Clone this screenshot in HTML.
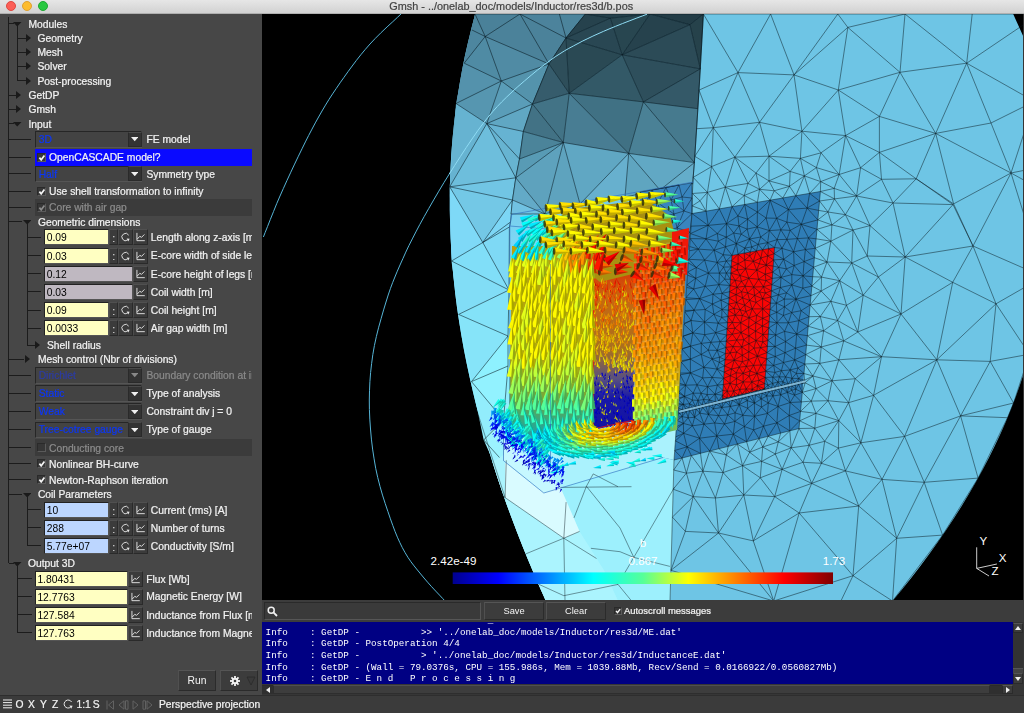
<!DOCTYPE html>
<html lang="en"><head><meta charset="utf-8"><title>Gmsh</title>
<style>
html,body{margin:0;padding:0;}
body{width:1024px;height:713px;overflow:hidden;background:#363636;position:relative;font-family:"Liberation Sans",sans-serif;font-size:10.3px;color:#f0f0f0;}
*{box-sizing:border-box;}
.abs{position:absolute;}
#title{will-change:transform;left:0;top:0;width:1024px;height:14px;background:linear-gradient(#e6e6e6,#d2d2d2);border-bottom:1px solid #b0b0b0;}
#title .t{left:-0.8px;width:1024px;top:0;height:13px;line-height:12.5px;text-align:center;color:#424242;font-size:10.87px;-webkit-text-stroke:0.2px #424242;}
.tl{width:10.2px;height:10.2px;border-radius:50%;top:0.5px;}
#panel{will-change:transform;left:0;top:14px;width:262.4px;height:683px;background:#474747;overflow:hidden;}
#sash{display:none;}
.lbl{white-space:nowrap;height:14px;line-height:14px;color:#f2f2f2;-webkit-text-stroke:0.22px currentColor;}
.ln{background:#1c1c1c;}
.inp{height:16px;border:1px solid #222;border-right-color:#555;border-bottom-color:#555;line-height:15.6px;padding-left:1.4px;color:#000;white-space:nowrap;overflow:hidden;}
.btn{height:16px;background:#3b3b3b;border:1px solid #2a2a2a;border-top-color:#505050;border-left-color:#4c4c4c;}
.clip{overflow:hidden;white-space:nowrap;}
#status{will-change:transform;left:0;top:695px;width:1024px;height:18px;background:#3b3b3b;border-top:1px solid #2e2e2e;}
#msgbar{will-change:transform;left:262.4px;top:600.4px;width:761.6px;height:21.6px;background:#3c3c3c;}
#msg{will-change:transform;left:262.4px;top:622px;width:750.6px;height:62px;background:#000083;overflow:hidden;font-family:"Liberation Mono",monospace;font-size:9.25px;color:#fff;}
#msg div{position:absolute;left:3.6px;white-space:pre;height:11.6px;line-height:11.6px;}
</style></head><body>
<div id="title" class="abs">
<div class="abs tl" style="left:6px;background:#fc5f57;border:0.5px solid #df4840"></div>
<div class="abs tl" style="left:22px;background:#fdbc2e;border:0.5px solid #dea032"></div>
<div class="abs tl" style="left:38px;background:#28c840;border:0.5px solid #1ea932"></div>
<div class="abs t">Gmsh - ../onelab_doc/models/Inductor/res3d/b.pos</div>
</div>
<div id="panel" class="abs">
<div class="abs ln" style="left:8.10px;top:3.00px;width:1px;height:546.00px"></div><div class="abs ln" style="left:9px;top:9.10px;width:5px;height:1px"></div><svg class="abs" style="left:13.45px;top:8.15px" width="8.5" height="4.5" viewBox="0 0 8.5 4.5"><polygon points="0,0 8.5,0 4.25,4.5" fill="#1a1a1a"/></svg><div class="abs lbl" style="left:28.4px;top:3.50px;">Modules</div><div class="abs ln" style="left:17.20px;top:12.00px;width:1px;height:55.00px"></div><div class="abs ln" style="left:17.7px;top:23.50px;width:8.3px;height:1px"></div><svg class="abs" style="left:25.50px;top:20.00px" width="5" height="8" viewBox="0 0 5 8"><polygon points="0,0 5,4.0 0,8" fill="#1a1a1a"/></svg><div class="abs lbl" style="left:37.5px;top:17.90px;">Geometry</div><div class="abs ln" style="left:17.7px;top:37.70px;width:8.3px;height:1px"></div><svg class="abs" style="left:25.50px;top:34.20px" width="5" height="8" viewBox="0 0 5 8"><polygon points="0,0 5,4.0 0,8" fill="#1a1a1a"/></svg><div class="abs lbl" style="left:37.5px;top:32.10px;">Mesh</div><div class="abs ln" style="left:17.7px;top:51.90px;width:8.3px;height:1px"></div><svg class="abs" style="left:25.50px;top:48.40px" width="5" height="8" viewBox="0 0 5 8"><polygon points="0,0 5,4.0 0,8" fill="#1a1a1a"/></svg><div class="abs lbl" style="left:37.5px;top:46.30px;">Solver</div><div class="abs ln" style="left:17.7px;top:66.30px;width:8.3px;height:1px"></div><svg class="abs" style="left:25.50px;top:62.80px" width="5" height="8" viewBox="0 0 5 8"><polygon points="0,0 5,4.0 0,8" fill="#1a1a1a"/></svg><div class="abs lbl" style="left:37.5px;top:60.70px;">Post-processing</div><div class="abs ln" style="left:9px;top:80.50px;width:5px;height:1px"></div><div class="abs ln" style="left:9px;top:80.50px;width:7px;height:1px"></div><svg class="abs" style="left:15.50px;top:77.00px" width="5" height="8" viewBox="0 0 5 8"><polygon points="0,0 5,4.0 0,8" fill="#1a1a1a"/></svg><div class="abs lbl" style="left:28.4px;top:74.90px;">GetDP</div><div class="abs ln" style="left:9px;top:94.70px;width:5px;height:1px"></div><div class="abs ln" style="left:9px;top:94.70px;width:7px;height:1px"></div><svg class="abs" style="left:15.50px;top:91.20px" width="5" height="8" viewBox="0 0 5 8"><polygon points="0,0 5,4.0 0,8" fill="#1a1a1a"/></svg><div class="abs lbl" style="left:28.4px;top:89.10px;">Gmsh</div><div class="abs ln" style="left:9px;top:109.10px;width:5px;height:1px"></div><svg class="abs" style="left:13.45px;top:108.15px" width="8.5" height="4.5" viewBox="0 0 8.5 4.5"><polygon points="0,0 8.5,0 4.25,4.5" fill="#1a1a1a"/></svg><div class="abs lbl" style="left:28.4px;top:103.50px;">Input</div><div class="abs ln" style="left:9px;top:124.70px;width:22px;height:1px"></div><div class="abs" style="left:34.8px;top:117.20px;width:107.5px;height:16.4px;background:#434343;border:1px solid #262626;border-bottom-color:#555;border-right-color:#555"></div><div class="abs lbl" style="left:38.7px;top:119.10px;color:#0c36f6;">3D</div><div class="abs" style="left:127.6px;top:118.00px;width:14px;height:14.8px;background:#333;border:1px solid #2a2a2a;border-top-color:#4a4a4a"></div><svg class="abs" style="left:130.85px;top:123.40px" width="7.5" height="4.2" viewBox="0 0 7.5 4.2"><polygon points="0,0 7.5,0 3.75,4.2" fill="#f0f0f0"/></svg><div class="abs lbl clip" style="left:146.4px;top:119.10px;width:105.6px;">FE model</div><div class="abs ln" style="left:9px;top:142.90px;width:22px;height:1px"></div><div class="abs" style="left:34.8px;top:135.20px;width:217.2px;height:16.4px;background:#0a0aff"></div><div class="abs" style="left:36.8px;top:138.60px;width:9.6px;height:9.6px;background:#363636;border:1px solid #2a2a2a;border-bottom-color:#5a5a5a;border-right-color:#5a5a5a"></div><svg class="abs" style="left:36.8px;top:138.60px" width="9.6" height="9.6" viewBox="0 0 9.6 9.6"><path d="M2.4 4.6L4.2 6.8L7.4 2.6" fill="none" stroke="#f4f4f4" stroke-width="1.7"/></svg><div class="abs lbl" style="left:49px;top:137.30px;">OpenCASCADE model?</div><div class="abs ln" style="left:9px;top:159.10px;width:22px;height:1px"></div><div class="abs" style="left:34.8px;top:151.60px;width:107.5px;height:16.4px;background:#434343;border:1px solid #262626;border-bottom-color:#555;border-right-color:#555"></div><div class="abs lbl" style="left:38.7px;top:153.50px;color:#0c36f6;">Half</div><div class="abs" style="left:127.6px;top:152.40px;width:14px;height:14.8px;background:#333;border:1px solid #2a2a2a;border-top-color:#4a4a4a"></div><svg class="abs" style="left:130.85px;top:157.80px" width="7.5" height="4.2" viewBox="0 0 7.5 4.2"><polygon points="0,0 7.5,0 3.75,4.2" fill="#f0f0f0"/></svg><div class="abs lbl clip" style="left:146.4px;top:153.50px;width:105.6px;">Symmetry type</div><div class="abs ln" style="left:9px;top:176.90px;width:22px;height:1px"></div><div class="abs" style="left:36.8px;top:172.60px;width:9.6px;height:9.6px;background:#363636;border:1px solid #2a2a2a;border-bottom-color:#5a5a5a;border-right-color:#5a5a5a"></div><svg class="abs" style="left:36.8px;top:172.60px" width="9.6" height="9.6" viewBox="0 0 9.6 9.6"><path d="M2.4 4.6L4.2 6.8L7.4 2.6" fill="none" stroke="#f4f4f4" stroke-width="1.7"/></svg><div class="abs lbl" style="left:49px;top:171.30px;">Use shell transformation to infinity</div><div class="abs ln" style="left:9px;top:192.90px;width:22px;height:1px"></div><div class="abs" style="left:34.8px;top:185.20px;width:217.2px;height:16.4px;background:#3b3b3b"></div><div class="abs" style="left:36.8px;top:188.60px;width:9.6px;height:9.6px;background:#363636;border:1px solid #2a2a2a;border-bottom-color:#5a5a5a;border-right-color:#5a5a5a"></div><svg class="abs" style="left:36.8px;top:188.60px" width="9.6" height="9.6" viewBox="0 0 9.6 9.6"><path d="M2.4 4.6L4.2 6.8L7.4 2.6" fill="none" stroke="#8c8c8c" stroke-width="1.7"/></svg><div class="abs lbl" style="left:49px;top:187.30px;color:#8c8c8c;">Core with air gap</div><div class="abs ln" style="left:9px;top:207.30px;width:13px;height:1px"></div><svg class="abs" style="left:22.75px;top:206.35px" width="8.5" height="4.5" viewBox="0 0 8.5 4.5"><polygon points="0,0 8.5,0 4.25,4.5" fill="#1a1a1a"/></svg><div class="abs lbl" style="left:37.9px;top:201.70px;">Geometric dimensions</div><div class="abs ln" style="left:26.50px;top:210.00px;width:1px;height:121.00px"></div><div class="abs ln" style="left:27px;top:222.90px;width:14px;height:1px"></div><div class="abs inp" style="left:44.3px;top:215.40px;width:64.9px;background:#ffffc2;color:#000">0.09</div><div class="abs btn" style="left:109.4px;top:215.40px;width:8.2px"><div class="abs" style="left:0;top:0.8px;width:6.6px;text-align:center;line-height:14px;color:#e4e4e4;font-size:11px">:</div></div><div class="abs btn" style="left:117.8px;top:215.40px;width:14.8px"><svg width="100%" height="100%" viewBox="0 0 14 14"><path d="M9.6 10.2A4 4 0 1 1 10.6 5" fill="none" stroke="#e8e8e8" stroke-width="1"/><polygon points="8.4,8.6 11.6,8.8 10.2,11.8" fill="#e8e8e8"/></svg></div><div class="abs btn" style="left:132.8px;top:215.40px;width:14.8px"><svg width="100%" height="100%" viewBox="0 0 14 14"><path d="M3.2 2.5V11H11.8" fill="none" stroke="#e8e8e8" stroke-width="1"/><path d="M3.6 9.2L6.4 6.2L8.2 7.4L11.4 4.2" fill="none" stroke="#e8e8e8" stroke-width="1"/></svg></div><div class="abs lbl clip" style="left:150.8px;top:217.30px;width:100.79999999999998px;">Length along z-axis [m]</div><div class="abs ln" style="left:27px;top:241.00px;width:14px;height:1px"></div><div class="abs inp" style="left:44.3px;top:233.50px;width:64.9px;background:#ffffc2;color:#000">0.03</div><div class="abs btn" style="left:109.4px;top:233.50px;width:8.2px"><div class="abs" style="left:0;top:0.8px;width:6.6px;text-align:center;line-height:14px;color:#e4e4e4;font-size:11px">:</div></div><div class="abs btn" style="left:117.8px;top:233.50px;width:14.8px"><svg width="100%" height="100%" viewBox="0 0 14 14"><path d="M9.6 10.2A4 4 0 1 1 10.6 5" fill="none" stroke="#e8e8e8" stroke-width="1"/><polygon points="8.4,8.6 11.6,8.8 10.2,11.8" fill="#e8e8e8"/></svg></div><div class="abs btn" style="left:132.8px;top:233.50px;width:14.8px"><svg width="100%" height="100%" viewBox="0 0 14 14"><path d="M3.2 2.5V11H11.8" fill="none" stroke="#e8e8e8" stroke-width="1"/><path d="M3.6 9.2L6.4 6.2L8.2 7.4L11.4 4.2" fill="none" stroke="#e8e8e8" stroke-width="1"/></svg></div><div class="abs lbl clip" style="left:150.8px;top:235.40px;width:100.79999999999998px;">E-core width of side legs [m]</div><div class="abs ln" style="left:27px;top:259.20px;width:14px;height:1px"></div><div class="abs inp" style="left:44.3px;top:251.70px;width:88.6px;background:#bfb8c1;color:#000">0.12</div><div class="abs btn" style="left:132.8px;top:251.70px;width:14.8px"><svg width="100%" height="100%" viewBox="0 0 14 14"><path d="M3.2 2.5V11H11.8" fill="none" stroke="#e8e8e8" stroke-width="1"/><path d="M3.6 9.2L6.4 6.2L8.2 7.4L11.4 4.2" fill="none" stroke="#e8e8e8" stroke-width="1"/></svg></div><div class="abs lbl clip" style="left:150.8px;top:253.60px;width:100.79999999999998px;">E-core height of legs [m]</div><div class="abs ln" style="left:27px;top:277.30px;width:14px;height:1px"></div><div class="abs inp" style="left:44.3px;top:269.80px;width:88.6px;background:#bfb8c1;color:#000">0.03</div><div class="abs btn" style="left:132.8px;top:269.80px;width:14.8px"><svg width="100%" height="100%" viewBox="0 0 14 14"><path d="M3.2 2.5V11H11.8" fill="none" stroke="#e8e8e8" stroke-width="1"/><path d="M3.6 9.2L6.4 6.2L8.2 7.4L11.4 4.2" fill="none" stroke="#e8e8e8" stroke-width="1"/></svg></div><div class="abs lbl clip" style="left:150.8px;top:271.70px;width:100.79999999999998px;">Coil width [m]</div><div class="abs ln" style="left:27px;top:295.50px;width:14px;height:1px"></div><div class="abs inp" style="left:44.3px;top:288.00px;width:64.9px;background:#ffffc2;color:#000">0.09</div><div class="abs btn" style="left:109.4px;top:288.00px;width:8.2px"><div class="abs" style="left:0;top:0.8px;width:6.6px;text-align:center;line-height:14px;color:#e4e4e4;font-size:11px">:</div></div><div class="abs btn" style="left:117.8px;top:288.00px;width:14.8px"><svg width="100%" height="100%" viewBox="0 0 14 14"><path d="M9.6 10.2A4 4 0 1 1 10.6 5" fill="none" stroke="#e8e8e8" stroke-width="1"/><polygon points="8.4,8.6 11.6,8.8 10.2,11.8" fill="#e8e8e8"/></svg></div><div class="abs btn" style="left:132.8px;top:288.00px;width:14.8px"><svg width="100%" height="100%" viewBox="0 0 14 14"><path d="M3.2 2.5V11H11.8" fill="none" stroke="#e8e8e8" stroke-width="1"/><path d="M3.6 9.2L6.4 6.2L8.2 7.4L11.4 4.2" fill="none" stroke="#e8e8e8" stroke-width="1"/></svg></div><div class="abs lbl clip" style="left:150.8px;top:289.90px;width:100.79999999999998px;">Coil height [m]</div><div class="abs ln" style="left:27px;top:313.70px;width:14px;height:1px"></div><div class="abs inp" style="left:44.3px;top:306.20px;width:64.9px;background:#ffffc2;color:#000">0.0033</div><div class="abs btn" style="left:109.4px;top:306.20px;width:8.2px"><div class="abs" style="left:0;top:0.8px;width:6.6px;text-align:center;line-height:14px;color:#e4e4e4;font-size:11px">:</div></div><div class="abs btn" style="left:117.8px;top:306.20px;width:14.8px"><svg width="100%" height="100%" viewBox="0 0 14 14"><path d="M9.6 10.2A4 4 0 1 1 10.6 5" fill="none" stroke="#e8e8e8" stroke-width="1"/><polygon points="8.4,8.6 11.6,8.8 10.2,11.8" fill="#e8e8e8"/></svg></div><div class="abs btn" style="left:132.8px;top:306.20px;width:14.8px"><svg width="100%" height="100%" viewBox="0 0 14 14"><path d="M3.2 2.5V11H11.8" fill="none" stroke="#e8e8e8" stroke-width="1"/><path d="M3.6 9.2L6.4 6.2L8.2 7.4L11.4 4.2" fill="none" stroke="#e8e8e8" stroke-width="1"/></svg></div><div class="abs lbl clip" style="left:150.8px;top:308.10px;width:100.79999999999998px;">Air gap width [m]</div><div class="abs ln" style="left:27px;top:330.50px;width:8px;height:1px"></div><svg class="abs" style="left:35.00px;top:327.00px" width="5" height="8" viewBox="0 0 5 8"><polygon points="0,0 5,4.0 0,8" fill="#1a1a1a"/></svg><div class="abs lbl" style="left:47px;top:324.90px;">Shell radius</div><div class="abs ln" style="left:9px;top:344.70px;width:15px;height:1px"></div><svg class="abs" style="left:24.50px;top:341.20px" width="5" height="8" viewBox="0 0 5 8"><polygon points="0,0 5,4.0 0,8" fill="#1a1a1a"/></svg><div class="abs lbl" style="left:37.9px;top:339.10px;">Mesh control (Nbr of divisions)</div><div class="abs ln" style="left:9px;top:360.70px;width:22px;height:1px"></div><div class="abs" style="left:34.8px;top:353.20px;width:107.5px;height:16.4px;background:#434343;border:1px solid #262626;border-bottom-color:#555;border-right-color:#555"></div><div class="abs lbl" style="left:38.7px;top:355.10px;color:#2c3ca4;">Dirichlet</div><div class="abs" style="left:127.6px;top:354.00px;width:14px;height:14.8px;background:#333;border:1px solid #2a2a2a;border-top-color:#4a4a4a"></div><svg class="abs" style="left:130.85px;top:359.40px" width="7.5" height="4.2" viewBox="0 0 7.5 4.2"><polygon points="0,0 7.5,0 3.75,4.2" fill="#888"/></svg><div class="abs lbl clip" style="left:146.4px;top:355.10px;color:#8a8a8a;width:105.6px;">Boundary condition at infinity</div><div class="abs ln" style="left:9px;top:378.80px;width:22px;height:1px"></div><div class="abs" style="left:34.8px;top:371.30px;width:107.5px;height:16.4px;background:#434343;border:1px solid #262626;border-bottom-color:#555;border-right-color:#555"></div><div class="abs lbl" style="left:38.7px;top:373.20px;color:#0c36f6;">Static</div><div class="abs" style="left:127.6px;top:372.10px;width:14px;height:14.8px;background:#333;border:1px solid #2a2a2a;border-top-color:#4a4a4a"></div><svg class="abs" style="left:130.85px;top:377.50px" width="7.5" height="4.2" viewBox="0 0 7.5 4.2"><polygon points="0,0 7.5,0 3.75,4.2" fill="#f0f0f0"/></svg><div class="abs lbl clip" style="left:146.4px;top:373.20px;width:105.6px;">Type of analysis</div><div class="abs ln" style="left:9px;top:396.90px;width:22px;height:1px"></div><div class="abs" style="left:34.8px;top:389.40px;width:107.5px;height:16.4px;background:#434343;border:1px solid #262626;border-bottom-color:#555;border-right-color:#555"></div><div class="abs lbl" style="left:38.7px;top:391.30px;color:#0c36f6;">Weak</div><div class="abs" style="left:127.6px;top:390.20px;width:14px;height:14.8px;background:#333;border:1px solid #2a2a2a;border-top-color:#4a4a4a"></div><svg class="abs" style="left:130.85px;top:395.60px" width="7.5" height="4.2" viewBox="0 0 7.5 4.2"><polygon points="0,0 7.5,0 3.75,4.2" fill="#f0f0f0"/></svg><div class="abs lbl clip" style="left:146.4px;top:391.30px;width:105.6px;">Constraint div j = 0</div><div class="abs ln" style="left:9px;top:415.00px;width:22px;height:1px"></div><div class="abs" style="left:34.8px;top:407.50px;width:107.5px;height:16.4px;background:#434343;border:1px solid #262626;border-bottom-color:#555;border-right-color:#555"></div><div class="abs lbl" style="left:38.7px;top:409.40px;color:#0c36f6;">Tree-cotree gauge</div><div class="abs" style="left:127.6px;top:408.30px;width:14px;height:14.8px;background:#333;border:1px solid #2a2a2a;border-top-color:#4a4a4a"></div><svg class="abs" style="left:130.85px;top:413.70px" width="7.5" height="4.2" viewBox="0 0 7.5 4.2"><polygon points="0,0 7.5,0 3.75,4.2" fill="#f0f0f0"/></svg><div class="abs lbl clip" style="left:146.4px;top:409.40px;width:105.6px;">Type of gauge</div><div class="abs ln" style="left:9px;top:433.10px;width:22px;height:1px"></div><div class="abs" style="left:34.8px;top:425.40px;width:217.2px;height:16.4px;background:#3b3b3b"></div><div class="abs" style="left:36.8px;top:428.80px;width:9.6px;height:9.6px;background:#363636;border:1px solid #2a2a2a;border-bottom-color:#5a5a5a;border-right-color:#5a5a5a"></div><div class="abs lbl" style="left:49px;top:427.50px;color:#8c8c8c;">Conducting core</div><div class="abs ln" style="left:9px;top:449.20px;width:22px;height:1px"></div><div class="abs" style="left:36.8px;top:444.90px;width:9.6px;height:9.6px;background:#363636;border:1px solid #2a2a2a;border-bottom-color:#5a5a5a;border-right-color:#5a5a5a"></div><svg class="abs" style="left:36.8px;top:444.90px" width="9.6" height="9.6" viewBox="0 0 9.6 9.6"><path d="M2.4 4.6L4.2 6.8L7.4 2.6" fill="none" stroke="#f4f4f4" stroke-width="1.7"/></svg><div class="abs lbl" style="left:49px;top:443.60px;">Nonlinear BH-curve</div><div class="abs ln" style="left:9px;top:465.10px;width:22px;height:1px"></div><div class="abs" style="left:36.8px;top:460.80px;width:9.6px;height:9.6px;background:#363636;border:1px solid #2a2a2a;border-bottom-color:#5a5a5a;border-right-color:#5a5a5a"></div><svg class="abs" style="left:36.8px;top:460.80px" width="9.6" height="9.6" viewBox="0 0 9.6 9.6"><path d="M2.4 4.6L4.2 6.8L7.4 2.6" fill="none" stroke="#f4f4f4" stroke-width="1.7"/></svg><div class="abs lbl" style="left:49px;top:459.50px;">Newton-Raphson iteration</div><div class="abs ln" style="left:9px;top:479.50px;width:13px;height:1px"></div><svg class="abs" style="left:22.75px;top:478.55px" width="8.5" height="4.5" viewBox="0 0 8.5 4.5"><polygon points="0,0 8.5,0 4.25,4.5" fill="#1a1a1a"/></svg><div class="abs lbl" style="left:37.9px;top:473.90px;">Coil Parameters</div><div class="abs ln" style="left:26.50px;top:482.00px;width:1px;height:50.00px"></div><div class="abs ln" style="left:27px;top:495.30px;width:14px;height:1px"></div><div class="abs inp" style="left:44.3px;top:487.80px;width:64.9px;background:#bcd6ff;color:#000">10</div><div class="abs btn" style="left:109.4px;top:487.80px;width:8.2px"><div class="abs" style="left:0;top:0.8px;width:6.6px;text-align:center;line-height:14px;color:#e4e4e4;font-size:11px">:</div></div><div class="abs btn" style="left:117.8px;top:487.80px;width:14.8px"><svg width="100%" height="100%" viewBox="0 0 14 14"><path d="M9.6 10.2A4 4 0 1 1 10.6 5" fill="none" stroke="#e8e8e8" stroke-width="1"/><polygon points="8.4,8.6 11.6,8.8 10.2,11.8" fill="#e8e8e8"/></svg></div><div class="abs btn" style="left:132.8px;top:487.80px;width:14.8px"><svg width="100%" height="100%" viewBox="0 0 14 14"><path d="M3.2 2.5V11H11.8" fill="none" stroke="#e8e8e8" stroke-width="1"/><path d="M3.6 9.2L6.4 6.2L8.2 7.4L11.4 4.2" fill="none" stroke="#e8e8e8" stroke-width="1"/></svg></div><div class="abs lbl clip" style="left:150.8px;top:489.70px;width:100.79999999999998px;">Current (rms) [A]</div><div class="abs ln" style="left:27px;top:513.30px;width:14px;height:1px"></div><div class="abs inp" style="left:44.3px;top:505.80px;width:64.9px;background:#bcd6ff;color:#000">288</div><div class="abs btn" style="left:109.4px;top:505.80px;width:8.2px"><div class="abs" style="left:0;top:0.8px;width:6.6px;text-align:center;line-height:14px;color:#e4e4e4;font-size:11px">:</div></div><div class="abs btn" style="left:117.8px;top:505.80px;width:14.8px"><svg width="100%" height="100%" viewBox="0 0 14 14"><path d="M9.6 10.2A4 4 0 1 1 10.6 5" fill="none" stroke="#e8e8e8" stroke-width="1"/><polygon points="8.4,8.6 11.6,8.8 10.2,11.8" fill="#e8e8e8"/></svg></div><div class="abs btn" style="left:132.8px;top:505.80px;width:14.8px"><svg width="100%" height="100%" viewBox="0 0 14 14"><path d="M3.2 2.5V11H11.8" fill="none" stroke="#e8e8e8" stroke-width="1"/><path d="M3.6 9.2L6.4 6.2L8.2 7.4L11.4 4.2" fill="none" stroke="#e8e8e8" stroke-width="1"/></svg></div><div class="abs lbl clip" style="left:150.8px;top:507.70px;width:100.79999999999998px;">Number of turns</div><div class="abs ln" style="left:27px;top:531.40px;width:14px;height:1px"></div><div class="abs inp" style="left:44.3px;top:523.90px;width:64.9px;background:#bcd6ff;color:#000">5.77e+07</div><div class="abs btn" style="left:109.4px;top:523.90px;width:8.2px"><div class="abs" style="left:0;top:0.8px;width:6.6px;text-align:center;line-height:14px;color:#e4e4e4;font-size:11px">:</div></div><div class="abs btn" style="left:117.8px;top:523.90px;width:14.8px"><svg width="100%" height="100%" viewBox="0 0 14 14"><path d="M9.6 10.2A4 4 0 1 1 10.6 5" fill="none" stroke="#e8e8e8" stroke-width="1"/><polygon points="8.4,8.6 11.6,8.8 10.2,11.8" fill="#e8e8e8"/></svg></div><div class="abs btn" style="left:132.8px;top:523.90px;width:14.8px"><svg width="100%" height="100%" viewBox="0 0 14 14"><path d="M3.2 2.5V11H11.8" fill="none" stroke="#e8e8e8" stroke-width="1"/><path d="M3.6 9.2L6.4 6.2L8.2 7.4L11.4 4.2" fill="none" stroke="#e8e8e8" stroke-width="1"/></svg></div><div class="abs lbl clip" style="left:150.8px;top:525.80px;width:100.79999999999998px;">Conductivity [S/m]</div><div class="abs ln" style="left:9px;top:548.50px;width:5px;height:1px"></div><svg class="abs" style="left:13.45px;top:547.55px" width="8.5" height="4.5" viewBox="0 0 8.5 4.5"><polygon points="0,0 8.5,0 4.25,4.5" fill="#1a1a1a"/></svg><div class="abs lbl" style="left:28px;top:542.90px;">Output 3D</div><div class="abs ln" style="left:17.20px;top:551.00px;width:1px;height:68.00px"></div><div class="abs ln" style="left:17.7px;top:564.10px;width:14.3px;height:1px"></div><div class="abs inp" style="left:35px;top:556.60px;width:93px;background:#ffffc2;color:#000">1.80431</div><div class="abs btn" style="left:128.3px;top:556.60px;width:14.8px"><svg width="100%" height="100%" viewBox="0 0 14 14"><path d="M3.2 2.5V11H11.8" fill="none" stroke="#e8e8e8" stroke-width="1"/><path d="M3.6 9.2L6.4 6.2L8.2 7.4L11.4 4.2" fill="none" stroke="#e8e8e8" stroke-width="1"/></svg></div><div class="abs lbl clip" style="left:146.2px;top:558.50px;width:105.4px;">Flux [Wb]</div><div class="abs ln" style="left:17.7px;top:582.00px;width:14.3px;height:1px"></div><div class="abs inp" style="left:35px;top:574.50px;width:93px;background:#ffffc2;color:#000">12.7763</div><div class="abs btn" style="left:128.3px;top:574.50px;width:14.8px"><svg width="100%" height="100%" viewBox="0 0 14 14"><path d="M3.2 2.5V11H11.8" fill="none" stroke="#e8e8e8" stroke-width="1"/><path d="M3.6 9.2L6.4 6.2L8.2 7.4L11.4 4.2" fill="none" stroke="#e8e8e8" stroke-width="1"/></svg></div><div class="abs lbl clip" style="left:146.2px;top:576.40px;width:105.4px;">Magnetic Energy [W]</div><div class="abs ln" style="left:17.7px;top:600.20px;width:14.3px;height:1px"></div><div class="abs inp" style="left:35px;top:592.70px;width:93px;background:#ffffc2;color:#000">127.584</div><div class="abs btn" style="left:128.3px;top:592.70px;width:14.8px"><svg width="100%" height="100%" viewBox="0 0 14 14"><path d="M3.2 2.5V11H11.8" fill="none" stroke="#e8e8e8" stroke-width="1"/><path d="M3.6 9.2L6.4 6.2L8.2 7.4L11.4 4.2" fill="none" stroke="#e8e8e8" stroke-width="1"/></svg></div><div class="abs lbl clip" style="left:146.2px;top:594.60px;width:105.4px;">Inductance from Flux [mH]</div><div class="abs ln" style="left:17.7px;top:618.40px;width:14.3px;height:1px"></div><div class="abs inp" style="left:35px;top:610.90px;width:93px;background:#ffffc2;color:#000">127.763</div><div class="abs btn" style="left:128.3px;top:610.90px;width:14.8px"><svg width="100%" height="100%" viewBox="0 0 14 14"><path d="M3.2 2.5V11H11.8" fill="none" stroke="#e8e8e8" stroke-width="1"/><path d="M3.6 9.2L6.4 6.2L8.2 7.4L11.4 4.2" fill="none" stroke="#e8e8e8" stroke-width="1"/></svg></div><div class="abs lbl clip" style="left:146.2px;top:612.80px;width:105.4px;">Inductance from Magnetic Energy [mH]</div><div class="abs" style="left:177.7px;top:655.7px;width:38.5px;height:21px;background:#3c3c3c;border:1px solid #2b2b2b;border-top-color:#555;border-left-color:#505050;text-align:center;line-height:19px;color:#f4f4f4">Run</div><div class="abs" style="left:220px;top:655.7px;width:38.4px;height:21px;background:#3c3c3c;border:1px solid #2b2b2b;border-top-color:#555;border-left-color:#505050"></div><svg class="abs" style="left:229px;top:660.5px" width="12" height="12" viewBox="-6 -6 12 12"><g fill="#f4f4f4"><rect x="-0.9" y="-5" width="1.8" height="10" transform="rotate(0)"/><rect x="-0.9" y="-5" width="1.8" height="10" transform="rotate(45)"/><rect x="-0.9" y="-5" width="1.8" height="10" transform="rotate(90)"/><rect x="-0.9" y="-5" width="1.8" height="10" transform="rotate(135)"/><circle r="3.2"/></g><circle r="1.3" fill="#3c3c3c"/></svg><svg class="abs" style="left:246px;top:661.5px" width="10" height="10" viewBox="0 0 10 10"><polygon points="1,1 9,1 5,9" fill="#3a3a3a" stroke="#2a2a2a" stroke-width="0.8"/></svg>
</div>
<div id="sash" class="abs"></div>
<div id="gl" class="abs" style="left:262.4px;top:14px;width:760.6px;height:585.6px;background:#000;overflow:hidden">
<div style="position:absolute;left:0.6px;top:0"><svg width="761" height="587" viewBox="263 14 761 587" style="display:block"><defs><linearGradient id="gsh" gradientUnits="userSpaceOnUse" x1="0" y1="14" x2="0" y2="601"><stop offset="0.0000" stop-color="#4a8098"/><stop offset="0.0784" stop-color="#4f8aa3"/><stop offset="0.1465" stop-color="#5899b3"/><stop offset="0.1976" stop-color="#62abc8"/><stop offset="0.2487" stop-color="#6bbbd9"/><stop offset="0.2998" stop-color="#72c8e8"/><stop offset="0.3680" stop-color="#7bd4f2"/><stop offset="0.4872" stop-color="#84e4fb"/><stop offset="0.6235" stop-color="#8cecfe"/><stop offset="0.7598" stop-color="#9df0fe"/><stop offset="0.9983" stop-color="#a6f3ff"/></linearGradient><linearGradient id="gin" gradientUnits="userSpaceOnUse" x1="0" y1="14" x2="0" y2="601"><stop offset="0.0017" stop-color="#233e48"/><stop offset="0.0528" stop-color="#294651"/><stop offset="0.1039" stop-color="#30525f"/><stop offset="0.1465" stop-color="#3a6475"/><stop offset="0.1891" stop-color="#44768a"/><stop offset="0.2317" stop-color="#5290a8"/><stop offset="0.2743" stop-color="#60a6c2"/><stop offset="0.3169" stop-color="#69b4d2"/><stop offset="0.3424" stop-color="#6cb9d8"/></linearGradient><linearGradient id="gbar" gradientUnits="userSpaceOnUse" x1="452.7" y1="0" x2="833" y2="0"><stop offset="0" stop-color="#00008f"/><stop offset="0.12" stop-color="#0000ff"/><stop offset="0.37" stop-color="#00ffff"/><stop offset="0.5" stop-color="#55ff99"/><stop offset="0.62" stop-color="#ffff00"/><stop offset="0.87" stop-color="#ff0000"/><stop offset="1" stop-color="#800000"/></linearGradient><clipPath id="cv"><rect x="263" y="14" width="761" height="587"/></clipPath></defs><rect x="263" y="14" width="761" height="587" fill="#000"/><g clip-path="url(#cv)"><polyline points="263.4,237.0 265.1,232.6 267.5,226.6 270.3,219.5 273.5,211.6 276.7,203.7 280.0,196.0 283.4,188.4 287.0,180.4 290.8,172.2 294.6,164.1 298.4,156.2 302.0,148.8 305.4,141.9 308.7,135.4 312.0,129.1 315.3,122.9 318.6,117.0 322.0,111.0 325.5,105.1 329.0,99.4 332.6,93.9 336.3,88.4 340.1,82.8 344.0,77.3 348.0,71.7 352.2,66.0 356.4,60.4 360.8,54.8 365.3,49.4 370.0,44.0 375.2,38.5 381.1,32.6 387.1,26.9 392.8,21.7 397.6,17.2 401.0,14.0" fill="none" stroke="#56b4d6" stroke-width="1"/><polygon points="475.2,14.0 471.5,28.0 468.1,42.0 464.9,56.0 462.1,70.0 459.6,84.0 457.4,98.0 455.4,112.0 453.8,126.0 452.4,140.0 451.3,154.0 450.5,168.0 450.0,182.0 449.8,196.0 449.8,210.0 450.1,224.0 450.6,238.0 451.4,252.0 452.5,266.0 453.8,280.0 455.3,294.0 457.1,308.0 459.2,322.0 461.5,336.0 464.0,350.0 466.8,364.0 469.8,378.0 473.0,392.0 476.4,406.0 480.1,420.0 484.0,434.0 488.1,448.0 492.4,462.0 496.9,476.0 501.6,490.0 506.5,504.0 511.7,518.0 517.0,532.0 522.5,546.0 528.2,560.0 534.1,574.0 540.1,588.0 545.9,601.0 892.5,601.0 901.6,590.0 911.2,578.0 920.4,566.0 929.3,554.0 937.9,542.0 946.2,530.0 954.1,518.0 961.7,506.0 968.9,494.0 975.9,482.0 982.5,470.0 988.8,458.0 994.7,446.0 1000.4,434.0 1005.7,422.0 1010.6,410.0 1015.3,398.0 1019.6,386.0 1023.6,374.0 1027.2,362.0 1030.6,350.0 1040.0,350.0 1040.0,60.0 1023.3,36.4 1013.2,14.0" fill="#6ec5e5"/><polygon points="475.2,14.0 471.5,28.0 468.1,42.0 464.9,56.0 462.1,70.0 459.6,84.0 457.4,98.0 455.4,112.0 453.8,126.0 452.4,140.0 451.3,154.0 450.5,168.0 450.0,182.0 449.8,196.0 449.8,210.0 450.1,224.0 450.6,238.0 451.4,252.0 452.5,266.0 453.8,280.0 455.3,294.0 457.1,308.0 459.2,322.0 461.5,336.0 464.0,350.0 466.8,364.0 469.8,378.0 473.0,392.0 476.4,406.0 480.1,420.0 484.0,434.0 488.1,448.0 492.4,462.0 496.9,476.0 501.6,490.0 506.5,504.0 511.7,518.0 517.0,532.0 522.5,546.0 528.2,560.0 534.1,574.0 540.1,588.0 545.9,601.0 670.0,601.0 674.0,460.0 692.0,213.6 692.6,184.0 703.4,14.0" fill="url(#gsh)"/><polyline points="647.0,14.2 642.8,15.8 636.9,18.0 629.9,20.7 622.6,23.5 615.4,26.4 609.0,29.0 603.4,31.4 598.0,33.8 592.9,36.1 587.9,38.5 582.9,40.9 578.0,43.5 573.3,46.0 568.8,48.4 564.4,50.9 560.0,53.7 555.2,56.8 550.0,60.5 544.1,64.9 537.7,69.9 531.1,75.3 524.4,81.0 517.9,86.6 512.0,92.0 506.7,97.0 501.8,101.8 497.2,106.6 492.7,111.7 488.0,117.2 483.0,123.6 477.6,130.9 472.0,139.0 466.2,147.6 460.4,156.5 454.7,165.4 449.3,174.0 444.0,182.5 438.8,191.2 433.7,199.9 428.8,208.4 424.1,216.7 419.8,224.5 415.9,231.9 412.3,238.9 408.9,245.6 405.8,252.1 402.9,258.6 400.0,265.0 397.3,271.2 394.9,277.0 392.6,282.7 390.4,288.6 388.2,295.0 386.0,302.0 383.6,309.9 381.2,318.3 378.7,327.2 376.4,336.4 374.4,345.6 372.8,354.7 371.6,363.7 370.6,372.6 369.9,381.7 369.5,390.8 369.3,400.0 369.4,409.4 369.8,419.1 370.5,429.0 371.4,439.1 372.6,449.1 374.1,458.9 375.7,468.3 377.7,477.4 380.0,486.4 382.5,495.1 385.2,503.5 387.9,511.5 390.4,518.8 392.8,525.5 395.1,531.6 397.4,537.2 399.8,542.5 402.3,547.6 405.0,552.5 407.9,557.3 410.9,561.7 414.1,565.9 417.4,570.0 420.7,574.0 424.0,578.0 427.6,582.2 431.6,586.7 435.7,591.1 439.5,595.1 442.7,598.5 445.0,601.0" fill="none" stroke="#56b4d6" stroke-width="1"/><polygon points="458.6,314.4 451.5,261.0 509.0,290.0" fill="#81ddf6"/><polygon points="456.0,103.5 464.2,63.2 501.3,81.0" fill="#5492ac"/><polygon points="520.0,14.0 485.2,36.5 475.0,14.0" fill="#4a8199"/><polygon points="464.2,63.2 485.2,36.5 501.3,81.0" fill="#4f8ba4"/><polygon points="485.2,36.5 549.0,64.0 501.3,81.0" fill="#508ba4"/><polygon points="549.0,64.0 485.2,36.5 520.0,14.0" fill="#4b829a"/><polygon points="486.8,123.6 456.0,103.5 501.3,81.0" fill="#5696b0"/><polygon points="456.0,103.5 486.8,123.6 449.7,186.8" fill="#66b3d1"/><polygon points="508.0,336.0 458.6,314.4 509.0,290.0" fill="#83e2f8"/><polygon points="508.0,336.0 471.5,381.6 458.6,314.4" fill="#86e4f9"/><polygon points="471.5,381.6 508.0,336.0 508.0,366.0" fill="#8ef1ff"/><polygon points="472.0,30.0 464.2,63.2 475.0,14.0" fill="#4c859d"/><polygon points="485.2,36.5 472.0,30.0 475.0,14.0" fill="#4d869e"/><polygon points="472.0,30.0 485.2,36.5 464.2,63.2" fill="#4d869f"/><polygon points="486.8,123.6 515.8,177.8 449.7,186.8" fill="#6dbedc"/><polygon points="515.8,177.8 486.8,123.6 519.5,159.0" fill="#67b4d1"/><polygon points="451.5,261.0 482.8,242.5 509.0,290.0" fill="#80def8"/><polygon points="482.8,242.5 451.5,261.0 449.7,186.8" fill="#7ed9f7"/><polygon points="549.0,64.0 532.5,104.0 501.3,81.0" fill="#5493ac"/><polygon points="532.5,104.0 486.8,123.6 501.3,81.0" fill="#5a9db8"/><polygon points="559.4,14.0 566.0,38.0 520.0,14.0" fill="#4c839c"/><polygon points="566.0,38.0 549.0,64.0 520.0,14.0" fill="#4b829a"/><polygon points="566.0,38.0 559.4,14.0 585.4,14.0" fill="#4c849c"/><polygon points="483.7,440.0 503.5,462.0 493.9,462.6" fill="#9df1ff"/><polygon points="515.8,177.8 512.5,200.0 449.7,186.8" fill="#71c5e4"/><polygon points="512.5,200.0 482.8,242.5 449.7,186.8" fill="#73c8e6"/><polygon points="482.8,242.5 512.5,200.0 510.5,222.0" fill="#7cd6f5"/><polygon points="482.8,242.5 509.4,227.0 509.0,290.0" fill="#7ed9f5"/><polygon points="509.4,227.0 482.8,242.5 510.5,222.0" fill="#7dd7f5"/><polygon points="486.8,123.6 523.4,131.5 519.5,159.0" fill="#66b3d2"/><polygon points="532.5,104.0 523.4,131.5 486.8,123.6" fill="#60a7c3"/><polygon points="503.5,420.0 471.5,381.6 508.0,366.0" fill="#92f2ff"/><polygon points="503.5,420.0 483.7,440.0 471.5,381.6" fill="#92edfc"/><polygon points="483.7,440.0 503.5,420.0 503.5,462.0" fill="#9cf3ff"/><path d="M585.4 14.0L566.0 38.0M585.4 14.0L559.4 14.0M566.0 38.0L549.0 64.0M566.0 38.0L559.4 14.0M566.0 38.0L520.0 14.0M549.0 64.0L532.5 104.0M549.0 64.0L485.2 36.5M549.0 64.0L501.3 81.0M549.0 64.0L520.0 14.0M532.5 104.0L523.4 131.5M532.5 104.0L501.3 81.0M532.5 104.0L486.8 123.6M523.4 131.5L519.5 159.0M523.4 131.5L486.8 123.6M519.5 159.0L515.8 177.8M519.5 159.0L486.8 123.6M515.8 177.8L512.5 200.0M515.8 177.8L486.8 123.6M515.8 177.8L449.7 186.8M512.5 200.0L510.5 222.0M512.5 200.0L449.7 186.8M512.5 200.0L482.8 242.5M510.5 222.0L482.8 242.5M510.5 222.0L509.4 227.0M485.2 36.5L501.3 81.0M485.2 36.5L464.2 63.2M485.2 36.5L472.0 30.0M485.2 36.5L475.0 14.0M485.2 36.5L520.0 14.0M501.3 81.0L486.8 123.6M501.3 81.0L456.0 103.5M501.3 81.0L464.2 63.2M486.8 123.6L449.7 186.8M486.8 123.6L456.0 103.5M449.7 186.8L482.8 242.5M475.0 14.0L520.0 14.0M559.4 14.0L520.0 14.0M482.8 242.5L451.5 261.0M482.8 242.5L509.4 227.0M482.8 242.5L509.0 290.0M451.5 261.0L509.0 290.0M458.6 314.4L508.0 336.0M458.6 314.4L509.0 290.0M471.5 381.6L508.0 336.0M471.5 381.6L508.0 366.0M471.5 381.6L503.5 420.0M509.4 227.0L509.0 290.0M508.0 336.0L508.0 366.0M508.0 336.0L509.0 290.0M508.0 366.0L503.5 420.0M483.7 440.0L503.5 420.0M483.7 440.0L503.5 462.0M503.5 420.0L503.5 462.0M503.5 462.0L493.9 462.6" stroke="#06141c" stroke-width="0.6" fill="none" opacity="0.9"/><polygon points="549.0,64.0 569.2,93.3 532.5,104.0" fill="#365c6c"/><polygon points="625.0,197.0 580.0,204.0 628.7,153.4" fill="#67b0ce"/><polygon points="650.0,14.0 610.4,18.2 585.4,14.0" fill="#24404b"/><polygon points="610.4,18.2 650.0,14.0 622.2,54.8" fill="#284650"/><polygon points="610.4,18.2 566.0,38.0 585.4,14.0" fill="#26424d"/><polygon points="566.0,38.0 610.4,18.2 622.2,54.8" fill="#294753"/><polygon points="569.2,93.3 566.0,38.0 622.2,54.8" fill="#2a4954"/><polygon points="566.0,38.0 569.2,93.3 549.0,64.0" fill="#2e4e5a"/><polygon points="580.0,204.0 563.3,142.5 628.7,153.4" fill="#60a7c3"/><polygon points="563.3,142.5 569.2,93.3 628.7,153.4" fill="#487d93"/><polygon points="569.2,93.3 563.3,142.5 532.5,104.0" fill="#427386"/><polygon points="690.0,24.7 650.0,14.0 703.4,14.0" fill="#223c46"/><polygon points="650.0,14.0 690.0,24.7 622.2,54.8" fill="#26424d"/><polygon points="643.4,101.9 694.4,162.6 628.7,153.4" fill="#4a8196"/><polygon points="569.2,93.3 643.4,101.9 628.7,153.4" fill="#407184"/><polygon points="643.4,101.9 569.2,93.3 622.2,54.8" fill="#335967"/><polygon points="545.0,214.0 563.3,142.5 580.0,204.0" fill="#5ea3be"/><polygon points="563.3,142.5 545.0,214.0 515.8,177.8" fill="#5ea2bd"/><polygon points="660.0,190.0 625.0,197.0 628.7,153.4" fill="#5fa5c0"/><polygon points="694.4,162.6 660.0,190.0 628.7,153.4" fill="#61a8c4"/><polygon points="660.0,190.0 694.4,162.6 692.6,184.0" fill="#64adca"/><polygon points="563.3,142.5 523.4,131.5 532.5,104.0" fill="#427285"/><polygon points="643.4,101.9 697.9,108.7 694.4,162.6" fill="#467a8e"/><polygon points="545.0,214.0 512.5,200.0 515.8,177.8" fill="#63aac7"/><polygon points="519.5,159.0 563.3,142.5 515.8,177.8" fill="#589bb5"/><polygon points="519.5,159.0 523.4,131.5 563.3,142.5" fill="#4b849a"/><polygon points="700.3,68.9 697.9,108.7 643.4,101.9" fill="#345968"/><polygon points="690.0,24.7 700.3,68.9 622.2,54.8" fill="#2c4b57"/><polygon points="700.3,68.9 643.4,101.9 622.2,54.8" fill="#2e4f5c"/><polygon points="700.3,68.9 690.0,24.7 703.4,14.0" fill="#26424b"/><polygon points="511.0,214.0 512.5,200.0 545.0,214.0" fill="#71c2e2"/><path d="M585.4 14.0L566.0 38.0M585.4 14.0L610.4 18.2M585.4 14.0L650.0 14.0M566.0 38.0L549.0 64.0M566.0 38.0L610.4 18.2M566.0 38.0L622.2 54.8M566.0 38.0L569.2 93.3M549.0 64.0L532.5 104.0M549.0 64.0L569.2 93.3M532.5 104.0L523.4 131.5M532.5 104.0L569.2 93.3M532.5 104.0L563.3 142.5M523.4 131.5L519.5 159.0M523.4 131.5L563.3 142.5M519.5 159.0L515.8 177.8M519.5 159.0L563.3 142.5M515.8 177.8L512.5 200.0M515.8 177.8L563.3 142.5M515.8 177.8L545.0 214.0M512.5 200.0L545.0 214.0M512.5 200.0L511.0 214.0M610.4 18.2L622.2 54.8M610.4 18.2L650.0 14.0M690.0 24.7L622.2 54.8M690.0 24.7L700.3 68.9M690.0 24.7L703.4 14.0M690.0 24.7L650.0 14.0M622.2 54.8L700.3 68.9M622.2 54.8L569.2 93.3M622.2 54.8L643.4 101.9M622.2 54.8L650.0 14.0M700.3 68.9L643.4 101.9M700.3 68.9L697.9 108.7M700.3 68.9L703.4 14.0M569.2 93.3L643.4 101.9M569.2 93.3L563.3 142.5M569.2 93.3L628.7 153.4M643.4 101.9L697.9 108.7M643.4 101.9L628.7 153.4M643.4 101.9L694.4 162.6M697.9 108.7L694.4 162.6M563.3 142.5L628.7 153.4M563.3 142.5L545.0 214.0M563.3 142.5L580.0 204.0M628.7 153.4L694.4 162.6M628.7 153.4L580.0 204.0M628.7 153.4L625.0 197.0M628.7 153.4L660.0 190.0M694.4 162.6L660.0 190.0M694.4 162.6L692.6 184.0M703.4 14.0L650.0 14.0M545.0 214.0L580.0 204.0M545.0 214.0L511.0 214.0M580.0 204.0L625.0 197.0M625.0 197.0L660.0 190.0M660.0 190.0L692.6 184.0" stroke="#06141c" stroke-width="0.6" fill="none" opacity="0.9"/><polyline points="647.0,14.2 642.8,15.8 636.9,18.0 629.9,20.7 622.6,23.5 615.4,26.4 609.0,29.0 603.4,31.4 598.0,33.8 592.9,36.1 587.9,38.5 582.9,40.9 578.0,43.5 573.3,46.0 568.8,48.4 564.4,50.9 560.0,53.7 555.2,56.8 550.0,60.5 544.1,64.9 537.7,69.9 531.1,75.3 524.4,81.0 517.9,86.6 512.0,92.0 506.7,97.0 501.8,101.8 497.2,106.6 492.7,111.7 488.0,117.2 483.0,123.6 477.6,130.9 472.0,139.0 466.2,147.6 460.4,156.5 454.7,165.4 449.3,174.0" fill="none" stroke="#8fdcf4" stroke-width="1"/><polygon points="640.0,192.0 692.0,182.8 692.0,213.6 674.0,460.0 655.0,464.0 640.0,250.0" fill="#3885bf"/><path d="M640.0 192.0L652.0 190.0M640.0 192.0L679.0 185.0M640.0 192.0L645.0 205.0M640.0 192.0L648.0 220.0M652.0 190.0L666.0 187.5M652.0 190.0L679.0 185.0M652.0 190.0L645.0 205.0M652.0 190.0L658.0 203.0M666.0 187.5L679.0 185.0M666.0 187.5L658.0 203.0M666.0 187.5L671.0 200.0M679.0 185.0L692.0 182.8M679.0 185.0L671.0 200.0M679.0 185.0L682.0 197.0M692.0 182.8L692.0 198.0M692.0 182.8L682.0 197.0M692.0 198.0L692.0 213.6M692.0 198.0L682.0 197.0M692.0 198.0L684.0 211.0M692.0 213.6L690.0 232.0M692.0 213.6L684.0 211.0M692.0 213.6L677.0 228.0M690.0 232.0L688.0 250.0M690.0 232.0L677.0 228.0M690.0 232.0L680.0 242.0M688.0 250.0L657.0 248.0M688.0 250.0L669.0 245.0M688.0 250.0L680.0 242.0M645.0 205.0L658.0 203.0M645.0 205.0L648.0 220.0M658.0 203.0L671.0 200.0M658.0 203.0L648.0 220.0M658.0 203.0L661.0 217.0M658.0 203.0L674.0 214.0M671.0 200.0L682.0 197.0M671.0 200.0L674.0 214.0M671.0 200.0L684.0 211.0M682.0 197.0L684.0 211.0M648.0 220.0L661.0 217.0M648.0 220.0L652.0 234.0M661.0 217.0L674.0 214.0M661.0 217.0L652.0 234.0M661.0 217.0L665.0 231.0M674.0 214.0L684.0 211.0M674.0 214.0L665.0 231.0M674.0 214.0L677.0 228.0M684.0 211.0L677.0 228.0M652.0 234.0L665.0 231.0M652.0 234.0L657.0 248.0M665.0 231.0L677.0 228.0M665.0 231.0L657.0 248.0M665.0 231.0L669.0 245.0M665.0 231.0L680.0 242.0M677.0 228.0L680.0 242.0M657.0 248.0L669.0 245.0M669.0 245.0L680.0 242.0" stroke="#06141c" stroke-width="0.55" fill="none" opacity="0.85"/><polygon points="692.0,213.6 820.4,191.5 799.0,428.5 674.0,460.0" fill="#2f7db6"/><polygon points="732.0,255.4 774.5,247.5 764.4,389.0 722.3,399.0" fill="#fb0505"/><polygon points="503.5,420.0 503.5,460.6 543.8,493.0 663.0,457.5 674.0,460.0 676.0,430.0 520.0,430.0" fill="#aaf2fd"/><polygon points="543.8,493.0 663.0,457.5 674.0,460.0 670.0,601.0 618.0,601.0 604.4,571.0 579.6,531.4 560.4,487.4" fill="#9df0fd"/><polygon points="492.4,462.0 496.9,476.0 501.6,490.0 506.5,504.0 511.7,518.0 517.0,532.0 522.5,546.0 528.2,560.0 534.1,574.0 540.1,588.0 545.9,601.0 618.0,601.0 604.4,571.0 579.6,531.4 560.4,487.4 543.8,493.0 503.5,460.6 503.5,455.0" fill="#abf4fe"/><polygon points="503.5,440.0 503.5,460.6 543.8,493.0 562.0,487.6 540.0,466.0" fill="#c6f8ff"/><polygon points="505.1,497.6 505.0,462.0 543.8,493.0 560.4,487.4 579.6,531.4 563.8,538.2" fill="#d9fbff"/><path d="M505.1 497.6L563.8 538.2M505.1 497.6L506.3 460.3M505.1 497.6L499.5 493.0M563.8 538.2L525.5 554.0M563.8 538.2L579.6 531.4M563.8 538.2L566.1 502.1M563.8 538.2L596.5 558.5M563.8 538.2L565.0 600.9M586.4 486.3L574.0 517.9M586.4 486.3L620.0 528.0M560.4 487.4L631.5 486.7M590.9 548.3L620.0 551.7M539.0 584.4L563.8 595.7M563.8 595.7L618.0 584.4M620.0 528.0L633.8 557.4M633.8 557.4L620.0 551.7M633.8 557.4L674.4 487.4M633.8 557.4L618.0 584.4M633.8 557.4L669.9 566.4M618.0 584.4L631.5 600.9M593.2 473.9L586.4 486.3M593.2 473.9L618.0 486.7M471 392.4L505.1 497.6" stroke="#06141c" stroke-width="0.55" fill="none" opacity="0.8"/><path d="M706.1 211.2L719.3 208.9M706.1 211.2L692.0 213.6M706.1 211.2L692.2 205.9M706.1 211.2L708.2 225.4M706.1 211.2L707.4 192.4M706.1 211.2L700.0 200.8M719.3 208.9L732.0 206.7M719.3 208.9L725.3 187.2M719.3 208.9L708.2 225.4M719.3 208.9L726.5 223.6M719.3 208.9L707.4 192.4M732.0 206.7L744.7 204.5M732.0 206.7L725.3 187.2M732.0 206.7L726.5 223.6M732.0 206.7L737.9 216.0M732.0 206.7L744.2 195.5M744.7 204.5L757.4 202.3M744.7 204.5L757.4 212.1M744.7 204.5L737.9 216.0M744.7 204.5L744.2 195.5M744.7 204.5L747.6 219.2M757.4 202.3L770.1 200.2M757.4 202.3L759.6 189.3M757.4 202.3L757.4 212.1M757.4 202.3L744.2 195.5M770.1 200.2L782.8 198.0M770.1 200.2L776.6 218.3M770.1 200.2L759.6 189.3M770.1 200.2L788.4 209.5M770.1 200.2L774.2 190.8M770.1 200.2L757.4 212.1M770.1 200.2L766.1 218.0M782.8 198.0L795.8 195.7M782.8 198.0L788.4 209.5M782.8 198.0L774.2 190.8M782.8 198.0L789.5 186.3M795.8 195.7L809.6 193.4M795.8 195.7L804.4 175.9M795.8 195.7L788.4 209.5M795.8 195.7L789.5 186.3M795.8 195.7L807.1 208.1M809.6 193.4L820.4 191.5M809.6 193.4L819.5 201.0M809.6 193.4L804.4 175.9M809.6 193.4L820.7 181.6M809.6 193.4L807.1 208.1M820.4 191.5L819.5 201.0M820.4 191.5L834.5 198.9M820.4 191.5L820.7 181.6M820.4 191.5L834.2 188.4M819.5 201.0L818.7 210.4M819.5 201.0L834.5 198.9M819.5 201.0L807.1 208.1M819.5 201.0L828.0 212.0M818.7 210.4L817.8 219.9M818.7 210.4L807.1 208.1M818.7 210.4L828.0 212.0M817.8 219.9L817.0 229.3M817.8 219.9L801.3 224.3M817.8 219.9L831.9 224.9M817.8 219.9L807.1 208.1M817.8 219.9L828.0 212.0M817.0 229.3L816.1 238.8M817.0 229.3L830.9 241.2M817.0 229.3L801.3 224.3M817.0 229.3L831.9 224.9M817.0 229.3L808.5 237.9M816.1 238.8L815.3 248.3M816.1 238.8L830.9 241.2M816.1 238.8L808.5 237.9M815.3 248.3L814.4 257.7M815.3 248.3L830.9 241.2M815.3 248.3L827.0 262.0M815.3 248.3L805.4 249.5M815.3 248.3L808.5 237.9M814.4 257.7L813.6 267.2M814.4 257.7L804.1 261.6M814.4 257.7L827.0 262.0M814.4 257.7L805.4 249.5M813.6 267.2L812.7 276.7M813.6 267.2L804.1 261.6M813.6 267.2L827.0 262.0M813.6 267.2L821.5 277.1M813.6 267.2L803.0 275.8M812.7 276.7L811.9 286.1M812.7 276.7L821.5 277.1M812.7 276.7L803.0 275.8M811.9 286.1L811.0 295.6M811.9 286.1L821.5 277.1M811.9 286.1L821.2 291.0M811.9 286.1L802.8 288.2M811.9 286.1L803.0 275.8M811.0 295.6L810.1 305.0M811.0 295.6L796.0 299.1M811.0 295.6L821.2 291.0M811.0 295.6L802.8 288.2M810.1 305.0L809.1 316.7M810.1 305.0L830.9 301.3M810.1 305.0L796.0 299.1M810.1 305.0L801.1 310.7M810.1 305.0L821.2 291.0M810.1 305.0L820.3 316.5M809.1 316.7L808.2 326.2M809.1 316.7L801.1 310.7M809.1 316.7L798.9 320.6M809.1 316.7L820.3 316.5M808.2 326.2L807.4 335.7M808.2 326.2L823.6 330.8M808.2 326.2L798.9 320.6M808.2 326.2L796.7 334.1M808.2 326.2L820.3 316.5M807.4 335.7L806.5 345.1M807.4 335.7L821.2 347.0M807.4 335.7L823.6 330.8M807.4 335.7L796.7 334.1M806.5 345.1L805.7 354.6M806.5 345.1L821.2 347.0M806.5 345.1L795.5 348.2M806.5 345.1L796.7 334.1M805.7 354.6L804.8 364.0M805.7 354.6L821.2 347.0M805.7 354.6L794.6 359.9M805.7 354.6L819.8 363.4M805.7 354.6L795.5 348.2M804.8 364.0L804.0 373.5M804.8 364.0L794.6 359.9M804.8 364.0L819.8 363.4M804.8 364.0L797.9 368.0M804.8 364.0L812.9 376.0M804.0 373.5L804.6 380.2M804.0 373.5L798.6 378.5M804.0 373.5L797.9 368.0M804.0 373.5L796.3 373.4M804.0 373.5L812.9 376.0M803.1 383.0L801.3 381.0M803.1 383.0L804.6 380.2M803.1 383.0L801.9 383.6M803.1 383.0L805.2 382.8M802.3 392.4L801.4 401.9M802.3 392.4L798.6 384.4M802.3 392.4L801.9 383.6M802.3 392.4L805.2 382.8M802.3 392.4L816.1 388.6M802.3 392.4L794.6 395.2M802.3 392.4L811.3 401.1M802.3 392.4L795.8 389.2M801.4 401.9L800.5 411.4M801.4 401.9L790.1 402.5M801.4 401.9L794.6 395.2M801.4 401.9L811.3 401.1M800.5 411.4L799.7 420.8M800.5 411.4L816.0 413.4M800.5 411.4L790.1 402.5M800.5 411.4L789.2 415.5M800.5 411.4L811.3 401.1M799.7 420.8L799.0 428.5M799.7 420.8L789.8 430.8M799.7 420.8L814.8 428.2M799.7 420.8L816.0 413.4M799.7 420.8L789.2 415.5M799.0 428.5L789.8 430.8M799.0 428.5L791.2 447.8M799.0 428.5L814.8 428.2M799.0 428.5L809.1 445.3M789.8 430.8L780.6 433.1M789.8 430.8L776.9 422.8M789.8 430.8L791.2 447.8M789.8 430.8L789.2 415.5M789.8 430.8L778.3 441.9M780.6 433.1L768.2 436.3M780.6 433.1L776.9 422.8M780.6 433.1L778.3 441.9M768.2 436.3L759.0 438.6M768.2 436.3L776.9 422.8M768.2 436.3L762.7 447.0M768.2 436.3L763.5 426.2M768.2 436.3L778.3 441.9M759.0 438.6L746.6 441.7M759.0 438.6L762.7 447.0M759.0 438.6L753.6 429.9M759.0 438.6L749.7 452.3M759.0 438.6L763.5 426.2M746.6 441.7L737.4 444.0M746.6 441.7L733.3 434.2M746.6 441.7L753.6 429.9M746.6 441.7L749.7 452.3M746.6 441.7L744.4 426.5M737.4 444.0L728.2 446.4M737.4 444.0L742.5 465.7M737.4 444.0L733.3 434.2M737.4 444.0L749.7 452.3M737.4 444.0L726.3 455.0M728.2 446.4L718.9 448.7M728.2 446.4L733.3 434.2M728.2 446.4L716.8 436.0M728.2 446.4L726.3 455.0M718.9 448.7L709.7 451.0M718.9 448.7L716.8 436.0M718.9 448.7L726.3 455.0M709.7 451.0L700.5 453.3M709.7 451.0L723.1 472.6M709.7 451.0L716.8 436.0M709.7 451.0L699.6 438.2M709.7 451.0L702.9 471.2M709.7 451.0L726.3 455.0M700.5 453.3L691.3 455.6M700.5 453.3L699.6 438.2M700.5 453.3L687.1 446.8M700.5 453.3L702.9 471.2M691.3 455.6L682.1 458.0M691.3 455.6L686.4 473.2M691.3 455.6L687.1 446.8M691.3 455.6L702.9 471.2M682.1 458.0L674.0 460.0M682.1 458.0L674.7 450.5M682.1 458.0L673.7 470.0M682.1 458.0L686.4 473.2M682.1 458.0L687.1 446.8M674.0 460.0L674.7 450.5M674.0 460.0L673.7 470.0M674.7 450.5L675.4 440.9M674.7 450.5L687.1 446.8M675.7 436.9L675.4 440.9M675.7 436.9L676.3 429.1M675.7 436.9L683.6 433.3M676.4 426.7L676.3 429.1M676.4 426.7L676.9 420.4M676.4 426.7L683.4 423.4M677.1 417.2L679.6 413.1M677.1 417.2L676.9 420.4M677.1 417.2L677.4 414.0M677.1 417.2L682.2 416.6M677.5 411.9L679.0 410.5M677.5 411.9L679.6 413.1M677.5 411.9L677.4 414.0M677.5 411.9L677.7 409.2M677.8 407.8L679.0 410.5M677.8 407.8L682.3 409.7M677.8 407.8L677.7 409.2M677.8 407.8L678.0 405.0M677.8 407.8L683.4 404.4M678.1 403.4L678.0 405.0M678.1 403.4L678.4 399.7M678.1 403.4L683.4 404.4M678.5 398.1L678.4 399.7M678.5 398.1L678.9 393.2M678.5 398.1L684.5 396.4M679.0 391.5L678.9 393.2M679.0 391.5L679.5 385.0M679.0 391.5L684.5 396.4M679.0 391.5L685.6 385.2M679.6 383.3L679.5 385.0M679.6 383.3L680.2 374.8M679.6 383.3L685.6 385.2M680.3 373.1L680.2 374.8M680.3 373.1L681.2 362.0M680.3 373.1L690.4 372.9M681.2 360.8L681.2 362.0M681.2 360.8L682.1 349.1M681.2 360.8L690.4 359.1M682.1 348.6L683.0 336.3M682.1 348.6L690.5 346.2M683.0 336.3L690.5 346.2M683.0 336.3L692.8 332.8M683.9 324.1L683.0 336.2M683.9 324.1L691.1 320.5M683.9 324.1L692.8 332.8M684.8 311.9L684.0 323.4M684.8 311.9L684.9 310.5M684.8 311.9L691.1 320.5M684.8 311.9L694.1 310.2M685.7 299.6L684.9 310.5M685.7 299.6L685.9 297.7M685.7 299.6L699.6 298.7M685.7 299.6L694.1 310.2M686.6 287.4L685.9 297.7M686.6 287.4L686.8 284.9M686.6 287.4L693.7 289.0M687.5 275.2L686.8 284.9M687.5 275.2L687.7 272.1M687.5 275.2L695.7 278.3M688.4 263.0L687.7 272.1M688.4 263.0L688.7 259.3M688.4 263.0L696.3 267.5M689.3 250.8L688.7 259.3M689.3 250.8L689.6 246.5M689.3 250.8L698.3 249.1M690.2 238.6L689.6 246.5M690.2 238.6L690.5 233.6M690.2 238.6L698.3 249.1M690.2 238.6L706.0 238.9M691.1 226.2L692.0 213.6M691.1 226.2L690.5 233.6M691.1 226.2L708.2 225.4M732.0 255.4L738.1 254.3M732.0 255.4L731.6 260.8M732.0 255.4L725.5 246.8M732.0 255.4L736.3 243.6M732.0 255.4L723.2 254.7M732.0 255.4L726.2 261.0M738.1 254.3L744.2 253.1M738.1 254.3L731.6 260.8M738.1 254.3L744.8 248.1M738.1 254.3L736.3 243.6M738.1 254.3L744.8 260.1M738.1 254.3L738.1 263.9M744.2 253.1L750.3 252.0M744.2 253.1L749.7 255.9M744.2 253.1L744.8 248.1M744.2 253.1L744.8 260.1M750.3 252.0L756.4 250.9M750.3 252.0L749.7 255.9M750.3 252.0L744.8 248.1M750.3 252.0L751.7 246.9M756.4 250.9L762.5 249.7M756.4 250.9L760.9 258.0M756.4 250.9L753.3 261.4M756.4 250.9L758.2 244.4M756.4 250.9L749.7 255.9M756.4 250.9L751.7 246.9M762.5 249.7L768.6 248.6M762.5 249.7L760.9 258.0M762.5 249.7L767.6 242.6M762.5 249.7L758.2 244.4M762.5 249.7L767.7 255.9M768.6 248.6L774.5 247.5M768.6 248.6L774.1 253.7M768.6 248.6L767.6 242.6M768.6 248.6L767.7 255.9M774.5 247.5L774.1 253.7M774.5 247.5L782.0 248.4M774.5 247.5L767.6 242.6M774.5 247.5L777.1 239.6M774.1 253.7L773.6 259.9M774.1 253.7L783.7 259.3M774.1 253.7L782.0 248.4M774.1 253.7L767.7 255.9M773.6 259.9L773.2 266.1M773.6 259.9L783.7 259.3M773.6 259.9L778.7 267.4M773.6 259.9L766.2 265.1M773.6 259.9L767.7 255.9M773.2 266.1L772.7 272.2M773.2 266.1L778.7 267.4M773.2 266.1L766.2 265.1M772.7 272.2L772.3 278.4M772.7 272.2L778.7 267.4M772.7 272.2L765.2 274.2M772.7 272.2L766.2 265.1M772.7 272.2L781.0 277.4M772.3 278.4L771.9 284.6M772.3 278.4L765.2 274.2M772.3 278.4L781.0 277.4M772.3 278.4L765.9 280.6M771.9 284.6L771.4 290.8M771.9 284.6L780.4 287.5M771.9 284.6L763.4 286.7M771.9 284.6L781.0 277.4M771.9 284.6L765.9 280.6M771.4 290.8L771.0 297.0M771.4 290.8L780.4 287.5M771.4 290.8L765.4 293.0M771.4 290.8L778.4 294.9M771.4 290.8L763.4 286.7M771.0 297.0L770.5 303.2M771.0 297.0L765.4 293.0M771.0 297.0L762.6 298.7M771.0 297.0L778.4 294.9M771.0 297.0L776.4 303.2M770.5 303.2L770.1 309.3M770.5 303.2L762.6 298.7M770.5 303.2L762.6 308.9M770.5 303.2L776.4 303.2M770.1 309.3L769.6 315.5M770.1 309.3L776.7 312.3M770.1 309.3L762.6 308.9M770.1 309.3L776.4 303.2M769.6 315.5L769.2 321.7M769.6 315.5L762.7 318.3M769.6 315.5L777.0 322.8M769.6 315.5L776.7 312.3M769.6 315.5L762.6 308.9M769.2 321.7L768.8 327.9M769.2 321.7L762.7 318.3M769.2 321.7L777.0 322.8M769.2 321.7L762.3 326.0M768.8 327.9L768.3 334.1M768.8 327.9L775.6 335.0M768.8 327.9L762.9 334.6M768.8 327.9L777.0 322.8M768.8 327.9L762.3 326.0M768.3 334.1L767.9 340.3M768.3 334.1L775.6 335.0M768.3 334.1L762.9 334.6M767.9 340.3L767.4 346.4M767.9 340.3L775.1 346.5M767.9 340.3L775.6 335.0M767.9 340.3L762.9 334.6M767.9 340.3L762.7 341.9M767.4 346.4L767.0 352.6M767.4 346.4L775.1 346.5M767.4 346.4L760.5 347.7M767.4 346.4L762.7 341.9M767.0 352.6L766.6 358.8M767.0 352.6L757.3 356.2M767.0 352.6L775.1 346.5M767.0 352.6L760.5 347.7M767.0 352.6L775.3 356.5M766.6 358.8L766.1 365.0M766.6 358.8L757.3 356.2M766.6 358.8L773.7 365.4M766.6 358.8L775.3 356.5M766.6 358.8L761.0 365.0M766.1 365.0L765.7 371.2M766.1 365.0L773.7 365.4M766.1 365.0L761.0 365.0M765.7 371.2L765.2 377.4M765.7 371.2L773.7 365.4M765.7 371.2L774.9 372.4M765.7 371.2L761.0 365.0M765.7 371.2L756.9 373.5M765.7 371.2L772.8 377.2M765.2 377.4L764.8 383.6M765.2 377.4L759.0 380.3M765.2 377.4L767.9 385.0M765.2 377.4L756.9 373.5M765.2 377.4L772.8 377.2M765.2 377.4L772.7 383.4M764.8 383.6L764.4 388.7M764.8 383.6L759.0 380.3M764.8 383.6L767.9 385.0M764.8 383.6L757.4 385.7M764.4 388.7L764.4 389.0M764.4 388.7L760.7 389.9M764.4 388.7L761.6 390.6M764.4 388.7L764.9 389.8M764.4 388.7L768.2 389.0M764.4 388.7L767.9 385.0M764.4 388.7L757.4 385.7M764.4 389.0L761.6 390.6M764.4 389.0L764.9 389.8M760.7 389.9L757.0 390.8M760.7 389.9L758.3 391.4M760.7 389.9L761.6 390.6M760.7 389.9L757.4 385.7M757.0 390.8L753.2 391.7M757.0 390.8L755.0 392.2M757.0 390.8L758.3 391.4M757.0 390.8L752.2 389.1M757.0 390.8L757.4 385.7M753.2 391.7L751.7 393.0M753.2 391.7L755.0 392.2M753.2 391.7L752.2 389.1M749.5 392.5L745.8 393.4M749.5 392.5L748.4 393.8M749.5 392.5L751.7 393.0M749.5 392.5L752.2 389.1M749.5 392.5L746.2 388.9M745.8 393.4L742.0 394.3M745.8 393.4L745.1 394.6M745.8 393.4L748.4 393.8M745.8 393.4L746.2 388.9M742.0 394.3L738.3 395.2M742.0 394.3L741.8 395.4M742.0 394.3L745.1 394.6M742.0 394.3L746.2 388.9M742.0 394.3L739.8 389.4M738.3 395.2L734.6 396.1M738.3 395.2L735.2 397.0M738.3 395.2L738.5 396.2M738.3 395.2L741.8 395.4M738.3 395.2L739.8 389.4M738.3 395.2L733.7 391.0M734.6 396.1L730.8 397.0M734.6 396.1L731.9 397.7M734.6 396.1L735.2 397.0M734.6 396.1L733.7 391.0M730.8 397.0L727.1 397.9M730.8 397.0L728.6 398.5M730.8 397.0L731.9 397.7M730.8 397.0L733.7 391.0M730.8 397.0L727.2 391.2M727.1 397.9L723.3 398.8M727.1 397.9L722.6 395.2M727.1 397.9L725.3 399.3M727.1 397.9L728.6 398.5M727.1 397.9L727.2 391.2M723.3 398.8L722.3 399.0M723.3 398.8L722.6 395.2M723.3 398.8L722.0 400.1M723.3 398.8L725.3 399.3M722.3 399.0L722.6 395.2M722.3 399.0L718.7 400.9M722.3 399.0L722.0 400.1M722.6 395.2L722.9 390.4M722.6 395.2L718.7 400.9M722.6 395.2L715.0 394.2M722.6 395.2L727.2 391.2M722.9 390.4L723.3 384.5M722.9 390.4L715.0 394.2M722.9 390.4L727.2 391.2M722.9 390.4L717.4 385.1M723.3 384.5L723.7 378.3M723.3 384.5L727.2 391.2M723.3 384.5L730.0 383.4M723.3 384.5L717.4 385.1M723.7 378.3L724.1 372.1M723.7 378.3L712.2 377.4M723.7 378.3L717.0 369.1M723.7 378.3L730.3 375.7M723.7 378.3L730.0 383.4M723.7 378.3L717.4 385.1M724.1 372.1L724.5 365.9M724.1 372.1L717.0 369.1M724.1 372.1L730.3 375.7M724.1 372.1L731.6 369.0M724.5 365.9L725.0 359.7M724.5 365.9L719.3 362.4M724.5 365.9L717.0 369.1M724.5 365.9L731.6 369.0M724.5 365.9L734.2 360.2M725.0 359.7L725.4 353.6M725.0 359.7L719.3 362.4M725.0 359.7L719.5 357.2M725.0 359.7L730.2 352.9M725.0 359.7L734.2 360.2M725.4 353.6L725.8 347.4M725.4 353.6L717.2 350.4M725.4 353.6L719.5 357.2M725.4 353.6L730.2 352.9M725.8 347.4L726.2 341.2M725.8 347.4L720.1 341.6M725.8 347.4L717.2 350.4M725.8 347.4L730.2 352.9M725.8 347.4L733.1 346.5M726.2 341.2L726.6 335.0M726.2 341.2L720.1 341.6M726.2 341.2L736.7 340.0M726.2 341.2L733.1 346.5M726.2 341.2L732.3 334.2M726.6 335.0L727.0 328.8M726.6 335.0L720.1 341.6M726.6 335.0L715.6 332.7M726.6 335.0L732.3 334.2M727.0 328.8L727.5 322.6M727.0 328.8L718.1 323.2M727.0 328.8L734.9 328.2M727.0 328.8L732.4 322.4M727.0 328.8L715.6 332.7M727.0 328.8L732.3 334.2M727.5 322.6L727.9 316.4M727.5 322.6L718.1 323.2M727.5 322.6L732.4 322.4M727.5 322.6L721.7 317.4M727.9 316.4L728.3 310.2M727.9 316.4L735.3 315.1M727.9 316.4L732.4 322.4M727.9 316.4L722.0 309.5M727.9 316.4L721.7 317.4M728.3 310.2L728.7 304.1M728.3 310.2L735.3 315.1M728.3 310.2L734.0 308.4M728.3 310.2L722.0 309.5M728.7 304.1L729.1 297.9M728.7 304.1L736.6 302.5M728.7 304.1L734.0 308.4M728.7 304.1L722.0 309.5M728.7 304.1L721.0 300.2M729.1 297.9L729.5 291.7M729.1 297.9L736.6 302.5M729.1 297.9L722.0 293.4M729.1 297.9L721.0 300.2M729.1 297.9L736.0 294.7M729.5 291.7L730.0 285.5M729.5 291.7L722.0 293.4M729.5 291.7L737.0 287.3M729.5 291.7L736.0 294.7M730.0 285.5L730.4 279.3M730.0 285.5L718.9 284.6M730.0 285.5L722.0 293.4M730.0 285.5L737.0 287.3M730.0 285.5L724.7 279.2M730.0 285.5L735.2 280.4M730.4 279.3L730.8 273.1M730.4 279.3L724.7 279.2M730.4 279.3L735.2 280.4M730.4 279.3L726.3 273.0M730.8 273.1L731.2 266.9M730.8 273.1L737.3 270.0M730.8 273.1L740.1 275.5M730.8 273.1L735.2 280.4M730.8 273.1L726.3 273.0M731.2 266.9L731.6 260.8M731.2 266.9L723.5 267.1M731.2 266.9L737.3 270.0M731.2 266.9L738.1 263.9M731.2 266.9L726.2 261.0M731.2 266.9L726.3 273.0M731.6 260.8L738.1 263.9M731.6 260.8L726.2 261.0M679.0 410.5L682.3 409.7M679.0 410.5L679.6 413.1M679.0 410.5L682.9 412.3M679.0 410.5L677.7 409.2M682.3 409.7L685.6 408.9M682.3 409.7L682.9 412.3M682.3 409.7L686.2 411.5M682.3 409.7L683.4 404.4M685.6 408.9L688.9 408.1M685.6 408.9L686.2 411.5M685.6 408.9L689.5 410.7M685.6 408.9L683.4 404.4M688.9 408.1L692.2 407.3M688.9 408.1L689.5 410.7M688.9 408.1L692.8 409.9M688.9 408.1L683.4 404.4M688.9 408.1L689.6 403.7M692.2 407.3L695.5 406.5M692.2 407.3L692.8 409.9M692.2 407.3L696.1 409.1M692.2 407.3L689.6 403.7M695.5 406.5L698.8 405.7M695.5 406.5L696.1 409.1M695.5 406.5L699.4 408.3M695.5 406.5L692.3 400.0M695.5 406.5L698.0 400.4M695.5 406.5L689.6 403.7M698.8 405.7L702.1 404.9M698.8 405.7L699.4 408.3M698.8 405.7L702.7 407.5M698.8 405.7L698.0 400.4M702.1 404.9L705.4 404.1M702.1 404.9L702.7 407.5M702.1 404.9L706.0 406.7M702.1 404.9L703.6 399.5M702.1 404.9L698.0 400.4M705.4 404.1L708.7 403.3M705.4 404.1L706.0 406.7M705.4 404.1L709.3 405.9M705.4 404.1L703.6 399.5M705.4 404.1L709.4 399.9M708.7 403.3L712.1 402.5M708.7 403.3L709.3 405.9M708.7 403.3L712.7 405.1M708.7 403.3L709.4 399.9M712.1 402.5L715.4 401.7M712.1 402.5L712.7 405.1M712.1 402.5L716.0 404.3M712.1 402.5L709.4 399.9M715.4 401.7L718.7 400.9M715.4 401.7L716.0 404.3M715.4 401.7L719.3 403.5M715.4 401.7L715.0 394.2M715.4 401.7L709.4 399.9M718.7 400.9L722.0 400.1M718.7 400.9L719.3 403.5M718.7 400.9L722.6 402.7M718.7 400.9L715.0 394.2M722.0 400.1L725.3 399.3M722.0 400.1L722.6 402.7M722.0 400.1L725.9 401.9M725.3 399.3L728.6 398.5M725.3 399.3L725.9 401.9M725.3 399.3L729.2 401.1M728.6 398.5L731.9 397.7M728.6 398.5L729.2 401.1M728.6 398.5L732.5 400.3M731.9 397.7L735.2 397.0M731.9 397.7L732.5 400.3M731.9 397.7L735.8 399.6M735.2 397.0L738.5 396.2M735.2 397.0L735.8 399.6M735.2 397.0L739.1 398.8M738.5 396.2L741.8 395.4M738.5 396.2L739.1 398.8M738.5 396.2L742.4 398.0M741.8 395.4L745.1 394.6M741.8 395.4L742.4 398.0M741.8 395.4L745.7 397.2M745.1 394.6L748.4 393.8M745.1 394.6L745.7 397.2M745.1 394.6L749.0 396.4M748.4 393.8L751.7 393.0M748.4 393.8L749.0 396.4M748.4 393.8L752.3 395.6M751.7 393.0L755.0 392.2M751.7 393.0L752.3 395.6M751.7 393.0L755.6 394.8M751.7 393.0L752.2 389.1M755.0 392.2L758.3 391.4M755.0 392.2L755.6 394.8M755.0 392.2L758.9 394.0M758.3 391.4L761.6 390.6M758.3 391.4L758.9 394.0M758.3 391.4L762.2 393.2M761.6 390.6L764.9 389.8M761.6 390.6L762.2 393.2M761.6 390.6L765.5 392.4M764.9 389.8L768.2 389.0M764.9 389.8L765.5 392.4M764.9 389.8L768.8 391.6M768.2 389.0L771.5 388.2M768.2 389.0L768.8 391.6M768.2 389.0L772.1 390.8M768.2 389.0L767.9 385.0M771.5 388.2L774.9 387.4M771.5 388.2L772.1 390.8M771.5 388.2L775.5 390.0M771.5 388.2L767.9 385.0M771.5 388.2L772.7 383.4M774.9 387.4L778.2 386.6M774.9 387.4L775.5 390.0M774.9 387.4L778.8 389.2M774.9 387.4L778.0 381.9M774.9 387.4L772.7 383.4M778.2 386.6L781.5 385.8M778.2 386.6L778.8 389.2M778.2 386.6L782.1 388.4M778.2 386.6L778.0 381.9M781.5 385.8L784.8 385.0M781.5 385.8L782.1 388.4M781.5 385.8L785.4 387.6M781.5 385.8L778.0 381.9M781.5 385.8L782.9 381.7M784.8 385.0L788.1 384.2M784.8 385.0L785.4 387.6M784.8 385.0L788.7 386.8M784.8 385.0L782.9 381.7M788.1 384.2L791.4 383.4M788.1 384.2L788.7 386.8M788.1 384.2L792.0 386.0M788.1 384.2L785.6 376.9M788.1 384.2L782.9 381.7M788.1 384.2L792.0 378.3M791.4 383.4L794.7 382.6M791.4 383.4L792.0 386.0M791.4 383.4L795.3 385.2M791.4 383.4L792.0 378.3M794.7 382.6L798.0 381.8M794.7 382.6L795.3 385.2M794.7 382.6L798.6 384.4M794.7 382.6L798.6 378.5M794.7 382.6L792.0 378.3M798.0 381.8L801.3 381.0M798.0 381.8L798.6 384.4M798.0 381.8L801.9 383.6M798.0 381.8L798.6 378.5M801.3 381.0L804.6 380.2M801.3 381.0L801.9 383.6M801.3 381.0L798.6 378.5M804.6 380.2L805.2 382.8M804.6 380.2L798.6 378.5M804.6 380.2L812.9 376.0M679.6 413.1L682.9 412.3M679.6 413.1L677.4 414.0M679.6 413.1L682.2 416.6M682.9 412.3L686.2 411.5M682.9 412.3L682.2 416.6M686.2 411.5L689.5 410.7M686.2 411.5L688.2 417.8M686.2 411.5L682.2 416.6M689.5 410.7L692.8 409.9M689.5 410.7L688.2 417.8M689.5 410.7L694.6 417.3M692.8 409.9L696.1 409.1M692.8 409.9L694.6 417.3M696.1 409.1L699.4 408.3M696.1 409.1L699.8 413.2M696.1 409.1L694.6 417.3M699.4 408.3L702.7 407.5M699.4 408.3L699.8 413.2M702.7 407.5L706.0 406.7M702.7 407.5L708.5 414.5M702.7 407.5L699.8 413.2M706.0 406.7L709.3 405.9M706.0 406.7L708.5 414.5M709.3 405.9L712.7 405.1M709.3 405.9L713.3 408.8M709.3 405.9L708.5 414.5M712.7 405.1L716.0 404.3M712.7 405.1L713.3 408.8M716.0 404.3L719.3 403.5M716.0 404.3L713.3 408.8M716.0 404.3L721.8 407.5M719.3 403.5L722.6 402.7M719.3 403.5L721.8 407.5M722.6 402.7L725.9 401.9M722.6 402.7L721.8 407.5M725.9 401.9L729.2 401.1M725.9 401.9L730.3 406.5M725.9 401.9L721.8 407.5M729.2 401.1L732.5 400.3M729.2 401.1L730.3 406.5M732.5 400.3L735.8 399.6M732.5 400.3L739.2 404.7M732.5 400.3L730.3 406.5M735.8 399.6L739.1 398.8M735.8 399.6L739.2 404.7M739.1 398.8L742.4 398.0M739.1 398.8L739.2 404.7M742.4 398.0L745.7 397.2M742.4 398.0L739.2 404.7M742.4 398.0L747.3 400.6M745.7 397.2L749.0 396.4M745.7 397.2L747.3 400.6M749.0 396.4L752.3 395.6M749.0 396.4L754.4 403.2M749.0 396.4L747.3 400.6M752.3 395.6L755.6 394.8M752.3 395.6L754.4 403.2M755.6 394.8L758.9 394.0M755.6 394.8L754.4 403.2M755.6 394.8L761.2 399.0M758.9 394.0L762.2 393.2M758.9 394.0L761.2 399.0M762.2 393.2L765.5 392.4M762.2 393.2L761.2 399.0M762.2 393.2L766.7 396.0M765.5 392.4L768.8 391.6M765.5 392.4L766.7 396.0M768.8 391.6L772.1 390.8M768.8 391.6L773.0 396.0M768.8 391.6L766.7 396.0M772.1 390.8L775.5 390.0M772.1 390.8L773.0 396.0M775.5 390.0L778.8 389.2M775.5 390.0L780.6 394.8M775.5 390.0L773.0 396.0M778.8 389.2L782.1 388.4M778.8 389.2L780.6 394.8M782.1 388.4L785.4 387.6M782.1 388.4L780.6 394.8M782.1 388.4L787.4 392.4M785.4 387.6L788.7 386.8M785.4 387.6L787.4 392.4M788.7 386.8L792.0 386.0M788.7 386.8L791.7 390.3M788.7 386.8L787.4 392.4M792.0 386.0L795.3 385.2M792.0 386.0L791.7 390.3M792.0 386.0L795.8 389.2M795.3 385.2L798.6 384.4M795.3 385.2L795.8 389.2M798.6 384.4L801.9 383.6M798.6 384.4L795.8 389.2M801.9 383.6L805.2 382.8M805.2 382.8L816.1 388.6M805.2 382.8L812.9 376.0M703.4 14.0L770.6 14.0M703.4 14.0L699.0 90.1M703.4 14.0L738.0 72.6M1100.0 14.0L1039.4 14.0M1100.0 14.0L1100.0 87.8M670.0 601.0L773.7 601.0M670.0 601.0L670.9 570.3M692.0 213.6L692.2 205.9M692.0 213.6L708.2 225.4M892.5 601.0L942.6 535.1M892.5 601.0L840.9 601.0M892.5 601.0L896.7 538.3M892.5 601.0L853.0 575.7M770.6 14.0L837.8 14.0M770.6 14.0L738.0 72.6M770.6 14.0L794.0 74.9M837.8 14.0L905.0 14.0M837.8 14.0L794.0 74.9M837.8 14.0L847.8 27.4M905.0 14.0L972.2 14.0M905.0 14.0L847.8 27.4M905.0 14.0L900.0 72.3M905.0 14.0L966.7 63.2M972.2 14.0L1039.4 14.0M972.2 14.0L966.7 63.2M1039.4 14.0L1100.0 87.8M1039.4 14.0L966.7 63.2M1039.4 14.0L1034.4 101.4M1100.0 87.8L1100.0 155.0M1100.0 87.8L1034.4 101.4M1100.0 155.0L1100.0 222.2M1100.0 155.0L1011.0 173.0M1100.0 155.0L1034.4 101.4M1100.0 222.2L1100.0 289.4M1100.0 222.2L1011.0 173.0M1100.0 222.2L1043.3 276.7M1100.0 289.4L1093.4 350.0M1100.0 289.4L1043.3 276.7M1093.4 350.0L1029.4 354.2M1093.4 350.0L1043.3 276.7M1029.4 354.2L990.2 361.4M1029.4 354.2L996.0 303.8M1029.4 354.2L1013.6 403.0M1029.4 354.2L1043.3 276.7M1007.5 417.7L978.1 478.1M1007.5 417.7L960.6 415.9M1007.5 417.7L1013.6 403.0M978.1 478.1L942.6 535.1M978.1 478.1L960.6 415.9M978.1 478.1L924.2 482.3M942.6 535.1L924.2 482.3M942.6 535.1L896.7 538.3M840.9 601.0L773.7 601.0M840.9 601.0L853.0 575.7M773.7 601.0L670.9 570.3M773.7 601.0L799.2 513.0M773.7 601.0L753.3 540.9M773.7 601.0L853.0 575.7M773.7 601.0L718.5 533.0M670.9 570.3L672.4 517.1M670.9 570.3L685.3 531.4M670.9 570.3L718.5 533.0M672.4 517.1L673.2 489.2M672.4 517.1L693.2 496.6M672.4 517.1L685.3 531.4M673.2 489.2L673.7 470.0M673.2 489.2L693.2 496.6M673.2 489.2L686.4 473.2M673.7 470.0L686.4 473.2M675.4 440.9L683.6 433.3M675.4 440.9L687.1 446.8M676.3 429.1L683.6 433.3M676.3 429.1L683.4 423.4M676.9 420.4L683.4 423.4M676.9 420.4L682.2 416.6M678.0 405.0L683.4 404.4M678.4 399.7L684.5 396.4M678.4 399.7L683.4 404.4M678.9 393.2L684.5 396.4M679.5 385.0L685.6 385.2M680.2 374.8L690.4 372.9M680.2 374.8L685.6 385.2M681.2 362.0L690.4 359.1M681.2 362.0L690.4 372.9M682.1 349.1L690.4 359.1M682.1 349.1L690.5 346.2M683.0 336.2L692.8 332.8M684.0 323.4L691.1 320.5M684.9 310.5L694.1 310.2M685.9 297.7L699.6 298.7M685.9 297.7L693.7 289.0M686.8 284.9L695.7 278.3M686.8 284.9L693.7 289.0M687.7 272.1L695.7 278.3M687.7 272.1L696.3 267.5M688.7 259.3L698.3 249.1M688.7 259.3L704.6 260.1M688.7 259.3L696.3 267.5M689.6 246.5L698.3 249.1M690.5 233.6L708.2 225.4M690.5 233.6L706.0 238.9M692.2 205.9L692.4 193.5M692.2 205.9L700.0 200.8M692.4 193.5L693.2 177.4M692.4 193.5L707.4 192.4M692.4 193.5L700.0 200.8M693.2 177.4L694.8 156.3M693.2 177.4L711.6 166.6M693.2 177.4L707.4 192.4M694.8 156.3L696.6 128.7M694.8 156.3L713.3 127.7M694.8 156.3L711.6 166.6M696.6 128.7L699.0 90.1M696.6 128.7L713.3 127.7M699.0 90.1L738.0 72.6M699.0 90.1L713.3 127.7M738.0 72.6L794.0 74.9M738.0 72.6L713.3 127.7M738.0 72.6L759.5 122.3M794.0 74.9L847.8 27.4M794.0 74.9L838.3 90.0M794.0 74.9L759.5 122.3M794.0 74.9L801.9 131.2M847.8 27.4L900.0 72.3M847.8 27.4L838.3 90.0M900.0 72.3L966.7 63.2M900.0 72.3L838.3 90.0M900.0 72.3L935.7 133.4M900.0 72.3L879.4 116.4M966.7 63.2L935.7 133.4M966.7 63.2L991.0 123.0M966.7 63.2L1034.4 101.4M838.3 90.0L801.9 131.2M838.3 90.0L845.5 135.6M838.3 90.0L879.4 116.4M713.3 127.7L759.5 122.3M713.3 127.7L734.8 157.1M713.3 127.7L711.6 166.6M759.5 122.3L801.9 131.2M759.5 122.3L734.8 157.1M759.5 122.3L769.0 156.2M801.9 131.2L845.5 135.6M801.9 131.2L769.0 156.2M801.9 131.2L800.4 158.4M801.9 131.2L821.0 152.8M845.5 135.6L879.4 152.4M845.5 135.6L839.2 174.5M845.5 135.6L860.6 167.7M845.5 135.6L821.0 152.8M845.5 135.6L879.4 116.4M935.7 133.4L991.0 123.0M935.7 133.4L879.4 152.4M935.7 133.4L1011.0 173.0M935.7 133.4L953.6 203.9M935.7 133.4L916.2 178.8M935.7 133.4L879.4 116.4M991.0 123.0L1011.0 173.0M991.0 123.0L1034.4 101.4M879.4 152.4L860.6 167.7M879.4 152.4L916.2 178.8M879.4 152.4L879.4 116.4M879.4 152.4L881.5 179.3M734.8 157.1L769.0 156.2M734.8 157.1L725.3 187.2M734.8 157.1L748.0 183.4M734.8 157.1L711.6 166.6M734.8 157.1L756.0 173.1M769.0 156.2L790.2 171.4M769.0 156.2L769.0 180.9M769.0 156.2L800.4 158.4M769.0 156.2L756.0 173.1M790.2 171.4L769.0 180.9M790.2 171.4L800.4 158.4M790.2 171.4L804.4 175.9M790.2 171.4L789.5 186.3M816.4 167.6L839.2 174.5M816.4 167.6L800.4 158.4M816.4 167.6L804.4 175.9M816.4 167.6L820.7 181.6M816.4 167.6L821.0 152.8M839.2 174.5L856.6 196.0M839.2 174.5L860.6 167.7M839.2 174.5L820.7 181.6M839.2 174.5L821.0 152.8M839.2 174.5L834.2 188.4M856.6 196.0L834.5 198.9M856.6 196.0L893.0 203.0M856.6 196.0L845.4 214.7M856.6 196.0L860.6 167.7M856.6 196.0L870.0 225.6M856.6 196.0L881.5 179.3M856.6 196.0L834.2 188.4M834.5 198.9L845.4 214.7M834.5 198.9L828.0 212.0M834.5 198.9L834.2 188.4M893.0 203.0L953.0 204.6M893.0 203.0L905.2 257.0M893.0 203.0L870.0 225.6M893.0 203.0L916.2 178.8M893.0 203.0L881.5 179.3M953.0 204.6L905.2 257.0M953.0 204.6L973.0 246.0M953.0 204.6L916.2 178.8M1011.0 173.0L953.6 203.9M1011.0 173.0L973.0 246.0M1011.0 173.0L1034.4 101.4M1011.0 173.0L1043.3 276.7M725.3 187.2L748.0 183.4M725.3 187.2L711.6 166.6M725.3 187.2L707.4 192.4M725.3 187.2L744.2 195.5M748.0 183.4L756.0 173.1M748.0 183.4L759.6 189.3M748.0 183.4L744.2 195.5M769.0 180.9L756.0 173.1M769.0 180.9L759.6 189.3M769.0 180.9L774.2 190.8M769.0 180.9L789.5 186.3M953.6 203.9L973.0 246.0M953.6 203.9L916.2 178.8M867.2 256.0L905.2 257.0M867.2 256.0L853.0 230.0M867.2 256.0L870.0 225.6M867.2 256.0L851.7 263.0M867.2 256.0L878.4 277.0M905.2 257.0L952.7 282.3M905.2 257.0L901.0 314.0M905.2 257.0L973.0 246.0M905.2 257.0L870.0 225.6M905.2 257.0L878.4 277.0M952.7 282.3L901.0 314.0M952.7 282.3L936.8 359.8M952.7 282.3L973.0 246.0M952.7 282.3L996.0 303.8M901.0 314.0L857.8 332.0M901.0 314.0L936.8 359.8M901.0 314.0L881.5 356.7M901.0 314.0L863.2 295.2M901.0 314.0L878.4 277.0M857.8 332.0L881.5 356.7M857.8 332.0L863.2 295.2M857.8 332.0L837.6 320.5M857.8 332.0L843.7 340.9M857.8 332.0L846.5 305.3M936.8 359.8L881.5 356.7M936.8 359.8L873.6 395.3M936.8 359.8L960.6 415.9M936.8 359.8L904.6 436.4M936.8 359.8L990.2 361.4M936.8 359.8L996.0 303.8M839.7 280.7L830.9 301.3M839.7 280.7L863.2 295.2M839.7 280.7L827.0 262.0M839.7 280.7L821.5 277.1M839.7 280.7L851.7 263.0M839.7 280.7L821.2 291.0M839.7 280.7L846.5 305.3M853.0 230.0L830.9 241.2M853.0 230.0L845.4 214.7M853.0 230.0L870.0 225.6M853.0 230.0L831.9 224.9M853.0 230.0L851.7 263.0M830.9 241.2L827.0 262.0M830.9 241.2L831.9 224.9M830.9 241.2L851.7 263.0M830.9 301.3L837.6 320.5M830.9 301.3L821.2 291.0M830.9 301.3L820.3 316.5M830.9 301.3L846.5 305.3M838.8 359.8L881.5 356.7M838.8 359.8L821.2 347.0M838.8 359.8L819.8 363.4M838.8 359.8L855.2 378.7M838.8 359.8L843.7 340.9M838.8 359.8L832.1 380.8M881.5 356.7L873.6 395.3M881.5 356.7L855.2 378.7M881.5 356.7L843.7 340.9M973.0 246.0L996.0 303.8M973.0 246.0L1043.3 276.7M873.6 395.3L904.6 436.4M873.6 395.3L860.9 442.8M873.6 395.3L848.6 402.7M873.6 395.3L855.2 378.7M960.6 415.9L904.6 436.4M960.6 415.9L924.2 482.3M960.6 415.9L990.2 361.4M960.6 415.9L1013.6 403.0M904.6 436.4L860.9 442.8M904.6 436.4L924.2 482.3M904.6 436.4L882.0 479.4M860.9 442.8L838.8 420.6M860.9 442.8L848.6 402.7M860.9 442.8L838.4 448.1M860.9 442.8L845.5 470.9M860.9 442.8L882.0 479.4M924.2 482.3L896.7 538.3M924.2 482.3L882.0 479.4M858.7 506.0L799.2 513.0M858.7 506.0L896.7 538.3M858.7 506.0L853.0 575.7M858.7 506.0L811.7 483.4M858.7 506.0L845.5 470.9M858.7 506.0L882.0 479.4M799.2 513.0L753.3 540.9M799.2 513.0L853.0 575.7M799.2 513.0L811.7 483.4M799.2 513.0L774.7 496.6M896.7 538.3L853.0 575.7M896.7 538.3L882.0 479.4M753.3 540.9L743.8 495.0M753.3 540.9L718.5 533.0M753.3 540.9L774.7 496.6M821.4 463.3L811.7 483.4M821.4 463.3L838.4 448.1M821.4 463.3L845.5 470.9M821.4 463.3L809.1 445.3M821.4 463.3L803.0 462.3M821.4 463.3L824.7 441.3M838.8 420.6L848.6 402.7M838.8 420.6L814.8 428.2M838.8 420.6L838.4 448.1M838.8 420.6L816.0 413.4M838.8 420.6L828.0 400.7M838.8 420.6L824.7 441.3M743.8 495.0L715.4 498.0M743.8 495.0L718.5 533.0M743.8 495.0L742.5 465.7M743.8 495.0L723.1 472.6M743.8 495.0L774.7 496.6M743.8 495.0L760.3 477.8M715.4 498.0L693.2 496.6M715.4 498.0L718.5 533.0M715.4 498.0L723.1 472.6M715.4 498.0L702.9 471.2M693.2 496.6L685.3 531.4M693.2 496.6L718.5 533.0M693.2 496.6L686.4 473.2M693.2 496.6L702.9 471.2M685.3 531.4L718.5 533.0M990.2 361.4L996.0 303.8M990.2 361.4L1013.6 403.0M996.0 303.8L1043.3 276.7M742.3 355.3L741.8 346.9M742.3 355.3L748.6 359.6M742.3 355.3L748.8 351.8M742.3 355.3L736.6 352.0M742.3 355.3L734.2 360.2M742.3 355.3L742.3 361.7M692.4 425.8L699.6 438.2M692.4 425.8L688.2 417.8M692.4 425.8L683.6 433.3M692.4 425.8L683.4 423.4M692.4 425.8L704.0 424.2M692.4 425.8L694.6 417.3M695.7 278.3L705.2 286.3M695.7 278.3L708.5 273.1M695.7 278.3L696.3 267.5M695.7 278.3L693.7 289.0M783.7 259.3L782.0 248.4M783.7 259.3L793.6 251.8M783.7 259.3L778.7 267.4M783.7 259.3L786.4 268.9M783.7 259.3L794.2 265.5M821.2 347.0L819.8 363.4M821.2 347.0L843.7 340.9M821.2 347.0L823.6 330.8M707.6 386.7L702.6 377.9M707.6 386.7L707.2 394.6M707.6 386.7L712.2 377.4M707.6 386.7L697.0 384.8M707.6 386.7L715.0 394.2M707.6 386.7L701.0 393.2M707.6 386.7L717.4 385.1M708.2 225.4L726.5 223.6M708.2 225.4L706.0 238.9M708.2 225.4L717.3 233.5M776.6 218.3L780.8 229.8M776.6 218.3L786.9 222.1M776.6 218.3L769.4 230.6M776.6 218.3L788.4 209.5M776.6 218.3L766.1 218.0M863.2 295.2L851.7 263.0M863.2 295.2L878.4 277.0M863.2 295.2L846.5 305.3M780.8 229.8L786.9 222.1M780.8 229.8L769.4 230.6M780.8 229.8L786.9 239.4M780.8 229.8L777.1 239.6M780.8 229.8L790.2 230.4M742.5 465.7L761.6 461.4M742.5 465.7L723.1 472.6M742.5 465.7L760.3 477.8M742.5 465.7L749.7 452.3M742.5 465.7L726.3 455.0M762.7 318.3L762.3 326.0M762.7 318.3L762.6 308.9M762.7 318.3L755.8 322.7M762.7 318.3L756.7 315.3M776.9 422.8L778.1 406.5M776.9 422.8L789.2 415.5M776.9 422.8L767.5 413.4M776.9 422.8L763.5 426.2M811.7 483.4L782.1 469.4M811.7 483.4L774.7 496.6M811.7 483.4L845.5 470.9M811.7 483.4L803.0 462.3M741.5 291.7L747.7 293.0M741.5 291.7L745.1 286.2M741.5 291.7L737.0 287.3M741.5 291.7L742.6 297.9M741.5 291.7L736.0 294.7M710.9 342.3L708.3 350.2M710.9 342.3L704.7 334.7M710.9 342.3L720.1 341.6M710.9 342.3L717.2 350.4M710.9 342.3L715.6 332.7M710.9 342.3L701.3 343.4M719.4 273.1L723.5 267.1M719.4 273.1L718.9 284.6M719.4 273.1L717.1 262.4M719.4 273.1L708.5 273.1M719.4 273.1L724.7 279.2M719.4 273.1L726.3 273.0M733.3 434.2L734.9 421.4M733.3 434.2L716.8 436.0M733.3 434.2L724.5 424.0M733.3 434.2L744.4 426.5M711.6 166.6L707.4 192.4M747.7 293.0L745.1 286.2M747.7 293.0L749.6 300.4M747.7 293.0L754.6 295.4M747.7 293.0L753.7 287.0M747.7 293.0L742.6 297.9M845.4 214.7L870.0 225.6M845.4 214.7L831.9 224.9M845.4 214.7L828.0 212.0M791.9 284.9L796.0 299.1M791.9 284.9L780.4 287.5M791.9 284.9L791.8 274.6M791.9 284.9L781.0 277.4M791.9 284.9L802.8 288.2M791.9 284.9L803.0 275.8M791.9 284.9L786.5 292.8M801.3 224.3L786.9 222.1M801.3 224.3L797.4 238.6M801.3 224.3L788.4 209.5M801.3 224.3L807.1 208.1M801.3 224.3L808.5 237.9M801.3 224.3L790.2 230.4M752.2 308.9L744.7 305.2M752.2 308.9L749.1 317.9M752.2 308.9L749.6 300.4M752.2 308.9L762.6 308.9M752.2 308.9L756.1 302.4M752.2 308.9L745.9 311.5M752.2 308.9L756.7 315.3M698.3 249.1L706.0 238.9M698.3 249.1L704.6 260.1M698.3 249.1L714.1 250.2M800.4 158.4L804.4 175.9M800.4 158.4L821.0 152.8M726.5 223.6L717.3 233.5M726.5 223.6L739.0 225.9M726.5 223.6L737.9 216.0M726.5 223.6L726.3 237.1M726.5 223.6L733.7 233.1M860.6 167.7L881.5 179.3M757.3 356.2L760.5 347.7M757.3 356.2L754.0 348.1M757.3 356.2L761.0 365.0M757.3 356.2L748.6 359.6M757.3 356.2L748.8 351.8M757.3 356.2L753.6 365.4M791.2 447.8L782.1 469.4M791.2 447.8L775.3 454.0M791.2 447.8L809.1 445.3M791.2 447.8L803.0 462.3M791.2 447.8L778.3 441.9M761.6 461.4L782.1 469.4M761.6 461.4L762.7 447.0M761.6 461.4L775.3 454.0M761.6 461.4L760.3 477.8M761.6 461.4L749.7 452.3M760.9 258.0L753.3 261.4M760.9 258.0L766.2 265.1M760.9 258.0L767.7 255.9M760.9 258.0L759.3 263.8M725.5 246.8L726.3 237.1M725.5 246.8L718.3 241.2M725.5 246.8L736.3 243.6M725.5 246.8L714.1 250.2M725.5 246.8L723.2 254.7M786.9 222.1L788.4 209.5M786.9 222.1L790.2 230.4M747.2 229.1L757.2 226.9M747.2 229.1L739.0 225.9M747.2 229.1L749.6 239.0M747.2 229.1L741.2 234.2M747.2 229.1L747.6 219.2M804.4 175.9L820.7 181.6M804.4 175.9L789.5 186.3M705.2 309.5L712.4 304.0M705.2 309.5L713.9 314.3M705.2 309.5L699.6 298.7M705.2 309.5L704.5 322.1M705.2 309.5L694.1 310.2M782.1 469.4L775.3 454.0M782.1 469.4L774.7 496.6M782.1 469.4L760.3 477.8M782.1 469.4L803.0 462.3M757.2 226.9L769.4 230.6M757.2 226.9L757.4 212.1M757.2 226.9L749.6 239.0M757.2 226.9L766.1 218.0M757.2 226.9L760.7 237.0M757.2 226.9L747.6 219.2M773.7 365.4L774.9 372.4M773.7 365.4L775.3 356.5M773.7 365.4L781.4 370.7M773.7 365.4L783.5 362.5M734.9 421.4L735.1 412.9M734.9 421.4L742.8 415.3M734.9 421.4L727.7 414.9M734.9 421.4L724.5 424.0M734.9 421.4L744.4 426.5M702.6 377.9L712.2 377.4M702.6 377.9L697.0 384.8M702.6 377.9L690.4 372.9M702.6 377.9L703.9 367.3M848.6 402.7L855.2 378.7M848.6 402.7L828.0 400.7M848.6 402.7L832.1 380.8M723.5 267.1L717.1 262.4M723.5 267.1L726.2 261.0M723.5 267.1L726.3 273.0M756.0 173.1L759.6 189.3M718.1 323.2L713.9 314.3M718.1 323.2L704.5 322.1M718.1 323.2L715.6 332.7M718.1 323.2L721.7 317.4M686.4 473.2L702.9 471.2M750.1 371.0L743.1 373.4M750.1 371.0L753.6 365.4M750.1 371.0L746.4 366.4M750.1 371.0L756.9 373.5M750.1 371.0L749.1 376.2M759.0 380.3L751.8 382.0M759.0 380.3L757.4 385.7M759.0 380.3L756.9 373.5M690.4 359.1L690.5 346.2M690.4 359.1L690.4 372.9M690.4 359.1L701.2 354.4M690.4 359.1L703.9 367.3M804.1 261.6L793.6 251.8M804.1 261.6L805.4 249.5M804.1 261.6L794.2 265.5M804.1 261.6L803.0 275.8M814.8 428.2L816.0 413.4M814.8 428.2L809.1 445.3M814.8 428.2L824.7 441.3M744.7 305.2L736.6 302.5M744.7 305.2L749.6 300.4M744.7 305.2L742.6 297.9M744.7 305.2L745.9 311.5M744.7 305.2L740.1 309.7M737.3 270.0L745.6 268.8M737.3 270.0L740.1 275.5M737.3 270.0L738.1 263.9M718.9 284.6L705.2 286.3M718.9 284.6L722.0 293.4M718.9 284.6L713.0 294.2M718.9 284.6L708.5 273.1M718.9 284.6L724.7 279.2M706.0 238.9L717.3 233.5M706.0 238.9L718.3 241.2M706.0 238.9L714.1 250.2M752.2 389.1L746.2 388.9M752.2 389.1L751.8 382.0M752.2 389.1L757.4 385.7M838.4 448.1L845.5 470.9M838.4 448.1L824.7 441.3M704.6 260.1L717.1 262.4M704.6 260.1L708.5 273.1M704.6 260.1L696.3 267.5M704.6 260.1L714.1 250.2M708.3 350.2L712.1 359.0M708.3 350.2L717.2 350.4M708.3 350.2L701.2 354.4M708.3 350.2L701.3 343.4M754.6 416.3L753.6 429.9M754.6 416.3L742.8 415.3M754.6 416.3L761.5 407.1M754.6 416.3L754.4 403.2M754.6 416.3L767.5 413.4M754.6 416.3L763.5 426.2M754.6 416.3L744.4 426.5M754.6 416.3L747.7 408.3M782.0 248.4L793.6 251.8M782.0 248.4L786.9 239.4M782.0 248.4L777.1 239.6M762.7 447.0L775.3 454.0M762.7 447.0L749.7 452.3M762.7 447.0L778.3 441.9M723.1 472.6L702.9 471.2M723.1 472.6L726.3 455.0M816.1 388.6L828.0 400.7M816.1 388.6L812.9 376.0M816.1 388.6L832.1 380.8M816.1 388.6L811.3 401.1M796.0 299.1L784.5 306.8M796.0 299.1L801.1 310.7M796.0 299.1L784.3 299.1M796.0 299.1L791.7 312.5M796.0 299.1L802.8 288.2M796.0 299.1L786.5 292.8M827.0 262.0L821.5 277.1M827.0 262.0L851.7 263.0M756.7 270.1L745.6 268.8M756.7 270.1L748.8 278.2M756.7 270.1L753.3 261.4M756.7 270.1L765.2 274.2M756.7 270.1L766.2 265.1M756.7 270.1L758.6 279.3M756.7 270.1L759.3 263.8M794.6 359.9L795.5 348.2M794.6 359.9L797.9 368.0M794.6 359.9L783.5 362.5M794.6 359.9L790.1 369.9M794.6 359.9L785.0 352.7M775.3 454.0L778.3 441.9M837.6 320.5L843.7 340.9M837.6 320.5L823.6 330.8M837.6 320.5L820.3 316.5M837.6 320.5L846.5 305.3M775.1 346.5L775.6 335.0M775.1 346.5L775.3 356.5M775.1 346.5L785.5 341.6M775.1 346.5L785.0 352.7M736.6 302.5L734.0 308.4M736.6 302.5L742.6 297.9M736.6 302.5L736.0 294.7M736.6 302.5L740.1 309.7M745.6 268.8L748.8 278.2M745.6 268.8L753.3 261.4M745.6 268.8L740.1 275.5M745.6 268.8L744.8 260.1M745.6 268.8L738.1 263.9M716.8 436.0L699.6 438.2M716.8 436.0L724.5 424.0M716.8 436.0L714.7 423.0M716.8 436.0L704.0 424.2M774.7 496.6L760.3 477.8M719.3 362.4L712.1 359.0M719.3 362.4L717.0 369.1M719.3 362.4L719.5 357.2M780.4 287.5L778.4 294.9M780.4 287.5L781.0 277.4M780.4 287.5L786.5 292.8M793.6 251.8L797.4 238.6M793.6 251.8L786.9 239.4M793.6 251.8L805.4 249.5M793.6 251.8L794.2 265.5M704.7 334.7L692.8 332.8M704.7 334.7L704.5 322.1M704.7 334.7L715.6 332.7M704.7 334.7L701.3 343.4M753.6 429.9L763.5 426.2M753.6 429.9L744.4 426.5M816.0 413.4L828.0 400.7M816.0 413.4L811.3 401.1M819.8 363.4L812.9 376.0M819.8 363.4L832.1 380.8M845.5 470.9L882.0 479.4M780.6 394.8L790.1 402.5M780.6 394.8L778.1 406.5M780.6 394.8L773.0 396.0M780.6 394.8L787.4 392.4M855.2 378.7L832.1 380.8M767.6 242.6L769.4 230.6M767.6 242.6L777.1 239.6M767.6 242.6L758.2 244.4M767.6 242.6L760.7 237.0M828.0 400.7L832.1 380.8M828.0 400.7L811.3 401.1M797.4 238.6L786.9 239.4M797.4 238.6L805.4 249.5M797.4 238.6L808.5 237.9M797.4 238.6L790.2 230.4M775.6 335.0L777.0 322.8M775.6 335.0L785.5 341.6M775.6 335.0L784.6 331.4M739.2 404.7L735.1 412.9M739.2 404.7L742.8 415.3M739.2 404.7L730.3 406.5M739.2 404.7L747.7 408.3M739.2 404.7L747.3 400.6M699.6 438.2L683.6 433.3M699.6 438.2L687.1 446.8M699.6 438.2L704.0 424.2M712.4 304.0L713.9 314.3M712.4 304.0L713.0 294.2M712.4 304.0L699.6 298.7M712.4 304.0L722.0 309.5M712.4 304.0L721.0 300.2M746.2 388.9L751.8 382.0M746.2 388.9L739.8 389.4M746.2 388.9L743.2 381.9M790.1 402.5L778.1 406.5M790.1 402.5L789.2 415.5M790.1 402.5L794.6 395.2M790.1 402.5L787.4 392.4M791.8 274.6L781.0 277.4M791.8 274.6L786.4 268.9M791.8 274.6L794.2 265.5M791.8 274.6L803.0 275.8M795.5 348.2L796.7 334.1M795.5 348.2L785.5 341.6M795.5 348.2L785.0 352.7M713.9 314.3L722.0 309.5M713.9 314.3L704.5 322.1M713.9 314.3L721.7 317.4M769.4 230.6L777.1 239.6M769.4 230.6L766.1 218.0M769.4 230.6L760.7 237.0M759.6 189.3L774.2 190.8M759.6 189.3L744.2 195.5M717.3 233.5L726.3 237.1M717.3 233.5L718.3 241.2M748.8 278.2L758.6 279.3M748.8 278.2L745.1 286.2M748.8 278.2L753.7 287.0M748.8 278.2L740.1 275.5M748.8 278.2L741.5 281.4M743.8 339.7L741.8 346.9M743.8 339.7L736.7 340.0M743.8 339.7L748.9 343.8M743.8 339.7L749.0 335.9M743.8 339.7L741.1 332.5M739.0 225.9L737.9 216.0M739.0 225.9L741.2 234.2M739.0 225.9L733.7 233.1M739.0 225.9L747.6 219.2M784.5 306.8L784.3 299.1M784.5 306.8L776.7 312.3M784.5 306.8L791.7 312.5M784.5 306.8L783.4 315.5M784.5 306.8L776.4 303.2M820.7 181.6L834.2 188.4M748.5 327.3L749.1 317.9M748.5 327.3L755.5 331.2M748.5 327.3L755.8 322.7M748.5 327.3L740.7 322.8M748.5 327.3L749.0 335.9M748.5 327.3L741.1 332.5M693.2 393.2L697.0 384.8M693.2 393.2L684.5 396.4M693.2 393.2L692.3 400.0M693.2 393.2L701.0 393.2M693.2 393.2L698.0 400.4M693.2 393.2L685.6 385.2M690.5 346.2L692.8 332.8M690.5 346.2L701.2 354.4M690.5 346.2L701.3 343.4M778.7 267.4L781.0 277.4M778.7 267.4L786.4 268.9M760.5 347.7L754.0 348.1M760.5 347.7L755.9 340.5M760.5 347.7L762.7 341.9M788.4 209.5L807.1 208.1M735.1 412.9L742.8 415.3M735.1 412.9L730.3 406.5M735.1 412.9L727.7 414.9M742.8 415.3L744.4 426.5M742.8 415.3L747.7 408.3M843.7 340.9L823.6 330.8M774.9 372.4L781.4 370.7M774.9 372.4L779.4 376.8M774.9 372.4L772.8 377.2M754.0 348.1L755.9 340.5M754.0 348.1L748.8 351.8M754.0 348.1L748.9 343.8M753.3 261.4L749.7 255.9M753.3 261.4L744.8 260.1M753.3 261.4L759.3 263.8M688.2 417.8L683.4 423.4M688.2 417.8L682.2 416.6M688.2 417.8L694.6 417.3M762.9 334.6L755.9 340.5M762.9 334.6L762.3 326.0M762.9 334.6L755.5 331.2M762.9 334.6L762.7 341.9M705.2 286.3L713.0 294.2M705.2 286.3L699.6 298.7M705.2 286.3L708.5 273.1M705.2 286.3L693.7 289.0M707.2 394.6L703.6 399.5M707.2 394.6L715.0 394.2M707.2 394.6L701.0 393.2M707.2 394.6L709.4 399.9M734.9 328.2L732.4 322.4M734.9 328.2L740.7 322.8M734.9 328.2L732.3 334.2M734.9 328.2L741.1 332.5M751.8 382.0L743.2 381.9M751.8 382.0L757.4 385.7M751.8 382.0L756.9 373.5M751.8 382.0L749.1 376.2M718.5 415.7L727.7 414.9M718.5 415.7L713.3 408.8M718.5 415.7L708.5 414.5M718.5 415.7L721.8 407.5M718.5 415.7L724.5 424.0M718.5 415.7L714.7 423.0M707.4 192.4L700.0 200.8M730.3 406.5L727.7 414.9M730.3 406.5L721.8 407.5M736.4 384.9L739.8 389.4M736.4 384.9L743.2 381.9M736.4 384.9L733.7 391.0M736.4 384.9L730.0 383.4M736.4 384.9L736.5 378.6M712.1 359.0L717.0 369.1M712.1 359.0L717.2 350.4M712.1 359.0L701.2 354.4M712.1 359.0L719.5 357.2M712.1 359.0L703.9 367.3M761.5 407.1L754.4 403.2M761.5 407.1L761.2 399.0M761.5 407.1L768.3 403.0M761.5 407.1L767.5 413.4M735.3 315.1L734.0 308.4M735.3 315.1L732.4 322.4M735.3 315.1L740.7 322.8M735.3 315.1L742.4 315.5M735.3 315.1L740.1 309.7M774.2 190.8L789.5 186.3M823.6 330.8L820.3 316.5M786.9 239.4L777.1 239.6M786.9 239.4L790.2 230.4M831.9 224.9L828.0 212.0M765.2 274.2L766.2 265.1M765.2 274.2L758.6 279.3M765.2 274.2L765.9 280.6M754.4 403.2L761.2 399.0M754.4 403.2L747.7 408.3M754.4 403.2L747.3 400.6M765.4 293.0L762.6 298.7M765.4 293.0L763.4 286.7M765.4 293.0L759.5 292.0M805.4 249.5L808.5 237.9M766.2 265.1L767.7 255.9M766.2 265.1L759.3 263.8M821.5 277.1L821.2 291.0M757.4 212.1L766.1 218.0M757.4 212.1L747.6 219.2M809.1 445.3L803.0 462.3M809.1 445.3L824.7 441.3M801.1 310.7L798.9 320.6M801.1 310.7L791.7 312.5M743.1 373.4L739.2 367.2M743.1 373.4L743.2 381.9M743.1 373.4L736.5 378.6M743.1 373.4L746.4 366.4M743.1 373.4L749.1 376.2M743.1 373.4L736.2 372.8M734.0 308.4L740.1 309.7M683.6 433.3L683.4 423.4M683.6 433.3L687.1 446.8M749.1 317.9L755.8 322.7M749.1 317.9L745.9 311.5M749.1 317.9L740.7 322.8M749.1 317.9L756.7 315.3M749.1 317.9L742.4 315.5M758.6 279.3L763.4 286.7M758.6 279.3L753.7 287.0M758.6 279.3L765.9 280.6M784.3 299.1L778.4 294.9M784.3 299.1L786.5 292.8M784.3 299.1L776.4 303.2M722.0 293.4L713.0 294.2M722.0 293.4L721.0 300.2M713.0 294.2L699.6 298.7M713.0 294.2L721.0 300.2M712.2 377.4L717.0 369.1M712.2 377.4L703.9 367.3M712.2 377.4L717.4 385.1M691.1 320.5L692.8 332.8M691.1 320.5L704.5 322.1M691.1 320.5L694.1 310.2M778.1 406.5L768.3 403.0M778.1 406.5L789.2 415.5M778.1 406.5L773.0 396.0M778.1 406.5L767.5 413.4M798.9 320.6L796.7 334.1M798.9 320.6L788.3 322.8M798.9 320.6L791.7 312.5M796.7 334.1L788.3 322.8M796.7 334.1L785.5 341.6M796.7 334.1L784.6 331.4M683.4 423.4L682.2 416.6M755.9 340.5L755.5 331.2M755.9 340.5L748.9 343.8M755.9 340.5L749.0 335.9M755.9 340.5L762.7 341.9M737.9 216.0L747.6 219.2M851.7 263.0L878.4 277.0M798.6 378.5L796.3 373.4M798.6 378.5L792.0 378.3M775.3 356.5L783.5 362.5M775.3 356.5L785.0 352.7M777.0 322.8L776.7 312.3M777.0 322.8L788.3 322.8M777.0 322.8L784.6 331.4M777.0 322.8L783.4 315.5M732.4 322.4L740.7 322.8M797.9 368.0L796.3 373.4M797.9 368.0L790.1 369.9M692.8 332.8L704.5 322.1M692.8 332.8L701.3 343.4M745.1 286.2L737.0 287.3M745.1 286.2L753.7 287.0M745.1 286.2L741.5 281.4M796.3 373.4L790.1 369.9M796.3 373.4L792.0 378.3M761.2 399.0L768.3 403.0M761.2 399.0L766.7 396.0M776.7 312.3L783.4 315.5M776.7 312.3L776.4 303.2M697.0 384.8L690.4 372.9M697.0 384.8L701.0 393.2M697.0 384.8L685.6 385.2M788.3 322.8L791.7 312.5M788.3 322.8L784.6 331.4M788.3 322.8L783.4 315.5M684.5 396.4L692.3 400.0M684.5 396.4L683.4 404.4M684.5 396.4L685.6 385.2M684.5 396.4L689.6 403.7M727.7 414.9L721.8 407.5M727.7 414.9L724.5 424.0M699.6 298.7L693.7 289.0M699.6 298.7L694.1 310.2M762.6 298.7L754.6 295.4M762.6 298.7L762.6 308.9M762.6 298.7L756.1 302.4M762.6 298.7L759.5 292.0M785.6 376.9L781.4 370.7M785.6 376.9L790.1 369.9M785.6 376.9L779.4 376.8M785.6 376.9L782.9 381.7M785.6 376.9L792.0 378.3M781.4 370.7L783.5 362.5M781.4 370.7L790.1 369.9M781.4 370.7L779.4 376.8M726.3 237.1L718.3 241.2M726.3 237.1L736.3 243.6M726.3 237.1L733.7 233.1M713.3 408.8L708.5 414.5M713.3 408.8L721.8 407.5M741.8 346.9L748.8 351.8M741.8 346.9L736.7 340.0M741.8 346.9L736.6 352.0M741.8 346.9L733.1 346.5M741.8 346.9L748.9 343.8M690.4 372.9L703.9 367.3M690.4 372.9L685.6 385.2M720.1 341.6L717.2 350.4M720.1 341.6L715.6 332.7M703.6 399.5L701.0 393.2M703.6 399.5L698.0 400.4M703.6 399.5L709.4 399.9M708.5 414.5L714.7 423.0M708.5 414.5L704.0 424.2M708.5 414.5L699.8 413.2M737.0 287.3L736.0 294.7M737.0 287.3L735.2 280.4M737.0 287.3L741.5 281.4M739.8 389.4L743.2 381.9M739.8 389.4L733.7 391.0M812.9 376.0L832.1 380.8M722.0 309.5L721.0 300.2M722.0 309.5L721.7 317.4M778.4 294.9L786.5 292.8M778.4 294.9L776.4 303.2M724.5 424.0L714.7 423.0M763.4 286.7L753.7 287.0M763.4 286.7L765.9 280.6M763.4 286.7L759.5 292.0M758.2 244.4L749.6 239.0M758.2 244.4L760.7 237.0M758.2 244.4L751.7 246.9M749.6 300.4L754.6 295.4M749.6 300.4L756.1 302.4M749.6 300.4L742.6 297.9M739.2 367.2L731.6 369.0M739.2 367.2L734.2 360.2M739.2 367.2L746.4 366.4M739.2 367.2L742.3 361.7M739.2 367.2L736.2 372.8M785.5 341.6L784.6 331.4M785.5 341.6L785.0 352.7M791.7 312.5L783.4 315.5M761.0 365.0L753.6 365.4M761.0 365.0L756.9 373.5M749.7 255.9L744.8 260.1M748.6 359.6L748.8 351.8M748.6 359.6L753.6 365.4M748.6 359.6L746.4 366.4M748.6 359.6L742.3 361.7M717.1 262.4L708.5 273.1M717.1 262.4L714.1 250.2M717.1 262.4L723.2 254.7M717.1 262.4L726.2 261.0M754.6 295.4L756.1 302.4M754.6 295.4L753.7 287.0M754.6 295.4L759.5 292.0M768.3 403.0L773.0 396.0M768.3 403.0L767.5 413.4M768.3 403.0L766.7 396.0M749.6 239.0L744.8 248.1M749.6 239.0L741.2 234.2M749.6 239.0L736.3 243.6M749.6 239.0L760.7 237.0M749.6 239.0L751.7 246.9M708.5 273.1L696.3 267.5M762.3 326.0L755.5 331.2M762.3 326.0L755.8 322.7M916.2 178.8L881.5 179.3M717.0 369.1L703.9 367.3M748.8 351.8L748.9 343.8M762.6 308.9L756.1 302.4M762.6 308.9L756.7 315.3M692.3 400.0L698.0 400.4M692.3 400.0L689.6 403.7M744.8 248.1L736.3 243.6M744.8 248.1L751.7 246.9M781.0 277.4L786.4 268.9M743.2 381.9L736.5 378.6M743.2 381.9L749.1 376.2M715.0 394.2L709.4 399.9M715.0 394.2L717.4 385.1M704.5 322.1L715.6 332.7M704.5 322.1L694.1 310.2M714.7 423.0L704.0 424.2M753.7 287.0L759.5 292.0M773.0 396.0L766.7 396.0M704.0 424.2L699.8 413.2M704.0 424.2L694.6 417.3M736.7 340.0L733.1 346.5M736.7 340.0L732.3 334.2M736.7 340.0L741.1 332.5M717.2 350.4L719.5 357.2M701.0 393.2L698.0 400.4M683.4 404.4L689.6 403.7M767.5 413.4L763.5 426.2M755.5 331.2L755.8 322.7M755.5 331.2L749.0 335.9M755.8 322.7L756.7 315.3M736.6 352.0L730.2 352.9M736.6 352.0L734.2 360.2M736.6 352.0L733.1 346.5M740.1 275.5L735.2 280.4M740.1 275.5L741.5 281.4M794.6 395.2L791.7 390.3M794.6 395.2L795.8 389.2M794.6 395.2L787.4 392.4M786.4 268.9L794.2 265.5M741.2 234.2L736.3 243.6M741.2 234.2L733.7 233.1M742.6 297.9L736.0 294.7M733.7 391.0L727.2 391.2M733.7 391.0L730.0 383.4M802.8 288.2L803.0 275.8M727.2 391.2L730.0 383.4M730.3 375.7L730.0 383.4M730.3 375.7L731.6 369.0M730.3 375.7L736.5 378.6M730.3 375.7L736.2 372.8M701.2 354.4L703.9 367.3M701.2 354.4L701.3 343.4M767.9 385.0L772.7 383.4M718.3 241.2L714.1 250.2M736.3 243.6L733.7 233.1M699.8 413.2L694.6 417.3M747.7 408.3L747.3 400.6M783.5 362.5L790.1 369.9M783.5 362.5L785.0 352.7M791.7 390.3L795.8 389.2M791.7 390.3L787.4 392.4M730.2 352.9L734.2 360.2M730.2 352.9L733.1 346.5M745.9 311.5L742.4 315.5M745.9 311.5L740.1 309.7M740.7 322.8L742.4 315.5M740.7 322.8L741.1 332.5M730.0 383.4L736.5 378.6M790.1 369.9L792.0 378.3M731.6 369.0L734.2 360.2M731.6 369.0L736.2 372.8M753.6 365.4L746.4 366.4M753.6 365.4L756.9 373.5M734.2 360.2L742.3 361.7M779.4 376.8L778.0 381.9M779.4 376.8L782.9 381.7M779.4 376.8L772.8 377.2M714.1 250.2L723.2 254.7M736.5 378.6L736.2 372.8M794.2 265.5L803.0 275.8M748.9 343.8L749.0 335.9M778.0 381.9L782.9 381.7M778.0 381.9L772.8 377.2M778.0 381.9L772.7 383.4M744.8 260.1L738.1 263.9M723.2 254.7L726.2 261.0M746.4 366.4L742.3 361.7M749.0 335.9L741.1 332.5M732.3 334.2L741.1 332.5M756.9 373.5L749.1 376.2M724.7 279.2L726.3 273.0M735.2 280.4L741.5 281.4M742.4 315.5L740.1 309.7M772.8 377.2L772.7 383.4" stroke="#06141c" stroke-width="0.55" fill="none" opacity="0.88"/><path d="M679 411.7L805.5 381.2" stroke="#9fd4ee" stroke-width="2.2" opacity="0.75"/><defs><linearGradient id="gF1" gradientUnits="userSpaceOnUse" x1="0" y1="227" x2="0" y2="450"><stop offset="0" stop-color="#b8a010"/><stop offset="0.6" stop-color="#b0a810"/><stop offset="0.76" stop-color="#78a838"/><stop offset="0.88" stop-color="#30a888"/><stop offset="1" stop-color="#2090c0"/></linearGradient><linearGradient id="gF3" gradientUnits="userSpaceOnUse" x1="0" y1="270" x2="0" y2="430"><stop offset="0" stop-color="#d83808"/><stop offset="0.18" stop-color="#c86810"/><stop offset="0.50" stop-color="#a87020"/><stop offset="0.68" stop-color="#585080"/><stop offset="0.80" stop-color="#1818a8"/><stop offset="1" stop-color="#1414a0"/></linearGradient><linearGradient id="gF4" gradientUnits="userSpaceOnUse" x1="0" y1="255" x2="0" y2="445"><stop offset="0" stop-color="#d04808"/><stop offset="0.25" stop-color="#d07810"/><stop offset="0.55" stop-color="#d09810"/><stop offset="0.74" stop-color="#c8c018"/><stop offset="0.88" stop-color="#88c040"/><stop offset="1" stop-color="#40b890"/></linearGradient></defs><polygon points="512.0,246.0 593.0,246.0 593.0,440.0 540.0,452.0 509.0,420.0" fill="url(#gF1)"/><polygon points="593.0,270.0 636.0,262.0 634.0,421.0 593.0,430.0" fill="url(#gF3)"/><polygon points="636.0,255.0 687.0,245.0 677.0,430.0 634.0,440.0" fill="url(#gF4)"/><polygon points="545.0,232.0 568.0,209.0 646.0,200.0 670.0,216.0 682.0,262.0 600.0,282.0 565.0,255.0" fill="#a89010"/><polygon points="672.0,232.0 689.0,228.0 687.0,275.0 672.0,272.0" fill="#f01808"/><path d="M511.8 214.4L693.4 182M511.8 214.4L509.8 226V420M503.5 420V460.6L543.8 493L663 457.5M550.5 264V470M509.8 226L560 230" stroke="#2f6fc0" stroke-width="0.7" fill="none" opacity="0.9"/><path d="M632.9 281.7L630.1 277.3L631.2 282.4zM601.4 287.2L600.8 282.4L599.6 287.1zM597.7 289.7L597.5 283.6L595.9 289.5zM622.5 291.9L623.7 286.3L620.8 291.3zM615.7 293.2L614.2 288.6L614.0 293.4zM600.1 294.7L598.1 289.9L598.3 295.1zM623.6 296.3L623.1 290.3L621.8 296.1zM620.5 298.4L621.3 290.6L618.7 297.9z" fill="#ff4700"/><path d="M605.1 283.4L602.3 277.2L603.4 283.9zM603.4 283.4L600.7 278.0L601.7 283.9zM606.7 284.2L606.8 280.0L605.0 283.8zM627.0 284.3L625.6 278.5L625.3 284.5zM613.0 285.3L610.3 281.0L611.4 286.0zM620.5 285.4L618.1 281.9L618.8 286.1zM596.3 285.8L593.4 281.0L594.7 286.5zM619.1 289.7L619.5 284.3L617.3 289.2zM623.8 292.2L622.2 286.5L622.0 292.4zM634.5 292.9L633.2 289.0L632.7 293.1zM610.9 293.5L609.7 289.0L609.1 293.7zM598.3 294.0L598.2 286.4L596.5 293.8zM604.5 295.6L604.0 289.9L602.7 295.5zM600.5 295.7L599.1 289.0L598.7 295.9zM627.1 296.3L626.4 291.4L625.3 296.2zM625.0 297.1L625.4 289.7L623.2 296.8zM596.1 298.0L592.2 291.1L594.4 298.7zM602.5 298.1L599.8 292.1L600.8 298.6zM619.0 298.5L615.9 293.4L617.3 299.1z" fill="#ffe000"/><path d="M615.4 284.5L616.7 277.4L613.6 284.0zM620.4 284.9L616.6 278.9L618.7 285.6zM596.8 285.8L594.3 280.8L595.1 286.3zM619.3 290.6L618.9 284.9L617.6 290.5zM623.9 290.8L625.3 283.8L622.2 290.3zM621.1 292.2L618.8 288.3L619.4 292.8zM611.2 292.7L611.0 287.0L609.4 292.5z" fill="#ff1400"/><path d="M605.8 285.0L606.8 280.0L604.1 284.4zM603.4 285.0L603.4 277.7L601.6 284.7zM626.1 285.2L624.4 280.5L624.3 285.5zM631.3 287.5L629.7 281.6L629.5 287.7zM611.5 289.9L610.4 284.1L609.7 290.0zM625.5 290.5L625.8 284.2L623.8 290.1zM620.9 290.6L620.5 283.8L619.1 290.5zM596.4 290.6L593.6 285.5L594.7 291.2zM599.7 292.9L598.8 285.9L597.9 292.9zM632.8 294.7L633.2 288.6L631.1 294.4zM598.8 295.6L598.2 290.9L597.0 295.5zM597.0 295.5L595.8 290.5L595.2 295.6zM603.8 296.3L601.7 291.4L602.0 296.7zM612.1 297.2L608.3 290.3L610.5 297.9zM596.0 298.4L597.5 290.6L594.3 297.8z" fill="#ff6100"/><path d="M631.3 285.3L629.8 280.6L629.5 285.5zM615.5 286.8L615.1 280.9L613.7 286.6zM614.8 287.4L616.2 280.7L613.1 286.9zM599.2 287.7L599.8 281.7L597.5 287.2zM599.1 287.2L596.4 281.7L597.4 287.7zM620.6 287.6L620.1 283.0L618.8 287.4zM613.8 287.4L611.0 283.5L612.2 288.2zM632.3 288.2L630.2 283.0L630.5 288.6zM603.1 288.9L604.4 283.1L601.4 288.3zM607.7 290.1L607.5 282.4L605.9 289.9zM598.9 290.7L597.8 286.0L597.1 290.8zM594.9 291.8L593.4 284.0L593.1 292.0zM606.5 292.2L605.0 286.7L604.7 292.3zM612.6 294.6L613.0 289.6L610.8 294.1zM634.3 296.5L632.2 291.2L632.6 296.9zM628.9 297.3L628.1 292.6L627.1 297.2zM605.6 298.3L603.8 292.7L603.9 298.6z" fill="#ff2e00"/><path d="M603.5 288.2L604.4 281.7L601.8 287.7zM616.6 292.7L616.4 285.9L614.8 292.5zM616.7 293.5L617.7 288.8L615.1 292.8zM611.9 293.3L612.6 285.3L610.1 293.0z" fill="#ff7a00"/><path d="M632.9 281.7L630.1 277.3L632.2 282.0zM605.1 283.4L602.3 277.2L604.4 283.6zM603.4 283.4L600.7 278.0L602.7 283.6zM606.7 284.2L606.8 280.0L606.0 284.1zM615.4 284.5L616.7 277.4L614.6 284.3zM627.0 284.3L625.6 278.5L626.3 284.4zM605.8 285.0L606.8 280.0L605.1 284.8zM603.4 285.0L603.4 277.7L602.6 284.9zM620.4 284.9L616.6 278.9L619.7 285.2zM626.1 285.2L624.4 280.5L625.3 285.3zM631.3 285.3L629.8 280.6L630.5 285.4zM613.0 285.3L610.3 281.0L612.3 285.6zM620.5 285.4L618.1 281.9L619.8 285.7zM596.8 285.8L594.3 280.8L596.1 286.0zM596.3 285.8L593.4 281.0L595.6 286.1zM615.5 286.8L615.1 280.9L614.7 286.7zM601.4 287.2L600.8 282.4L600.6 287.2zM614.8 287.4L616.2 280.7L614.1 287.2zM599.2 287.7L599.8 281.7L598.5 287.5zM599.1 287.2L596.4 281.7L598.4 287.4zM620.6 287.6L620.1 283.0L619.8 287.5zM631.3 287.5L629.7 281.6L630.5 287.6zM613.8 287.4L611.0 283.5L613.1 287.7zM603.5 288.2L604.4 281.7L602.8 288.0zM632.3 288.2L630.2 283.0L631.5 288.4zM603.1 288.9L604.4 283.1L602.4 288.6zM619.1 289.7L619.5 284.3L618.3 289.5zM597.7 289.7L597.5 283.6L596.9 289.6zM611.5 289.9L610.4 284.1L610.7 289.9zM607.7 290.1L607.5 282.4L607.0 290.0zM625.5 290.5L625.8 284.2L624.8 290.3zM620.9 290.6L620.5 283.8L620.1 290.6zM619.3 290.6L618.9 284.9L618.6 290.6zM623.9 290.8L625.3 283.8L623.2 290.6zM598.9 290.7L597.8 286.0L598.2 290.7zM596.4 290.6L593.6 285.5L595.7 290.8zM622.5 291.9L623.7 286.3L621.8 291.7zM594.9 291.8L593.4 284.0L594.2 291.9zM606.5 292.2L605.0 286.7L605.7 292.2zM623.8 292.2L622.2 286.5L623.0 292.3zM621.1 292.2L618.8 288.3L620.4 292.4zM616.6 292.7L616.4 285.9L615.8 292.6zM611.2 292.7L611.0 287.0L610.4 292.6zM599.7 292.9L598.8 285.9L598.9 292.9zM634.5 292.9L633.2 289.0L633.7 293.0zM616.7 293.5L617.7 288.8L616.0 293.2zM611.9 293.3L612.6 285.3L611.1 293.2zM615.7 293.2L614.2 288.6L615.0 293.3zM610.9 293.5L609.7 289.0L610.1 293.6zM598.3 294.0L598.2 286.4L597.5 293.9zM612.6 294.6L613.0 289.6L611.8 294.4zM632.8 294.7L633.2 288.6L632.1 294.6zM600.1 294.7L598.1 289.9L599.3 294.9zM598.8 295.6L598.2 290.9L598.0 295.5zM597.0 295.5L595.8 290.5L596.3 295.5zM604.5 295.6L604.0 289.9L603.7 295.6zM600.5 295.7L599.1 289.0L599.8 295.8zM623.6 296.3L623.1 290.3L622.8 296.2zM627.1 296.3L626.4 291.4L626.4 296.3zM603.8 296.3L601.7 291.4L603.0 296.5zM634.3 296.5L632.2 291.2L633.6 296.7zM625.0 297.1L625.4 289.7L624.3 297.0zM628.9 297.3L628.1 292.6L628.2 297.2zM612.1 297.2L608.3 290.3L611.4 297.5zM596.0 298.4L597.5 290.6L595.3 298.1zM620.5 298.4L621.3 290.6L619.7 298.2zM596.1 298.0L592.2 291.1L595.4 298.3zM602.5 298.1L599.8 292.1L601.8 298.3zM605.6 298.3L603.8 292.7L604.9 298.5zM619.0 298.5L615.9 293.4L618.3 298.8z" fill="#000" opacity="0.25"/><path d="M610.0 298.8L606.8 293.0L608.3 299.4zM630.3 301.2L627.1 295.1L628.7 301.9zM634.0 303.7L632.0 299.1L632.2 304.1zM601.9 303.8L600.2 298.0L600.1 304.0zM601.2 304.9L600.4 299.9L599.4 304.9zM616.1 305.3L615.3 298.8L614.3 305.3zM623.1 307.8L621.2 301.3L621.4 308.1zM623.5 308.2L622.7 302.8L621.7 308.1zM596.2 309.9L596.9 302.5L594.5 309.5zM625.0 310.0L626.7 302.2L623.3 309.4zM629.4 311.8L628.0 307.6L627.6 312.0zM613.8 311.9L610.9 304.7L612.0 312.4zM623.5 316.3L625.2 309.5L621.8 315.6z" fill="#ff7a00"/><path d="M597.8 299.3L595.4 293.2L596.1 299.7zM611.4 301.2L609.8 296.3L609.6 301.4zM596.8 305.4L595.7 300.2L595.0 305.5z" fill="#ff2e00"/><path d="M619.2 300.0L620.7 293.7L617.6 299.3zM616.1 300.4L612.9 293.8L614.4 301.0zM597.2 301.4L598.1 294.7L595.5 301.0zM633.7 301.4L632.3 295.9L631.9 301.6zM610.4 302.0L611.3 294.9L608.6 301.6zM634.3 302.3L635.5 297.0L632.7 301.6zM611.7 303.1L608.5 295.7L610.0 303.6zM595.8 305.7L596.1 300.7L594.0 305.3zM607.6 306.5L606.2 299.6L605.8 306.7zM602.2 311.5L598.6 304.3L600.5 312.1zM595.3 312.9L595.5 308.8L593.6 312.4zM602.7 313.7L604.4 306.7L601.0 313.1zM631.4 315.8L628.4 309.0L629.7 316.3z" fill="#ff4700"/><path d="M627.1 299.8L627.1 294.0L625.3 299.6zM616.0 300.0L613.7 293.6L614.2 300.3zM617.8 301.3L617.9 293.7L616.0 301.1zM632.2 304.0L630.0 296.3L630.4 304.3zM621.7 305.2L621.8 299.5L619.9 304.9zM626.1 306.3L626.4 301.3L624.3 305.9zM617.7 307.2L616.0 302.4L615.9 307.5zM614.8 310.5L611.9 305.5L613.1 311.2zM604.9 310.8L603.6 305.1L603.1 310.9zM595.6 311.0L592.2 304.1L593.9 311.6zM617.7 311.0L614.5 305.8L616.1 311.7zM620.9 312.1L621.4 304.8L619.2 311.7zM620.6 313.1L620.6 305.5L618.9 312.9zM614.1 315.9L615.4 310.0L612.4 315.3z" fill="#ff6100"/><path d="M602.1 300.4L599.3 295.2L600.4 301.0zM617.5 303.0L616.6 297.9L615.7 303.0zM626.8 304.0L625.3 299.8L625.0 304.3zM622.3 304.3L622.2 296.4L620.5 304.1zM618.2 305.2L618.2 299.9L616.5 304.9zM606.1 305.3L606.0 299.3L604.3 305.0zM626.9 307.0L623.8 300.4L625.1 307.5zM607.8 307.6L605.3 303.8L606.2 308.3zM598.0 308.9L599.7 301.1L596.3 308.4zM613.5 308.5L611.5 303.6L611.7 308.8zM623.5 308.9L621.1 301.3L621.7 309.2zM628.8 310.6L625.7 306.2L627.1 311.4zM622.3 311.1L621.3 306.4L620.5 311.1zM627.9 312.7L628.8 306.6L626.2 312.2zM632.3 312.8L633.1 308.1L630.6 312.2zM595.6 314.3L595.8 309.4L593.8 313.9zM634.3 315.0L636.0 308.7L632.7 314.3z" fill="#ffe000"/><path d="M602.1 304.1L600.9 298.2L600.3 304.2zM604.9 308.2L604.9 303.7L603.1 307.8zM607.2 308.7L606.6 302.6L605.4 308.6zM623.3 310.9L623.7 305.9L621.6 310.5zM620.0 311.0L619.9 306.0L618.2 310.7zM621.6 316.1L622.3 312.0L619.9 315.4zM602.3 316.0L602.2 310.6L600.5 315.8zM622.8 315.9L620.4 309.3L621.0 316.3z" fill="#ff9400"/><path d="M600.4 311.8L601.4 307.2L598.8 311.1zM614.2 314.2L612.5 306.5L612.4 314.4z" fill="#ffad00"/><path d="M610.0 298.8L606.8 293.0L609.3 299.0zM597.8 299.3L595.4 293.2L597.1 299.5zM619.2 300.0L620.7 293.7L618.5 299.7zM627.1 299.8L627.1 294.0L626.3 299.7zM616.0 300.0L613.7 293.6L615.3 300.1zM602.1 300.4L599.3 295.2L601.4 300.6zM616.1 300.4L612.9 293.8L615.4 300.7zM597.2 301.4L598.1 294.7L596.5 301.2zM617.8 301.3L617.9 293.7L617.0 301.2zM611.4 301.2L609.8 296.3L610.6 301.3zM633.7 301.4L632.3 295.9L633.0 301.5zM630.3 301.2L627.1 295.1L629.6 301.5zM610.4 302.0L611.3 294.9L609.6 301.8zM634.3 302.3L635.5 297.0L633.6 302.0zM617.5 303.0L616.6 297.9L616.8 303.0zM611.7 303.1L608.5 295.7L610.9 303.3zM634.0 303.7L632.0 299.1L633.2 303.8zM601.9 303.8L600.2 298.0L601.2 303.9zM626.8 304.0L625.3 299.8L626.0 304.1zM602.1 304.1L600.9 298.2L601.3 304.2zM632.2 304.0L630.0 296.3L631.4 304.2zM622.3 304.3L622.2 296.4L621.6 304.2zM601.2 304.9L600.4 299.9L600.4 304.9zM618.2 305.2L618.2 299.9L617.5 305.0zM621.7 305.2L621.8 299.5L620.9 305.1zM606.1 305.3L606.0 299.3L605.3 305.2zM616.1 305.3L615.3 298.8L615.3 305.3zM596.8 305.4L595.7 300.2L596.0 305.4zM595.8 305.7L596.1 300.7L595.0 305.5zM626.1 306.3L626.4 301.3L625.3 306.1zM607.6 306.5L606.2 299.6L606.8 306.6zM626.9 307.0L623.8 300.4L626.1 307.2zM617.7 307.2L616.0 302.4L616.9 307.3zM607.8 307.6L605.3 303.8L607.1 307.9zM623.1 307.8L621.2 301.3L622.4 307.9zM604.9 308.2L604.9 303.7L604.1 308.0zM623.5 308.2L622.7 302.8L622.7 308.2zM598.0 308.9L599.7 301.1L597.3 308.7zM613.5 308.5L611.5 303.6L612.7 308.6zM607.2 308.7L606.6 302.6L606.4 308.7zM623.5 308.9L621.1 301.3L622.7 309.0zM596.2 309.9L596.9 302.5L595.5 309.7zM625.0 310.0L626.7 302.2L624.3 309.8zM623.3 310.9L623.7 305.9L622.6 310.7zM614.8 310.5L611.9 305.5L614.1 310.8zM604.9 310.8L603.6 305.1L604.2 310.9zM620.0 311.0L619.9 306.0L619.2 310.9zM628.8 310.6L625.7 306.2L628.1 311.0zM622.3 311.1L621.3 306.4L621.5 311.1zM595.6 311.0L592.2 304.1L594.8 311.3zM617.7 311.0L614.5 305.8L617.0 311.3zM600.4 311.8L601.4 307.2L599.7 311.5zM602.2 311.5L598.6 304.3L601.5 311.7zM629.4 311.8L628.0 307.6L628.6 311.9zM620.9 312.1L621.4 304.8L620.2 311.9zM613.8 311.9L610.9 304.7L613.0 312.1zM627.9 312.7L628.8 306.6L627.2 312.5zM632.3 312.8L633.1 308.1L631.6 312.5zM595.3 312.9L595.5 308.8L594.5 312.7zM620.6 313.1L620.6 305.5L619.9 313.0zM602.7 313.7L604.4 306.7L602.0 313.5zM595.6 314.3L595.8 309.4L594.8 314.2zM614.2 314.2L612.5 306.5L613.4 314.3zM634.3 315.0L636.0 308.7L633.6 314.7zM614.1 315.9L615.4 310.0L613.4 315.7zM621.6 316.1L622.3 312.0L620.9 315.8zM602.3 316.0L602.2 310.6L601.5 315.9zM623.5 316.3L625.2 309.5L622.8 316.0zM631.4 315.8L628.4 309.0L630.7 316.0zM622.8 315.9L620.4 309.3L622.0 316.1z" fill="#000" opacity="0.25"/><path d="M614.5 316.4L615.5 309.9L612.8 315.9zM596.5 317.0L594.8 312.6L594.7 317.3zM611.8 320.1L613.2 314.7L610.2 319.3zM603.4 319.4L600.6 314.8L601.7 320.0zM607.7 320.0L607.3 315.1L606.0 319.8zM603.4 321.7L604.9 314.6L601.7 321.1zM617.4 323.0L618.0 317.7L615.7 322.6zM634.4 326.8L632.0 323.2L632.7 327.5zM623.9 327.4L620.7 320.6L622.2 328.0z" fill="#ff6100"/><path d="M626.6 316.6L624.8 311.6L624.8 316.9zM617.5 317.2L618.8 310.3L615.7 316.6zM624.7 318.3L622.8 312.2L622.9 318.6zM613.4 319.3L611.3 315.3L611.6 319.8zM595.6 321.2L594.2 317.1L593.8 321.4zM597.7 321.3L596.5 315.6L595.9 321.4zM620.0 322.8L618.9 316.4L618.3 322.9zM609.7 323.5L607.4 317.7L607.9 323.9zM618.7 324.6L616.2 318.2L617.0 325.1zM633.9 325.7L634.3 317.9L632.1 325.4zM622.3 325.8L622.0 321.4L620.5 325.5zM627.5 326.3L626.7 318.6L625.7 326.3zM625.0 326.5L623.9 322.2L623.2 326.5zM630.9 328.5L633.3 321.1L629.3 327.7zM599.6 329.0L600.0 324.6L597.9 328.4zM595.6 330.2L594.0 323.8L593.8 330.4zM598.4 330.4L595.9 323.7L596.6 330.8zM615.9 331.3L616.9 325.5L614.2 330.7zM609.5 331.1L608.0 324.8L607.7 331.3zM603.5 332.5L601.0 326.7L601.7 333.0zM617.5 333.3L619.6 325.7L615.8 332.6z" fill="#ffe000"/><path d="M610.6 316.4L607.9 312.6L608.9 317.1zM624.3 316.9L624.2 309.3L622.5 316.7zM602.5 317.6L603.3 311.7L600.7 317.1zM606.6 318.8L604.6 313.1L604.8 319.1zM607.9 319.0L607.3 313.6L606.1 318.9zM601.7 319.4L602.5 312.7L600.0 319.0zM609.5 319.8L607.9 315.7L607.7 320.0zM625.9 320.2L626.9 312.4L624.1 319.7zM630.1 323.1L629.6 317.0L628.3 323.0zM604.9 324.7L604.3 320.6L603.1 324.6zM618.2 328.5L619.1 322.5L616.5 327.9zM613.9 328.0L611.0 322.2L612.2 328.6zM628.2 330.0L628.2 322.7L626.4 329.8zM594.9 329.6L591.1 322.5L593.2 330.3z" fill="#ffad00"/><path d="M631.0 318.4L628.0 311.0L629.2 318.9zM632.2 318.3L629.5 314.6L630.5 319.1zM604.0 319.3L605.0 314.4L602.4 318.6zM609.3 321.7L609.1 315.4L607.5 321.5zM609.5 323.9L609.8 317.6L607.7 323.6zM610.0 324.2L611.1 317.2L608.3 323.7zM606.2 325.1L608.0 318.1L604.5 324.4zM617.6 325.1L617.4 317.1L615.8 324.9zM629.1 326.0L626.3 321.0L627.5 326.6zM598.1 326.1L595.2 319.9L596.4 326.6zM621.2 327.0L620.9 320.0L619.4 326.8zM608.5 328.2L608.4 323.0L606.7 327.9zM602.5 328.0L601.3 321.1L600.7 328.1zM613.0 328.3L613.5 322.6L611.2 327.9zM613.4 328.5L615.2 322.3L611.8 327.8zM624.0 328.6L622.8 322.0L622.2 328.7z" fill="#ff7a00"/><path d="M624.0 320.5L622.2 316.7L622.2 320.8zM623.5 321.1L622.0 316.6L621.7 321.3zM619.5 324.3L617.8 318.3L617.8 324.5zM602.9 324.1L600.0 319.8L601.2 324.8zM613.9 327.9L613.6 320.6L612.1 327.7zM611.7 328.4L610.7 323.1L609.9 328.4z" fill="#ff9400"/><path d="M607.3 327.5L607.4 322.2L605.6 327.2zM604.9 327.9L602.8 321.0L603.2 328.2zM631.1 328.7L628.9 323.8L629.3 329.2zM608.3 332.7L608.0 325.6L606.5 332.6z" fill="#ffc700"/><path d="M614.5 316.4L615.5 309.9L613.8 316.2zM626.6 316.6L624.8 311.6L625.8 316.7zM610.6 316.4L607.9 312.6L609.9 316.7zM624.3 316.9L624.2 309.3L623.5 316.8zM617.5 317.2L618.8 310.3L616.7 316.9zM596.5 317.0L594.8 312.6L595.7 317.1zM602.5 317.6L603.3 311.7L601.7 317.4zM624.7 318.3L622.8 312.2L623.9 318.4zM631.0 318.4L628.0 311.0L630.2 318.6zM632.2 318.3L629.5 314.6L631.5 318.6zM606.6 318.8L604.6 313.1L605.9 318.9zM604.0 319.3L605.0 314.4L603.3 319.0zM607.9 319.0L607.3 313.6L607.2 319.0zM601.7 319.4L602.5 312.7L601.0 319.2zM613.4 319.3L611.3 315.3L612.6 319.5zM611.8 320.1L613.2 314.7L611.1 319.7zM603.4 319.4L600.6 314.8L602.7 319.7zM607.7 320.0L607.3 315.1L607.0 319.9zM609.5 319.8L607.9 315.7L608.8 319.9zM625.9 320.2L626.9 312.4L625.1 320.0zM624.0 320.5L622.2 316.7L623.2 320.6zM623.5 321.1L622.0 316.6L622.7 321.2zM595.6 321.2L594.2 317.1L594.8 321.3zM597.7 321.3L596.5 315.6L597.0 321.3zM603.4 321.7L604.9 314.6L602.6 321.4zM609.3 321.7L609.1 315.4L608.5 321.7zM617.4 323.0L618.0 317.7L616.7 322.8zM620.0 322.8L618.9 316.4L619.3 322.8zM630.1 323.1L629.6 317.0L629.4 323.1zM609.7 323.5L607.4 317.7L608.9 323.7zM609.5 323.9L609.8 317.6L608.8 323.7zM610.0 324.2L611.1 317.2L609.3 323.9zM619.5 324.3L617.8 318.3L618.8 324.4zM602.9 324.1L600.0 319.8L602.2 324.4zM604.9 324.7L604.3 320.6L604.1 324.7zM606.2 325.1L608.0 318.1L605.5 324.8zM618.7 324.6L616.2 318.2L618.0 324.8zM617.6 325.1L617.4 317.1L616.9 325.0zM633.9 325.7L634.3 317.9L633.2 325.5zM622.3 325.8L622.0 321.4L621.5 325.7zM627.5 326.3L626.7 318.6L626.7 326.3zM629.1 326.0L626.3 321.0L628.4 326.3zM598.1 326.1L595.2 319.9L597.4 326.3zM625.0 326.5L623.9 322.2L624.2 326.5zM621.2 327.0L620.9 320.0L620.5 326.9zM634.4 326.8L632.0 323.2L633.7 327.1zM607.3 327.5L607.4 322.2L606.6 327.4zM623.9 327.4L620.7 320.6L623.2 327.7zM613.9 327.9L613.6 320.6L613.1 327.8zM608.5 328.2L608.4 323.0L607.7 328.1zM604.9 327.9L602.8 321.0L604.2 328.0zM602.5 328.0L601.3 321.1L601.7 328.0zM613.0 328.3L613.5 322.6L612.3 328.1zM630.9 328.5L633.3 321.1L630.2 328.2zM613.4 328.5L615.2 322.3L612.7 328.2zM618.2 328.5L619.1 322.5L617.5 328.2zM613.9 328.0L611.0 322.2L613.2 328.3zM611.7 328.4L610.7 323.1L611.0 328.4zM624.0 328.6L622.8 322.0L623.2 328.6zM599.6 329.0L600.0 324.6L598.8 328.7zM631.1 328.7L628.9 323.8L630.3 328.9zM628.2 330.0L628.2 322.7L627.4 329.9zM594.9 329.6L591.1 322.5L594.2 329.9zM595.6 330.2L594.0 323.8L594.9 330.3zM598.4 330.4L595.9 323.7L597.6 330.5zM615.9 331.3L616.9 325.5L615.2 331.0zM609.5 331.1L608.0 324.8L608.7 331.2zM608.3 332.7L608.0 325.6L607.6 332.6zM603.5 332.5L601.0 326.7L602.7 332.7zM617.5 333.3L619.6 325.7L616.8 333.0z" fill="#000" opacity="0.25"/><path d="M601.5 333.1L600.9 327.0L599.7 333.0zM601.7 334.1L602.4 329.2L600.0 333.6zM628.6 334.2L626.8 328.5L626.8 334.4zM606.2 339.1L604.7 332.2L604.5 339.3zM626.7 339.1L625.1 334.3L625.0 339.4zM634.5 340.1L636.5 333.7L632.9 339.3zM595.5 342.5L593.5 337.9L593.8 343.0zM618.1 343.6L619.6 337.6L616.5 342.9zM628.2 343.7L628.0 339.1L626.4 343.4zM602.8 344.8L601.2 337.3L601.0 345.0zM626.2 346.3L625.0 340.8L624.4 346.4z" fill="#ff9400"/><path d="M628.3 334.1L629.5 329.5L626.7 333.3zM598.4 335.0L596.6 328.3L596.6 335.2zM619.6 335.8L617.9 329.5L617.9 336.0zM611.4 339.0L610.7 333.1L609.6 338.9zM597.8 339.4L598.3 334.9L596.1 338.8zM614.2 339.8L611.3 335.1L612.5 340.5zM600.6 340.6L598.1 336.7L598.9 341.3zM620.0 341.3L620.8 335.3L618.3 340.8zM613.7 342.3L614.3 335.5L611.9 341.9zM603.4 342.7L604.3 336.7L601.7 342.2zM624.3 342.8L620.6 335.7L622.6 343.4zM607.4 343.7L605.5 339.5L605.6 344.1zM609.6 344.6L608.5 339.2L607.8 344.7zM615.5 345.1L615.8 340.9L613.8 344.5zM620.0 347.5L621.7 341.1L618.3 346.8zM603.6 347.4L603.3 341.9L601.8 347.2z" fill="#ffad00"/><path d="M602.2 334.1L600.9 329.6L600.4 334.2zM622.4 335.4L623.7 328.6L620.7 334.9zM611.1 338.3L609.6 333.6L609.3 338.6z" fill="#ff7a00"/><path d="M624.3 334.7L624.1 329.0L622.6 334.5zM609.5 335.1L608.9 329.5L607.7 335.0zM603.9 335.3L604.2 328.4L602.2 335.0zM619.9 337.9L619.8 331.4L618.1 337.7zM596.7 338.4L595.5 334.4L594.9 338.6zM612.0 339.3L611.1 333.8L610.2 339.3zM602.3 339.8L604.3 333.0L600.6 339.1zM603.2 339.9L605.1 333.6L601.6 339.2zM615.0 339.7L612.6 333.3L613.2 340.1zM634.1 339.8L631.9 333.6L632.3 340.2zM607.6 340.2L605.8 332.8L605.8 340.4zM625.4 340.7L625.5 335.9L623.6 340.3zM605.1 340.3L602.6 336.1L603.4 340.9zM629.2 341.1L631.2 334.6L627.6 340.4zM597.4 341.0L596.4 335.1L595.6 341.1zM614.3 342.6L613.6 336.9L612.5 342.5zM596.7 343.1L597.6 338.0L595.0 342.4zM603.1 343.9L600.9 336.3L601.3 344.2zM608.9 344.7L607.1 339.0L607.1 345.0zM634.1 347.7L631.7 344.3L632.5 348.4zM602.1 348.0L599.6 342.9L600.4 348.5zM597.5 349.9L599.4 343.5L595.8 349.1zM628.7 349.5L624.7 342.8L627.0 350.3zM607.8 350.1L606.1 344.0L606.0 350.4z" fill="#ffe000"/><path d="M603.2 335.7L600.4 330.8L601.5 336.3zM616.3 336.7L614.8 330.6L614.5 336.9zM628.0 337.1L624.9 332.5L626.3 337.9zM607.1 340.1L607.9 335.8L605.4 339.4zM611.4 341.1L608.7 335.8L609.7 341.7zM609.9 341.8L608.1 335.4L608.1 342.1zM597.3 341.6L594.6 337.5L595.6 342.3zM611.3 342.6L609.7 335.4L609.5 342.8zM621.5 343.3L620.9 338.3L619.7 343.2zM596.2 343.8L598.2 336.1L594.6 343.1zM608.5 346.4L608.8 339.0L606.8 346.1zM604.2 348.1L603.4 341.2L602.4 348.1zM606.4 348.9L608.2 341.8L604.8 348.2zM619.1 349.6L621.3 341.9L617.4 348.9zM630.3 349.8L631.2 342.4L628.6 349.3z" fill="#ffc700"/><path d="M617.4 348.7L614.5 341.2L615.7 349.1z" fill="#fffa00"/><path d="M601.5 333.1L600.9 327.0L600.7 333.1zM628.3 334.1L629.5 329.5L627.6 333.8zM601.7 334.1L602.4 329.2L601.0 333.9zM602.2 334.1L600.9 329.6L601.5 334.1zM628.6 334.2L626.8 328.5L627.8 334.3zM624.3 334.7L624.1 329.0L623.6 334.6zM609.5 335.1L608.9 329.5L608.8 335.1zM598.4 335.0L596.6 328.3L597.7 335.1zM622.4 335.4L623.7 328.6L621.7 335.2zM603.9 335.3L604.2 328.4L603.2 335.2zM619.6 335.8L617.9 329.5L618.9 335.9zM603.2 335.7L600.4 330.8L602.5 336.0zM616.3 336.7L614.8 330.6L615.6 336.8zM628.0 337.1L624.9 332.5L627.3 337.5zM619.9 337.9L619.8 331.4L619.1 337.8zM611.1 338.3L609.6 333.6L610.3 338.4zM596.7 338.4L595.5 334.4L595.9 338.5zM611.4 339.0L610.7 333.1L610.7 338.9zM597.8 339.4L598.3 334.9L597.0 339.1zM606.2 339.1L604.7 332.2L605.5 339.2zM626.7 339.1L625.1 334.3L626.0 339.3zM612.0 339.3L611.1 333.8L611.2 339.3zM602.3 339.8L604.3 333.0L601.6 339.5zM603.2 339.9L605.1 333.6L602.6 339.6zM634.5 340.1L636.5 333.7L633.8 339.7zM607.1 340.1L607.9 335.8L606.4 339.8zM615.0 339.7L612.6 333.3L614.2 339.9zM634.1 339.8L631.9 333.6L633.3 340.0zM614.2 339.8L611.3 335.1L613.5 340.1zM607.6 340.2L605.8 332.8L606.8 340.3zM625.4 340.7L625.5 335.9L624.6 340.5zM605.1 340.3L602.6 336.1L604.4 340.6zM629.2 341.1L631.2 334.6L628.5 340.8zM600.6 340.6L598.1 336.7L599.9 340.9zM597.4 341.0L596.4 335.1L596.7 341.0zM620.0 341.3L620.8 335.3L619.3 341.1zM611.4 341.1L608.7 335.8L610.7 341.3zM609.9 341.8L608.1 335.4L609.1 341.9zM597.3 341.6L594.6 337.5L596.6 341.9zM613.7 342.3L614.3 335.5L612.9 342.1zM603.4 342.7L604.3 336.7L602.7 342.5zM614.3 342.6L613.6 336.9L613.5 342.5zM611.3 342.6L609.7 335.4L610.6 342.7zM595.5 342.5L593.5 337.9L594.8 342.7zM596.7 343.1L597.6 338.0L596.0 342.8zM624.3 342.8L620.6 335.7L623.6 343.0zM621.5 343.3L620.9 338.3L620.8 343.2zM618.1 343.6L619.6 337.6L617.4 343.3zM596.2 343.8L598.2 336.1L595.5 343.5zM628.2 343.7L628.0 339.1L627.4 343.6zM607.4 343.7L605.5 339.5L606.6 343.9zM603.1 343.9L600.9 336.3L602.3 344.0zM609.6 344.6L608.5 339.2L608.8 344.7zM615.5 345.1L615.8 340.9L614.7 344.8zM608.9 344.7L607.1 339.0L608.1 344.9zM602.8 344.8L601.2 337.3L602.1 344.9zM608.5 346.4L608.8 339.0L607.8 346.3zM626.2 346.3L625.0 340.8L625.4 346.3zM620.0 347.5L621.7 341.1L619.3 347.2zM603.6 347.4L603.3 341.9L602.8 347.3zM634.1 347.7L631.7 344.3L633.4 348.0zM604.2 348.1L603.4 341.2L603.5 348.1zM602.1 348.0L599.6 342.9L601.4 348.2zM606.4 348.9L608.2 341.8L605.7 348.6zM617.4 348.7L614.5 341.2L616.7 348.8zM619.1 349.6L621.3 341.9L618.4 349.3zM597.5 349.9L599.4 343.5L596.8 349.5zM630.3 349.8L631.2 342.4L629.6 349.6zM628.7 349.5L624.7 342.8L628.0 349.8zM607.8 350.1L606.1 344.0L607.0 350.2z" fill="#000" opacity="0.25"/><path d="M603.5 350.4L603.5 344.6L601.7 350.1zM605.6 351.4L606.7 345.7L603.9 350.8zM631.3 351.3L631.1 345.8L629.5 351.1zM595.3 351.6L594.5 345.2L593.5 351.6zM609.8 352.1L610.5 346.7L608.1 351.6zM614.5 352.3L612.6 345.1L612.7 352.5zM616.6 352.8L617.2 347.5L614.8 352.3zM633.2 352.4L630.1 345.5L631.5 352.9zM595.0 354.5L593.9 348.2L593.2 354.5zM595.4 354.6L593.2 350.8L593.7 355.1zM602.3 356.6L600.2 349.7L600.5 356.9zM616.0 357.1L613.3 349.6L614.2 357.5zM622.7 357.4L622.4 352.3L620.9 357.2zM633.7 357.3L632.7 350.1L631.9 357.3zM634.3 357.7L636.3 350.5L632.6 357.0zM619.7 359.0L620.6 352.6L618.0 358.5zM625.3 358.6L622.9 354.9L623.7 359.2zM626.5 360.6L623.9 354.0L624.7 361.1zM626.8 361.1L627.3 354.8L625.0 360.7zM633.7 361.4L632.9 356.1L631.9 361.3zM594.9 361.5L594.7 356.5L593.1 361.3zM622.6 361.4L620.2 357.4L620.9 362.0zM624.6 361.5L622.3 357.3L622.9 362.0zM600.5 361.8L599.9 354.3L598.7 361.7zM594.9 361.8L592.5 354.6L593.2 362.1zM631.0 362.2L631.2 356.1L629.2 361.9zM617.6 362.7L617.8 358.0L615.8 362.3zM614.4 363.2L612.4 357.3L612.6 363.6zM608.8 363.6L607.1 356.0L607.0 363.8zM605.9 364.9L605.6 358.9L604.1 364.7zM621.3 365.3L621.1 359.6L619.5 365.0zM622.4 364.9L619.3 358.2L620.7 365.5zM623.2 365.0L620.1 358.5L621.5 365.6zM629.6 365.9L629.1 358.6L627.8 365.8zM622.5 367.6L623.1 363.5L620.8 367.0zM614.4 367.7L612.1 360.0L612.6 368.0zM600.3 367.9L597.6 363.0L598.6 368.5z" fill="#ffe000"/><path d="M609.0 351.2L610.0 346.2L607.4 350.5zM608.0 353.4L607.6 345.9L606.3 353.3zM605.4 353.7L605.8 349.5L603.7 353.1zM606.0 356.6L606.5 351.9L604.2 356.1zM620.5 358.2L618.9 352.1L618.7 358.4zM613.0 363.8L612.5 357.9L611.2 363.7zM596.1 365.6L596.8 358.8L594.3 365.1zM609.4 366.2L609.3 359.1L607.6 366.0z" fill="#ffad00"/><path d="M595.3 351.1L595.1 343.8L593.5 350.9zM627.9 354.2L625.5 349.2L626.2 354.7zM598.5 354.5L596.3 348.2L596.7 354.8zM612.5 359.0L610.8 355.0L610.7 359.3zM614.6 360.4L613.2 353.6L612.8 360.5zM619.2 361.7L620.6 355.7L617.5 361.1zM607.9 362.0L606.1 354.5L606.1 362.2zM622.9 362.7L621.6 358.7L621.2 362.9zM632.6 363.9L629.9 359.2L631.0 364.5zM610.0 365.0L608.8 357.9L608.2 365.1z" fill="#ffc700"/><path d="M613.1 351.4L614.2 345.7L611.4 350.8zM626.8 356.9L626.7 352.5L625.0 356.5z" fill="#ff9400"/><path d="M624.8 352.8L621.6 348.0L623.2 353.5zM615.8 353.2L614.7 345.8L614.0 353.2zM623.6 354.1L622.9 348.1L621.8 354.0zM606.0 361.7L602.2 355.1L604.3 362.4zM621.5 362.4L622.4 357.9L619.8 361.7zM624.8 366.6L624.1 359.7L623.0 366.5zM630.2 366.7L628.5 360.7L628.5 367.0zM618.6 367.2L618.6 361.2L616.8 366.9zM598.5 367.0L597.3 360.7L596.7 367.1zM630.4 367.5L627.6 361.9L628.7 368.1zM619.2 368.3L619.7 362.2L617.5 367.9z" fill="#fffa00"/><path d="M615.1 364.9L613.9 357.5L613.3 364.9zM616.2 366.8L614.5 359.0L614.4 367.0z" fill="#e3ff1a"/><path d="M603.5 350.4L603.5 344.6L602.7 350.3zM609.0 351.2L610.0 346.2L608.3 350.9zM595.3 351.1L595.1 343.8L594.6 351.0zM605.6 351.4L606.7 345.7L604.9 351.1zM613.1 351.4L614.2 345.7L612.3 351.2zM631.3 351.3L631.1 345.8L630.5 351.2zM595.3 351.6L594.5 345.2L594.6 351.6zM609.8 352.1L610.5 346.7L609.1 351.9zM614.5 352.3L612.6 345.1L613.7 352.4zM616.6 352.8L617.2 347.5L615.8 352.6zM633.2 352.4L630.1 345.5L632.5 352.6zM624.8 352.8L621.6 348.0L624.1 353.1zM615.8 353.2L614.7 345.8L615.0 353.2zM608.0 353.4L607.6 345.9L607.3 353.4zM605.4 353.7L605.8 349.5L604.7 353.5zM623.6 354.1L622.9 348.1L622.8 354.1zM627.9 354.2L625.5 349.2L627.2 354.4zM595.0 354.5L593.9 348.2L594.2 354.5zM598.5 354.5L596.3 348.2L597.7 354.6zM595.4 354.6L593.2 350.8L594.7 354.8zM606.0 356.6L606.5 351.9L605.2 356.4zM626.8 356.9L626.7 352.5L626.0 356.7zM602.3 356.6L600.2 349.7L601.5 356.7zM616.0 357.1L613.3 349.6L615.2 357.3zM622.7 357.4L622.4 352.3L621.9 357.3zM633.7 357.3L632.7 350.1L632.9 357.3zM634.3 357.7L636.3 350.5L633.6 357.4zM620.5 358.2L618.9 352.1L619.7 358.3zM619.7 359.0L620.6 352.6L619.0 358.8zM625.3 358.6L622.9 354.9L624.6 358.9zM612.5 359.0L610.8 355.0L611.7 359.1zM614.6 360.4L613.2 353.6L613.9 360.4zM626.5 360.6L623.9 354.0L625.7 360.8zM626.8 361.1L627.3 354.8L626.0 361.0zM633.7 361.4L632.9 356.1L633.0 361.4zM619.2 361.7L620.6 355.7L618.5 361.4zM594.9 361.5L594.7 356.5L594.2 361.4zM622.6 361.4L620.2 357.4L621.9 361.7zM624.6 361.5L622.3 357.3L623.9 361.7zM600.5 361.8L599.9 354.3L599.7 361.8zM594.9 361.8L592.5 354.6L594.2 361.9zM606.0 361.7L602.2 355.1L605.3 362.0zM621.5 362.4L622.4 357.9L620.8 362.1zM631.0 362.2L631.2 356.1L630.3 362.1zM607.9 362.0L606.1 354.5L607.1 362.1zM617.6 362.7L617.8 358.0L616.9 362.6zM622.9 362.7L621.6 358.7L622.2 362.7zM614.4 363.2L612.4 357.3L613.6 363.4zM608.8 363.6L607.1 356.0L608.0 363.6zM613.0 363.8L612.5 357.9L612.2 363.7zM632.6 363.9L629.9 359.2L631.9 364.1zM605.9 364.9L605.6 358.9L605.1 364.8zM615.1 364.9L613.9 357.5L614.3 364.9zM610.0 365.0L608.8 357.9L609.2 365.0zM621.3 365.3L621.1 359.6L620.5 365.2zM622.4 364.9L619.3 358.2L621.7 365.1zM623.2 365.0L620.1 358.5L622.5 365.3zM596.1 365.6L596.8 358.8L595.3 365.4zM629.6 365.9L629.1 358.6L628.9 365.9zM609.4 366.2L609.3 359.1L608.6 366.1zM624.8 366.6L624.1 359.7L624.0 366.5zM630.2 366.7L628.5 360.7L629.5 366.8zM616.2 366.8L614.5 359.0L615.5 366.9zM618.6 367.2L618.6 361.2L617.8 367.0zM598.5 367.0L597.3 360.7L597.7 367.1zM622.5 367.6L623.1 363.5L621.8 367.4zM630.4 367.5L627.6 361.9L629.6 367.8zM614.4 367.7L612.1 360.0L613.6 367.8zM619.2 368.3L619.7 362.2L618.5 368.1zM600.3 367.9L597.6 363.0L599.6 368.1z" fill="#000" opacity="0.25"/><path d="M625.6 368.0L623.3 362.8L623.9 368.5zM628.3 368.3L625.9 363.9L626.6 368.8zM628.7 369.7L627.1 365.8L627.0 370.0zM609.1 372.5L608.3 365.6L607.3 372.5zM616.6 373.1L615.4 369.3L615.2 373.3zM601.3 376.9L601.3 374.3L600.0 376.6zM602.1 383.1L600.4 380.3L600.8 383.6zM610.7 384.2L610.3 380.9L609.3 384.1zM608.1 384.8L608.8 380.9L606.8 384.3zM607.5 387.7L606.8 385.6L606.1 387.7z" fill="#ffe000"/><path d="M624.6 369.6L622.9 365.6L622.8 370.0zM632.5 371.2L632.4 366.3L630.8 370.9zM609.6 378.5L608.5 376.2L608.2 378.8zM612.0 382.4L612.5 379.1L610.7 381.8zM622.0 383.0L621.5 380.2L620.6 383.0zM615.4 387.6L614.6 383.7L614.0 387.6z" fill="#fffa00"/><path d="M626.6 369.9L624.8 364.3L624.8 370.2zM633.9 370.5L633.7 363.6L632.1 370.3zM621.0 371.5L618.6 368.1L619.3 372.2zM599.3 376.6L598.5 374.5L597.9 376.6zM612.9 381.8L611.2 379.1L611.5 382.3zM603.1 384.5L601.5 381.1L601.8 384.9zM600.4 386.4L600.0 384.1L599.0 386.2zM604.1 386.6L603.0 384.4L602.7 386.9z" fill="#e3ff1a"/><path d="M625.7 370.9L625.8 363.0L623.9 370.7zM628.9 371.6L629.4 366.6L627.2 371.1zM611.1 371.0L607.0 364.2L609.4 371.8zM619.3 371.9L620.2 367.5L617.7 371.2zM633.0 372.3L630.7 365.5L631.2 372.6z" fill="#ffc700"/><path d="M626.5 372.8L626.9 369.0L625.2 372.4zM627.9 377.3L626.4 374.1L626.5 377.6zM609.6 378.2L610.4 374.5L608.3 377.7zM623.7 379.4L623.5 376.7L622.3 379.1zM610.4 379.2L609.2 375.9L609.0 379.4zM631.4 380.3L630.2 378.0L630.0 380.6zM609.0 382.6L609.5 379.6L607.7 382.0zM595.5 383.9L595.4 380.5L594.1 383.6z" fill="#0000be"/><path d="M623.0 372.9L622.0 370.7L621.6 373.0zM602.7 374.1L601.4 372.4L601.4 374.6zM633.0 375.4L632.1 371.9L631.6 375.5zM603.0 376.0L602.7 372.0L601.6 375.8zM630.9 378.5L630.6 375.7L629.5 378.3zM630.4 378.6L628.9 376.1L629.1 379.1zM627.7 379.6L628.3 375.9L626.4 379.1zM627.6 381.6L626.1 379.2L626.3 382.1zM624.2 384.9L623.9 382.1L622.8 384.6zM610.0 385.1L607.8 381.9L608.7 385.6zM625.1 387.3L623.8 385.3L623.8 387.7z" fill="#0000ec"/><path d="M620.9 373.3L621.8 369.6L619.6 372.7zM620.2 373.0L619.1 369.8L618.9 373.2zM597.3 379.3L596.0 375.7L595.9 379.5z" fill="#0005ff"/><path d="M634.5 375.3L634.5 372.0L633.1 375.0zM633.3 377.2L633.4 374.1L632.0 376.9zM596.5 385.4L594.7 383.0L595.2 386.0zM625.3 387.6L624.4 385.0L623.9 387.7zM627.3 387.9L627.1 385.7L625.9 387.5zM609.0 388.0L608.5 384.6L607.6 388.0zM622.5 388.0L621.2 386.1L621.2 388.4z" fill="#0000a6"/><path d="M615.5 375.3L614.2 372.6L614.1 375.6zM605.9 376.0L605.2 372.4L604.5 376.0zM616.9 376.2L616.3 372.6L615.5 376.2zM604.2 377.8L604.3 375.2L602.9 377.3zM631.7 379.7L632.0 377.4L630.4 379.1zM605.1 379.8L605.7 376.6L603.8 379.3zM627.9 382.7L628.1 379.1L626.5 382.3zM628.5 384.2L627.5 381.0L627.1 384.3zM608.5 385.0L608.7 382.3L607.2 384.5zM598.8 384.9L598.0 381.4L597.4 384.9zM632.0 387.7L632.4 384.4L630.6 387.2zM630.0 387.8L628.4 385.5L628.6 388.3z" fill="#0000d5"/><path d="M625.6 368.0L623.3 362.8L624.9 368.2zM628.3 368.3L625.9 363.9L627.6 368.5zM624.6 369.6L622.9 365.6L623.9 369.8zM628.7 369.7L627.1 365.8L628.0 369.8zM626.6 369.9L624.8 364.3L625.8 370.0zM633.9 370.5L633.7 363.6L633.1 370.4zM625.7 370.9L625.8 363.0L624.9 370.8zM632.5 371.2L632.4 366.3L631.8 371.1zM628.9 371.6L629.4 366.6L628.2 371.3zM611.1 371.0L607.0 364.2L610.4 371.3zM619.3 371.9L620.2 367.5L618.6 371.6zM621.0 371.5L618.6 368.1L620.3 371.8zM633.0 372.3L630.7 365.5L632.2 372.4zM609.1 372.5L608.3 365.6L608.3 372.5zM626.5 372.8L626.9 369.0L626.0 372.6zM623.0 372.9L622.0 370.7L622.4 372.9zM620.9 373.3L621.8 369.6L620.4 373.0zM620.2 373.0L619.1 369.8L619.7 373.1zM616.6 373.1L615.4 369.3L616.0 373.1zM602.7 374.1L601.4 372.4L602.2 374.3zM634.5 375.3L634.5 372.0L633.9 375.2zM633.0 375.4L632.1 371.9L632.4 375.5zM615.5 375.3L614.2 372.6L614.9 375.5zM603.0 376.0L602.7 372.0L602.4 375.9zM605.9 376.0L605.2 372.4L605.3 376.0zM616.9 376.2L616.3 372.6L616.3 376.2zM599.3 376.6L598.5 374.5L598.7 376.6zM601.3 376.9L601.3 374.3L600.8 376.8zM633.3 377.2L633.4 374.1L632.8 377.1zM627.9 377.3L626.4 374.1L627.3 377.5zM604.2 377.8L604.3 375.2L603.6 377.6zM609.6 378.2L610.4 374.5L609.1 378.0zM630.9 378.5L630.6 375.7L630.3 378.4zM609.6 378.5L608.5 376.2L609.0 378.6zM630.4 378.6L628.9 376.1L629.8 378.8zM623.7 379.4L623.5 376.7L623.1 379.3zM610.4 379.2L609.2 375.9L609.8 379.3zM627.7 379.6L628.3 375.9L627.1 379.4zM631.7 379.7L632.0 377.4L631.2 379.4zM597.3 379.3L596.0 375.7L596.7 379.4zM605.1 379.8L605.7 376.6L604.6 379.6zM631.4 380.3L630.2 378.0L630.8 380.5zM627.6 381.6L626.1 379.2L627.1 381.8zM612.9 381.8L611.2 379.1L612.3 382.0zM612.0 382.4L612.5 379.1L611.4 382.1zM609.0 382.6L609.5 379.6L608.5 382.4zM627.9 382.7L628.1 379.1L627.3 382.5zM622.0 383.0L621.5 380.2L621.5 383.0zM602.1 383.1L600.4 380.3L601.5 383.3zM595.5 383.9L595.4 380.5L594.9 383.8zM610.7 384.2L610.3 380.9L610.1 384.2zM628.5 384.2L627.5 381.0L627.9 384.3zM608.1 384.8L608.8 380.9L607.5 384.5zM603.1 384.5L601.5 381.1L602.6 384.7zM608.5 385.0L608.7 382.3L608.0 384.8zM624.2 384.9L623.9 382.1L623.6 384.8zM598.8 384.9L598.0 381.4L598.2 384.9zM610.0 385.1L607.8 381.9L609.4 385.3zM596.5 385.4L594.7 383.0L596.0 385.7zM600.4 386.4L600.0 384.1L599.8 386.3zM604.1 386.6L603.0 384.4L603.5 386.7zM632.0 387.7L632.4 384.4L631.4 387.5zM625.1 387.3L623.8 385.3L624.5 387.4zM625.3 387.6L624.4 385.0L624.7 387.6zM615.4 387.6L614.6 383.7L614.8 387.6zM607.5 387.7L606.8 385.6L606.9 387.7zM627.3 387.9L627.1 385.7L626.7 387.8zM609.0 388.0L608.5 384.6L608.4 388.0zM630.0 387.8L628.4 385.5L629.4 388.0zM622.5 388.0L621.2 386.1L622.0 388.2z" fill="#000" opacity="0.25"/><path d="M629.7 388.0L627.9 385.6L628.4 388.5zM602.3 388.8L601.5 386.6L600.9 388.9zM598.9 390.3L597.9 388.0L597.5 390.5zM617.6 390.7L617.3 387.3L616.2 390.6zM630.2 392.1L629.5 388.7L628.8 392.1zM601.6 392.6L600.8 389.0L600.2 392.6zM596.9 393.7L597.4 390.6L595.6 393.2zM623.9 395.5L623.9 393.4L622.6 395.1zM623.5 395.2L622.5 392.4L622.1 395.4zM633.7 396.6L632.4 393.3L632.4 396.8zM599.1 397.3L598.6 395.0L597.8 397.2zM626.2 397.6L625.6 395.1L624.8 397.5zM604.7 399.7L603.1 396.2L603.4 400.0zM621.0 400.2L619.8 397.7L619.6 400.5zM611.6 402.0L612.1 398.9L610.3 401.5zM633.3 402.4L632.7 399.4L631.9 402.3zM596.7 403.9L595.7 400.9L595.3 404.1zM627.5 404.4L627.6 400.9L626.2 404.1zM597.2 404.5L595.7 402.8L595.9 405.1zM627.5 406.4L627.6 404.1L626.2 405.9zM624.3 408.7L625.0 404.7L623.0 408.2z" fill="#0000d5"/><path d="M621.5 388.6L621.8 385.4L620.2 388.1zM607.1 393.0L606.0 390.8L605.7 393.2zM615.1 397.3L614.9 394.9L613.7 397.0zM605.0 397.5L604.1 394.8L603.6 397.6zM600.8 401.5L600.2 399.2L599.5 401.5zM614.9 405.2L613.1 401.7L613.6 405.6zM606.2 406.7L605.1 402.9L604.8 406.8z" fill="#fffa00"/><path d="M606.1 388.5L604.4 386.3L604.8 389.0zM600.4 391.0L600.3 388.5L599.1 390.7zM614.3 393.3L614.2 390.3L612.9 393.0zM601.0 402.8L601.3 399.2L599.7 402.4zM612.4 403.5L611.1 401.8L611.1 403.9zM617.1 406.3L615.4 402.7L615.7 406.6z" fill="#e3ff1a"/><path d="M626.4 389.5L626.5 385.8L625.0 389.2zM630.3 391.3L629.5 388.9L628.9 391.4zM619.2 392.2L617.2 388.8L617.9 392.7zM614.9 392.4L613.4 390.5L613.6 392.9zM604.9 392.8L604.1 390.1L603.5 392.8zM595.3 393.5L593.3 390.4L594.0 394.0zM605.2 398.6L604.6 395.4L603.8 398.6zM628.6 398.8L628.2 396.0L627.2 398.7zM597.3 402.5L596.9 399.6L595.9 402.4zM612.3 404.5L611.8 402.4L610.9 404.3zM621.3 408.7L621.1 406.1L619.9 408.4zM630.7 409.2L630.3 405.5L629.3 409.1z" fill="#0000ec"/><path d="M613.1 391.4L611.6 388.7L611.8 391.8zM603.7 394.6L603.5 391.8L602.4 394.3z" fill="#0005ff"/><path d="M608.8 392.9L608.7 389.5L607.4 392.7zM618.7 393.7L619.0 390.9L617.4 393.3zM615.6 393.8L615.5 389.8L614.2 393.5zM620.2 398.9L618.7 397.1L618.9 399.4zM604.7 399.1L603.3 395.8L603.4 399.4zM630.5 400.8L628.6 398.1L629.2 401.3zM631.0 401.7L631.6 398.2L629.7 401.1zM625.3 401.6L623.5 399.3L624.0 402.2zM629.3 404.0L629.4 401.1L627.9 403.5zM632.4 404.2L631.2 401.6L631.0 404.4zM633.0 405.7L632.2 401.9L631.6 405.7zM603.5 408.6L603.8 405.7L602.2 408.2z" fill="#0000be"/><path d="M608.1 392.8L607.1 389.7L606.7 392.9zM608.4 397.7L608.2 393.8L607.0 397.5zM622.1 398.2L620.4 395.0L620.7 398.6zM604.3 399.0L604.7 395.9L603.0 398.6zM594.7 401.8L593.6 399.8L593.4 402.1z" fill="#ffe000"/><path d="M622.7 393.4L622.7 390.1L621.4 393.1zM616.7 393.9L614.7 390.8L615.4 394.4zM599.6 409.5L598.6 406.7L598.2 409.6z" fill="#0000a6"/><path d="M598.3 400.5L599.2 396.6L597.0 399.9zM601.2 408.5L600.5 406.0L599.8 408.5z" fill="#bfff39"/><path d="M629.7 388.0L627.9 385.6L629.2 388.2zM621.5 388.6L621.8 385.4L620.9 388.4zM606.1 388.5L604.4 386.3L605.5 388.7zM602.3 388.8L601.5 386.6L601.7 388.8zM626.4 389.5L626.5 385.8L625.8 389.4zM598.9 390.3L597.9 388.0L598.3 390.4zM617.6 390.7L617.3 387.3L617.0 390.7zM600.4 391.0L600.3 388.5L599.9 390.9zM630.3 391.3L629.5 388.9L629.7 391.4zM613.1 391.4L611.6 388.7L612.6 391.6zM630.2 392.1L629.5 388.7L629.6 392.1zM619.2 392.2L617.2 388.8L618.7 392.4zM601.6 392.6L600.8 389.0L601.0 392.6zM614.9 392.4L613.4 390.5L614.3 392.7zM608.8 392.9L608.7 389.5L608.2 392.8zM604.9 392.8L604.1 390.1L604.3 392.8zM608.1 392.8L607.1 389.7L607.5 392.8zM607.1 393.0L606.0 390.8L606.5 393.0zM614.3 393.3L614.2 390.3L613.7 393.2zM622.7 393.4L622.7 390.1L622.2 393.2zM596.9 393.7L597.4 390.6L596.4 393.5zM618.7 393.7L619.0 390.9L618.2 393.5zM615.6 393.8L615.5 389.8L615.0 393.7zM595.3 393.5L593.3 390.4L594.7 393.7zM616.7 393.9L614.7 390.8L616.1 394.1zM603.7 394.6L603.5 391.8L603.1 394.5zM623.9 395.5L623.9 393.4L623.3 395.3zM623.5 395.2L622.5 392.4L622.9 395.3zM633.7 396.6L632.4 393.3L633.2 396.7zM615.1 397.3L614.9 394.9L614.5 397.2zM599.1 397.3L598.6 395.0L598.6 397.2zM626.2 397.6L625.6 395.1L625.6 397.5zM605.0 397.5L604.1 394.8L604.4 397.5zM608.4 397.7L608.2 393.8L607.8 397.6zM622.1 398.2L620.4 395.0L621.5 398.4zM605.2 398.6L604.6 395.4L604.6 398.6zM628.6 398.8L628.2 396.0L628.0 398.8zM604.3 399.0L604.7 395.9L603.8 398.8zM620.2 398.9L618.7 397.1L619.6 399.1zM604.7 399.1L603.3 395.8L604.1 399.2zM604.7 399.7L603.1 396.2L604.1 399.8zM598.3 400.5L599.2 396.6L597.7 400.2zM621.0 400.2L619.8 397.7L620.4 400.4zM630.5 400.8L628.6 398.1L629.9 401.0zM631.0 401.7L631.6 398.2L630.4 401.4zM600.8 401.5L600.2 399.2L600.3 401.5zM611.6 402.0L612.1 398.9L611.1 401.8zM625.3 401.6L623.5 399.3L624.8 401.8zM594.7 401.8L593.6 399.8L594.2 401.9zM633.3 402.4L632.7 399.4L632.7 402.4zM597.3 402.5L596.9 399.6L596.7 402.4zM601.0 402.8L601.3 399.2L600.5 402.6zM612.4 403.5L611.1 401.8L611.8 403.7zM629.3 404.0L629.4 401.1L628.7 403.8zM596.7 403.9L595.7 400.9L596.1 404.0zM627.5 404.4L627.6 400.9L627.0 404.3zM632.4 404.2L631.2 401.6L631.8 404.3zM612.3 404.5L611.8 402.4L611.7 404.4zM597.2 404.5L595.7 402.8L596.6 404.8zM614.9 405.2L613.1 401.7L614.3 405.4zM633.0 405.7L632.2 401.9L632.4 405.7zM627.5 406.4L627.6 404.1L626.9 406.2zM617.1 406.3L615.4 402.7L616.5 406.4zM606.2 406.7L605.1 402.9L605.6 406.7zM603.5 408.6L603.8 405.7L602.9 408.4zM624.3 408.7L625.0 404.7L623.7 408.5zM601.2 408.5L600.5 406.0L600.6 408.5zM621.3 408.7L621.1 406.1L620.7 408.5zM630.7 409.2L630.3 405.5L630.1 409.2zM599.6 409.5L598.6 406.7L599.0 409.6z" fill="#000" opacity="0.25"/><path d="M598.6 409.8L597.8 406.6L597.2 409.8zM626.2 412.0L624.5 409.9L624.9 412.6zM618.0 414.6L616.8 412.5L616.7 414.9zM622.5 418.8L621.4 416.5L621.1 419.0zM623.1 420.6L621.9 417.9L621.8 420.8zM621.7 423.3L620.9 421.3L620.3 423.3zM615.0 425.6L613.6 422.4L613.7 425.9z" fill="#0000a6"/><path d="M602.9 410.5L603.2 407.7L601.6 410.0zM617.7 412.2L618.4 408.9L616.4 411.7zM603.2 413.6L603.3 410.4L601.9 413.2zM605.0 415.0L604.0 411.4L603.6 415.1zM608.8 425.5L607.4 423.8L607.5 426.0zM614.1 427.2L613.3 424.4L612.7 427.3z" fill="#ffe000"/><path d="M634.4 410.5L634.0 407.0L633.0 410.4zM632.5 412.8L631.9 409.7L631.1 412.8zM614.7 413.8L613.3 410.6L613.4 414.1zM617.1 416.9L617.3 413.7L615.7 416.4zM605.6 418.8L603.9 416.6L604.3 419.3zM629.0 425.9L627.4 422.8L627.6 426.3zM611.2 426.8L612.2 423.0L609.9 426.2z" fill="#0000be"/><path d="M630.6 410.4L629.6 406.9L629.2 410.5zM598.0 410.6L596.2 408.0L596.7 411.1zM608.6 411.5L608.4 408.1L607.2 411.3zM628.5 413.5L627.9 409.5L627.1 413.5zM617.4 413.9L616.7 411.7L616.0 413.9zM621.7 417.7L621.6 414.8L620.3 417.3zM597.2 420.9L596.4 418.3L595.8 420.9zM616.2 421.2L616.1 418.5L614.8 420.9zM612.3 421.2L610.9 418.1L611.0 421.5zM596.2 422.7L596.2 420.1L594.9 422.4zM621.8 424.3L621.0 421.1L620.4 424.4zM632.0 426.1L630.5 424.3L630.7 426.6zM624.1 426.7L624.4 424.4L622.8 426.2zM629.9 426.6L628.7 424.6L628.5 426.9zM610.6 427.1L610.1 425.0L609.2 427.0zM634.6 427.2L633.3 424.8L633.2 427.5z" fill="#0000ec"/><path d="M605.1 411.8L605.6 408.7L603.8 411.3zM607.5 414.8L606.7 412.7L606.1 414.9zM621.3 421.2L619.5 418.4L620.0 421.7zM608.0 421.7L606.7 418.6L606.7 422.0zM618.7 421.9L617.0 418.2L617.4 422.2z" fill="#e3ff1a"/><path d="M606.2 412.8L604.6 409.4L604.9 413.2zM595.9 413.5L596.8 409.6L594.6 412.9zM604.8 414.1L605.4 410.9L603.5 413.5zM600.1 413.8L598.8 410.9L598.7 414.1zM617.3 414.4L617.6 411.5L616.0 413.9zM597.6 414.1L596.1 410.4L596.3 414.4zM618.4 415.7L618.4 412.6L617.0 415.4zM607.8 417.9L608.1 415.6L606.5 417.4zM596.5 417.8L595.8 415.5L595.1 417.8zM629.0 418.6L628.9 415.4L627.7 418.4zM631.4 419.1L630.1 415.7L630.1 419.3zM630.6 420.6L629.6 417.7L629.2 420.7zM623.7 420.8L623.3 417.8L622.3 420.6zM630.6 421.8L630.6 418.8L629.2 421.5zM618.4 422.2L617.3 419.6L617.0 422.4zM622.7 422.7L622.6 419.7L621.4 422.4zM631.0 427.0L631.0 424.7L629.7 426.7zM620.2 427.2L620.0 424.8L618.8 426.8zM607.4 428.1L607.9 424.6L606.1 427.7z" fill="#0000d5"/><path d="M610.2 413.3L611.1 409.4L609.0 412.8z" fill="#bfff39"/><path d="M602.8 413.0L601.8 411.0L601.5 413.2zM604.7 414.3L604.3 410.3L603.3 414.2zM615.6 419.0L616.0 415.0L614.3 418.7zM617.5 419.7L616.4 417.0L616.1 419.8zM602.5 420.5L600.9 418.0L601.2 421.0zM617.1 424.3L615.7 421.6L615.7 424.6z" fill="#fffa00"/><path d="M619.4 413.7L619.0 411.3L618.0 413.6zM622.1 419.4L620.8 415.8L620.8 419.7zM599.0 426.1L598.1 423.7L597.6 426.2z" fill="#0005ff"/><path d="M598.6 409.8L597.8 406.6L598.0 409.8zM602.9 410.5L603.2 407.7L602.3 410.2zM634.4 410.5L634.0 407.0L633.8 410.5zM630.6 410.4L629.6 406.9L630.0 410.4zM598.0 410.6L596.2 408.0L597.4 410.8zM608.6 411.5L608.4 408.1L608.0 411.4zM605.1 411.8L605.6 408.7L604.5 411.6zM617.7 412.2L618.4 408.9L617.2 412.0zM626.2 412.0L624.5 409.9L625.6 412.3zM632.5 412.8L631.9 409.7L631.9 412.8zM606.2 412.8L604.6 409.4L605.6 412.9zM610.2 413.3L611.1 409.4L609.7 413.1zM602.8 413.0L601.8 411.0L602.3 413.1zM595.9 413.5L596.8 409.6L595.3 413.2zM603.2 413.6L603.3 410.4L602.6 413.4zM628.5 413.5L627.9 409.5L627.9 413.5zM619.4 413.7L619.0 411.3L618.8 413.7zM604.8 414.1L605.4 410.9L604.3 413.9zM617.4 413.9L616.7 411.7L616.8 413.9zM614.7 413.8L613.3 410.6L614.1 413.9zM600.1 413.8L598.8 410.9L599.5 414.0zM617.3 414.4L617.6 411.5L616.7 414.2zM597.6 414.1L596.1 410.4L597.0 414.2zM604.7 414.3L604.3 410.3L604.1 414.2zM618.0 414.6L616.8 412.5L617.5 414.7zM607.5 414.8L606.7 412.7L606.9 414.9zM605.0 415.0L604.0 411.4L604.4 415.0zM618.4 415.7L618.4 412.6L617.8 415.6zM617.1 416.9L617.3 413.7L616.5 416.7zM621.7 417.7L621.6 414.8L621.1 417.5zM607.8 417.9L608.1 415.6L607.3 417.7zM596.5 417.8L595.8 415.5L595.9 417.8zM629.0 418.6L628.9 415.4L628.4 418.5zM615.6 419.0L616.0 415.0L615.0 418.9zM622.5 418.8L621.4 416.5L621.9 418.9zM605.6 418.8L603.9 416.6L605.0 419.0zM631.4 419.1L630.1 415.7L630.8 419.2zM622.1 419.4L620.8 415.8L621.6 419.5zM617.5 419.7L616.4 417.0L616.9 419.7zM630.6 420.6L629.6 417.7L630.0 420.6zM623.7 420.8L623.3 417.8L623.1 420.7zM623.1 420.6L621.9 417.9L622.6 420.7zM602.5 420.5L600.9 418.0L602.0 420.7zM597.2 420.9L596.4 418.3L596.6 420.9zM616.2 421.2L616.1 418.5L615.6 421.1zM612.3 421.2L610.9 418.1L611.7 421.3zM621.3 421.2L619.5 418.4L620.8 421.4zM630.6 421.8L630.6 418.8L630.0 421.7zM608.0 421.7L606.7 418.6L607.5 421.8zM618.7 421.9L617.0 418.2L618.1 422.0zM618.4 422.2L617.3 419.6L617.8 422.3zM596.2 422.7L596.2 420.1L595.6 422.6zM622.7 422.7L622.6 419.7L622.1 422.6zM621.7 423.3L620.9 421.3L621.1 423.3zM621.8 424.3L621.0 421.1L621.2 424.3zM617.1 424.3L615.7 421.6L616.5 424.4zM615.0 425.6L613.6 422.4L614.5 425.7zM608.8 425.5L607.4 423.8L608.2 425.7zM629.0 425.9L627.4 422.8L628.4 426.1zM599.0 426.1L598.1 423.7L598.4 426.2zM632.0 426.1L630.5 424.3L631.4 426.3zM624.1 426.7L624.4 424.4L623.6 426.5zM611.2 426.8L612.2 423.0L610.7 426.6zM629.9 426.6L628.7 424.6L629.3 426.7zM631.0 427.0L631.0 424.7L630.5 426.9zM620.2 427.2L620.0 424.8L619.6 427.0zM610.6 427.1L610.1 425.0L610.0 427.1zM614.1 427.2L613.3 424.4L613.5 427.2zM634.6 427.2L633.3 424.8L634.0 427.3zM607.4 428.1L607.9 424.6L606.9 427.9z" fill="#000" opacity="0.25"/><path d="M593.3 300V429L633.8 420" stroke="#e81010" stroke-width="0.8" fill="none"/><path d="M637.9 258.6L638.0 251.1L634.0 251.0L633.9 258.5zM648.8 255.3L648.1 247.8L644.1 248.2L644.9 255.7zM659.8 254.1L659.5 246.6L655.5 246.8L655.8 254.3zM671.3 251.3L670.6 243.8L666.6 244.2L667.3 251.7z" fill="#ff4700"/><path d="M643.1 256.8L643.4 249.3L639.4 249.1L639.1 256.6zM654.8 254.9L654.9 247.4L650.9 247.3L650.8 254.8zM665.8 252.5L665.1 245.0L661.1 245.4L661.8 252.9z" fill="#ff2e00"/><path d="M676.6 251.3L676.4 243.8L672.4 244.0L672.6 251.5zM682.8 249.2L682.2 241.7L678.2 242.1L678.8 249.5z" fill="#ff1400"/><path d="M637.9 258.6L638.0 251.1L636.4 251.0L636.3 258.5zM643.1 256.8L643.4 249.3L641.8 249.2L641.5 256.7zM648.8 255.3L648.1 247.8L646.5 248.0L647.2 255.4zM654.8 254.9L654.9 247.4L653.3 247.4L653.2 254.9zM659.8 254.1L659.5 246.6L657.9 246.7L658.2 254.2zM665.8 252.5L665.1 245.0L663.5 245.2L664.2 252.7zM671.3 251.3L670.6 243.8L669.0 244.0L669.7 251.5zM676.6 251.3L676.4 243.8L674.8 243.9L675.0 251.4zM682.8 249.2L682.2 241.7L680.6 241.9L681.2 249.3z" fill="#000" opacity="0.3"/><path d="M638.5 251.1L638.5 249.5L633.5 249.4L633.5 251.0zM643.9 249.3L643.9 247.7L638.9 247.5L638.9 249.1zM648.6 247.8L648.6 246.2L643.6 246.6L643.6 248.2zM655.4 247.4L655.4 245.8L650.4 245.7L650.4 247.3zM660.0 246.6L660.0 245.0L655.0 245.2L655.0 246.8zM665.6 245.0L665.6 243.4L660.6 243.9L660.6 245.5zM671.1 243.8L671.1 242.2L666.1 242.7L666.1 244.3zM676.9 243.8L676.9 242.2L671.9 242.4L671.9 244.0zM682.7 241.7L682.7 240.1L677.7 240.5L677.7 242.1z" fill="#fff" opacity="0.14"/><path d="M640.8 263.6L640.5 256.1L636.5 256.3L636.8 263.8zM646.3 263.2L646.8 255.7L642.8 255.4L642.3 262.9zM652.2 261.9L652.1 254.4L648.1 254.4L648.2 261.9zM662.6 260.0L662.8 252.5L658.8 252.4L658.6 259.9zM669.2 258.1L669.2 250.6L665.2 250.6L665.2 258.1z" fill="#ff2e00"/><path d="M657.6 260.9L658.1 253.4L654.1 253.1L653.6 260.6z" fill="#ff4700"/><path d="M674.8 257.3L674.9 249.8L670.9 249.7L670.8 257.2zM680.2 256.7L680.6 249.3L676.6 249.1L676.2 256.5zM686.0 254.9L685.5 247.5L681.5 247.7L682.0 255.2z" fill="#ff1400"/><path d="M640.8 263.6L640.5 256.1L638.9 256.2L639.2 263.7zM646.3 263.2L646.8 255.7L645.2 255.6L644.7 263.1zM652.2 261.9L652.1 254.4L650.5 254.4L650.6 261.9zM657.6 260.9L658.1 253.4L656.5 253.3L656.0 260.7zM662.6 260.0L662.8 252.5L661.2 252.5L661.0 260.0zM669.2 258.1L669.2 250.6L667.6 250.6L667.6 258.1zM674.8 257.3L674.9 249.8L673.3 249.8L673.2 257.3zM680.2 256.7L680.6 249.3L679.0 249.2L678.6 256.7zM686.0 254.9L685.5 247.5L683.9 247.5L684.4 255.0z" fill="#000" opacity="0.3"/><path d="M641.0 256.1L641.0 254.5L636.0 254.7L636.0 256.3zM647.3 255.7L647.3 254.1L642.3 253.8L642.3 255.4zM652.6 254.4L652.6 252.8L647.6 252.8L647.6 254.4zM658.6 253.4L658.6 251.8L653.6 251.5L653.6 253.1zM663.3 252.5L663.3 250.9L658.3 250.8L658.3 252.4zM669.7 250.6L669.7 249.0L664.7 249.0L664.7 250.6zM675.4 249.8L675.4 248.2L670.4 248.1L670.4 249.7zM681.1 249.3L681.1 247.7L676.1 247.4L676.1 249.0zM686.0 247.4L686.0 245.8L681.0 246.1L681.0 247.7z" fill="#fff" opacity="0.14"/><path d="M638.3 270.7L637.9 263.2L633.9 263.4L634.3 270.9zM649.1 267.8L649.0 260.3L645.0 260.4L645.1 267.9z" fill="#ff2e00"/><path d="M643.7 269.5L643.0 262.0L639.0 262.4L639.7 269.9z" fill="#ff6100"/><path d="M654.2 268.0L654.8 260.6L650.9 260.2L650.2 267.7zM660.2 266.2L660.5 258.7L656.5 258.6L656.2 266.1zM665.6 265.3L665.6 257.8L661.6 257.8L661.6 265.3zM671.6 265.1L672.2 257.6L668.2 257.3L667.6 264.7z" fill="#ff4700"/><path d="M677.4 262.9L677.0 255.4L673.0 255.7L673.4 263.2zM682.8 262.4L682.6 254.9L678.6 255.1L678.8 262.6z" fill="#ff1400"/><path d="M638.3 270.7L637.9 263.2L636.3 263.2L636.7 270.7zM643.7 269.5L643.0 262.0L641.4 262.2L642.1 269.7zM649.1 267.8L649.0 260.3L647.4 260.4L647.5 267.9zM654.2 268.0L654.8 260.6L653.3 260.4L652.6 267.9zM660.2 266.2L660.5 258.7L658.9 258.6L658.6 266.1zM665.6 265.3L665.6 257.8L664.0 257.8L664.0 265.3zM671.6 265.1L672.2 257.6L670.6 257.5L670.0 264.9zM677.4 262.9L677.0 255.4L675.4 255.5L675.8 263.0zM682.8 262.4L682.6 254.9L681.0 255.0L681.2 262.5z" fill="#000" opacity="0.3"/><path d="M638.4 263.2L638.4 261.6L633.5 261.8L633.5 263.4zM643.5 262.0L643.5 260.4L638.5 260.9L638.5 262.5zM649.5 260.3L649.5 258.7L644.5 258.8L644.5 260.4zM655.3 260.6L655.3 259.0L650.4 258.6L650.4 260.2zM660.9 258.7L660.9 257.1L656.0 256.9L656.0 258.5zM666.1 257.8L666.1 256.2L661.1 256.2L661.1 257.8zM672.7 257.7L672.7 256.1L667.7 255.6L667.7 257.2zM677.5 255.4L677.5 253.8L672.5 254.1L672.5 255.7zM683.1 254.9L683.1 253.3L678.1 253.5L678.1 255.1z" fill="#fff" opacity="0.14"/><path d="M640.4 275.4L639.7 267.9L635.7 268.3L636.4 275.7z" fill="#ff2e00"/><path d="M646.5 275.3L645.7 267.9L641.8 268.3L642.5 275.7zM651.5 274.6L652.1 267.2L648.1 266.8L647.5 274.3z" fill="#ff6100"/><path d="M656.9 273.9L657.6 266.4L653.7 266.0L652.9 273.5zM662.9 272.5L663.4 265.0L659.4 264.8L659.0 272.3zM668.3 271.2L668.6 263.7L664.6 263.6L664.3 271.1z" fill="#ff4700"/><path d="M674.3 269.9L675.1 262.4L671.1 262.0L670.4 269.5zM679.4 269.8L680.2 262.4L676.2 262.0L675.5 269.4zM685.8 268.6L686.3 261.1L682.3 260.9L681.8 268.4z" fill="#ff1400"/><path d="M640.4 275.4L639.7 267.9L638.1 268.1L638.8 275.5zM646.5 275.3L645.7 267.9L644.1 268.0L644.9 275.5zM651.5 274.6L652.1 267.2L650.5 267.0L649.9 274.5zM656.9 273.9L657.6 266.4L656.0 266.2L655.3 273.7zM662.9 272.5L663.4 265.0L661.8 264.9L661.4 272.4zM668.3 271.2L668.6 263.7L667.0 263.6L666.7 271.1zM674.3 269.9L675.1 262.4L673.5 262.2L672.7 269.7zM679.4 269.8L680.2 262.4L678.6 262.2L677.9 269.7zM685.8 268.6L686.3 261.1L684.7 261.0L684.2 268.5z" fill="#000" opacity="0.3"/><path d="M640.2 267.9L640.2 266.3L635.2 266.7L635.2 268.3zM646.2 267.8L646.2 266.2L641.3 266.7L641.3 268.3zM652.6 267.2L652.6 265.6L647.6 265.2L647.6 266.8zM658.1 266.5L658.1 264.9L653.2 264.4L653.2 266.0zM663.9 265.1L663.9 263.5L658.9 263.2L658.9 264.8zM669.1 263.7L669.1 262.1L664.1 261.9L664.1 263.5zM675.6 262.4L675.6 260.8L670.6 260.4L670.6 262.0zM680.7 262.4L680.7 260.8L675.7 260.3L675.7 261.9zM686.8 261.2L686.8 259.6L681.8 259.2L681.8 260.8z" fill="#fff" opacity="0.14"/><path d="M637.2 283.3L637.7 275.8L633.7 275.5L633.2 283.0zM642.8 281.4L643.1 273.9L639.1 273.7L638.8 281.2zM649.4 281.4L649.3 273.9L645.3 273.9L645.4 281.4zM654.7 280.0L654.5 272.5L650.5 272.6L650.7 280.1zM659.6 279.4L660.0 271.9L656.0 271.7L655.6 279.2zM665.7 277.4L665.6 269.9L661.6 270.0L661.7 277.5zM671.4 276.1L670.6 268.7L666.6 269.1L667.4 276.5z" fill="#ff4700"/><path d="M676.6 275.3L676.2 267.9L672.2 268.1L672.6 275.6zM682.8 275.4L683.0 267.9L679.0 267.7L678.8 275.2z" fill="#ff1400"/><path d="M637.2 283.3L637.7 275.8L636.1 275.7L635.6 283.2zM642.8 281.4L643.1 273.9L641.5 273.8L641.2 281.3zM649.4 281.4L649.3 273.9L647.7 273.9L647.8 281.4zM654.7 280.0L654.5 272.5L652.9 272.6L653.1 280.0zM659.6 279.4L660.0 271.9L658.4 271.8L658.0 279.3zM665.7 277.4L665.6 269.9L664.0 270.0L664.1 277.5zM671.4 276.1L670.6 268.7L669.0 268.8L669.8 276.3zM676.6 275.3L676.2 267.9L674.6 268.0L675.0 275.4zM682.8 275.4L683.0 267.9L681.4 267.8L681.2 275.3z" fill="#000" opacity="0.3"/><path d="M638.2 275.8L638.2 274.2L633.2 273.9L633.2 275.5zM643.6 273.9L643.6 272.3L638.6 272.1L638.6 273.7zM649.8 273.9L649.8 272.3L644.8 272.4L644.8 274.0zM655.0 272.5L655.0 270.9L650.0 271.0L650.0 272.6zM660.5 271.9L660.5 270.3L655.5 270.1L655.5 271.7zM666.1 269.9L666.1 268.3L661.1 268.4L661.1 270.0zM671.1 268.6L671.1 267.0L666.1 267.5L666.1 269.1zM676.7 267.8L676.7 266.2L671.7 266.5L671.7 268.1zM683.5 267.9L683.5 266.3L678.5 266.1L678.5 267.7z" fill="#fff" opacity="0.14"/><path d="M640.9 288.8L641.3 281.3L637.3 281.1L636.9 288.6zM673.5 283.0L673.7 275.5L669.7 275.4L669.5 282.9z" fill="#ff6100"/><path d="M645.9 287.2L645.2 279.7L641.2 280.1L641.9 287.5zM651.1 286.9L651.8 279.5L647.8 279.1L647.1 286.6zM657.4 286.1L658.1 278.6L654.1 278.2L653.4 285.7zM663.4 284.3L662.7 276.8L658.7 277.2L659.5 284.7zM668.6 284.0L668.8 276.5L664.8 276.4L664.6 283.9zM679.8 282.0L680.2 274.6L676.2 274.3L675.8 281.8zM685.2 280.9L685.1 273.4L681.1 273.5L681.2 281.0z" fill="#ff4700"/><path d="M640.9 288.8L641.3 281.3L639.7 281.2L639.3 288.7zM645.9 287.2L645.2 279.7L643.6 279.9L644.3 287.3zM651.1 286.9L651.8 279.5L650.2 279.3L649.5 286.8zM657.4 286.1L658.1 278.6L656.5 278.5L655.8 285.9zM663.4 284.3L662.7 276.8L661.1 277.0L661.8 284.4zM668.6 284.0L668.8 276.5L667.2 276.5L667.0 284.0zM673.5 283.0L673.7 275.5L672.1 275.4L671.9 282.9zM679.8 282.0L680.2 274.6L678.6 274.5L678.2 281.9zM685.2 280.9L685.1 273.4L683.5 273.5L683.6 281.0z" fill="#000" opacity="0.3"/><path d="M641.8 281.3L641.8 279.7L636.8 279.5L636.8 281.1zM645.7 279.7L645.7 278.1L640.7 278.5L640.7 280.1zM652.3 279.5L652.3 277.9L647.3 277.5L647.3 279.1zM658.6 278.7L658.6 277.1L653.6 276.6L653.6 278.2zM663.2 276.8L663.2 275.2L658.2 275.7L658.2 277.3zM669.3 276.5L669.3 274.9L664.3 274.8L664.3 276.4zM674.2 275.5L674.2 273.9L669.2 273.7L669.2 275.3zM680.7 274.6L680.7 273.0L675.7 272.7L675.7 274.3zM685.6 273.4L685.6 271.8L680.6 271.9L680.6 273.5z" fill="#fff" opacity="0.14"/><path d="M637.4 295.3L638.2 287.8L634.2 287.4L633.4 294.9z" fill="#ff7a00"/><path d="M642.9 294.3L642.3 286.9L638.3 287.2L638.9 294.7zM648.7 292.8L648.8 285.3L644.8 285.3L644.7 292.8zM654.8 292.3L655.5 284.8L651.5 284.4L650.8 291.9zM660.0 290.7L659.3 283.2L655.3 283.7L656.0 291.1zM666.1 290.0L666.1 282.5L662.1 282.5L662.1 290.0zM670.9 289.1L670.2 281.6L666.2 282.0L666.9 289.4zM676.5 288.7L677.0 281.2L673.0 281.0L672.5 288.5zM682.5 287.7L682.9 280.3L678.9 280.1L678.5 287.5z" fill="#ff6100"/><path d="M637.4 295.3L638.2 287.8L636.6 287.7L635.8 295.1zM642.9 294.3L642.3 286.9L640.7 287.0L641.3 294.5zM648.7 292.8L648.8 285.3L647.2 285.3L647.1 292.8zM654.8 292.3L655.5 284.8L653.9 284.6L653.2 292.1zM660.0 290.7L659.3 283.2L657.7 283.4L658.4 290.9zM666.1 290.0L666.1 282.5L664.5 282.5L664.5 290.0zM670.9 289.1L670.2 281.6L668.6 281.8L669.3 289.2zM676.5 288.7L677.0 281.2L675.4 281.1L674.9 288.6zM682.5 287.7L682.9 280.3L681.3 280.2L680.9 287.7z" fill="#000" opacity="0.3"/><path d="M638.6 287.9L638.6 286.3L633.7 285.8L633.7 287.4zM642.8 286.8L642.8 285.2L637.8 285.6L637.8 287.2zM649.3 285.4L649.3 283.8L644.3 283.7L644.3 285.3zM656.0 284.8L656.0 283.2L651.0 282.7L651.0 284.3zM659.8 283.2L659.8 281.6L654.8 282.1L654.8 283.7zM666.6 282.5L666.6 280.9L661.6 280.9L661.6 282.5zM670.7 281.6L670.7 280.0L665.7 280.4L665.7 282.0zM677.5 281.2L677.5 279.6L672.5 279.4L672.5 281.0zM683.4 280.3L683.4 278.7L678.4 278.4L678.4 280.0z" fill="#fff" opacity="0.14"/><path d="M639.9 301.4L640.4 293.9L636.4 293.7L635.9 301.1zM662.9 296.5L662.5 289.1L658.5 289.3L658.9 296.8zM679.9 293.5L680.1 286.0L676.1 285.9L675.9 293.4zM684.6 293.3L684.1 285.8L680.1 286.1L680.7 293.6z" fill="#ff7a00"/><path d="M646.3 299.6L646.4 292.1L642.4 292.0L642.3 299.5z" fill="#ff4700"/><path d="M651.7 298.7L652.4 291.3L648.4 290.9L647.7 298.3zM656.9 298.5L656.7 291.0L652.7 291.1L652.9 298.6zM668.5 295.8L668.7 288.3L664.7 288.2L664.5 295.7zM674.5 295.6L675.2 288.1L671.2 287.8L670.5 295.2z" fill="#ff6100"/><path d="M639.9 301.4L640.4 293.9L638.8 293.8L638.3 301.3zM646.3 299.6L646.4 292.1L644.8 292.1L644.7 299.6zM651.7 298.7L652.4 291.3L650.8 291.1L650.1 298.6zM656.9 298.5L656.7 291.0L655.1 291.0L655.3 298.5zM662.9 296.5L662.5 289.1L660.9 289.1L661.3 296.6zM668.5 295.8L668.7 288.3L667.1 288.2L666.9 295.7zM674.5 295.6L675.2 288.1L673.6 288.0L672.9 295.4zM679.9 293.5L680.1 286.0L678.5 285.9L678.3 293.4zM684.6 293.3L684.1 285.8L682.5 285.9L683.1 293.4z" fill="#000" opacity="0.3"/><path d="M640.9 294.0L640.9 292.4L635.9 292.0L635.9 293.6zM646.9 292.1L646.9 290.5L641.9 290.4L641.9 292.0zM652.9 291.3L652.9 289.7L647.9 289.2L647.9 290.8zM657.2 291.0L657.2 289.4L652.2 289.5L652.2 291.1zM663.0 289.0L663.0 287.4L658.0 287.7L658.0 289.3zM669.2 288.3L669.2 286.7L664.2 286.5L664.2 288.1zM675.7 288.1L675.7 286.5L670.7 286.1L670.7 287.7zM680.6 286.0L680.6 284.4L675.6 284.3L675.6 285.9zM684.6 285.8L684.6 284.2L679.6 284.6L679.6 286.2z" fill="#fff" opacity="0.14"/><path d="M637.5 307.2L638.0 299.7L634.0 299.5L633.5 307.0zM648.1 305.7L647.4 298.3L643.4 298.6L644.1 306.1zM654.8 304.7L654.2 297.2L650.2 297.6L650.8 305.0zM660.1 303.6L660.5 296.1L656.5 295.9L656.1 303.3zM665.4 302.6L665.0 295.1L661.0 295.3L661.4 302.8zM682.8 299.6L682.2 292.1L678.2 292.5L678.9 299.9z" fill="#ff6100"/><path d="M643.5 307.1L643.5 299.6L639.5 299.6L639.5 307.1zM671.5 301.6L672.0 294.1L668.0 293.9L667.5 301.4zM676.3 300.2L677.0 292.8L673.0 292.4L672.3 299.8z" fill="#ff7a00"/><path d="M637.5 307.2L638.0 299.7L636.4 299.6L635.9 307.1zM643.5 307.1L643.5 299.6L641.9 299.6L641.9 307.1zM648.1 305.7L647.4 298.3L645.8 298.4L646.5 305.9zM654.8 304.7L654.2 297.2L652.6 297.4L653.2 304.9zM660.1 303.6L660.5 296.1L658.9 296.0L658.5 303.5zM665.4 302.6L665.0 295.1L663.4 295.2L663.8 302.7zM671.5 301.6L672.0 294.1L670.4 294.0L669.9 301.5zM676.3 300.2L677.0 292.8L675.4 292.6L674.7 300.1zM682.8 299.6L682.2 292.1L680.6 292.2L681.3 299.7z" fill="#000" opacity="0.3"/><path d="M638.5 299.8L638.5 298.2L633.5 297.9L633.5 299.5zM644.0 299.6L644.0 298.0L639.0 298.0L639.0 299.6zM647.9 298.2L647.9 296.6L642.9 297.1L642.9 298.7zM654.7 297.2L654.7 295.6L649.7 296.0L649.7 297.6zM661.0 296.1L661.0 294.5L656.0 294.2L656.0 295.8zM665.5 295.1L665.5 293.5L660.5 293.7L660.5 295.3zM672.5 294.1L672.5 292.5L667.5 292.2L667.5 293.8zM677.5 292.8L677.5 291.2L672.5 290.7L672.5 292.3zM682.7 292.0L682.7 290.4L677.7 290.9L677.7 292.5z" fill="#fff" opacity="0.14"/><path d="M639.7 313.6L639.9 306.1L635.9 306.0L635.7 313.5zM650.8 311.3L650.7 303.8L646.7 303.9L646.8 311.4zM657.5 310.3L658.1 302.8L654.1 302.5L653.6 310.0zM662.1 308.9L662.3 301.4L658.3 301.3L658.1 308.8zM680.0 307.0L680.6 299.6L676.6 299.2L676.0 306.7zM684.5 305.4L685.1 297.9L681.1 297.5L680.5 305.0z" fill="#ff7a00"/><path d="M645.6 312.0L645.1 304.5L641.1 304.7L641.6 312.2zM667.7 308.5L667.2 301.0L663.3 301.2L663.7 308.7zM674.2 307.5L673.8 300.0L669.8 300.2L670.2 307.7z" fill="#ff6100"/><path d="M639.7 313.6L639.9 306.1L638.3 306.0L638.1 313.5zM645.6 312.0L645.1 304.5L643.5 304.6L644.0 312.1zM650.8 311.3L650.7 303.8L649.1 303.9L649.2 311.4zM657.5 310.3L658.1 302.8L656.5 302.7L656.0 310.2zM662.1 308.9L662.3 301.4L660.7 301.3L660.5 308.8zM667.7 308.5L667.2 301.0L665.7 301.1L666.1 308.6zM674.2 307.5L673.8 300.0L672.2 300.1L672.6 307.6zM680.0 307.0L680.6 299.6L679.0 299.4L678.4 306.9zM684.5 305.4L685.1 297.9L683.5 297.7L682.9 305.2z" fill="#000" opacity="0.3"/><path d="M640.4 306.1L640.4 304.5L635.4 304.4L635.4 306.0zM645.6 304.4L645.6 302.8L640.6 303.1L640.6 304.7zM651.2 303.8L651.2 302.2L646.2 302.3L646.2 303.9zM658.6 302.8L658.6 301.2L653.6 300.9L653.6 302.5zM662.8 301.4L662.8 299.8L657.8 299.7L657.8 301.3zM667.7 301.0L667.7 299.4L662.8 299.7L662.8 301.3zM674.3 300.0L674.3 298.4L669.3 298.7L669.3 300.3zM681.1 299.6L681.1 298.0L676.1 297.6L676.1 299.2zM685.6 297.9L685.6 296.3L680.6 295.9L680.6 297.5z" fill="#fff" opacity="0.14"/><path d="M637.1 319.7L637.7 312.3L633.7 311.9L633.1 319.4z" fill="#ff9400"/><path d="M642.4 318.8L642.0 311.3L638.0 311.6L638.5 319.1zM648.7 318.1L648.0 310.6L644.1 311.0L644.7 318.5zM653.6 317.2L654.1 309.7L650.1 309.4L649.6 316.9zM660.1 315.7L660.0 308.2L656.0 308.3L656.1 315.8zM676.5 312.8L676.6 305.3L672.6 305.3L672.5 312.8zM682.4 311.8L681.7 304.3L677.7 304.7L678.4 312.1z" fill="#ff7a00"/><path d="M664.8 315.2L664.8 307.7L660.8 307.6L660.8 315.1zM671.5 314.2L671.1 306.7L667.1 306.9L667.5 314.4z" fill="#ff6100"/><path d="M637.1 319.7L637.7 312.3L636.1 312.1L635.5 319.6zM642.4 318.8L642.0 311.3L640.4 311.4L640.8 318.9zM648.7 318.1L648.0 310.6L646.5 310.8L647.1 318.3zM653.6 317.2L654.1 309.7L652.5 309.6L652.0 317.0zM660.1 315.7L660.0 308.2L658.4 308.3L658.5 315.8zM664.8 315.2L664.8 307.7L663.2 307.6L663.2 315.1zM671.5 314.2L671.1 306.7L669.5 306.8L669.9 314.3zM676.5 312.8L676.6 305.3L675.0 305.3L674.9 312.8zM682.4 311.8L681.7 304.3L680.1 304.4L680.8 311.9z" fill="#000" opacity="0.3"/><path d="M638.2 312.3L638.2 310.7L633.2 310.3L633.2 311.9zM642.5 311.3L642.5 309.7L637.5 310.0L637.5 311.6zM648.5 310.6L648.5 309.0L643.6 309.4L643.6 311.0zM654.6 309.7L654.6 308.1L649.6 307.8L649.6 309.4zM660.5 308.2L660.5 306.6L655.5 306.7L655.5 308.3zM665.3 307.7L665.3 306.1L660.3 306.0L660.3 307.6zM671.5 306.7L671.5 305.1L666.6 305.4L666.6 307.0zM677.1 305.3L677.1 303.7L672.1 303.7L672.1 305.3zM682.2 304.3L682.2 302.7L677.2 303.1L677.2 304.7z" fill="#fff" opacity="0.14"/><path d="M640.6 326.4L641.2 318.9L637.2 318.6L636.6 326.1zM657.3 322.9L657.2 315.4L653.2 315.4L653.3 322.9zM662.7 321.2L662.1 313.7L658.1 314.0L658.7 321.5zM673.5 319.3L673.4 311.8L669.4 311.9L669.5 319.4zM679.7 319.1L680.2 311.6L676.2 311.4L675.7 318.9z" fill="#ff9400"/><path d="M646.3 324.5L646.6 317.0L642.6 316.8L642.3 324.3zM668.3 321.3L668.8 313.8L664.8 313.5L664.3 321.0z" fill="#ff7a00"/><path d="M650.9 323.1L650.3 315.6L646.4 315.9L646.9 323.4z" fill="#ff6100"/><path d="M640.6 326.4L641.2 318.9L639.6 318.8L639.0 326.3zM646.3 324.5L646.6 317.0L645.0 316.9L644.7 324.4zM650.9 323.1L650.3 315.6L648.8 315.7L649.3 323.2zM657.3 322.9L657.2 315.4L655.6 315.4L655.7 322.9zM662.7 321.2L662.1 313.7L660.5 313.8L661.1 321.3zM668.3 321.3L668.8 313.8L667.2 313.7L666.7 321.2zM673.5 319.3L673.4 311.8L671.8 311.8L671.9 319.3zM679.7 319.1L680.2 311.6L678.6 311.5L678.1 319.0z" fill="#000" opacity="0.3"/><path d="M641.7 319.0L641.7 317.4L636.7 317.0L636.7 318.6zM647.1 317.0L647.1 315.4L642.1 315.2L642.1 316.8zM650.8 315.5L650.8 313.9L645.9 314.3L645.9 315.9zM657.7 315.4L657.7 313.8L652.7 313.8L652.7 315.4zM662.6 313.7L662.6 312.1L657.6 312.5L657.6 314.1zM669.3 313.8L669.3 312.2L664.3 311.9L664.3 313.5zM673.9 311.8L673.9 310.2L668.9 310.3L668.9 311.9zM680.7 311.7L680.7 310.1L675.7 309.7L675.7 311.3z" fill="#fff" opacity="0.14"/><path d="M637.7 333.1L638.2 325.6L634.2 325.3L633.7 332.8zM642.5 331.2L641.8 323.7L637.8 324.1L638.5 331.5zM648.4 331.0L648.1 323.5L644.1 323.7L644.4 331.2zM654.5 330.2L654.9 322.7L650.9 322.5L650.5 330.0zM660.1 328.3L660.3 320.8L656.3 320.7L656.1 328.2zM682.0 324.2L681.3 316.8L677.3 317.1L678.0 324.6z" fill="#ff7a00"/><path d="M665.4 328.0L665.4 320.5L661.4 320.5L661.4 328.0zM670.9 326.0L670.8 318.5L666.8 318.5L666.9 326.0zM676.3 326.0L676.7 318.5L672.7 318.3L672.3 325.8z" fill="#ff9400"/><path d="M637.7 333.1L638.2 325.6L636.6 325.5L636.1 333.0zM642.5 331.2L641.8 323.7L640.2 323.8L640.9 331.3zM648.4 331.0L648.1 323.5L646.5 323.6L646.8 331.1zM654.5 330.2L654.9 322.7L653.3 322.6L652.9 330.1zM660.1 328.3L660.3 320.8L658.7 320.7L658.5 328.2zM665.4 328.0L665.4 320.5L663.8 320.5L663.8 328.0zM670.9 326.0L670.8 318.5L669.2 318.5L669.3 326.0zM676.3 326.0L676.7 318.5L675.1 318.4L674.7 325.9zM682.0 324.2L681.3 316.8L679.7 316.9L680.4 324.4z" fill="#000" opacity="0.3"/><path d="M638.7 325.6L638.7 324.0L633.7 323.7L633.7 325.3zM642.3 323.6L642.3 322.0L637.3 322.5L637.3 324.1zM648.6 323.5L648.6 321.9L643.6 322.1L643.6 323.7zM655.4 322.7L655.4 321.1L650.4 320.9L650.4 322.5zM660.8 320.8L660.8 319.2L655.8 319.1L655.8 320.7zM665.9 320.5L665.9 318.9L660.9 318.9L660.9 320.5zM671.3 318.4L671.3 316.8L666.3 316.9L666.3 318.5zM677.2 318.5L677.2 316.9L672.2 316.6L672.2 318.2zM681.8 316.7L681.8 315.1L676.8 315.6L676.8 317.2z" fill="#fff" opacity="0.14"/><path d="M640.0 338.0L639.5 330.5L635.5 330.8L636.1 338.3zM656.8 334.7L656.5 327.2L652.5 327.4L652.8 334.9zM662.5 334.4L662.7 326.9L658.7 326.8L658.5 334.3zM673.7 331.7L673.0 324.3L669.0 324.6L669.7 332.1zM679.1 331.6L678.6 324.1L674.6 324.3L675.1 331.8z" fill="#ff7a00"/><path d="M645.0 336.6L644.4 329.1L640.4 329.5L641.0 337.0zM650.7 336.7L650.9 329.2L646.9 329.1L646.7 336.6zM667.6 333.3L668.1 325.8L664.1 325.5L663.6 333.0z" fill="#ff9400"/><path d="M640.0 338.0L639.5 330.5L637.9 330.6L638.4 338.1zM645.0 336.6L644.4 329.1L642.8 329.3L643.4 336.7zM650.7 336.7L650.9 329.2L649.3 329.1L649.1 336.6zM656.8 334.7L656.5 327.2L654.9 327.3L655.2 334.8zM662.5 334.4L662.7 326.9L661.1 326.9L660.9 334.4zM667.6 333.3L668.1 325.8L666.5 325.7L666.0 333.2zM673.7 331.7L673.0 324.3L671.4 324.4L672.1 331.9zM679.1 331.6L678.6 324.1L677.0 324.2L677.5 331.7z" fill="#000" opacity="0.3"/><path d="M640.0 330.5L640.0 328.9L635.0 329.2L635.0 330.8zM644.9 329.1L644.9 327.5L639.9 327.9L639.9 329.5zM651.4 329.2L651.4 327.6L646.4 327.5L646.4 329.1zM657.0 327.2L657.0 325.6L652.0 325.8L652.0 327.4zM663.2 327.0L663.2 325.4L658.2 325.2L658.2 326.8zM668.6 325.8L668.6 324.2L663.7 323.9L663.7 325.5zM673.5 324.2L673.5 322.6L668.5 323.1L668.5 324.7zM679.1 324.1L679.1 322.5L674.1 322.8L674.1 324.4z" fill="#fff" opacity="0.14"/><path d="M636.5 344.5L637.0 337.0L633.0 336.8L632.5 344.3zM648.4 343.5L648.8 336.1L644.8 335.8L644.4 343.3zM654.0 341.8L654.4 334.3L650.4 334.1L650.0 341.6zM659.9 341.3L660.6 333.8L656.6 333.5L656.0 341.0zM665.6 339.9L665.3 332.4L661.3 332.6L661.6 340.1zM676.0 337.5L676.4 330.1L672.4 329.8L672.0 337.3zM682.2 336.6L682.0 329.1L678.0 329.2L678.2 336.7z" fill="#ff9400"/><path d="M642.3 343.4L642.4 335.9L638.4 335.8L638.3 343.3zM670.5 338.3L669.7 330.8L665.8 331.2L666.5 338.6z" fill="#ff7a00"/><path d="M636.5 344.5L637.0 337.0L635.4 336.9L634.9 344.4zM642.3 343.4L642.4 335.9L640.8 335.9L640.7 343.4zM648.4 343.5L648.8 336.1L647.2 336.0L646.8 343.5zM654.0 341.8L654.4 334.3L652.8 334.2L652.4 341.7zM659.9 341.3L660.6 333.8L659.0 333.7L658.3 341.2zM665.6 339.9L665.3 332.4L663.7 332.5L664.0 340.0zM670.5 338.3L669.7 330.8L668.2 330.9L668.9 338.4zM676.0 337.5L676.4 330.1L674.8 330.0L674.4 337.4zM682.2 336.6L682.0 329.1L680.4 329.1L680.6 336.6z" fill="#000" opacity="0.3"/><path d="M637.5 337.1L637.5 335.5L632.5 335.2L632.5 336.8zM642.9 335.9L642.9 334.3L637.9 334.2L637.9 335.8zM649.3 336.1L649.3 334.5L644.3 334.2L644.3 335.8zM654.9 334.3L654.9 332.7L649.9 332.5L649.9 334.1zM661.1 333.9L661.1 332.3L656.1 331.9L656.1 333.5zM665.8 332.4L665.8 330.8L660.8 331.1L660.8 332.7zM670.2 330.7L670.2 329.1L665.3 329.6L665.3 331.2zM676.9 330.1L676.9 328.5L671.9 328.2L671.9 329.8zM682.5 329.1L682.5 327.5L677.5 327.6L677.5 329.2z" fill="#fff" opacity="0.14"/><path d="M640.2 351.3L641.0 343.8L637.0 343.4L636.2 350.9z" fill="#ff7a00"/><path d="M646.0 349.8L646.1 342.3L642.1 342.3L642.0 349.8zM650.9 348.6L650.5 341.1L646.5 341.4L646.9 348.8zM657.1 347.8L656.6 340.3L652.6 340.5L653.1 348.0zM667.9 345.8L667.9 338.3L663.9 338.2L663.9 345.7zM673.5 344.6L673.1 337.1L669.1 337.3L669.5 344.8z" fill="#ff9400"/><path d="M662.1 346.7L662.6 339.2L658.6 338.9L658.1 346.4zM679.0 344.3L679.7 336.8L675.7 336.4L675.0 343.9z" fill="#ffad00"/><path d="M640.2 351.3L641.0 343.8L639.4 343.6L638.6 351.1zM646.0 349.8L646.1 342.3L644.5 342.3L644.4 349.8zM650.9 348.6L650.5 341.1L648.9 341.2L649.3 348.7zM657.1 347.8L656.6 340.3L655.0 340.4L655.5 347.9zM662.1 346.7L662.6 339.2L661.0 339.1L660.5 346.6zM667.9 345.8L667.9 338.3L666.3 338.3L666.3 345.8zM673.5 344.6L673.1 337.1L671.5 337.2L671.9 344.7zM679.0 344.3L679.7 336.8L678.1 336.6L677.4 344.1z" fill="#000" opacity="0.3"/><path d="M641.5 343.9L641.5 342.3L636.5 341.8L636.5 343.4zM646.6 342.4L646.6 340.8L641.6 340.7L641.6 342.3zM651.0 341.1L651.0 339.5L646.0 339.8L646.0 341.4zM657.1 340.3L657.1 338.7L652.1 339.0L652.1 340.6zM663.1 339.3L663.1 337.7L658.1 337.3L658.1 338.9zM668.4 338.3L668.4 336.7L663.4 336.6L663.4 338.2zM673.6 337.1L673.6 335.5L668.6 335.7L668.6 337.3zM680.2 336.8L680.2 335.2L675.2 334.8L675.2 336.4z" fill="#fff" opacity="0.14"/><path d="M637.1 357.4L637.0 349.9L633.0 349.9L633.1 357.4zM647.8 354.8L647.2 347.4L643.2 347.7L643.8 355.2zM653.4 354.6L653.5 347.1L649.5 347.0L649.4 354.5zM659.4 353.4L659.0 345.9L655.0 346.1L655.4 353.6zM665.2 352.1L665.6 344.6L661.6 344.4L661.2 351.9zM671.1 351.5L671.2 344.0L667.2 344.0L667.1 351.5zM675.9 350.1L675.8 342.6L671.8 342.7L671.9 350.2zM682.0 349.1L682.7 341.7L678.8 341.3L678.1 348.8z" fill="#ff9400"/><path d="M642.9 355.8L642.5 348.3L638.5 348.5L638.9 356.0z" fill="#ffad00"/><path d="M637.1 357.4L637.0 349.9L635.4 349.9L635.5 357.4zM642.9 355.8L642.5 348.3L640.9 348.4L641.3 355.9zM647.8 354.8L647.2 347.4L645.6 347.5L646.2 355.0zM653.4 354.6L653.5 347.1L651.9 347.0L651.8 354.5zM659.4 353.4L659.0 345.9L657.4 346.0L657.8 353.5zM665.2 352.1L665.6 344.6L664.0 344.5L663.6 352.0zM671.1 351.5L671.2 344.0L669.6 344.0L669.5 351.5zM675.9 350.1L675.8 342.6L674.2 342.7L674.3 350.2zM682.0 349.1L682.7 341.7L681.2 341.5L680.4 349.0z" fill="#000" opacity="0.3"/><path d="M637.5 349.9L637.5 348.3L632.5 348.3L632.5 349.9zM643.0 348.2L643.0 346.6L638.0 346.9L638.0 348.5zM647.7 347.3L647.7 345.7L642.7 346.1L642.7 347.7zM654.0 347.1L654.0 345.5L649.0 345.4L649.0 347.0zM659.5 345.9L659.5 344.3L654.5 344.5L654.5 346.1zM666.1 344.6L666.1 343.0L661.1 342.8L661.1 344.4zM671.7 344.0L671.7 342.4L666.7 342.4L666.7 344.0zM676.3 342.6L676.3 341.0L671.3 341.1L671.3 342.7zM683.2 341.7L683.2 340.1L678.3 339.6L678.3 341.2z" fill="#fff" opacity="0.14"/><path d="M639.7 363.7L639.9 356.2L635.9 356.1L635.7 363.6zM651.1 361.4L651.0 353.9L647.0 353.9L647.1 361.4zM656.6 360.2L656.7 352.7L652.7 352.7L652.6 360.2zM662.2 358.6L662.5 351.1L658.5 351.0L658.2 358.5zM667.6 358.6L667.6 351.1L663.6 351.1L663.6 358.6zM678.5 356.2L678.0 348.7L674.0 348.9L674.5 356.4z" fill="#ff9400"/><path d="M644.8 361.5L645.0 354.0L641.0 354.0L640.8 361.5zM673.3 356.7L672.8 349.3L668.8 349.5L669.3 357.0z" fill="#ffad00"/><path d="M639.7 363.7L639.9 356.2L638.3 356.2L638.1 363.7zM644.8 361.5L645.0 354.0L643.4 354.0L643.2 361.5zM651.1 361.4L651.0 353.9L649.4 353.9L649.5 361.4zM656.6 360.2L656.7 352.7L655.1 352.7L655.0 360.2zM662.2 358.6L662.5 351.1L660.9 351.1L660.6 358.6zM667.6 358.6L667.6 351.1L666.0 351.1L666.0 358.6zM673.3 356.7L672.8 349.3L671.2 349.4L671.7 356.8zM678.5 356.2L678.0 348.7L676.4 348.8L676.9 356.3z" fill="#000" opacity="0.3"/><path d="M640.4 356.3L640.4 354.7L635.4 354.5L635.4 356.1zM645.5 354.1L645.5 352.5L640.5 352.4L640.5 354.0zM651.5 353.9L651.5 352.3L646.5 352.3L646.5 353.9zM657.2 352.8L657.2 351.2L652.2 351.1L652.2 352.7zM663.0 351.2L663.0 349.6L658.0 349.4L658.0 351.0zM668.1 351.1L668.1 349.5L663.1 349.5L663.1 351.1zM673.3 349.2L673.3 347.6L668.3 348.0L668.3 349.6zM678.5 348.6L678.5 347.0L673.5 347.4L673.5 349.0z" fill="#fff" opacity="0.14"/><path d="M637.4 369.5L638.0 362.0L634.0 361.7L633.5 369.2zM648.0 367.3L647.8 359.8L643.8 360.0L644.0 367.4zM654.1 366.3L654.2 358.8L650.2 358.8L650.1 366.3zM659.3 366.2L659.5 358.7L655.5 358.6L655.3 366.1zM665.4 364.8L665.0 357.3L661.0 357.5L661.4 365.0zM670.9 363.3L671.1 355.8L667.1 355.7L666.9 363.2zM675.8 362.2L675.4 354.7L671.4 355.0L671.8 362.5zM681.6 361.8L681.2 354.3L677.2 354.5L677.6 362.0z" fill="#ffad00"/><path d="M643.0 369.3L642.9 361.8L638.9 361.8L639.0 369.3z" fill="#ffc700"/><path d="M637.4 369.5L638.0 362.0L636.4 361.9L635.8 369.3zM643.0 369.3L642.9 361.8L641.3 361.8L641.4 369.3zM648.0 367.3L647.8 359.8L646.2 359.9L646.4 367.4zM654.1 366.3L654.2 358.8L652.6 358.8L652.5 366.3zM659.3 366.2L659.5 358.7L657.9 358.6L657.7 366.1zM665.4 364.8L665.0 357.3L663.4 357.4L663.8 364.9zM670.9 363.3L671.1 355.8L669.5 355.7L669.3 363.2zM675.8 362.2L675.4 354.7L673.8 354.8L674.2 362.3zM681.6 361.8L681.2 354.3L679.6 354.4L680.0 361.8z" fill="#000" opacity="0.3"/><path d="M638.5 362.0L638.5 360.4L633.5 360.0L633.5 361.6zM643.4 361.8L643.4 360.2L638.4 360.2L638.4 361.8zM648.3 359.8L648.3 358.2L643.3 358.4L643.3 360.0zM654.7 358.8L654.7 357.2L649.7 357.2L649.7 358.8zM660.0 358.7L660.0 357.1L655.0 357.0L655.0 358.6zM665.5 357.3L665.5 355.7L660.5 355.9L660.5 357.5zM671.6 355.8L671.6 354.2L666.6 354.0L666.6 355.6zM675.9 354.7L675.9 353.1L670.9 353.4L670.9 355.0zM681.7 354.3L681.7 352.7L676.7 352.9L676.7 354.5z" fill="#fff" opacity="0.14"/><path d="M639.6 376.0L640.0 368.5L636.0 368.3L635.6 375.7zM667.7 371.1L668.0 363.6L664.0 363.4L663.7 370.9zM678.5 367.8L678.0 360.3L674.0 360.5L674.5 368.0z" fill="#ffad00"/><path d="M645.8 374.5L645.5 367.0L641.5 367.1L641.8 374.6zM651.0 373.5L651.3 366.0L647.3 365.9L647.0 373.3zM656.8 372.4L657.4 364.9L653.4 364.6L652.8 372.1zM661.9 371.6L661.9 364.1L657.9 364.1L657.9 371.6zM673.8 368.7L673.1 361.2L669.1 361.6L669.8 369.1z" fill="#ffc700"/><path d="M639.6 376.0L640.0 368.5L638.4 368.4L638.0 375.9zM645.8 374.5L645.5 367.0L643.9 367.1L644.2 374.5zM651.0 373.5L651.3 366.0L649.7 365.9L649.4 373.4zM656.8 372.4L657.4 364.9L655.8 364.8L655.2 372.2zM661.9 371.6L661.9 364.1L660.3 364.1L660.3 371.6zM667.7 371.1L668.0 363.6L666.4 363.5L666.1 371.0zM673.8 368.7L673.1 361.2L671.5 361.4L672.2 368.8zM678.5 367.8L678.0 360.3L676.4 360.4L676.9 367.9z" fill="#000" opacity="0.3"/><path d="M640.5 368.5L640.5 366.9L635.5 366.6L635.5 368.2zM646.0 367.0L646.0 365.4L641.0 365.6L641.0 367.2zM651.8 366.0L651.8 364.4L646.8 364.2L646.8 365.8zM657.9 364.9L657.9 363.3L652.9 362.9L652.9 364.5zM662.4 364.1L662.4 362.5L657.4 362.5L657.4 364.1zM668.5 363.7L668.5 362.1L663.5 361.8L663.5 363.4zM673.6 361.2L673.6 359.6L668.6 360.1L668.6 361.7zM678.5 360.2L678.5 358.6L673.5 359.0L673.5 360.6z" fill="#fff" opacity="0.14"/><path d="M637.1 381.5L636.6 374.0L632.6 374.3L633.1 381.8zM658.7 378.7L658.6 371.2L654.6 371.2L654.7 378.7zM664.7 377.5L664.4 370.0L660.4 370.2L660.7 377.6zM669.8 375.7L669.3 368.3L665.4 368.5L665.8 376.0zM676.2 374.9L676.5 367.4L672.5 367.3L672.2 374.8z" fill="#ffc700"/><path d="M641.8 381.0L641.8 373.5L637.8 373.5L637.8 381.0z" fill="#ffe000"/><path d="M648.1 380.7L648.3 373.2L644.3 373.1L644.1 380.6zM653.7 378.8L653.5 371.3L649.5 371.4L649.7 378.9z" fill="#ffad00"/><path d="M637.1 381.5L636.6 374.0L635.0 374.1L635.5 381.6zM641.8 381.0L641.8 373.5L640.2 373.5L640.2 381.0zM648.1 380.7L648.3 373.2L646.7 373.1L646.5 380.6zM653.7 378.8L653.5 371.3L651.9 371.4L652.1 378.9zM658.7 378.7L658.6 371.2L657.0 371.2L657.1 378.7zM664.7 377.5L664.4 370.0L662.8 370.0L663.1 377.5zM669.8 375.7L669.3 368.3L667.7 368.4L668.2 375.8zM676.2 374.9L676.5 367.4L674.9 367.4L674.6 374.9z" fill="#000" opacity="0.3"/><path d="M637.1 374.0L637.1 372.4L632.1 372.7L632.1 374.3zM642.3 373.5L642.3 371.9L637.3 371.9L637.3 373.5zM648.7 373.2L648.7 371.6L643.8 371.5L643.8 373.1zM654.0 371.3L654.0 369.7L649.0 369.9L649.0 371.5zM659.1 371.2L659.1 369.6L654.1 369.6L654.1 371.2zM664.9 369.9L664.9 368.3L659.9 368.6L659.9 370.2zM669.8 368.2L669.8 366.6L664.9 366.9L664.9 368.5zM676.9 367.5L676.9 365.9L672.0 365.7L672.0 367.3z" fill="#fff" opacity="0.14"/><path d="M639.8 388.5L639.5 381.0L635.5 381.1L635.8 388.6zM645.0 386.8L644.5 379.3L640.5 379.6L641.0 387.1zM661.8 383.6L662.1 376.1L658.1 375.9L657.8 383.4zM667.6 382.8L667.7 375.3L663.7 375.3L663.6 382.8zM673.5 382.1L673.1 374.6L669.1 374.8L669.5 382.3zM678.2 380.4L678.2 372.9L674.2 372.9L674.2 380.4z" fill="#ffc700"/><path d="M650.8 385.2L650.1 377.8L646.1 378.2L646.9 385.6zM656.3 384.4L655.9 377.0L651.9 377.2L652.3 384.6z" fill="#ffe000"/><path d="M639.8 388.5L639.5 381.0L637.9 381.0L638.2 388.5zM645.0 386.8L644.5 379.3L642.9 379.4L643.4 386.9zM650.8 385.2L650.1 377.8L648.5 377.9L649.2 385.4zM656.3 384.4L655.9 377.0L654.3 377.0L654.7 384.5zM661.8 383.6L662.1 376.1L660.5 376.0L660.2 383.5zM667.6 382.8L667.7 375.3L666.1 375.3L666.0 382.8zM673.5 382.1L673.1 374.6L671.5 374.7L671.9 382.2zM678.2 380.4L678.2 372.9L676.6 372.9L676.6 380.4z" fill="#000" opacity="0.3"/><path d="M640.0 380.9L640.0 379.3L635.0 379.5L635.0 381.1zM645.0 379.3L645.0 377.7L640.0 378.0L640.0 379.6zM650.6 377.7L650.6 376.1L645.6 376.6L645.6 378.2zM656.4 376.9L656.4 375.3L651.5 375.6L651.5 377.2zM662.6 376.1L662.6 374.5L657.6 374.3L657.6 375.9zM668.2 375.4L668.2 373.8L663.2 373.7L663.2 375.3zM673.6 374.6L673.6 373.0L668.6 373.3L668.6 374.9zM678.7 372.9L678.7 371.3L673.7 371.3L673.7 372.9z" fill="#fff" opacity="0.14"/><path d="M636.7 394.6L637.4 387.1L633.4 386.7L632.7 394.2zM642.6 394.2L642.5 386.7L638.5 386.7L638.6 394.2zM647.8 392.4L647.2 384.9L643.2 385.2L643.8 392.7zM653.9 391.8L653.6 384.3L649.6 384.4L649.9 391.9zM658.8 390.6L659.3 383.1L655.3 382.9L654.8 390.4zM669.9 388.4L669.5 380.9L665.5 381.1L665.9 388.6zM675.7 387.8L675.6 380.3L671.6 380.3L671.7 387.8z" fill="#ffe000"/><path d="M664.6 389.5L664.0 382.0L660.0 382.3L660.6 389.8z" fill="#fffa00"/><path d="M636.7 394.6L637.4 387.1L635.8 387.0L635.1 394.4zM642.6 394.2L642.5 386.7L640.9 386.7L641.0 394.2zM647.8 392.4L647.2 384.9L645.6 385.0L646.2 392.5zM653.9 391.8L653.6 384.3L652.0 384.3L652.3 391.8zM658.8 390.6L659.3 383.1L657.7 383.0L657.2 390.5zM664.6 389.5L664.0 382.0L662.4 382.1L663.0 389.6zM669.9 388.4L669.5 380.9L667.9 381.0L668.3 388.5zM675.7 387.8L675.6 380.3L674.0 380.3L674.1 387.8z" fill="#000" opacity="0.3"/><path d="M637.9 387.2L637.9 385.6L632.9 385.1L632.9 386.7zM643.0 386.7L643.0 385.1L638.0 385.1L638.0 386.7zM647.7 384.8L647.7 383.2L642.7 383.6L642.7 385.2zM654.1 384.3L654.1 382.7L649.1 382.9L649.1 384.5zM659.8 383.1L659.8 381.5L654.8 381.3L654.8 382.9zM664.5 382.0L664.5 380.4L659.5 380.7L659.5 382.3zM670.0 380.9L670.0 379.3L665.0 379.5L665.0 381.1zM676.1 380.3L676.1 378.7L671.1 378.8L671.1 380.4z" fill="#fff" opacity="0.14"/><path d="M639.4 399.9L639.4 392.4L635.4 392.4L635.4 399.9zM650.1 398.3L649.5 390.9L645.5 391.2L646.1 398.7zM661.6 395.8L662.0 388.3L658.0 388.2L657.6 395.6z" fill="#ffe000"/><path d="M644.7 399.9L644.7 392.4L640.7 392.4L640.7 399.9zM655.7 396.9L656.3 389.5L652.3 389.1L651.7 396.6zM666.8 395.5L666.1 388.0L662.1 388.3L662.8 395.8zM673.3 394.5L672.9 387.0L668.9 387.3L669.3 394.7zM678.9 393.4L678.9 385.9L674.9 385.9L674.9 393.4z" fill="#fffa00"/><path d="M639.4 399.9L639.4 392.4L637.8 392.4L637.8 399.9zM644.7 399.9L644.7 392.4L643.1 392.4L643.1 399.9zM650.1 398.3L649.5 390.9L647.9 391.0L648.5 398.5zM655.7 396.9L656.3 389.5L654.7 389.3L654.1 396.8zM661.6 395.8L662.0 388.3L660.4 388.3L660.0 395.8zM666.8 395.5L666.1 388.0L664.5 388.1L665.2 395.6zM673.3 394.5L672.9 387.0L671.3 387.1L671.7 394.6zM678.9 393.4L678.9 385.9L677.3 385.9L677.3 393.4z" fill="#000" opacity="0.3"/><path d="M639.9 392.4L639.9 390.8L634.9 390.8L634.9 392.4zM645.2 392.4L645.2 390.8L640.2 390.8L640.2 392.4zM650.0 390.8L650.0 389.2L645.0 389.6L645.0 391.2zM656.8 389.5L656.8 387.9L651.8 387.5L651.8 389.1zM662.4 388.4L662.4 386.8L657.5 386.5L657.5 388.1zM666.6 387.9L666.6 386.3L661.6 386.8L661.6 388.4zM673.4 387.0L673.4 385.4L668.4 385.7L668.4 387.3zM679.4 385.9L679.4 384.3L674.4 384.3L674.4 385.9z" fill="#fff" opacity="0.14"/><path d="M636.0 406.7L636.0 399.2L632.0 399.2L632.0 406.7zM642.0 406.3L642.1 398.8L638.1 398.7L638.0 406.2zM670.0 400.6L669.7 393.1L665.7 393.3L666.0 400.8z" fill="#e3ff1a"/><path d="M647.6 405.5L647.6 398.0L643.6 398.0L643.6 405.5zM653.9 404.6L654.3 397.1L650.3 396.8L649.9 404.3zM658.9 402.6L658.3 395.1L654.3 395.4L655.0 402.9zM664.2 402.2L664.3 394.7L660.3 394.6L660.2 402.1zM676.1 399.7L675.9 392.2L671.9 392.4L672.1 399.9z" fill="#fffa00"/><path d="M636.0 406.7L636.0 399.2L634.4 399.2L634.4 406.7zM642.0 406.3L642.1 398.8L640.5 398.7L640.4 406.2zM647.6 405.5L647.6 398.0L646.0 398.0L646.0 405.5zM653.9 404.6L654.3 397.1L652.7 397.0L652.3 404.5zM658.9 402.6L658.3 395.1L656.7 395.2L657.3 402.7zM664.2 402.2L664.3 394.7L662.7 394.7L662.6 402.2zM670.0 400.6L669.7 393.1L668.1 393.2L668.4 400.7zM676.1 399.7L675.9 392.2L674.3 392.3L674.5 399.8z" fill="#000" opacity="0.3"/><path d="M636.5 399.2L636.5 397.6L631.5 397.6L631.5 399.2zM642.6 398.8L642.6 397.2L637.6 397.1L637.6 398.7zM648.1 398.0L648.1 396.4L643.1 396.4L643.1 398.0zM654.8 397.1L654.8 395.5L649.8 395.2L649.8 396.8zM658.8 395.1L658.8 393.5L653.8 393.9L653.8 395.5zM664.8 394.7L664.8 393.1L659.8 393.0L659.8 394.6zM670.2 393.1L670.2 391.5L665.2 391.7L665.2 393.3zM676.4 392.2L676.4 390.6L671.4 390.8L671.4 392.4z" fill="#fff" opacity="0.14"/><path d="M639.1 413.0L639.5 405.6L635.5 405.3L635.1 412.8zM650.4 410.9L650.1 403.4L646.1 403.5L646.4 411.0zM661.0 408.5L661.0 401.0L657.0 401.0L657.0 408.5zM678.2 406.3L678.4 398.8L674.5 398.7L674.2 406.2z" fill="#bfff39"/><path d="M645.2 412.2L645.9 404.8L641.9 404.4L641.2 411.8zM655.9 409.8L656.0 402.3L652.0 402.3L651.9 409.8zM666.8 408.4L667.5 401.0L663.5 400.6L662.8 408.0zM672.5 406.3L673.1 398.8L669.2 398.5L668.6 406.0z" fill="#e3ff1a"/><path d="M639.1 413.0L639.5 405.6L637.9 405.5L637.5 413.0zM645.2 412.2L645.9 404.8L644.3 404.6L643.6 412.1zM650.4 410.9L650.1 403.4L648.5 403.4L648.8 410.9zM655.9 409.8L656.0 402.3L654.4 402.3L654.3 409.8zM661.0 408.5L661.0 401.0L659.4 401.0L659.4 408.5zM666.8 408.4L667.5 401.0L665.9 400.8L665.2 408.3zM672.5 406.3L673.1 398.8L671.6 398.7L671.0 406.2zM678.2 406.3L678.4 398.8L676.9 398.8L676.6 406.3z" fill="#000" opacity="0.3"/><path d="M640.0 405.6L640.0 404.0L635.0 403.7L635.0 405.3zM646.4 404.8L646.4 403.2L641.4 402.7L641.4 404.3zM650.6 403.4L650.6 401.8L645.6 401.9L645.6 403.5zM656.5 402.3L656.5 400.7L651.5 400.7L651.5 402.3zM661.5 401.0L661.5 399.4L656.5 399.4L656.5 401.0zM668.0 401.0L668.0 399.4L663.0 398.9L663.0 400.5zM673.6 398.9L673.6 397.3L668.7 396.9L668.7 398.5zM678.9 398.8L678.9 397.2L674.0 397.1L674.0 398.7z" fill="#fff" opacity="0.14"/><path d="M636.8 419.1L636.8 411.6L632.8 411.6L632.8 419.1zM664.0 414.2L664.1 406.7L660.1 406.7L660.0 414.2zM675.5 412.2L675.9 404.7L671.9 404.5L671.5 412.0z" fill="#bfff39"/><path d="M641.8 418.6L642.3 411.1L638.3 410.9L637.8 418.3zM647.8 416.9L647.4 409.5L643.4 409.7L643.8 417.2zM653.3 416.7L653.6 409.2L649.6 409.0L649.3 416.5zM659.3 415.8L659.4 408.3L655.4 408.2L655.3 415.7zM670.5 413.5L669.8 406.0L665.8 406.4L666.5 413.9z" fill="#9cff59"/><path d="M636.8 419.1L636.8 411.6L635.2 411.6L635.2 419.1zM641.8 418.6L642.3 411.1L640.7 411.0L640.2 418.5zM647.8 416.9L647.4 409.5L645.8 409.5L646.2 417.0zM653.3 416.7L653.6 409.2L652.0 409.1L651.7 416.6zM659.3 415.8L659.4 408.3L657.8 408.2L657.7 415.7zM664.0 414.2L664.1 406.7L662.5 406.7L662.4 414.2zM670.5 413.5L669.8 406.0L668.2 406.2L668.9 413.6zM675.5 412.2L675.9 404.7L674.3 404.6L673.9 412.1z" fill="#000" opacity="0.3"/><path d="M637.3 411.6L637.3 410.0L632.3 410.0L632.3 411.6zM642.8 411.2L642.8 409.6L637.8 409.2L637.8 410.8zM647.9 409.4L647.9 407.8L642.9 408.1L642.9 409.7zM654.1 409.2L654.1 407.6L649.1 407.4L649.1 409.0zM659.9 408.3L659.9 406.7L654.9 406.6L654.9 408.2zM664.6 406.7L664.6 405.1L659.6 405.1L659.6 406.7zM670.3 406.0L670.3 404.4L665.3 404.8L665.3 406.4zM676.4 404.7L676.4 403.1L671.4 402.9L671.4 404.5z" fill="#fff" opacity="0.14"/><path d="M639.5 425.2L639.1 417.7L635.1 417.9L635.5 425.4zM644.7 424.1L644.8 416.6L640.8 416.5L640.7 424.0zM650.0 422.5L649.2 415.1L645.3 415.5L646.0 422.9zM656.2 422.2L656.8 414.8L652.8 414.4L652.2 421.9zM661.7 421.1L662.3 413.6L658.3 413.3L657.7 420.7zM667.5 420.0L668.2 412.6L664.2 412.2L663.5 419.7zM672.3 419.3L671.8 411.8L667.8 412.1L668.3 419.6zM678.1 417.9L677.9 410.4L673.9 410.5L674.2 418.0z" fill="#78ff79"/><path d="M639.5 425.2L639.1 417.7L637.5 417.8L637.9 425.2zM644.7 424.1L644.8 416.6L643.2 416.5L643.1 424.0zM650.0 422.5L649.2 415.1L647.7 415.2L648.4 422.7zM656.2 422.2L656.8 414.8L655.2 414.6L654.6 422.1zM661.7 421.1L662.3 413.6L660.7 413.5L660.1 420.9zM667.5 420.0L668.2 412.6L666.6 412.4L665.9 419.9zM672.3 419.3L671.8 411.8L670.2 411.9L670.7 419.4zM678.1 417.9L677.9 410.4L676.3 410.4L676.6 417.9z" fill="#000" opacity="0.3"/><path d="M639.6 417.6L639.6 416.0L634.6 416.3L634.6 417.9zM645.3 416.6L645.3 415.0L640.3 414.9L640.3 416.5zM649.7 415.0L649.7 413.4L644.8 413.9L644.8 415.5zM657.3 414.8L657.3 413.2L652.3 412.8L652.3 414.4zM662.8 413.6L662.8 412.0L657.8 411.6L657.8 413.2zM668.7 412.6L668.7 411.0L663.7 410.6L663.7 412.2zM672.3 411.8L672.3 410.2L667.3 410.5L667.3 412.1zM678.4 410.4L678.4 408.8L673.4 408.9L673.4 410.5z" fill="#fff" opacity="0.14"/><path d="M636.1 431.6L636.6 424.1L632.6 423.8L632.1 431.3z" fill="#45ffad"/><path d="M642.1 431.0L642.8 423.6L638.8 423.2L638.1 430.6zM658.4 427.8L657.6 420.4L653.7 420.8L654.4 428.2zM663.7 426.8L663.7 419.3L659.7 419.3L659.7 426.8zM675.6 424.9L676.3 417.5L672.3 417.1L671.6 424.6z" fill="#55ff99"/><path d="M647.7 430.5L648.3 423.0L644.3 422.7L643.7 430.1zM652.9 428.8L652.2 421.4L648.3 421.7L648.9 429.2zM670.0 425.5L670.3 418.0L666.3 417.9L666.0 425.4z" fill="#78ff79"/><path d="M636.1 431.6L636.6 424.1L635.0 424.0L634.5 431.5zM642.1 431.0L642.8 423.6L641.2 423.4L640.5 430.9zM647.7 430.5L648.3 423.0L646.7 422.9L646.1 430.3zM652.9 428.8L652.2 421.4L650.7 421.5L651.3 429.0zM658.4 427.8L657.6 420.4L656.1 420.5L656.8 428.0zM663.7 426.8L663.7 419.3L662.1 419.3L662.1 426.8zM670.0 425.5L670.3 418.0L668.7 418.0L668.4 425.5zM675.6 424.9L676.3 417.5L674.7 417.3L674.0 424.8z" fill="#000" opacity="0.3"/><path d="M637.1 424.1L637.1 422.5L632.1 422.2L632.1 423.8zM643.3 423.6L643.3 422.0L638.3 421.5L638.3 423.1zM648.8 423.1L648.8 421.5L643.8 421.0L643.8 422.6zM652.7 421.3L652.7 419.7L647.8 420.2L647.8 421.8zM658.1 420.3L658.1 418.7L653.2 419.2L653.2 420.8zM664.2 419.3L664.2 417.7L659.2 417.7L659.2 419.3zM670.8 418.0L670.8 416.4L665.8 416.3L665.8 417.9zM676.8 417.5L676.8 415.9L671.8 415.5L671.8 417.1z" fill="#fff" opacity="0.14"/><path d="M522.1 222.8L534.8 214.3L519.8 217.2zM535.6 221.6L548.6 213.6L533.5 215.9z" fill="#00ebff"/><path d="M529.0 223.9L542.0 215.8L526.9 218.3zM543.3 224.2L556.1 215.9L541.1 218.6z" fill="#24ffd4"/><path d="M550.0 223.4L563.1 215.5L548.0 217.7z" fill="#34ffc0"/><path d="M558.0 222.6L571.1 214.7L556.0 216.9z" fill="#9cff59"/><path d="M564.4 222.9L577.8 215.6L562.6 217.1z" fill="#ffe000"/><path d="M522.1 222.8L534.8 214.3L521.1 220.4zM529.0 223.9L542.0 215.8L528.1 221.5zM535.6 221.6L548.6 213.6L534.7 219.2zM543.3 224.2L556.1 215.9L542.3 221.9zM550.0 223.4L563.1 215.5L549.1 221.0zM558.0 222.6L571.1 214.7L557.1 220.2zM564.4 222.9L577.8 215.6L563.6 220.4z" fill="#000" opacity="0.28"/><path d="M523.8 228.2L536.2 219.3L521.3 222.7z" fill="#03fffb"/><path d="M530.9 229.6L543.3 220.6L528.4 224.1z" fill="#00ebff"/><path d="M539.0 230.6L550.1 220.1L535.8 225.5z" fill="#14ffe7"/><path d="M546.1 229.3L556.5 218.0L542.6 224.4z" fill="#34ffc0"/><path d="M554.3 229.1L566.5 219.9L551.7 223.7z" fill="#78ff79"/><path d="M561.1 228.5L572.6 218.3L558.1 223.3z" fill="#fffa00"/><path d="M567.2 229.5L580.0 221.2L565.0 223.9z" fill="#ffe000"/><path d="M523.8 228.2L536.2 219.3L522.7 225.8zM530.9 229.6L543.3 220.6L529.8 227.3zM539.0 230.6L550.1 220.1L537.6 228.4zM546.1 229.3L556.5 218.0L544.6 227.2zM554.3 229.1L566.5 219.9L553.2 226.8zM561.1 228.5L572.6 218.3L559.8 226.3zM567.2 229.5L580.0 221.2L566.2 227.1z" fill="#000" opacity="0.28"/><path d="M519.1 235.4L529.4 224.2L515.6 230.6z" fill="#00ebff"/><path d="M527.9 236.7L539.2 226.4L524.8 231.5zM534.4 236.9L544.8 225.7L530.9 232.0zM542.6 236.3L553.9 226.0L539.5 231.2z" fill="#03fffb"/><path d="M549.3 236.1L559.2 224.4L545.6 231.4z" fill="#55ff99"/><path d="M557.6 236.8L567.9 225.5L554.1 232.0z" fill="#9cff59"/><path d="M564.6 236.1L574.9 224.7L561.0 231.3z" fill="#e3ff1a"/><path d="M519.1 235.4L529.4 224.2L517.6 233.4zM527.9 236.7L539.2 226.4L526.6 234.5zM534.4 236.9L544.8 225.7L532.9 234.8zM542.6 236.3L553.9 226.0L541.2 234.1zM549.3 236.1L559.2 224.4L547.7 234.1zM557.6 236.8L567.9 225.5L556.1 234.7zM564.6 236.1L574.9 224.7L563.1 234.1z" fill="#000" opacity="0.28"/><path d="M522.3 242.0L530.1 228.9L517.8 238.0z" fill="#00ebff"/><path d="M530.1 242.9L539.9 231.2L526.3 238.2z" fill="#14ffe7"/><path d="M537.8 241.0L546.0 228.1L533.4 236.9z" fill="#03fffb"/><path d="M545.4 240.8L554.9 228.7L541.5 236.2z" fill="#55ff99"/><path d="M551.2 242.5L561.2 230.9L547.5 237.8z" fill="#34ffc0"/><path d="M559.9 242.0L567.9 228.9L555.5 237.9z" fill="#78ff79"/><path d="M567.2 242.8L575.9 230.2L563.1 238.5z" fill="#ffe000"/><path d="M522.3 242.0L530.1 228.9L520.4 240.3zM530.1 242.9L539.9 231.2L528.5 240.9zM537.8 241.0L546.0 228.1L535.9 239.2zM545.4 240.8L554.9 228.7L543.8 238.8zM551.2 242.5L561.2 230.9L549.6 240.5zM559.9 242.0L567.9 228.9L558.1 240.2zM567.2 242.8L575.9 230.2L565.5 241.0z" fill="#000" opacity="0.28"/><path d="M518.5 248.5L523.6 234.1L513.3 245.4z" fill="#00d1ff"/><path d="M525.5 248.0L531.1 233.8L520.5 244.7zM532.5 247.4L539.1 233.6L527.7 243.9z" fill="#24ffd4"/><path d="M540.2 247.2L547.4 233.7L535.6 243.4z" fill="#03fffb"/><path d="M547.9 247.7L556.2 234.8L543.6 243.6z" fill="#34ffc0"/><path d="M555.6 247.2L563.8 234.3L551.3 243.0z" fill="#45ffad"/><path d="M563.7 248.0L570.5 234.3L558.9 244.4z" fill="#bfff39"/><path d="M569.5 249.9L577.4 236.8L565.1 245.8z" fill="#fffa00"/><path d="M577.2 247.7L583.3 233.7L572.3 244.3z" fill="#ffc700"/><path d="M584.6 248.2L591.4 234.4L579.8 244.5z" fill="#ff7a00"/><path d="M592.5 248.4L599.0 234.6L587.6 244.8z" fill="#ff4700"/><path d="M599.7 247.4L606.6 233.8L595.0 243.7z" fill="#fa0000"/><path d="M518.5 248.5L523.6 234.1L516.3 247.2zM525.5 248.0L531.1 233.8L523.4 246.6zM532.5 247.4L539.1 233.6L530.5 245.9zM540.2 247.2L547.4 233.7L538.2 245.6zM547.9 247.7L556.2 234.8L546.1 245.9zM555.6 247.2L563.8 234.3L553.7 245.4zM563.7 248.0L570.5 234.3L561.7 246.5zM569.5 249.9L577.4 236.8L567.6 248.2zM577.2 247.7L583.3 233.7L575.1 246.2zM584.6 248.2L591.4 234.4L582.6 246.6zM592.5 248.4L599.0 234.6L590.4 246.9zM599.7 247.4L606.6 233.8L597.7 245.8z" fill="#000" opacity="0.28"/><path d="M520.6 254.5L526.9 240.6L515.7 251.0zM529.3 253.8L533.6 239.1L524.0 251.0z" fill="#00ebff"/><path d="M535.2 254.3L540.0 239.8L530.0 251.3z" fill="#03fffb"/><path d="M543.9 255.2L547.0 240.3L538.4 252.9zM550.5 255.3L556.8 241.4L545.6 251.7z" fill="#24ffd4"/><path d="M558.2 255.5L562.3 240.7L552.8 252.8z" fill="#e3ff1a"/><path d="M566.1 255.1L568.9 240.1L560.5 252.9z" fill="#fffa00"/><path d="M573.5 254.2L578.1 239.6L568.2 251.3zM579.5 255.8L584.9 241.5L574.4 252.6z" fill="#ff9400"/><path d="M587.1 255.5L593.1 241.5L582.1 252.1z" fill="#fa0000"/><path d="M594.9 254.1L597.6 239.1L589.3 251.9zM602.5 255.1L606.6 240.4L597.1 252.4z" fill="#ff1400"/><path d="M520.6 254.5L526.9 240.6L518.5 253.0zM529.3 253.8L533.6 239.1L527.0 252.6zM535.2 254.3L540.0 239.8L533.0 253.0zM543.9 255.2L547.0 240.3L541.6 254.2zM550.5 255.3L556.8 241.4L548.4 253.8zM558.2 255.5L562.3 240.7L555.9 254.3zM566.1 255.1L568.9 240.1L563.7 254.2zM573.5 254.2L578.1 239.6L571.2 253.0zM579.5 255.8L584.9 241.5L577.3 254.4zM587.1 255.5L593.1 241.5L585.0 254.1zM594.9 254.1L597.6 239.1L592.5 253.2zM602.5 255.1L606.6 240.4L600.2 254.0z" fill="#000" opacity="0.28"/><path d="M516.2 260.0L519.3 245.0L510.7 257.6zM531.1 261.1L535.5 246.5L525.8 258.2z" fill="#00ebff"/><path d="M524.3 261.3L526.0 246.1L518.6 259.5zM538.2 260.5L538.6 245.3L532.4 259.2z" fill="#03fffb"/><path d="M547.4 260.2L550.2 245.1L541.8 257.9z" fill="#24ffd4"/><path d="M553.4 261.0L553.9 245.7L547.6 259.6z" fill="#34ffc0"/><path d="M561.9 259.8L565.4 244.9L556.5 257.3z" fill="#9cff59"/><path d="M568.8 261.3L570.1 246.1L563.0 259.6z" fill="#ffc700"/><path d="M576.3 261.1L578.0 245.9L570.6 259.3z" fill="#ff7a00"/><path d="M583.5 262.0L586.3 247.0L578.0 259.8z" fill="#ff9400"/><path d="M590.6 259.5L591.0 244.2L584.7 258.2z" fill="#ff2e00"/><path d="M597.4 261.5L601.0 246.6L592.0 258.9z" fill="#ff1400"/><path d="M604.5 261.3L608.6 246.5L599.2 258.6z" fill="#ff4700"/><path d="M516.2 260.0L519.3 245.0L513.8 259.0zM524.3 261.3L526.0 246.1L521.9 260.5zM531.1 261.1L535.5 246.5L528.8 259.9zM538.2 260.5L538.6 245.3L535.7 260.0zM547.4 260.2L550.2 245.1L545.0 259.2zM553.4 261.0L553.9 245.7L550.9 260.4zM561.9 259.8L565.4 244.9L559.6 258.8zM568.8 261.3L570.1 246.1L566.3 260.6zM576.3 261.1L578.0 245.9L573.9 260.3zM583.5 262.0L586.3 247.0L581.2 261.1zM590.6 259.5L591.0 244.2L588.1 259.0zM597.4 261.5L601.0 246.6L595.1 260.4zM604.5 261.3L608.6 246.5L602.3 260.1z" fill="#000" opacity="0.28"/><path d="M519.4 266.9L521.3 251.7L513.7 265.0zM527.0 267.6L527.6 252.4L521.2 266.2zM534.8 266.8L535.0 251.5L528.9 265.6zM542.6 267.1L542.1 251.8L536.7 266.1zM549.0 266.8L547.4 251.6L543.0 266.2zM556.5 267.7L555.8 252.4L550.5 266.7z" fill="#e3ff1a"/><path d="M564.0 266.8L563.3 251.5L558.1 265.9z" fill="#ffe000"/><path d="M571.4 266.9L571.4 251.6L565.5 265.7zM578.2 266.6L577.9 251.3L572.3 265.5zM585.8 265.2L585.1 250.0L579.9 264.3z" fill="#ff9400"/><path d="M594.2 266.4L595.2 251.2L588.4 264.9z" fill="#ff4700"/><path d="M600.5 267.3L599.8 252.0L594.5 266.4z" fill="#ff1400"/><path d="M519.4 266.9L521.3 251.7L517.0 266.1zM527.0 267.6L527.6 252.4L524.6 267.0zM534.8 266.8L535.0 251.5L532.3 266.3zM542.6 267.1L542.1 251.8L540.1 266.7zM549.0 266.8L547.4 251.6L546.4 266.5zM556.5 267.7L555.8 252.4L553.9 267.3zM564.0 266.8L563.3 251.5L561.5 266.4zM571.4 266.9L571.4 251.6L568.9 266.4zM578.2 266.6L577.9 251.3L575.7 266.1zM585.8 265.2L585.1 250.0L583.3 264.8zM594.2 266.4L595.2 251.2L591.8 265.8zM600.5 267.3L599.8 252.0L598.0 266.9z" fill="#000" opacity="0.28"/><path d="M514.1 271.5L511.4 256.5L508.1 271.4zM521.9 273.8L521.7 258.5L516.0 272.7zM529.4 273.0L526.9 257.9L523.4 272.8zM536.7 273.4L535.5 258.1L530.8 272.7zM544.6 274.2L543.0 259.0L538.6 273.6zM551.8 274.8L551.7 259.5L545.9 273.6zM560.0 273.4L558.4 258.2L554.0 272.8z" fill="#e3ff1a"/><path d="M566.3 272.7L564.5 257.5L560.4 272.2z" fill="#ffc700"/><path d="M574.9 273.3L570.9 258.5L568.9 273.7z" fill="#ff9400"/><path d="M580.8 272.9L580.9 257.6L574.9 271.7z" fill="#ff6100"/><path d="M589.7 274.3L589.6 259.0L583.8 273.1zM596.9 273.2L593.5 258.3L590.9 273.3z" fill="#ff4700"/><path d="M603.2 273.7L599.4 258.9L597.2 274.0z" fill="#ff1400"/><path d="M514.1 271.5L511.4 256.5L511.6 271.5zM521.9 273.8L521.7 258.5L519.4 273.3zM529.4 273.0L526.9 257.9L526.8 272.9zM536.7 273.4L535.5 258.1L534.2 273.1zM544.6 274.2L543.0 259.0L542.0 273.9zM551.8 274.8L551.7 259.5L549.3 274.3zM560.0 273.4L558.4 258.2L557.4 273.2zM566.3 272.7L564.5 257.5L563.8 272.5zM574.9 273.3L570.9 258.5L572.3 273.5zM580.8 272.9L580.9 257.6L578.3 272.4zM589.7 274.3L589.6 259.0L587.2 273.8zM596.9 273.2L593.5 258.3L594.3 273.2zM603.2 273.7L599.4 258.9L600.7 273.8z" fill="#000" opacity="0.28"/><path d="M516.4 277.7L513.7 257.5L508.4 277.2zM523.8 278.3L521.0 258.1L515.8 277.9zM531.9 277.6L528.6 257.5L523.9 277.4zM538.6 279.1L537.4 258.7L530.7 278.0zM555.5 276.7L552.3 256.6L547.6 276.4zM564.0 277.0L560.9 256.8L556.0 276.6zM579.2 278.5L577.4 258.2L571.3 277.6z" fill="#fffa00"/><path d="M546.9 277.6L543.8 257.4L538.9 277.2zM571.1 278.1L567.9 258.0L563.1 277.8zM588.1 278.3L587.4 257.9L580.2 277.0zM594.8 278.5L592.7 258.2L586.8 277.7z" fill="#e3ff1a"/><path d="M516.4 277.7L513.7 257.5L513.0 277.5zM523.8 278.3L521.0 258.1L520.4 278.1zM531.9 277.6L528.6 257.5L528.5 277.5zM538.6 279.1L537.4 258.7L535.3 278.6zM546.9 277.6L543.8 257.4L543.5 277.4zM555.5 276.7L552.3 256.6L552.1 276.6zM564.0 277.0L560.9 256.8L560.6 276.8zM571.1 278.1L567.9 258.0L567.7 278.0zM579.2 278.5L577.4 258.2L575.8 278.1zM588.1 278.3L587.4 257.9L584.7 277.8zM594.8 278.5L592.7 258.2L591.4 278.2z" fill="#000" opacity="0.34"/><path d="M520.4 288.2L520.1 267.8L512.6 286.8zM544.0 285.3L541.4 265.1L536.0 284.8zM567.5 288.1L567.3 267.7L559.7 286.6z" fill="#e3ff1a"/><path d="M527.4 287.1L526.4 266.7L519.5 285.9zM535.8 286.5L534.4 266.2L527.9 285.5zM551.5 287.3L548.9 267.1L543.6 286.8zM558.6 285.0L556.3 264.8L550.6 284.4zM574.7 287.2L572.9 266.9L566.7 286.3zM583.8 286.4L582.3 266.1L575.8 285.4zM591.4 285.8L590.1 265.5L583.5 284.8z" fill="#fffa00"/><path d="M520.4 288.2L520.1 267.8L517.1 287.6zM527.4 287.1L526.4 266.7L524.0 286.6zM535.8 286.5L534.4 266.2L532.5 286.1zM544.0 285.3L541.4 265.1L540.6 285.1zM551.5 287.3L548.9 267.1L548.1 287.1zM558.6 285.0L556.3 264.8L555.2 284.8zM567.5 288.1L567.3 267.7L564.2 287.4zM574.7 287.2L572.9 266.9L571.3 286.8zM583.8 286.4L582.3 266.1L580.4 286.0zM591.4 285.8L590.1 265.5L588.1 285.4z" fill="#000" opacity="0.34"/><path d="M515.0 293.5L513.2 273.2L507.0 292.6zM524.5 294.5L521.4 274.4L516.5 294.1zM532.4 295.8L531.3 275.4L524.5 294.6zM538.5 295.5L536.3 275.2L530.6 294.8zM548.0 294.8L545.3 274.6L540.0 294.3zM554.6 295.4L552.8 275.1L546.7 294.6zM563.4 295.5L563.1 275.1L555.5 294.0zM570.9 293.8L568.7 273.5L562.9 293.1zM579.7 293.4L577.9 273.1L571.8 292.6zM588.4 294.0L587.0 273.6L580.4 292.9zM594.8 294.7L593.0 274.4L586.9 293.9z" fill="#fffa00"/><path d="M515.0 293.5L513.2 273.2L511.6 293.1zM524.5 294.5L521.4 274.4L521.1 294.4zM532.4 295.8L531.3 275.4L529.0 295.3zM538.5 295.5L536.3 275.2L535.1 295.2zM548.0 294.8L545.3 274.6L544.6 294.6zM554.6 295.4L552.8 275.1L551.3 295.0zM563.4 295.5L563.1 275.1L560.1 294.9zM570.9 293.8L568.7 273.5L567.5 293.5zM579.7 293.4L577.9 273.1L576.3 293.1zM588.4 294.0L587.0 273.6L585.0 293.5zM594.8 294.7L593.0 274.4L591.4 294.3z" fill="#000" opacity="0.34"/><path d="M518.6 301.8L515.6 281.6L510.6 301.4zM528.4 302.4L527.1 282.0L520.4 301.3zM535.8 304.3L533.7 284.0L527.8 303.5zM543.1 303.9L542.1 283.5L535.2 302.7zM567.2 301.8L565.8 281.5L559.3 300.8zM575.3 301.4L572.1 281.2L567.3 301.1zM582.6 302.3L581.2 282.0L574.7 301.3zM590.9 303.9L590.2 283.5L583.0 302.5z" fill="#fffa00"/><path d="M551.7 303.9L550.6 283.6L543.7 302.8zM560.1 302.2L559.0 281.8L552.1 301.0z" fill="#e3ff1a"/><path d="M518.6 301.8L515.6 281.6L515.2 301.6zM528.4 302.4L527.1 282.0L525.0 301.9zM535.8 304.3L533.7 284.0L532.4 303.9zM543.1 303.9L542.1 283.5L539.7 303.4zM551.7 303.9L550.6 283.6L548.3 303.4zM560.1 302.2L559.0 281.8L556.7 301.7zM567.2 301.8L565.8 281.5L563.8 301.4zM575.3 301.4L572.1 281.2L571.9 301.2zM582.6 302.3L581.2 282.0L579.3 301.9zM590.9 303.9L590.2 283.5L587.5 303.3z" fill="#000" opacity="0.34"/><path d="M515.1 309.9L511.5 289.8L507.1 309.7zM524.0 309.9L520.4 289.8L516.0 309.7zM532.2 309.8L529.5 289.6L524.2 309.3zM538.6 311.7L538.2 291.3L530.7 310.3zM548.0 312.3L546.6 292.0L540.1 311.3zM555.3 311.4L555.1 291.0L547.5 309.9zM564.3 311.7L563.5 291.3L556.4 310.4zM571.1 312.6L570.7 292.2L563.3 311.2zM586.8 312.2L585.7 291.8L578.9 311.0zM595.0 310.3L592.9 290.0L587.1 309.6z" fill="#fffa00"/><path d="M580.4 311.6L578.9 291.3L572.4 310.7z" fill="#e3ff1a"/><path d="M515.1 309.9L511.5 289.8L511.7 309.8zM524.0 309.9L520.4 289.8L520.6 309.8zM532.2 309.8L529.5 289.6L528.8 309.6zM538.6 311.7L538.2 291.3L535.3 311.1zM548.0 312.3L546.6 292.0L544.6 311.9zM555.3 311.4L555.1 291.0L552.0 310.8zM564.3 311.7L563.5 291.3L561.0 311.2zM571.1 312.6L570.7 292.2L567.8 312.0zM580.4 311.6L578.9 291.3L577.0 311.2zM586.8 312.2L585.7 291.8L583.4 311.7zM595.0 310.3L592.9 290.0L591.6 310.0z" fill="#000" opacity="0.34"/><path d="M519.1 319.7L518.0 299.4L511.2 318.6zM535.4 318.5L532.0 298.4L527.4 318.2zM542.5 318.8L541.7 298.4L534.6 317.5zM551.7 317.7L548.2 297.6L543.7 317.5zM559.6 318.2L557.9 297.8L551.6 317.3zM566.8 318.5L564.2 298.2L558.8 317.9zM575.8 319.6L573.5 299.3L567.9 318.9zM584.0 318.8L582.5 298.4L576.0 317.8z" fill="#fffa00"/><path d="M528.1 320.4L527.3 300.0L520.2 319.1zM592.1 320.2L590.5 299.9L584.1 319.2z" fill="#e3ff1a"/><path d="M519.1 319.7L518.0 299.4L515.7 319.2zM528.1 320.4L527.3 300.0L524.8 319.9zM535.4 318.5L532.0 298.4L532.0 318.4zM542.5 318.8L541.7 298.4L539.1 318.2zM551.7 317.7L548.2 297.6L548.3 317.6zM559.6 318.2L557.9 297.8L556.2 317.8zM566.8 318.5L564.2 298.2L563.4 318.2zM575.8 319.6L573.5 299.3L572.4 319.3zM584.0 318.8L582.5 298.4L580.6 318.3zM592.1 320.2L590.5 299.9L588.7 319.8z" fill="#000" opacity="0.34"/><path d="M516.0 329.4L515.6 309.0L508.1 328.0zM522.7 327.8L520.0 307.6L514.8 327.3zM539.1 327.9L538.3 307.5L531.2 326.7zM548.2 326.1L544.8 306.0L540.2 325.9zM555.3 328.7L551.6 308.6L547.3 328.6zM562.6 329.0L560.6 308.7L554.7 328.2zM572.3 326.3L570.9 305.9L564.4 325.3zM578.6 326.5L577.4 306.1L570.7 325.4zM595.5 328.2L592.2 308.0L587.5 327.9z" fill="#fffa00"/><path d="M531.3 327.8L528.0 307.7L523.3 327.5zM588.3 329.1L587.4 308.8L580.4 327.9z" fill="#e3ff1a"/><path d="M516.0 329.4L515.6 309.0L512.7 328.8zM522.7 327.8L520.0 307.6L519.4 327.6zM531.3 327.8L528.0 307.7L527.9 327.7zM539.1 327.9L538.3 307.5L535.8 327.4zM548.2 326.1L544.8 306.0L544.8 326.0zM555.3 328.7L551.6 308.6L551.9 328.7zM562.6 329.0L560.6 308.7L559.3 328.7zM572.3 326.3L570.9 305.9L568.9 325.9zM578.6 326.5L577.4 306.1L575.3 326.0zM588.3 329.1L587.4 308.8L584.9 328.6zM595.5 328.2L592.2 308.0L592.1 328.1z" fill="#000" opacity="0.34"/><path d="M518.8 336.1L517.4 315.8L510.9 335.1zM534.7 336.3L531.3 316.2L526.7 336.1zM550.8 335.3L548.5 315.0L542.8 334.6zM560.1 336.0L557.8 315.8L552.2 335.4zM574.5 335.5L571.6 315.3L566.5 335.1zM583.5 334.4L580.1 314.3L575.5 334.2zM591.1 335.9L588.2 315.7L583.1 335.4z" fill="#fffa00"/><path d="M527.1 335.3L523.7 315.2L519.1 335.1zM543.6 335.3L543.2 314.9L535.8 333.8zM568.3 335.3L566.2 315.0L560.4 334.6z" fill="#e3ff1a"/><path d="M518.8 336.1L517.4 315.8L515.4 335.7zM527.1 335.3L523.7 315.2L523.7 335.2zM534.7 336.3L531.3 316.2L531.3 336.2zM543.6 335.3L543.2 314.9L540.3 334.7zM550.8 335.3L548.5 315.0L547.4 335.0zM560.1 336.0L557.8 315.8L556.7 335.8zM568.3 335.3L566.2 315.0L565.0 335.0zM574.5 335.5L571.6 315.3L571.1 335.3zM583.5 334.4L580.1 314.3L580.1 334.3zM591.1 335.9L588.2 315.7L587.7 335.7z" fill="#000" opacity="0.34"/><path d="M515.4 344.7L511.9 324.6L507.4 344.5zM530.6 343.6L527.8 323.4L522.7 343.1zM538.8 343.4L538.5 323.0L530.9 341.9zM546.9 343.0L545.5 322.7L539.0 342.0zM555.9 342.4L553.1 322.2L547.9 341.9zM562.9 345.3L562.1 324.9L555.0 344.0zM578.7 343.0L575.8 322.8L570.7 342.6zM595.7 345.2L592.6 325.0L587.8 344.8z" fill="#fffa00"/><path d="M522.7 344.3L520.1 324.0L514.7 343.7zM571.7 344.4L570.2 324.1L563.8 343.5zM588.2 342.8L586.6 322.5L580.3 341.9z" fill="#e3ff1a"/><path d="M515.4 344.7L511.9 324.6L512.0 344.6zM522.7 344.3L520.1 324.0L519.3 344.0zM530.6 343.6L527.8 323.4L527.2 343.4zM538.8 343.4L538.5 323.0L535.4 342.8zM546.9 343.0L545.5 322.7L543.5 342.6zM555.9 342.4L553.1 322.2L552.5 342.2zM562.9 345.3L562.1 324.9L559.5 344.8zM571.7 344.4L570.2 324.1L568.3 344.0zM578.7 343.0L575.8 322.8L575.3 342.9zM588.2 342.8L586.6 322.5L584.8 342.4zM595.7 345.2L592.6 325.0L592.3 345.0z" fill="#000" opacity="0.34"/><path d="M519.1 351.7L516.8 331.5L511.1 351.0zM527.4 350.6L524.6 330.4L519.4 350.1zM559.9 351.0L557.7 330.7L552.0 350.3zM567.7 353.1L565.8 332.8L559.7 352.3z" fill="#e3ff1a"/><path d="M536.3 353.3L533.4 333.1L528.3 352.8zM544.0 352.0L543.1 331.6L536.1 350.7zM551.2 352.8L548.8 332.6L543.2 352.2zM575.9 353.0L574.9 332.6L568.0 351.8zM583.8 352.8L583.4 332.4L575.9 351.4zM591.1 353.6L589.3 333.2L583.1 352.7z" fill="#fffa00"/><path d="M519.1 351.7L516.8 331.5L515.7 351.4zM527.4 350.6L524.6 330.4L524.0 350.4zM536.3 353.3L533.4 333.1L532.9 353.1zM544.0 352.0L543.1 331.6L540.6 351.5zM551.2 352.8L548.8 332.6L547.8 352.6zM559.9 351.0L557.7 330.7L556.5 350.7zM567.7 353.1L565.8 332.8L564.3 352.8zM575.9 353.0L574.9 332.6L572.6 352.5zM583.8 352.8L583.4 332.4L580.4 352.2zM591.1 353.6L589.3 333.2L587.7 353.2z" fill="#000" opacity="0.34"/><path d="M515.9 359.9L514.0 339.5L508.0 359.0zM530.7 360.5L529.4 340.1L522.8 359.4zM572.3 361.2L569.5 341.0L564.4 360.7zM579.9 361.6L578.0 341.3L572.0 360.8z" fill="#e3ff1a"/><path d="M523.7 359.2L520.1 339.1L515.7 359.1zM539.7 359.5L539.5 339.1L531.8 358.0zM547.5 360.5L546.0 340.2L539.5 359.5zM556.1 360.5L555.5 340.1L548.2 359.1zM562.6 362.1L561.8 341.7L554.7 360.9zM586.6 362.0L586.1 341.6L578.7 360.6zM596.0 360.6L593.4 340.4L588.0 360.1z" fill="#fffa00"/><path d="M515.9 359.9L514.0 339.5L512.5 359.5zM523.7 359.2L520.1 339.1L520.3 359.1zM530.7 360.5L529.4 340.1L527.3 360.0zM539.7 359.5L539.5 339.1L536.3 358.9zM547.5 360.5L546.0 340.2L544.1 360.1zM556.1 360.5L555.5 340.1L552.7 359.9zM562.6 362.1L561.8 341.7L559.2 361.6zM572.3 361.2L569.5 341.0L568.9 361.0zM579.9 361.6L578.0 341.3L576.5 361.2zM586.6 362.0L586.1 341.6L583.3 361.4zM596.0 360.6L593.4 340.4L592.6 360.4z" fill="#000" opacity="0.34"/><path d="M520.1 369.7L517.5 349.5L512.1 369.1zM543.1 368.7L540.4 348.5L535.2 368.2zM552.1 368.9L548.8 348.8L544.1 368.6zM559.2 370.1L557.4 349.8L551.2 369.2zM568.2 367.4L567.4 347.0L560.3 366.1zM575.4 368.3L574.4 347.9L567.5 367.1z" fill="#e3ff1a"/><path d="M528.0 368.7L524.7 348.6L520.0 368.4zM534.7 368.1L533.6 347.7L526.7 367.0zM583.8 367.1L580.3 347.0L575.8 366.8zM591.4 367.4L588.3 347.3L583.4 367.1z" fill="#fffa00"/><path d="M520.1 369.7L517.5 349.5L516.7 369.5zM528.0 368.7L524.7 348.6L524.6 368.6zM534.7 368.1L533.6 347.7L531.3 367.6zM543.1 368.7L540.4 348.5L539.7 368.4zM552.1 368.9L548.8 348.8L548.7 368.8zM559.2 370.1L557.4 349.8L555.8 369.7zM568.2 367.4L567.4 347.0L564.8 366.9zM575.4 368.3L574.4 347.9L572.1 367.8zM583.8 367.1L580.3 347.0L580.4 367.0zM591.4 367.4L588.3 347.3L588.0 367.3z" fill="#000" opacity="0.34"/><path d="M514.6 377.3L512.9 357.0L506.6 376.4zM547.7 376.0L547.3 355.6L539.8 374.6zM555.7 377.4L555.0 357.0L547.8 376.0zM563.3 376.0L563.0 355.7L555.4 374.6zM578.8 377.6L575.1 357.6L570.8 377.5zM588.0 375.5L586.2 355.2L580.1 374.6zM594.8 376.9L591.5 356.8L586.8 376.6z" fill="#e3ff1a"/><path d="M522.7 377.6L521.1 357.2L514.7 376.6zM531.2 376.4L528.6 356.2L523.2 375.9zM540.4 377.0L537.0 356.8L532.4 376.7zM571.9 376.0L570.2 355.7L563.9 375.1z" fill="#bfff39"/><path d="M514.6 377.3L512.9 357.0L511.2 376.9zM522.7 377.6L521.1 357.2L519.3 377.1zM531.2 376.4L528.6 356.2L527.8 376.2zM540.4 377.0L537.0 356.8L537.0 376.9zM547.7 376.0L547.3 355.6L544.3 375.4zM555.7 377.4L555.0 357.0L552.3 376.8zM563.3 376.0L563.0 355.7L560.0 375.4zM571.9 376.0L570.2 355.7L568.5 375.6zM578.8 377.6L575.1 357.6L575.4 377.6zM588.0 375.5L586.2 355.2L584.6 375.1zM594.8 376.9L591.5 356.8L591.4 376.8z" fill="#000" opacity="0.34"/><path d="M519.4 384.1L516.1 364.0L511.4 383.8zM527.1 386.4L525.8 366.1L519.2 385.4zM535.2 385.5L532.3 365.3L527.2 385.1zM544.2 384.6L541.2 364.4L536.2 384.2zM551.6 385.1L550.8 364.8L543.7 383.9zM558.7 385.6L556.4 365.4L550.7 384.9zM567.2 384.2L564.4 364.0L559.2 383.7zM574.9 383.7L573.3 363.4L567.0 382.8zM583.9 385.8L580.9 365.6L575.9 385.4z" fill="#bfff39"/><path d="M591.1 383.8L587.9 363.7L583.1 383.5z" fill="#e3ff1a"/><path d="M519.4 384.1L516.1 364.0L516.0 384.0zM527.1 386.4L525.8 366.1L523.8 386.0zM535.2 385.5L532.3 365.3L531.8 385.3zM544.2 384.6L541.2 364.4L540.8 384.4zM551.6 385.1L550.8 364.8L548.3 384.6zM558.7 385.6L556.4 365.4L555.3 385.3zM567.2 384.2L564.4 364.0L563.8 384.0zM574.9 383.7L573.3 363.4L571.6 383.3zM583.9 385.8L580.9 365.6L580.5 385.6zM591.1 383.8L587.9 363.7L587.7 383.7z" fill="#000" opacity="0.34"/><path d="M516.2 394.5L515.5 374.1L508.3 393.2zM523.4 392.4L519.8 372.3L515.4 392.2zM532.2 392.0L529.8 371.7L524.3 391.4zM540.2 392.1L537.7 371.9L532.2 391.5zM547.0 392.3L544.9 372.1L539.0 391.6zM572.2 393.2L570.5 372.9L564.3 392.3zM588.4 392.0L584.9 371.9L580.4 391.8z" fill="#9cff59"/><path d="M555.2 394.1L554.0 373.7L547.3 392.9zM562.9 393.9L562.7 373.6L555.0 392.5zM580.4 392.7L579.7 372.3L572.5 391.4zM594.5 393.9L593.5 373.5L586.6 392.7z" fill="#bfff39"/><path d="M516.2 394.5L515.5 374.1L512.8 393.9zM523.4 392.4L519.8 372.3L520.0 392.3zM532.2 392.0L529.8 371.7L528.8 391.7zM540.2 392.1L537.7 371.9L536.8 391.9zM547.0 392.3L544.9 372.1L543.6 392.0zM555.2 394.1L554.0 373.7L551.8 393.6zM562.9 393.9L562.7 373.6L559.5 393.3zM572.2 393.2L570.5 372.9L568.8 392.8zM580.4 392.7L579.7 372.3L577.1 392.1zM588.4 392.0L584.9 371.9L585.0 391.9zM594.5 393.9L593.5 373.5L591.1 393.4z" fill="#000" opacity="0.34"/><path d="M519.6 402.1L517.0 381.9L511.6 401.5zM550.6 401.6L549.8 381.2L542.7 400.3z" fill="#9cff59"/><path d="M528.1 402.7L526.4 382.4L520.2 401.8zM535.1 400.7L534.5 380.3L527.3 399.4zM542.5 400.8L539.0 380.7L534.5 400.6zM558.6 401.0L557.7 380.6L550.7 399.8zM567.2 400.4L565.6 380.0L559.3 399.4zM576.4 401.3L575.4 380.9L568.5 400.1zM584.3 400.3L583.3 380.0L576.4 399.1zM592.3 402.1L589.2 382.0L584.3 401.8z" fill="#78ff79"/><path d="M519.6 402.1L517.0 381.9L516.2 401.9zM528.1 402.7L526.4 382.4L524.8 402.3zM535.1 400.7L534.5 380.3L531.8 400.1zM542.5 400.8L539.0 380.7L539.1 400.7zM550.6 401.6L549.8 381.2L547.2 401.0zM558.6 401.0L557.7 380.6L555.3 400.5zM567.2 400.4L565.6 380.0L563.8 400.0zM576.4 401.3L575.4 380.9L573.1 400.8zM584.3 400.3L583.3 380.0L580.9 399.8zM592.3 402.1L589.2 382.0L588.9 402.0z" fill="#000" opacity="0.34"/><path d="M515.2 411.3L514.6 390.9L507.3 409.9zM532.3 410.7L531.6 390.3L524.4 409.4zM538.9 410.3L537.3 390.0L531.0 409.4zM547.9 410.7L547.4 390.3L540.0 409.4zM554.7 410.5L552.6 390.2L546.7 409.8zM564.4 409.7L563.2 389.3L556.4 408.5zM571.3 409.0L570.7 388.6L563.4 407.6zM580.5 410.4L578.6 390.1L572.5 409.5zM595.5 409.1L592.1 388.9L587.5 408.8z" fill="#55ff99"/><path d="M523.2 410.0L522.1 389.6L515.3 408.8zM587.9 411.3L587.3 390.9L580.0 410.0z" fill="#78ff79"/><path d="M515.2 411.3L514.6 390.9L511.8 410.7zM523.2 410.0L522.1 389.6L519.9 409.5zM532.3 410.7L531.6 390.3L529.0 410.1zM538.9 410.3L537.3 390.0L535.5 409.9zM547.9 410.7L547.4 390.3L544.5 410.1zM554.7 410.5L552.6 390.2L551.3 410.2zM564.4 409.7L563.2 389.3L561.0 409.2zM571.3 409.0L570.7 388.6L567.9 408.4zM580.5 410.4L578.6 390.1L577.1 410.0zM587.9 411.3L587.3 390.9L584.6 410.7zM595.5 409.1L592.1 388.9L592.1 408.9z" fill="#000" opacity="0.34"/><path d="M517.6 413.7L512.7 399.3L511.7 414.5zM526.4 415.4L524.1 400.3L520.4 415.2zM534.5 415.2L531.3 400.2L528.5 415.3zM542.0 413.8L539.9 398.6L536.0 413.4zM550.1 414.5L545.9 399.7L544.1 414.9zM558.2 415.5L555.1 400.5L552.2 415.6zM566.1 413.8L563.6 398.7L560.1 413.6zM574.6 413.5L571.6 398.5L568.6 413.5zM582.0 415.1L578.1 400.3L576.0 415.4zM591.0 416.3L589.1 401.1L585.1 415.8z" fill="#45ffad"/><path d="M517.6 413.7L512.7 399.3L515.1 414.1zM526.4 415.4L524.1 400.3L523.8 415.3zM534.5 415.2L531.3 400.2L531.9 415.2zM542.0 413.8L539.9 398.6L539.4 413.6zM550.1 414.5L545.9 399.7L547.5 414.7zM558.2 415.5L555.1 400.5L555.6 415.5zM566.1 413.8L563.6 398.7L563.6 413.7zM574.6 413.5L571.6 398.5L572.0 413.5zM582.0 415.1L578.1 400.3L579.4 415.2zM591.0 416.3L589.1 401.1L588.5 416.1z" fill="#000" opacity="0.34"/><path d="M514.2 421.9L508.7 407.6L508.3 422.9zM522.1 422.9L516.2 408.8L516.2 424.1zM537.6 421.3L530.1 407.9L531.8 423.1zM545.8 423.6L540.7 409.2L539.9 424.4zM554.7 423.3L549.3 409.0L548.7 424.3zM562.2 424.2L557.6 409.6L556.3 424.9zM570.5 423.6L567.3 408.7L564.5 423.7zM577.9 422.3L573.9 407.5L572.0 422.7zM587.5 422.9L583.3 408.2L581.5 423.4zM594.5 422.5L593.1 407.3L588.5 421.9z" fill="#34ffc0"/><path d="M530.7 422.7L523.7 409.1L524.9 424.3z" fill="#24ffd4"/><path d="M514.2 421.9L508.7 407.6L511.7 422.3zM522.1 422.9L516.2 408.8L519.6 423.4zM530.7 422.7L523.7 409.1L528.2 423.4zM537.6 421.3L530.1 407.9L535.1 422.1zM545.8 423.6L540.7 409.2L543.3 423.9zM554.7 423.3L549.3 409.0L552.1 423.7zM562.2 424.2L557.6 409.6L559.7 424.5zM570.5 423.6L567.3 408.7L567.9 423.7zM577.9 422.3L573.9 407.5L575.4 422.4zM587.5 422.9L583.3 408.2L584.9 423.1zM594.5 422.5L593.1 407.3L592.0 422.3z" fill="#000" opacity="0.34"/><path d="M517.3 428.6L506.9 417.3L512.2 431.7zM525.5 428.7L516.3 416.5L520.0 431.3zM565.6 431.6L562.8 416.5L559.6 431.5zM575.4 431.3L572.4 416.2L569.4 431.2z" fill="#14ffe7"/><path d="M533.8 429.6L528.0 415.5L528.0 430.8zM543.2 430.7L535.2 417.7L537.6 432.8zM551.3 431.2L544.5 417.5L545.5 432.8zM558.9 431.9L554.6 417.2L552.9 432.4zM581.5 432.6L579.3 417.4L575.5 432.2zM590.1 430.2L589.1 415.0L584.2 429.4z" fill="#24ffd4"/><path d="M517.3 428.6L506.9 417.3L515.1 429.9zM525.5 428.7L516.3 416.5L523.1 429.8zM533.8 429.6L528.0 415.5L531.3 430.1zM543.2 430.7L535.2 417.7L540.8 431.6zM551.3 431.2L544.5 417.5L548.8 431.9zM558.9 431.9L554.6 417.2L556.4 432.1zM565.6 431.6L562.8 416.5L563.0 431.5zM575.4 431.3L572.4 416.2L572.8 431.2zM581.5 432.6L579.3 417.4L579.0 432.4zM590.1 430.2L589.1 415.0L587.6 429.9z" fill="#000" opacity="0.34"/><path d="M514.3 438.8L503.7 427.8L509.3 442.0zM522.6 437.5L511.6 426.9L517.6 440.9zM530.8 438.5L522.6 425.6L525.2 440.7zM539.0 439.5L531.0 426.5L533.3 441.6zM545.8 439.6L538.8 426.0L540.0 441.3zM554.6 437.4L546.6 424.4L549.0 439.5zM563.2 438.4L559.0 423.7L557.2 438.9zM571.3 439.5L567.4 424.7L565.3 439.8zM578.1 440.2L573.3 425.7L572.2 440.9zM586.9 438.4L585.9 423.2L581.0 437.7zM593.6 439.4L591.5 424.3L587.6 439.1z" fill="#03fffb"/><path d="M514.3 438.8L503.7 427.8L512.2 440.1zM522.6 437.5L511.6 426.9L520.5 438.9zM530.8 438.5L522.6 425.6L528.4 439.4zM539.0 439.5L531.0 426.5L536.6 440.4zM545.8 439.6L538.8 426.0L543.3 440.3zM554.6 437.4L546.6 424.4L552.2 438.3zM563.2 438.4L559.0 423.7L560.6 438.6zM571.3 439.5L567.4 424.7L568.8 439.6zM578.1 440.2L573.3 425.7L575.6 440.5zM586.9 438.4L585.9 423.2L584.4 438.1zM593.6 439.4L591.5 424.3L591.1 439.3z" fill="#000" opacity="0.34"/><path d="M517.2 444.5L505.7 434.4L512.5 448.1z" fill="#03fffb"/><path d="M525.4 444.1L512.6 435.7L521.1 448.4zM534.7 445.6L525.3 433.5L529.3 448.3zM542.2 445.2L533.2 432.8L536.7 447.7zM550.1 447.2L541.9 434.3L544.5 449.4zM557.7 446.1L551.1 432.2L551.9 447.5zM567.3 448.1L560.9 434.3L561.5 449.5zM575.4 447.6L571.7 432.7L569.4 447.8zM581.9 448.2L579.2 433.1L575.9 448.0zM589.9 448.8L588.2 433.6L583.9 448.3z" fill="#00ebff"/><path d="M517.2 444.5L505.7 434.4L515.2 446.0zM525.4 444.1L512.6 435.7L523.6 445.9zM534.7 445.6L525.3 433.5L532.4 446.7zM542.2 445.2L533.2 432.8L539.8 446.2zM550.1 447.2L541.9 434.3L547.7 448.1zM557.7 446.1L551.1 432.2L555.2 446.7zM567.3 448.1L560.9 434.3L564.9 448.7zM575.4 447.6L571.7 432.7L572.9 447.7zM581.9 448.2L579.2 433.1L579.3 448.1zM589.9 448.8L588.2 433.6L587.4 448.6z" fill="#000" opacity="0.34"/><path d="M550.5 264V440" stroke="#2f6fc0" stroke-width="0.6" fill="none" opacity="0.8"/><path d="M669.8 416.3L672.8 425.7L675.0 416.1zM667.8 422.4L664.8 431.7L672.2 425.2zM662.9 430.7L658.4 439.5L666.7 434.2zM659.8 431.7L653.3 439.1L662.7 436.1zM649.1 438.9L642.5 446.3L651.9 443.3zM645.5 441.7L637.7 447.7L647.5 446.5zM641.0 443.0L633.0 448.8L642.8 447.9zM636.6 444.9L628.7 450.8L638.5 449.7zM625.9 449.1L618.1 455.1L627.9 453.9zM595.5 453.5L585.9 455.9L595.4 458.7zM589.3 454.1L579.7 456.5L589.1 459.3zM585.3 453.1L575.6 454.6L584.7 458.3zM579.8 453.5L570.0 454.8L579.1 458.6zM570.4 452.4L560.6 452.8L569.2 457.5zM565.2 451.6L555.4 451.4L563.7 456.6zM557.8 449.1L548.0 447.8L555.8 453.9zM552.4 446.8L543.0 444.0L549.6 451.2z" fill="#03fffb"/><path d="M670.8 419.0L672.2 428.7L675.9 419.6zM669.2 420.7L667.4 430.3L673.9 422.9zM653.5 436.4L646.5 443.4L656.0 441.0zM620.5 450.3L612.0 455.3L621.9 455.3z" fill="#14ffe7"/><path d="M666.6 426.0L663.3 435.3L670.8 429.0zM665.2 427.3L660.2 435.8L668.8 431.0zM657.0 434.0L649.9 440.8L659.5 438.5zM630.3 446.5L622.8 452.9L632.5 451.2zM615.8 450.8L607.6 456.2L617.5 455.7zM611.2 452.2L601.9 455.2L611.5 457.4zM605.7 452.4L596.6 456.2L606.4 457.6zM599.6 453.9L590.6 457.9L600.4 459.1zM574.8 453.6L565.0 455.3L574.2 458.8zM561.3 451.0L551.5 452.0L560.4 456.1zM554.1 447.3L544.4 446.0L552.1 452.1zM549.3 444.1L539.8 441.6L546.7 448.6zM545.8 443.0L536.9 438.8L542.5 447.0zM544.8 440.5L536.1 435.9L541.3 444.3z" fill="#00ebff"/><path d="M543.5 439.3L536.3 432.5L539.0 442.0z" fill="#00d1ff"/><path d="M542.1 437.7L535.6 430.3L537.4 440.0zM541.2 436.3L537.3 427.2L536.1 437.0z" fill="#00b8ff"/><path d="M675.0 416.1L672.8 425.7L672.8 416.2zM675.9 419.6L672.2 428.7L673.8 419.3zM673.9 422.9L667.4 430.3L671.9 422.0zM672.2 425.2L664.8 431.7L670.3 424.0zM670.8 429.0L663.3 435.3L669.0 427.7zM668.8 431.0L660.2 435.8L667.3 429.4zM666.7 434.2L658.4 439.5L665.1 432.8zM662.7 436.1L653.3 439.1L661.5 434.2zM659.5 438.5L649.9 440.8L658.5 436.6zM656.0 441.0L646.5 443.4L655.0 439.1zM651.9 443.3L642.5 446.3L650.7 441.4zM647.5 446.5L637.7 447.7L646.6 444.5zM642.8 447.9L633.0 448.8L642.0 445.8zM638.5 449.7L628.7 450.8L637.7 447.6zM632.5 451.2L622.8 452.9L631.6 449.2zM627.9 453.9L618.1 455.1L627.0 451.9zM621.9 455.3L612.0 455.3L621.3 453.2zM617.5 455.7L607.6 456.2L616.8 453.6zM611.5 457.4L601.9 455.2L611.4 455.2zM606.4 457.6L596.6 456.2L606.1 455.4zM600.4 459.1L590.6 457.9L600.1 456.9zM595.4 458.7L585.9 455.9L595.4 456.5zM589.1 459.3L579.7 456.5L589.2 457.1zM584.7 458.3L575.6 454.6L585.0 456.1zM579.1 458.6L570.0 454.8L579.4 456.4zM574.2 458.8L565.0 455.3L574.5 456.6zM569.2 457.5L560.6 452.8L569.8 455.3zM563.7 456.6L555.4 451.4L564.4 454.5zM560.4 456.1L551.5 452.0L560.8 453.9zM557.8 449.1L548.0 447.8L556.9 451.1zM554.1 447.3L544.4 446.0L553.3 449.4zM552.4 446.8L543.0 444.0L551.2 448.7zM549.3 444.1L539.8 441.6L548.2 446.0zM545.8 443.0L536.9 438.8L544.4 444.7zM544.8 440.5L536.1 435.9L543.3 442.1zM543.5 439.3L536.3 432.5L541.6 440.4zM542.1 437.7L535.6 430.3L540.1 438.7zM541.2 436.3L537.3 427.2L539.0 436.6z" fill="#000" opacity="0.28"/><path d="M663.6 416.5L664.6 426.3L668.7 417.3zM663.5 420.6L661.4 430.3L668.1 423.0zM660.6 424.0L658.3 433.6L665.2 426.5zM651.7 432.6L645.0 439.9L654.4 437.1zM644.6 438.3L637.1 444.7L646.8 443.1zM641.0 439.5L633.9 446.4L643.5 444.0zM616.1 447.8L607.0 451.6L616.7 453.0zM604.7 450.2L595.2 452.9L604.8 455.4zM593.6 450.3L584.3 453.5L594.0 455.5zM588.7 450.0L579.0 451.5L588.1 455.2zM578.9 450.5L569.0 451.1L577.8 455.6zM570.1 448.3L560.4 449.8L569.5 453.5zM566.3 447.8L556.4 448.7L565.4 452.9zM561.4 446.3L551.6 446.1L559.9 451.3zM555.9 442.5L546.1 440.8L553.7 447.2z" fill="#14ffe7"/><path d="M664.2 419.5L663.9 429.4L669.2 421.1zM659.2 426.3L655.3 435.4L663.3 429.5zM655.5 430.4L650.4 438.9L659.1 434.2zM636.3 442.1L628.5 448.1L638.3 446.9zM631.0 444.2L622.6 449.3L632.4 449.2zM626.2 445.8L617.9 451.1L627.8 450.8zM620.8 447.3L612.5 452.5L622.3 452.3zM609.9 449.1L601.0 453.2L610.8 454.3zM599.7 449.5L590.6 453.3L600.3 454.6zM583.5 450.3L574.0 452.7L583.4 455.5zM575.2 449.9L565.4 450.9L574.4 455.1z" fill="#24ffd4"/><path d="M657.3 428.0L651.9 436.2L660.7 431.9zM648.3 435.0L641.9 442.5L651.2 439.3zM558.7 445.2L549.1 442.9L556.2 449.7zM549.4 437.8L541.2 432.3L545.5 441.2z" fill="#03fffb"/><path d="M553.0 441.1L543.7 437.7L549.9 445.3zM552.2 439.6L543.7 434.6L548.5 443.2zM549.7 436.1L543.0 428.8L545.0 438.5zM548.4 434.2L544.0 425.4L543.3 435.3z" fill="#00ebff"/><path d="M668.7 417.3L664.6 426.3L666.6 417.0zM669.2 421.1L663.9 429.4L667.1 420.4zM668.1 423.0L661.4 430.3L666.1 422.0zM665.2 426.5L658.3 433.6L663.2 425.5zM663.3 429.5L655.3 435.4L661.5 428.2zM660.7 431.9L651.9 436.2L659.3 430.3zM659.1 434.2L650.4 438.9L657.5 432.6zM654.4 437.1L645.0 439.9L653.3 435.2zM651.2 439.3L641.9 442.5L650.0 437.4zM646.8 443.1L637.1 444.7L645.9 441.1zM643.5 444.0L633.9 446.4L642.4 442.1zM638.3 446.9L628.5 448.1L637.4 444.9zM632.4 449.2L622.6 449.3L631.8 447.1zM627.8 450.8L617.9 451.1L627.1 448.7zM622.3 452.3L612.5 452.5L621.7 450.2zM616.7 453.0L607.0 451.6L616.5 450.8zM610.8 454.3L601.0 453.2L610.4 452.1zM604.8 455.4L595.2 452.9L604.7 453.2zM600.3 454.6L590.6 453.3L600.0 452.5zM594.0 455.5L584.3 453.5L593.8 453.3zM588.1 455.2L579.0 451.5L588.3 453.0zM583.4 455.5L574.0 452.7L583.4 453.3zM577.8 455.6L569.0 451.1L578.3 453.4zM574.4 455.1L565.4 450.9L574.7 452.9zM569.5 453.5L560.4 449.8L569.8 451.3zM565.4 452.9L556.4 448.7L565.7 450.7zM559.9 451.3L551.6 446.1L560.6 449.2zM558.7 445.2L549.1 442.9L557.6 447.1zM555.9 442.5L546.1 440.8L554.9 444.5zM553.0 441.1L543.7 437.7L551.7 442.9zM552.2 439.6L543.7 434.6L550.6 441.2zM549.4 437.8L541.2 432.3L547.8 439.2zM549.7 436.1L543.0 428.8L547.7 437.1zM548.4 434.2L544.0 425.4L546.2 434.7z" fill="#000" opacity="0.28"/><path d="M657.8 418.2L658.6 428.0L662.9 419.1zM657.0 420.4L657.7 430.2L662.1 421.4zM654.2 423.6L650.1 432.5L658.2 426.9zM643.7 433.4L637.8 441.3L646.9 437.5zM640.6 435.2L632.8 441.2L642.5 440.0zM612.0 444.7L603.6 449.9L613.5 449.6zM607.5 445.4L598.6 449.6L608.4 450.5zM601.5 447.4L592.8 451.9L602.6 452.4zM587.2 447.4L577.8 450.7L587.5 452.6zM578.4 445.7L568.5 445.8L577.0 450.7z" fill="#45ffad"/><path d="M656.4 422.1L655.7 431.9L661.3 423.8zM653.5 426.0L648.5 434.5L657.1 429.7zM650.7 429.0L645.0 437.0L654.0 433.0zM647.8 430.7L642.3 438.9L651.2 434.6zM636.7 436.9L629.6 443.7L639.1 441.5zM632.5 439.0L625.1 445.6L634.8 443.7zM628.1 441.5L620.2 447.5L630.0 446.3zM622.6 442.8L614.2 447.9L624.0 447.9zM617.2 444.4L608.9 449.6L618.7 449.3zM597.4 446.7L587.8 448.7L597.1 451.9zM591.0 447.7L581.9 451.4L591.6 452.9zM582.5 447.4L572.9 449.5L582.3 452.6zM568.6 445.1L558.8 445.4L567.4 450.1zM565.9 443.8L556.1 442.4L563.8 448.6zM558.2 438.6L549.1 434.7L554.9 442.7z" fill="#34ffc0"/><path d="M572.9 444.9L563.1 446.0L572.1 450.0zM563.4 441.7L553.8 439.6L561.0 446.3zM555.9 435.0L549.1 427.9L551.3 437.5zM555.7 432.9L551.1 424.2L550.6 434.0z" fill="#24ffd4"/><path d="M560.9 440.3L551.6 437.0L557.9 444.5zM557.2 436.5L550.2 429.5L552.7 439.1z" fill="#14ffe7"/><path d="M662.9 419.1L658.6 428.0L660.7 418.7zM662.1 421.4L657.7 430.2L659.9 421.0zM661.3 423.8L655.7 431.9L659.2 423.0zM658.2 426.9L650.1 432.5L656.5 425.5zM657.1 429.7L648.5 434.5L655.5 428.1zM654.0 433.0L645.0 437.0L652.6 431.3zM651.2 434.6L642.3 438.9L649.8 432.9zM646.9 437.5L637.8 441.3L645.6 435.7zM642.5 440.0L632.8 441.2L641.7 438.0zM639.1 441.5L629.6 443.7L638.1 439.5zM634.8 443.7L625.1 445.6L633.8 441.7zM630.0 446.3L620.2 447.5L629.2 444.3zM624.0 447.9L614.2 447.9L623.4 445.7zM618.7 449.3L608.9 449.6L618.1 447.2zM613.5 449.6L603.6 449.9L612.8 447.5zM608.4 450.5L598.6 449.6L608.0 448.3zM602.6 452.4L592.8 451.9L602.1 450.3zM597.1 451.9L587.8 448.7L597.3 449.7zM591.6 452.9L581.9 451.4L591.4 450.7zM587.5 452.6L577.8 450.7L587.4 450.4zM582.3 452.6L572.9 449.5L582.4 450.4zM577.0 450.7L568.5 445.8L577.6 448.6zM572.1 450.0L563.1 446.0L572.5 447.9zM567.4 450.1L558.8 445.4L567.9 448.0zM565.9 443.8L556.1 442.4L565.0 445.8zM563.4 441.7L553.8 439.6L562.4 443.7zM560.9 440.3L551.6 437.0L559.7 442.1zM558.2 438.6L549.1 434.7L556.8 440.3zM557.2 436.5L550.2 429.5L555.3 437.6zM555.9 435.0L549.1 427.9L553.9 436.1zM555.7 432.9L551.1 424.2L553.5 433.4z" fill="#000" opacity="0.28"/><path d="M650.0 417.9L652.6 427.4L655.2 417.9z" fill="#ffc700"/><path d="M650.2 421.2L650.4 431.0L655.2 422.4z" fill="#ffe000"/><path d="M648.9 422.2L647.2 431.9L653.6 424.4zM647.8 424.4L644.7 433.8L652.1 427.2zM645.6 426.6L640.4 434.9L649.1 430.4z" fill="#fffa00"/><path d="M643.7 430.2L637.6 437.9L646.8 434.4z" fill="#e3ff1a"/><path d="M639.6 431.5L633.5 439.2L642.7 435.7zM636.2 434.3L629.5 441.5L639.0 438.7zM632.9 436.0L625.0 442.0L634.8 440.9zM617.0 440.5L608.6 445.7L618.5 445.5z" fill="#bfff39"/><path d="M628.2 438.2L620.2 444.0L630.0 443.1zM622.4 438.8L614.6 444.7L624.4 443.7zM612.0 442.0L603.2 446.3L613.0 447.1zM582.4 442.6L572.5 443.0L581.2 447.7z" fill="#9cff59"/><path d="M607.3 442.4L598.4 446.7L608.2 447.5zM602.6 443.6L593.6 447.5L603.4 448.7zM596.3 443.5L587.1 446.8L596.7 448.7zM573.3 442.2L563.4 442.4L572.0 447.2zM564.8 437.4L556.0 432.9L561.3 441.2z" fill="#55ff99"/><path d="M591.1 443.6L581.9 447.1L591.6 448.8zM586.6 443.5L576.8 444.5L585.8 448.6zM577.2 442.2L567.4 441.8L575.7 447.2z" fill="#78ff79"/><path d="M571.0 441.0L561.3 439.0L568.6 445.6zM567.0 438.3L557.6 435.2L564.1 442.6zM562.3 433.5L554.9 427.0L558.0 436.4zM561.2 432.5L557.1 423.5L556.1 433.3z" fill="#45ffad"/><path d="M564.2 434.9L555.9 429.6L560.3 438.4z" fill="#34ffc0"/><path d="M655.2 417.9L652.6 427.4L653.0 417.9zM655.2 422.4L650.4 431.0L653.1 421.9zM653.6 424.4L647.2 431.9L651.6 423.5zM652.1 427.2L644.7 433.8L650.3 426.0zM649.1 430.4L640.4 434.9L647.7 428.8zM646.8 434.4L637.6 437.9L645.5 432.6zM642.7 435.7L633.5 439.2L641.4 433.9zM639.0 438.7L629.5 441.5L637.8 436.8zM634.8 440.9L625.0 442.0L634.0 438.8zM630.0 443.1L620.2 444.0L629.3 441.0zM624.4 443.7L614.6 444.7L623.5 441.6zM618.5 445.5L608.6 445.7L617.8 443.4zM613.0 447.1L603.2 446.3L612.6 444.9zM608.2 447.5L598.4 446.7L607.8 445.3zM603.4 448.7L593.6 447.5L603.1 446.5zM596.7 448.7L587.1 446.8L596.6 446.5zM591.6 448.8L581.9 447.1L591.4 446.6zM585.8 448.6L576.8 444.5L586.1 446.4zM581.2 447.7L572.5 443.0L581.7 445.6zM577.2 442.2L567.4 441.8L576.6 444.3zM572.0 447.2L563.4 442.4L572.5 445.1zM571.0 441.0L561.3 439.0L570.0 442.9zM567.0 438.3L557.6 435.2L565.8 440.1zM564.8 437.4L556.0 432.9L563.3 439.0zM564.2 434.9L555.9 429.6L562.5 436.4zM562.3 433.5L554.9 427.0L560.5 434.7zM561.2 432.5L557.1 423.5L559.0 432.8z" fill="#000" opacity="0.28"/><path d="M644.0 419.8L645.1 429.6L649.1 420.6zM643.2 420.1L641.3 429.8L647.8 422.4z" fill="#ff9400"/><path d="M641.7 423.2L637.7 432.2L645.7 426.5zM639.9 425.0L636.2 434.1L644.0 428.1zM638.0 427.4L631.7 434.9L641.0 431.7zM635.8 429.6L629.0 436.7L638.5 434.1z" fill="#ffc700"/><path d="M631.1 432.4L624.3 439.5L633.8 436.9zM622.0 435.5L613.5 440.5L623.3 440.6zM617.3 438.0L608.5 442.5L618.3 443.1z" fill="#fffa00"/><path d="M626.8 434.8L618.7 440.5L628.6 439.7z" fill="#ffe000"/><path d="M611.5 438.6L603.3 444.0L613.1 443.6zM606.6 440.3L597.9 445.0L607.8 445.4zM595.7 441.3L586.6 445.1L596.3 446.5zM586.3 440.7L576.5 441.7L585.4 445.8zM582.5 439.4L572.6 439.0L580.9 444.4z" fill="#e3ff1a"/><path d="M601.4 440.5L592.1 443.6L601.7 445.7zM591.9 440.1L582.2 441.4L591.2 445.2zM575.5 436.7L565.9 434.6L573.1 441.3zM572.3 435.8L563.1 432.2L569.2 439.9z" fill="#bfff39"/><path d="M579.0 438.3L569.1 437.9L577.4 443.2zM570.1 433.6L561.3 429.3L566.6 437.5z" fill="#9cff59"/><path d="M568.7 432.5L561.0 426.3L564.5 435.5zM567.9 431.4L563.9 422.4L562.8 432.2z" fill="#78ff79"/><path d="M649.1 420.6L645.1 429.6L646.9 420.2zM647.8 422.4L641.3 429.8L645.9 421.4zM645.7 426.5L637.7 432.2L644.0 425.1zM644.0 428.1L636.2 434.1L642.3 426.8zM641.0 431.7L631.7 434.9L639.7 429.8zM638.5 434.1L629.0 436.7L637.4 432.2zM633.8 436.9L624.3 439.5L632.6 435.0zM628.6 439.7L618.7 440.5L627.8 437.6zM623.3 440.6L613.5 440.5L622.8 438.4zM618.3 443.1L608.5 442.5L617.9 440.9zM613.1 443.6L603.3 444.0L612.4 441.5zM607.8 445.4L597.9 445.0L607.3 443.2zM601.7 445.7L592.1 443.6L601.6 443.4zM596.3 446.5L586.6 445.1L596.0 444.3zM591.2 445.2L582.2 441.4L591.5 443.1zM585.4 445.8L576.5 441.7L585.8 443.6zM582.5 439.4L572.6 439.0L581.8 441.5zM579.0 438.3L569.1 437.9L578.3 440.4zM575.5 436.7L565.9 434.6L574.5 438.7zM572.3 435.8L563.1 432.2L571.0 437.5zM570.1 433.6L561.3 429.3L568.6 435.3zM568.7 432.5L561.0 426.3L566.9 433.8zM567.9 431.4L563.9 422.4L565.7 431.7z" fill="#000" opacity="0.28"/><path d="M636.3 419.7L638.9 429.2L641.5 419.7zM635.3 423.9L631.0 432.7L639.2 427.4zM632.5 427.0L627.4 435.4L636.1 430.9z" fill="#ff7a00"/><path d="M636.9 421.4L636.8 431.2L641.9 422.8z" fill="#ff6100"/><path d="M629.5 428.3L623.7 436.2L632.7 432.4z" fill="#ffad00"/><path d="M626.4 430.5L619.6 437.6L629.1 434.9zM621.4 433.5L613.7 439.5L623.5 438.2zM616.5 435.4L608.8 441.6L618.6 440.1z" fill="#ffc700"/><path d="M611.4 435.5L602.7 440.2L612.6 440.6z" fill="#ffe000"/><path d="M607.2 437.0L598.0 440.5L607.8 442.1zM595.2 437.0L586.0 440.5L595.7 442.2zM586.7 436.6L576.9 437.7L585.9 441.7zM582.1 435.2L572.3 435.6L581.0 440.2z" fill="#fffa00"/><path d="M601.1 437.1L591.8 440.4L601.4 442.3zM591.5 438.1L581.7 439.5L590.8 443.2zM580.4 434.2L570.9 431.5L577.7 438.6zM576.9 432.4L568.0 428.1L573.5 436.3z" fill="#e3ff1a"/><path d="M575.8 430.2L568.3 423.8L571.5 433.1z" fill="#bfff39"/><path d="M575.1 429.7L571.3 420.6L570.0 430.4z" fill="#9cff59"/><path d="M641.5 419.7L638.9 429.2L639.3 419.7zM641.9 422.8L636.8 431.2L639.8 422.2zM639.2 427.4L631.0 432.7L637.6 425.9zM636.1 430.9L627.4 435.4L634.6 429.2zM632.7 432.4L623.7 436.2L631.3 430.6zM629.1 434.9L619.6 437.6L628.0 433.0zM623.5 438.2L613.7 439.5L622.6 436.2zM618.6 440.1L608.8 441.6L617.7 438.1zM612.6 440.6L602.7 440.2L612.1 438.5zM607.8 442.1L598.0 440.5L607.5 439.9zM601.4 442.3L591.8 440.4L601.3 440.1zM595.7 442.2L586.0 440.5L595.5 440.0zM590.8 443.2L581.7 439.5L591.1 441.0zM585.9 441.7L576.9 437.7L586.3 439.5zM581.0 440.2L572.3 435.6L581.5 438.1zM580.4 434.2L570.9 431.5L579.2 436.1zM576.9 432.4L568.0 428.1L575.5 434.0zM575.8 430.2L568.3 423.8L574.0 431.4zM575.1 429.7L571.3 420.6L572.9 430.0z" fill="#000" opacity="0.28"/><path d="M630.9 420.8L633.3 430.4L636.1 420.9zM629.1 422.4L628.3 432.3L634.0 424.2z" fill="#ff4700"/><path d="M628.7 425.2L625.0 434.3L632.8 428.3z" fill="#ff6100"/><path d="M626.4 426.6L620.5 434.5L629.6 430.7zM623.0 429.2L615.2 435.3L625.0 434.0z" fill="#ff7a00"/><path d="M619.0 430.3L610.7 435.5L620.5 435.3zM613.8 432.0L605.7 437.5L615.5 436.9z" fill="#ffad00"/><path d="M609.4 433.5L600.5 437.8L610.4 438.6zM603.3 434.1L594.0 437.1L603.6 439.2zM599.7 433.9L590.0 435.6L599.2 439.1zM594.2 434.6L584.6 436.9L594.1 439.8z" fill="#ffc700"/><path d="M589.8 433.6L579.9 433.0L588.1 438.5zM587.0 432.8L577.1 432.6L585.5 437.8zM582.3 428.9L575.1 422.2L577.8 431.7zM581.6 428.2L575.9 420.1L576.7 429.9z" fill="#fffa00"/><path d="M584.9 431.1L575.9 427.1L581.6 435.1z" fill="#e3ff1a"/><path d="M636.1 420.9L633.3 430.4L633.9 420.9zM634.0 424.2L628.3 432.3L631.9 423.4zM632.8 428.3L625.0 434.3L631.1 427.0zM629.6 430.7L620.5 434.5L628.2 429.0zM625.0 434.0L615.2 435.3L624.1 432.0zM620.5 435.3L610.7 435.5L619.9 433.2zM615.5 436.9L605.7 437.5L614.8 434.8zM610.4 438.6L600.5 437.8L610.0 436.5zM603.6 439.2L594.0 437.1L603.5 437.0zM599.2 439.1L590.0 435.6L599.4 436.9zM594.1 439.8L584.6 436.9L594.1 437.6zM589.8 433.6L579.9 433.0L589.1 435.7zM585.5 437.8L577.1 432.6L586.1 435.7zM584.9 431.1L575.9 427.1L583.5 432.8zM582.3 428.9L575.1 422.2L580.4 430.1zM581.6 428.2L575.9 420.1L579.5 428.9z" fill="#000" opacity="0.28"/><path d="M623.7 422.2L625.2 431.9L628.9 422.8z" fill="#ff2e00"/><path d="M622.6 422.8L619.0 431.9L626.8 425.9z" fill="#ff6100"/><path d="M621.1 424.7L616.2 433.2L624.7 428.3z" fill="#ff7a00"/><path d="M618.0 426.9L610.1 432.9L619.9 431.7z" fill="#ff9400"/><path d="M613.6 429.2L605.0 433.9L614.8 434.2z" fill="#ffad00"/><path d="M608.3 430.2L600.1 435.6L609.9 435.1zM590.2 428.7L580.4 427.5L588.2 433.6z" fill="#ffe000"/><path d="M603.7 430.6L594.6 434.6L604.4 435.7zM588.5 427.2L584.3 418.3L583.4 428.1z" fill="#fffa00"/><path d="M598.8 431.2L589.1 432.9L598.4 436.4zM594.8 431.2L585.1 432.6L594.2 436.4z" fill="#ffc700"/><path d="M588.7 427.8L580.7 422.1L584.7 431.1z" fill="#e3ff1a"/><path d="M628.9 422.8L625.2 431.9L626.7 422.5zM626.8 425.9L619.0 431.9L625.0 424.6zM624.7 428.3L616.2 433.2L623.2 426.8zM619.9 431.7L610.1 432.9L619.1 429.6zM614.8 434.2L605.0 433.9L614.3 432.1zM609.9 435.1L600.1 435.6L609.2 433.0zM604.4 435.7L594.6 434.6L604.1 433.6zM598.4 436.4L589.1 432.9L598.6 434.2zM594.2 436.4L585.1 432.6L594.5 434.2zM590.2 428.7L580.4 427.5L589.3 430.8zM588.7 427.8L580.7 422.1L587.0 429.2zM588.5 427.2L584.3 418.3L586.3 427.6z" fill="#000" opacity="0.28"/><path d="M616.2 422.4L618.7 431.9L621.4 422.4z" fill="#ff4700"/><path d="M616.8 423.0L612.6 431.9L620.7 426.4z" fill="#ff7a00"/><path d="M613.5 425.2L606.3 431.9L615.9 429.7z" fill="#ff9400"/><path d="M609.6 426.3L600.6 430.3L610.4 431.5z" fill="#ffe000"/><path d="M604.2 427.7L594.8 430.4L604.3 432.9z" fill="#ffc700"/><path d="M598.3 427.8L588.5 428.9L597.5 432.9zM596.7 426.7L587.5 423.2L593.7 430.9z" fill="#fffa00"/><path d="M594.8 426.5L589.8 418.0L589.7 427.8z" fill="#e3ff1a"/><path d="M621.4 422.4L618.7 431.9L619.1 422.4zM620.7 426.4L612.6 431.9L619.1 425.0zM615.9 429.7L606.3 431.9L614.9 427.8zM610.4 431.5L600.6 430.3L610.1 429.3zM604.3 432.9L594.8 430.4L604.3 430.7zM597.5 432.9L588.5 428.9L597.8 430.7zM596.7 426.7L587.5 423.2L595.4 428.5zM594.8 426.5L589.8 418.0L592.6 427.1z" fill="#000" opacity="0.28"/><path d="M550.6 462.7L544.1 465.4L551.1 466.3zM600.6 464.9L593.0 468.0L601.1 468.5zM563.2 463.9L557.4 467.5L564.2 467.4zM618.0 462.0L609.2 462.3L617.4 465.6zM575.5 461.0L566.9 464.5L576.2 464.6zM649.7 446.5L642.3 450.2L650.6 450.0zM594.2 452.0L587.9 453.8L594.1 455.6zM616.2 454.9L609.2 455.8L615.7 458.5zM652.1 446.8L644.3 449.3L652.4 450.3zM567.6 462.3L562.5 465.9L568.8 465.7z" fill="#00ebff"/><path d="M556.6 470.4L549.6 472.7L556.9 474.0zM645.2 447.2L639.7 450.1L645.9 450.7zM654.4 456.5L646.2 458.4L654.4 460.1zM613.1 462.5L606.0 466.3L614.1 466.0zM556.5 464.4L549.9 465.3L556.0 468.0zM634.5 461.8L625.8 462.3L634.0 465.4zM665.2 458.8L656.5 463.9L666.4 462.2zM558.0 469.4L551.7 472.4L558.6 473.0zM661.7 454.0L651.8 455.8L661.7 457.6zM593.4 455.8L585.7 457.4L593.3 459.4zM619.0 460.5L610.6 461.2L618.5 464.1z" fill="#03fffb"/><path d="M619.1 455.3L611.2 456.5L618.8 458.9zM639.5 458.1L631.5 462.2L640.4 461.6zM604.9 457.5L597.6 459.6L605.0 461.1zM613.4 456.6L604.8 459.1L613.7 460.2zM557.6 463.4L550.6 467.5L558.7 466.8zM635.0 463.2L628.6 466.5L635.8 466.7zM563.4 464.3L557.2 466.9L563.8 467.9zM631.4 448.8L622.7 449.5L631.0 452.4zM640.3 449.7L634.1 452.7L641.0 453.2z" fill="#14ffe7"/><path d="M645.4 457.8L639.9 460.9L646.2 461.3zM601.2 455.4L594.5 456.1L600.6 459.0zM559.8 466.2L552.2 469.8L560.6 469.7zM615.0 450.7L606.7 451.8L614.6 454.3z" fill="#00d1ff"/><path d="M551.1 466.3L544.1 465.4L550.9 464.8zM556.9 474.0L549.6 472.7L556.7 472.5zM618.8 458.9L611.2 456.5L618.9 457.4zM640.4 461.6L631.5 462.2L640.0 460.1zM645.9 450.7L639.7 450.1L645.6 449.2zM654.4 460.1L646.2 458.4L654.4 458.6zM614.1 466.0L606.0 466.3L613.7 464.5zM556.0 468.0L549.9 465.3L556.2 466.4zM634.0 465.4L625.8 462.3L634.2 463.9zM605.0 461.1L597.6 459.6L604.9 459.6zM613.7 460.2L604.8 459.1L613.6 458.7zM646.2 461.3L639.9 460.9L645.9 459.8zM558.7 466.8L550.6 467.5L558.2 465.4zM601.1 468.5L593.0 468.0L600.9 467.0zM564.2 467.4L557.4 467.5L563.8 465.9zM635.8 466.7L628.6 466.5L635.4 465.2zM617.4 465.6L609.2 462.3L617.6 464.0zM666.4 462.2L656.5 463.9L665.9 460.8zM576.2 464.6L566.9 464.5L575.9 463.1zM558.6 473.0L551.7 472.4L558.3 471.5zM563.8 467.9L557.2 466.9L563.7 466.4zM631.0 452.4L622.7 449.5L631.2 450.8zM641.0 453.2L634.1 452.7L640.7 451.7zM661.7 457.6L651.8 455.8L661.7 456.1zM600.6 459.0L594.5 456.1L600.8 457.5zM650.6 450.0L642.3 450.2L650.2 448.5zM594.1 455.6L587.9 453.8L594.2 454.1zM560.6 469.7L552.2 469.8L560.3 468.2zM615.7 458.5L609.2 455.8L615.9 457.0zM652.4 450.3L644.3 449.3L652.3 448.8zM568.8 465.7L562.5 465.9L568.3 464.2zM593.3 459.4L585.7 457.4L593.3 457.9zM618.5 464.1L610.6 461.2L618.7 462.6zM614.6 454.3L606.7 451.8L614.8 452.8z" fill="#000" opacity="0.2"/><path d="M536.2 443.2L532.9 453.5L539.7 445.1zM520.2 433.8L519.9 442.2L524.1 434.9zM518.7 435.3L514.5 442.0L521.4 438.3zM540.2 456.4L533.9 465.3L543.0 459.3zM508.8 422.4L506.0 430.9L512.2 424.5zM505.5 421.3L500.9 427.4L507.9 424.5zM531.7 448.8L528.6 455.4L534.7 451.4zM536.3 452.0L533.3 460.7L539.7 454.1zM546.8 444.1L543.8 453.3L550.3 446.1zM534.4 433.0L533.1 443.0L538.2 434.3zM505.5 413.4L504.8 421.1L509.3 414.8zM534.5 449.1L533.1 460.0L538.3 450.3zM536.5 439.0L534.3 446.5L539.9 441.0zM532.3 445.0L532.2 454.4L536.2 445.9zM518.3 431.1L518.8 441.8L522.2 431.7zM504.2 419.1L500.5 426.2L507.2 421.8zM546.3 448.9L544.9 457.1L549.9 450.4zM516.6 420.0L510.7 429.3L519.5 422.7zM503.2 414.9L499.4 421.9L506.1 417.6zM542.2 451.0L536.5 458.3L544.7 454.0zM499.7 414.0L499.4 422.8L503.6 415.1zM507.9 411.4L506.8 421.4L511.7 412.6zM509.9 415.5L506.1 425.8L513.3 417.6zM531.7 446.6L532.1 454.9L535.6 447.3zM532.0 443.1L533.0 450.6L536.0 443.7z" fill="#03fffb"/><path d="M543.7 458.0L538.1 467.3L546.7 460.7zM536.5 452.4L531.0 462.2L539.6 455.0zM527.7 433.9L523.6 443.1L531.0 436.2zM499.5 414.8L493.4 424.1L502.4 417.6zM542.1 459.0L538.7 468.8L545.5 461.0zM502.0 411.6L499.2 419.9L505.4 413.7zM538.6 453.7L537.8 461.2L542.3 455.2zM540.2 440.1L538.0 448.4L543.7 442.0zM543.9 450.6L537.5 458.6L546.5 453.7zM508.1 426.1L506.9 435.5L511.8 427.5zM508.6 420.1L508.7 430.5L512.5 420.9zM520.1 429.1L519.9 438.0L523.9 430.1zM529.0 444.4L524.5 452.6L532.0 447.0zM525.8 427.9L520.1 434.4L528.1 431.2zM525.9 441.0L522.0 451.4L529.3 443.0zM547.3 452.7L543.2 459.2L550.0 455.7zM537.5 442.0L535.2 452.7L541.2 443.5zM518.1 427.8L515.7 438.5L521.8 429.4zM518.1 432.6L510.9 441.0L520.6 435.7zM499.5 408.7L498.3 416.5L503.1 410.3zM519.8 435.3L514.8 444.8L522.9 437.8zM510.4 425.2L509.4 432.9L514.1 426.7zM525.6 439.9L522.4 447.9L528.8 442.2zM499.5 408.7L495.1 414.9L502.0 411.8zM515.9 428.9L510.1 435.7L518.3 432.1zM507.2 411.4L506.5 421.3L511.0 412.5z" fill="#00ebff"/><path d="M507.9 429.9L507.2 440.3L511.8 430.9zM499.1 416.3L496.7 426.8L502.8 417.9zM515.6 434.6L512.2 443.8L519.0 436.7zM502.7 414.1L498.2 423.8L506.0 416.4zM505.0 424.6L505.4 434.8L509.0 425.2zM507.0 423.1L502.4 430.3L509.8 426.0zM502.3 418.3L497.9 425.9L505.2 421.1zM524.6 440.6L520.5 447.3L527.4 443.5zM527.0 446.4L527.0 455.8L530.9 447.2z" fill="#00d1ff"/><path d="M529.5 435.0L524.6 443.4L532.5 437.7zM531.5 443.4L527.1 450.0L534.2 446.4zM499.2 407.0L492.7 414.3L501.6 410.2zM500.7 398.5L497.4 406.4L503.9 400.9zM504.9 416.4L505.8 426.0L508.9 416.8zM526.7 434.3L521.7 444.2L529.9 436.8zM527.0 433.2L521.8 442.7L530.1 435.8zM515.3 424.1L511.6 434.3L518.8 426.1zM506.7 408.2L503.0 417.9L510.1 410.3zM498.4 399.0L492.4 407.9L501.3 401.8zM500.3 409.2L499.6 417.9L504.1 410.4zM544.3 454.9L541.0 463.3L547.6 457.1zM503.0 401.7L500.1 410.8L506.5 403.6zM503.1 398.8L497.6 408.1L506.1 401.4zM518.1 427.2L513.3 433.9L520.7 430.2zM524.2 432.1L520.4 440.5L527.4 434.5zM540.6 444.1L535.9 451.0L543.3 447.0zM545.5 448.6L542.2 457.4L548.8 450.8zM538.7 446.1L539.4 455.6L542.7 446.7z" fill="#14ffe7"/><path d="M540.6 442.5L540.6 451.1L544.5 443.4zM525.6 427.2L525.4 434.9L529.4 428.3zM541.4 444.2L535.8 450.8L543.7 447.4zM542.9 443.3L541.0 454.0L546.6 444.7zM500.3 400.9L498.0 411.8L504.0 402.4zM528.8 426.8L525.4 434.5L531.9 429.2zM526.5 425.2L526.0 434.2L530.3 426.3zM541.5 438.3L536.4 446.3L544.4 441.1zM514.3 413.4L511.7 422.0L517.8 415.4zM525.5 426.3L522.2 434.1L528.7 428.6z" fill="#24ffd4"/><path d="M511.3 409.2L508.3 419.0L514.8 411.1z" fill="#34ffc0"/><path d="M539.7 445.1L532.9 453.5L538.2 444.3zM546.7 460.7L538.1 467.3L545.4 459.6zM524.1 434.9L519.9 442.2L522.4 434.4zM511.8 430.9L507.2 440.3L510.2 430.5zM532.5 437.7L524.6 443.4L531.2 436.6zM534.2 446.4L527.1 450.0L533.1 445.1zM521.4 438.3L514.5 442.0L520.3 437.0zM543.0 459.3L533.9 465.3L541.8 458.1zM544.5 443.4L540.6 451.1L542.9 443.0zM539.6 455.0L531.0 462.2L538.3 453.9zM531.0 436.2L523.6 443.1L529.6 435.2zM512.2 424.5L506.0 430.9L510.8 423.6zM501.6 410.2L492.7 414.3L500.6 408.8zM507.9 424.5L500.9 427.4L506.9 423.2zM503.9 400.9L497.4 406.4L502.5 399.9zM529.4 428.3L525.4 434.9L527.8 427.8zM534.7 451.4L528.6 455.4L533.4 450.3zM508.9 416.8L505.8 426.0L507.2 416.6zM502.4 417.6L493.4 424.1L501.2 416.4zM539.7 454.1L533.3 460.7L538.3 453.2zM529.9 436.8L521.7 444.2L528.5 435.7zM545.5 461.0L538.7 468.8L544.0 460.1zM543.7 447.4L535.8 450.8L542.7 446.1zM530.1 435.8L521.8 442.7L528.8 434.7zM518.8 426.1L511.6 434.3L517.3 425.3zM550.3 446.1L543.8 453.3L548.8 445.2zM505.4 413.7L499.2 419.9L504.0 412.8zM510.1 410.3L503.0 417.9L508.6 409.4zM542.3 455.2L537.8 461.2L540.7 454.6zM546.6 444.7L541.0 454.0L545.0 444.1zM501.3 401.8L492.4 407.9L500.1 400.6zM543.7 442.0L538.0 448.4L542.2 441.2zM504.0 402.4L498.0 411.8L502.4 401.8zM538.2 434.3L533.1 443.0L536.6 433.7zM509.3 414.8L504.8 421.1L507.7 414.2zM504.1 410.4L499.6 417.9L502.5 409.9zM502.8 417.9L496.7 426.8L501.2 417.2zM546.5 453.7L537.5 458.6L545.4 452.4zM511.8 427.5L506.9 435.5L510.2 426.9zM512.5 420.9L508.7 430.5L510.9 420.6zM523.9 430.1L519.9 438.0L522.3 429.7zM538.3 450.3L533.1 460.0L536.7 449.8zM532.0 447.0L524.5 452.6L530.7 445.9zM539.9 441.0L534.3 446.5L538.4 440.2zM519.0 436.7L512.2 443.8L517.6 435.8zM536.2 445.9L532.2 454.4L534.5 445.5zM514.8 411.1L508.3 419.0L513.3 410.3zM531.9 429.2L525.4 434.5L530.6 428.2zM547.6 457.1L541.0 463.3L546.2 456.1zM528.1 431.2L520.1 434.4L527.1 429.8zM522.2 431.7L518.8 441.8L520.5 431.4zM507.2 421.8L500.5 426.2L505.9 420.7zM530.3 426.3L526.0 434.2L528.7 425.8zM506.0 416.4L498.2 423.8L504.6 415.4zM509.0 425.2L505.4 434.8L507.3 424.9zM509.8 426.0L502.4 430.3L508.6 424.8zM506.5 403.6L500.1 410.8L505.0 402.8zM506.1 401.4L497.6 408.1L504.8 400.3zM529.3 443.0L522.0 451.4L527.9 442.2zM549.9 450.4L544.9 457.1L548.4 449.8zM550.0 455.7L543.2 459.2L548.8 454.4zM541.2 443.5L535.2 452.7L539.7 442.8zM519.5 422.7L510.7 429.3L518.3 421.6zM544.4 441.1L536.4 446.3L543.2 439.9zM506.1 417.6L499.4 421.9L504.9 416.4zM520.7 430.2L513.3 433.9L519.6 428.9zM521.8 429.4L515.7 438.5L520.2 428.8zM520.6 435.7L510.9 441.0L519.6 434.4zM503.1 410.3L498.3 416.5L501.6 409.6zM544.7 454.0L536.5 458.3L543.7 452.7zM527.4 434.5L520.4 440.5L526.1 433.5zM503.6 415.1L499.4 422.8L502.0 414.6zM511.7 412.6L506.8 421.4L510.1 412.1zM505.2 421.1L497.9 425.9L503.9 419.9zM517.8 415.4L511.7 422.0L516.3 414.5zM528.7 428.6L522.2 434.1L527.3 427.6zM543.3 447.0L535.9 451.0L542.1 445.8zM548.8 450.8L542.2 457.4L547.4 449.9zM522.9 437.8L514.8 444.8L521.6 436.7zM513.3 417.6L506.1 425.8L511.9 416.7zM514.1 426.7L509.4 432.9L512.5 426.1zM527.4 443.5L520.5 447.3L526.2 442.3zM528.8 442.2L522.4 447.9L527.5 441.2zM535.6 447.3L532.1 454.9L533.9 447.0zM536.0 443.7L533.0 450.6L534.3 443.4zM502.0 411.8L495.1 414.9L500.9 410.5zM518.3 432.1L510.1 435.7L517.3 430.7zM542.7 446.7L539.4 455.6L541.0 446.5zM530.9 447.2L527.0 455.8L529.2 446.9zM511.0 412.5L506.5 421.3L509.4 412.1z" fill="#000" opacity="0.22"/><path d="M508.3 417.1L505.5 419.9L509.2 418.5z" fill="#00d1ff"/><path d="M546.0 447.6L545.3 451.2L547.4 448.1zM519.8 426.5L515.9 429.5L520.7 428.3z" fill="#00b8ff"/><path d="M507.0 421.7L505.2 424.8L508.1 422.7zM509.4 421.1L509.3 425.8L511.3 421.6zM509.8 421.6L505.9 428.6L512.3 423.7zM494.1 407.4L492.9 414.7L497.0 408.5zM540.3 444.3L539.1 447.5L541.4 445.0zM561.3 456.9L559.1 462.1L563.3 458.2zM554.4 457.5L552.2 463.5L556.6 458.9zM557.3 458.0L553.4 464.1L559.4 460.1zM507.5 419.3L505.7 422.6L508.7 420.3zM520.7 433.3L514.4 437.7L521.9 436.2zM537.0 445.5L535.2 448.6L538.1 446.5zM552.2 456.3L550.0 460.0L553.6 457.5zM491.3 410.5L491.2 417.3L494.1 411.1z" fill="#009eff"/><path d="M541.3 447.4L538.3 451.9L542.9 449.0zM536.1 442.1L534.5 445.5L537.3 443.0zM497.1 412.2L494.7 419.5L499.8 413.8zM494.8 410.7L494.6 413.9L496.1 411.0zM541.3 450.1L540.7 455.1L543.2 450.8zM557.5 459.5L557.1 466.0L560.0 460.2zM537.0 448.7L534.9 451.3L537.9 449.8z" fill="#0085ff"/><path d="M495.0 411.4L492.2 415.0L496.2 412.8zM507.1 418.0L500.9 422.3L508.3 420.9zM562.6 460.1L560.0 463.8L563.9 461.4zM531.6 440.7L532.0 446.2L533.8 441.0zM515.9 430.7L510.0 435.4L517.3 433.5zM530.0 438.8L531.1 444.3L532.3 438.8zM549.2 455.6L545.9 461.8L551.4 457.5zM516.7 431.3L513.1 434.7L517.8 433.0zM535.1 445.7L530.5 450.1L536.5 447.8zM529.8 438.2L528.5 445.5L532.6 439.3zM498.8 415.3L498.9 421.6L501.4 415.8zM521.7 434.5L519.2 440.7L524.0 436.0zM514.1 430.9L513.5 434.3L515.4 431.4zM505.8 421.4L503.2 423.2L506.3 422.6zM517.8 429.7L515.0 435.5L519.9 431.3zM524.0 434.3L522.2 438.1L525.3 435.4zM549.4 456.2L548.8 461.8L551.6 456.9zM518.5 435.7L517.2 438.6L519.6 436.5zM530.4 440.2L528.7 442.8L531.3 441.1z" fill="#006bff"/><path d="M527.4 439.4L527.9 444.2L529.4 439.6zM509.7 426.8L509.0 430.3L511.0 427.3zM493.7 413.7L494.0 419.9L496.3 414.1zM557.4 465.8L555.7 472.7L560.0 467.1zM555.7 462.7L553.2 467.2L557.3 464.1zM494.9 415.3L494.6 422.2L497.7 416.0zM524.2 441.7L521.5 444.2L524.9 443.0zM498.5 418.8L498.8 423.5L500.4 419.1zM494.7 416.0L492.6 420.6L496.3 417.2zM498.7 419.3L499.3 426.7L501.8 419.7zM533.8 450.2L534.1 454.6L535.6 450.4zM500.4 421.8L497.3 424.2L501.1 423.3zM552.6 462.0L553.2 468.4L555.2 462.3zM502.9 421.9L503.8 426.2L504.8 421.9zM533.0 447.4L531.6 451.2L534.4 448.3zM512.6 428.4L510.7 432.6L514.1 429.5zM523.9 441.6L519.7 445.9L525.3 443.6zM506.3 429.2L505.0 434.1L508.2 430.2zM554.6 462.2L551.9 465.7L555.7 463.6zM528.9 445.9L528.0 450.2L530.5 446.6zM490.9 416.6L489.8 420.5L492.4 417.4zM509.6 433.5L507.2 435.4L510.2 434.6zM561.7 468.6L560.6 471.3L562.7 469.3zM510.7 430.1L509.3 432.9L511.7 430.9zM548.1 461.9L545.0 467.3L550.0 463.6zM536.3 451.4L536.0 455.5L537.9 451.8zM547.8 463.3L548.2 467.3L549.5 463.4zM556.1 466.6L552.8 469.9L557.1 468.2z" fill="#0052ff"/><path d="M509.2 432.5L507.6 437.5L511.1 433.6zM534.8 447.0L530.3 452.2L536.5 449.3zM543.6 456.5L541.5 458.6L544.3 457.5zM530.9 442.9L531.4 447.5L532.8 443.1zM491.1 417.0L488.7 421.2L492.6 418.4zM535.0 450.6L529.7 454.1L536.0 453.1zM546.9 459.6L542.6 464.6L548.5 461.7zM535.6 453.3L533.1 457.1L537.0 454.6zM546.7 454.9L543.7 457.1L547.3 456.2zM547.6 460.4L546.5 466.3L549.9 461.3zM562.8 468.0L561.5 470.7L563.8 468.8zM539.4 459.4L539.0 465.5L541.8 460.1zM499.0 421.5L497.5 426.8L501.0 422.6zM553.3 466.3L551.6 469.6L554.5 467.3zM492.6 421.7L489.4 427.3L494.6 423.4zM534.8 454.8L535.0 460.0L536.9 455.2zM499.2 429.4L498.1 434.3L501.0 430.2zM561.9 466.3L562.5 472.9L564.6 466.6zM515.9 442.9L514.3 447.2L517.5 443.9zM512.9 436.1L511.4 442.0L515.1 437.2zM516.7 436.8L515.4 442.8L519.0 437.8zM533.6 450.1L533.0 452.8L534.6 450.5zM550.2 464.6L546.1 467.4L551.0 466.5zM561.7 468.9L562.2 474.6L564.0 469.2zM497.4 424.1L497.0 429.3L499.4 424.7zM528.0 450.0L526.0 453.5L529.2 451.1zM538.9 451.5L538.6 457.6L541.3 452.1zM502.2 425.7L501.3 428.8L503.4 426.3z" fill="#0038ff"/><path d="M533.1 450.1L534.1 456.9L535.9 450.3zM510.6 435.4L508.7 439.6L512.1 436.5z" fill="#001fff"/><path d="M509.2 418.5L505.5 419.9L508.8 417.9zM547.4 448.1L545.3 451.2L546.8 447.9zM520.7 428.3L515.9 429.5L520.3 427.5zM508.1 422.7L505.2 424.8L507.7 422.3zM511.3 421.6L509.3 425.8L510.5 421.4zM512.3 423.7L505.9 428.6L511.2 422.8zM497.0 408.5L492.9 414.7L495.8 408.0zM541.4 445.0L539.1 447.5L540.9 444.7zM563.3 458.2L559.1 462.1L562.4 457.6zM556.6 458.9L552.2 463.5L555.6 458.3zM559.4 460.1L553.4 464.1L558.5 459.2zM508.7 420.3L505.7 422.6L508.2 419.9zM521.9 436.2L514.4 437.7L521.4 435.0zM538.1 446.5L535.2 448.6L537.6 446.1zM553.6 457.5L550.0 460.0L553.0 457.0zM494.1 411.1L491.2 417.3L492.9 410.8zM542.9 449.0L538.3 451.9L542.2 448.3zM537.3 443.0L534.5 445.5L536.8 442.6zM499.8 413.8L494.7 419.5L498.7 413.2zM496.1 411.0L494.6 413.9L495.5 410.9zM543.2 450.8L540.7 455.1L542.4 450.5zM560.0 460.2L557.1 466.0L558.9 459.9zM537.9 449.8L534.9 451.3L537.5 449.3zM496.2 412.8L492.2 415.0L495.7 412.2zM508.3 420.9L500.9 422.3L507.8 419.7zM563.9 461.4L560.0 463.8L563.3 460.9zM533.8 441.0L532.0 446.2L532.9 440.9zM517.3 433.5L510.0 435.4L516.7 432.3zM532.3 438.8L531.1 444.3L531.3 438.8zM551.4 457.5L545.9 461.8L550.5 456.7zM517.8 433.0L513.1 434.7L517.3 432.3zM536.5 447.8L530.5 450.1L535.9 446.9zM532.6 439.3L528.5 445.5L531.4 438.9zM501.4 415.8L498.9 421.6L500.3 415.6zM524.0 436.0L519.2 440.7L523.0 435.4zM515.4 431.4L513.5 434.3L514.8 431.1zM506.3 422.6L503.2 423.2L506.1 422.1zM519.9 431.3L515.0 435.5L519.0 430.6zM525.3 435.4L522.2 438.1L524.8 434.9zM551.6 456.9L548.8 461.8L550.7 456.6zM519.6 436.5L517.2 438.6L519.1 436.2zM531.3 441.1L528.7 442.8L530.9 440.7zM529.4 439.6L527.9 444.2L528.5 439.5zM511.0 427.3L509.0 430.3L510.5 427.1zM496.3 414.1L494.0 419.9L495.2 413.9zM560.0 467.1L555.7 472.7L558.9 466.5zM557.3 464.1L553.2 467.2L556.7 463.5zM497.7 416.0L494.6 422.2L496.5 415.7zM524.9 443.0L521.5 444.2L524.6 442.5zM500.4 419.1L498.8 423.5L499.6 418.9zM496.3 417.2L492.6 420.6L495.6 416.7zM501.8 419.7L499.3 426.7L500.5 419.5zM535.6 450.4L534.1 454.6L534.8 450.3zM501.1 423.3L497.3 424.2L500.8 422.7zM555.2 462.3L553.2 468.4L554.1 462.2zM504.8 421.9L503.8 426.2L504.0 421.9zM534.4 448.3L531.6 451.2L533.8 448.0zM514.1 429.5L510.7 432.6L513.5 429.1zM525.3 443.6L519.7 445.9L524.7 442.7zM508.2 430.2L505.0 434.1L507.4 429.8zM555.7 463.6L551.9 465.7L555.2 463.0zM530.5 446.6L528.0 450.2L529.8 446.3zM492.4 417.4L489.8 420.5L491.8 417.1zM510.2 434.6L507.2 435.4L509.9 434.1zM562.7 469.3L560.6 471.3L562.3 469.0zM511.7 430.9L509.3 432.9L511.3 430.5zM550.0 463.6L545.0 467.3L549.2 462.9zM537.9 451.8L536.0 455.5L537.2 451.7zM549.5 463.4L548.2 467.3L548.8 463.4zM557.1 468.2L552.8 469.9L556.7 467.5zM511.1 433.6L507.6 437.5L510.3 433.1zM536.5 449.3L530.3 452.2L535.8 448.3zM544.3 457.5L541.5 458.6L544.0 457.1zM532.8 443.1L531.4 447.5L532.0 443.0zM492.6 418.4L488.7 421.2L492.0 417.8zM536.0 453.1L529.7 454.1L535.6 452.0zM548.5 461.7L542.6 464.6L547.8 460.8zM537.0 454.6L533.1 457.1L536.4 454.1zM547.3 456.2L543.7 457.1L547.0 455.6zM549.9 461.3L546.5 466.3L548.9 460.9zM563.8 468.8L561.5 470.7L563.4 468.4zM541.8 460.1L539.0 465.5L540.7 459.8zM501.0 422.6L497.5 426.8L500.2 422.1zM554.5 467.3L551.6 469.6L554.0 466.9zM494.6 423.4L489.4 427.3L493.7 422.7zM536.9 455.2L535.0 460.0L536.0 455.0zM501.0 430.2L498.1 434.3L500.2 429.9zM564.6 466.6L562.5 472.9L563.5 466.4zM517.5 443.9L514.3 447.2L516.8 443.5zM515.1 437.2L511.4 442.0L514.2 436.7zM519.0 437.8L515.4 442.8L518.0 437.4zM534.6 450.5L533.0 452.8L534.2 450.3zM551.0 466.5L546.1 467.4L550.6 465.7zM564.0 469.2L562.2 474.6L563.0 469.1zM499.4 424.7L497.0 429.3L498.5 424.5zM529.2 451.1L526.0 453.5L528.7 450.7zM541.3 452.1L538.6 457.6L540.3 451.8zM503.4 426.3L501.3 428.8L502.9 426.0zM535.9 450.3L534.1 456.9L534.7 450.2zM512.1 436.5L508.7 439.6L511.5 436.1z" fill="#000" opacity="0.15"/><path d="M506.7 432.1L507.5 437.0L508.7 432.2zM511.7 433.1L509.9 436.4L512.9 434.1zM550.1 466.8L549.3 471.2L551.8 467.5zM547.2 459.8L545.7 465.2L549.3 460.8zM555.0 463.6L549.8 468.1L556.3 466.1zM532.2 445.1L528.4 448.0L533.0 446.9zM522.3 445.6L521.0 451.1L524.4 446.6zM524.1 441.3L523.0 445.1L525.5 442.1zM521.2 439.5L519.5 442.0L522.1 440.4zM533.2 452.4L528.3 456.2L534.3 454.7zM504.9 436.1L505.4 441.5L507.2 436.4zM495.2 419.3L493.7 426.1L497.8 420.4zM536.8 452.4L534.1 454.5L537.4 453.6zM541.7 454.8L541.6 458.5L543.2 455.1zM501.6 435.6L501.2 440.3L503.5 436.1zM494.6 423.8L495.3 429.9L497.1 424.1zM562.0 471.0L562.8 476.9L564.5 471.1zM553.3 464.8L550.9 468.6L554.7 466.1zM499.0 433.0L498.4 436.5L500.4 433.6zM561.8 468.8L557.5 472.6L563.0 470.9zM517.9 439.0L513.2 442.7L519.0 441.3zM521.0 443.9L521.4 448.7L523.0 444.2zM555.1 468.1L551.0 471.9L556.3 470.1zM495.2 426.5L496.4 432.2L497.6 426.5zM554.5 467.7L551.0 471.9L555.9 469.4zM523.5 450.1L523.7 453.0L524.7 450.2zM538.3 461.6L536.6 465.8L539.9 462.6zM500.4 430.4L500.0 434.7L502.1 431.0zM505.9 437.2L505.5 442.6L508.0 437.8zM530.5 452.0L527.2 456.6L532.1 453.7zM519.8 448.8L519.9 453.2L521.5 449.1zM491.9 424.0L492.5 428.3L493.7 424.1zM513.4 438.2L513.7 441.6L514.8 438.4zM534.3 457.9L532.8 461.6L535.7 458.8zM503.9 435.0L500.8 438.5L505.1 436.5zM493.8 427.5L493.4 429.8L494.7 427.8z" fill="#001fff"/><path d="M502.7 426.9L501.3 430.6L504.0 427.7zM492.8 426.9L490.0 431.0L494.2 428.4zM503.6 430.8L504.1 435.2L505.4 430.9zM548.5 463.8L548.4 469.4L550.8 464.3zM504.2 427.3L503.0 430.5L505.4 428.1zM518.3 451.1L516.7 454.2L519.5 452.0zM531.4 456.7L531.6 462.1L533.6 457.1zM559.7 471.8L559.3 475.6L561.2 472.3zM510.4 441.4L510.2 445.5L512.0 441.8zM561.7 473.7L561.3 478.0L563.4 474.3zM510.2 434.8L507.8 437.8L511.2 436.1zM555.2 472.4L550.8 476.1L556.3 474.5zM554.4 472.0L554.0 477.2L556.5 472.6zM497.4 423.2L496.4 427.7L499.1 424.0zM544.3 457.9L542.8 461.6L545.7 458.9zM536.5 454.7L533.4 458.0L537.6 456.2zM509.4 439.5L506.8 441.7L510.1 440.7zM551.9 474.2L549.6 476.5L552.6 475.3zM495.2 424.6L493.7 430.1L497.3 425.6zM502.9 430.3L502.0 434.3L504.4 431.0zM508.5 434.1L508.2 437.0L509.6 434.5zM510.1 440.7L508.9 444.3L511.4 441.5zM534.6 465.7L531.6 469.3L535.8 467.2zM501.5 432.2L497.4 435.7L502.6 434.2zM523.6 456.5L521.2 458.0L524.0 457.6zM495.8 433.9L493.2 437.0L496.8 435.2zM549.1 473.4L546.6 478.1L550.7 474.8zM525.4 447.7L525.1 451.6L526.9 448.2zM509.1 446.5L508.7 449.2L510.2 446.9zM514.8 447.7L514.8 453.2L517.1 448.2zM519.9 447.3L517.5 449.8L520.7 448.5zM515.1 437.6L512.0 440.9L516.2 439.1zM517.1 448.3L514.4 450.8L517.9 449.6zM519.3 439.7L517.4 443.4L520.6 440.8zM538.8 467.7L535.4 470.2L539.5 469.3zM528.3 455.7L525.0 458.7L529.3 457.3zM548.2 469.0L548.0 473.1L549.8 469.4zM529.3 453.4L529.6 457.6L531.0 453.6zM520.7 444.7L520.9 449.9L522.8 445.1zM515.9 443.7L515.7 449.9L518.3 444.3zM519.6 445.6L518.0 448.1L520.4 446.5zM515.9 445.5L513.1 448.7L517.0 446.9zM502.3 433.9L498.2 436.9L503.2 435.9zM504.5 435.7L500.0 439.3L505.6 437.9zM529.6 458.3L529.1 461.2L530.7 458.8zM536.1 458.2L536.1 461.0L537.2 458.5zM562.5 482.9L560.4 484.3L562.9 483.8zM505.5 441.3L505.7 443.8L506.6 441.5zM535.4 457.6L534.5 460.3L536.4 458.2zM542.7 466.0L540.5 467.4L543.0 467.0zM533.5 455.7L531.2 458.8L534.5 456.9zM544.0 467.5L541.4 469.7L544.7 468.7zM533.6 462.0L531.3 465.9L535.0 463.3zM502.9 430.7L499.5 434.0L503.9 432.3zM494.9 426.1L490.3 429.1L495.7 428.2z" fill="#0005ff"/><path d="M499.9 436.2L498.9 439.4L501.1 436.8zM545.5 469.3L543.9 471.6L546.3 470.1zM533.9 466.0L533.6 470.2L535.6 466.5zM520.9 455.3L518.1 459.3L522.3 456.8zM506.9 442.8L506.0 445.3L507.9 443.3zM496.4 426.0L494.3 430.6L498.1 427.2zM507.0 438.8L507.2 443.5L508.9 439.2zM494.7 434.4L494.3 438.2L496.2 434.9zM534.2 462.9L534.9 468.2L536.4 463.1z" fill="#0000ec"/><path d="M508.7 432.2L507.5 437.0L507.8 432.1zM512.9 434.1L509.9 436.4L512.4 433.6zM551.8 467.5L549.3 471.2L551.0 467.2zM549.3 460.8L545.7 465.2L548.4 460.4zM556.3 466.1L549.8 468.1L555.8 465.1zM533.0 446.9L528.4 448.0L532.7 446.1zM524.4 446.6L521.0 451.1L523.5 446.2zM525.5 442.1L523.0 445.1L524.9 441.8zM522.1 440.4L519.5 442.0L521.7 440.0zM534.3 454.7L528.3 456.2L533.8 453.7zM507.2 436.4L505.4 441.5L506.2 436.3zM497.8 420.4L493.7 426.1L496.7 419.9zM537.4 453.6L534.1 454.5L537.1 453.1zM543.2 455.1L541.6 458.5L542.6 455.0zM503.5 436.1L501.2 440.3L502.7 435.9zM497.1 424.1L495.3 429.9L496.0 424.0zM564.5 471.1L562.8 476.9L563.4 471.1zM554.7 466.1L550.9 468.6L554.1 465.5zM500.4 433.6L498.4 436.5L499.8 433.3zM563.0 470.9L557.5 472.6L562.5 470.0zM519.0 441.3L513.2 442.7L518.6 440.3zM523.0 444.2L521.4 448.7L522.1 444.1zM556.3 470.1L551.0 471.9L555.8 469.2zM497.6 426.5L496.4 432.2L496.6 426.5zM555.9 469.4L551.0 471.9L555.3 468.7zM524.7 450.2L523.7 453.0L524.2 450.2zM539.9 462.6L536.6 465.8L539.2 462.2zM502.1 431.0L500.0 434.7L501.3 430.7zM508.0 437.8L505.5 442.6L507.1 437.6zM532.1 453.7L527.2 456.6L531.4 453.0zM521.5 449.1L519.9 453.2L520.8 449.0zM493.7 424.1L492.5 428.3L493.0 424.1zM514.8 438.4L513.7 441.6L514.2 438.3zM535.7 458.8L532.8 461.6L535.1 458.4zM505.1 436.5L500.8 438.5L504.6 435.9zM494.7 427.8L493.4 429.8L494.3 427.7zM504.0 427.7L501.3 430.6L503.5 427.4zM494.2 428.4L490.0 431.0L493.6 427.7zM505.4 430.9L504.1 435.2L504.7 430.9zM550.8 464.3L548.4 469.4L549.8 464.1zM505.4 428.1L503.0 430.5L504.9 427.7zM519.5 452.0L516.7 454.2L519.0 451.6zM533.6 457.1L531.6 462.1L532.6 456.9zM561.2 472.3L559.3 475.6L560.5 472.1zM512.0 441.8L510.2 445.5L511.3 441.7zM563.4 474.3L561.3 478.0L562.7 474.0zM511.2 436.1L507.8 437.8L510.8 435.5zM556.3 474.5L550.8 476.1L555.9 473.6zM556.5 472.6L554.0 477.2L555.6 472.3zM499.1 424.0L496.4 427.7L498.4 423.6zM545.7 458.9L542.8 461.6L545.1 458.5zM537.6 456.2L533.4 458.0L537.1 455.5zM510.1 440.7L506.8 441.7L509.8 440.2zM552.6 475.3L549.6 476.5L552.3 474.8zM497.3 425.6L493.7 430.1L496.4 425.2zM504.4 431.0L502.0 434.3L503.8 430.7zM509.6 434.5L508.2 437.0L509.1 434.3zM511.4 441.5L508.9 444.3L510.9 441.2zM535.8 467.2L531.6 469.3L535.3 466.6zM502.6 434.2L497.4 435.7L502.1 433.3zM524.0 457.6L521.2 458.0L523.8 457.1zM496.8 435.2L493.2 437.0L496.4 434.7zM550.7 474.8L546.6 478.1L550.0 474.2zM526.9 448.2L525.1 451.6L526.3 448.0zM510.2 446.9L508.7 449.2L509.7 446.8zM517.1 448.2L514.8 453.2L516.1 447.9zM520.7 448.5L517.5 449.8L520.4 447.9zM516.2 439.1L512.0 440.9L515.7 438.5zM517.9 449.6L514.4 450.8L517.6 449.1zM520.6 440.8L517.4 443.4L520.0 440.3zM539.5 469.3L535.4 470.2L539.2 468.6zM529.3 457.3L525.0 458.7L528.9 456.6zM549.8 469.4L548.0 473.1L549.2 469.2zM531.0 453.6L529.6 457.6L530.3 453.5zM522.8 445.1L520.9 449.9L521.9 444.9zM518.3 444.3L515.7 449.9L517.3 444.1zM520.4 446.5L518.0 448.1L520.1 446.1zM517.0 446.9L513.1 448.7L516.5 446.3zM503.2 435.9L498.2 436.9L502.8 435.0zM505.6 437.9L500.0 439.3L505.2 437.0zM530.7 458.8L529.1 461.2L530.2 458.6zM537.2 458.5L536.1 461.0L536.7 458.4zM562.9 483.8L560.4 484.3L562.7 483.4zM506.6 441.5L505.7 443.8L506.1 441.4zM536.4 458.2L534.5 460.3L536.0 457.9zM543.0 467.0L540.5 467.4L542.9 466.6zM534.5 456.9L531.2 458.8L534.1 456.4zM544.7 468.7L541.4 469.7L544.4 468.2zM535.0 463.3L531.3 465.9L534.4 462.7zM503.9 432.3L499.5 434.0L503.5 431.6zM495.7 428.2L490.3 429.1L495.4 427.4zM501.1 436.8L498.9 439.4L500.6 436.5zM546.3 470.1L543.9 471.6L545.9 469.8zM535.6 466.5L533.6 470.2L534.9 466.3zM522.3 456.8L518.1 459.3L521.7 456.1zM507.9 443.3L506.0 445.3L507.5 443.1zM498.1 427.2L494.3 430.6L497.4 426.7zM508.9 439.2L507.2 443.5L508.1 439.0zM496.2 434.9L494.3 438.2L495.6 434.7zM536.4 463.1L534.9 468.2L535.5 463.0z" fill="#000" opacity="0.15"/><path d="M556.4 471.0L553.7 474.8L557.7 472.3zM525.8 460.5L524.5 464.8L527.4 461.4zM548.7 470.9L547.7 475.2L550.3 471.6zM524.2 459.2L522.5 462.4L525.4 460.1zM515.6 443.8L511.5 446.5L516.3 445.7zM538.0 462.3L537.1 465.6L539.2 463.0zM534.3 469.4L533.9 473.9L536.0 469.9zM544.6 470.8L543.3 472.7L545.3 471.5zM560.4 480.5L560.7 483.7L561.7 480.6zM533.2 461.3L530.8 464.1L534.2 462.5zM539.0 461.6L537.1 463.3L539.5 462.6zM550.5 475.1L549.0 479.3L552.1 476.0zM541.0 471.0L538.1 474.4L542.1 472.4zM501.8 430.3L498.2 434.4L503.2 432.1zM524.8 454.6L521.6 457.2L525.6 456.1zM539.5 463.3L537.3 465.8L540.3 464.4zM495.2 431.3L495.9 435.3L496.9 431.3zM527.6 451.6L525.6 453.2L528.1 452.5zM561.8 479.0L561.5 484.3L563.9 479.5zM507.9 441.5L506.0 444.1L508.8 442.5zM518.1 448.1L517.6 451.2L519.3 448.6zM501.5 434.5L501.2 438.7L503.2 435.0zM504.5 442.7L503.5 447.0L506.2 443.5zM532.3 463.9L530.5 465.2L532.7 464.8zM529.1 458.7L526.0 461.7L530.1 460.2zM513.3 452.4L512.2 454.2L513.9 453.0zM493.5 433.1L492.0 435.1L494.2 433.8zM508.3 445.3L507.8 447.4L509.1 445.7zM528.8 466.0L528.7 468.8L529.9 466.3zM518.0 453.9L516.7 456.0L518.7 454.6zM553.5 480.0L554.5 484.6L555.5 480.0zM526.4 458.1L525.6 460.2L527.2 458.6zM558.8 485.9L558.4 488.3L559.8 486.3zM528.5 463.3L527.6 466.9L529.9 464.0zM496.9 432.3L493.8 435.5L498.0 433.8zM539.2 464.7L539.5 468.8L540.9 464.9zM527.0 464.1L524.5 465.7L527.4 465.3z" fill="#0000ec"/><path d="M529.0 460.1L525.0 463.2L529.9 462.0zM539.7 470.6L538.2 472.4L540.3 471.3zM514.4 454.7L514.5 457.4L515.5 454.9zM544.9 479.6L542.7 482.5L545.9 480.7zM544.1 473.3L541.3 476.5L545.2 474.7zM529.1 462.9L529.7 466.9L530.8 463.0zM520.2 451.1L518.4 453.1L520.8 452.0zM545.4 474.1L544.6 477.8L546.8 474.8zM513.0 443.6L509.0 447.0L514.0 445.5zM558.4 482.0L556.4 483.7L558.9 483.0zM502.7 435.0L503.2 437.7L503.8 435.1zM509.5 441.4L506.5 444.8L510.6 442.9zM560.7 488.8L559.6 492.8L562.2 489.6zM498.2 439.3L498.1 442.7L499.6 439.6zM534.2 461.8L534.8 465.4L535.7 461.9zM543.2 469.6L539.7 473.2L544.4 471.3zM559.2 482.8L555.4 485.6L559.9 484.5zM550.5 476.9L549.2 478.8L551.2 477.6zM539.7 473.0L540.0 476.3L541.1 473.1zM501.8 441.4L499.8 442.9L502.2 442.3zM558.6 483.4L557.9 486.9L559.9 484.0zM509.2 449.4L506.8 452.8L510.4 450.6zM556.1 486.9L555.8 491.0L557.8 487.3zM514.4 455.7L512.5 459.7L515.8 456.8zM541.1 474.4L539.7 477.1L542.0 475.2zM504.3 445.4L504.9 449.9L506.1 445.6zM541.9 470.5L541.9 473.6L543.1 470.7zM534.3 464.1L532.8 466.7L535.1 464.9zM512.8 447.9L512.3 450.3L513.7 448.3zM543.1 476.9L541.6 480.1L544.3 477.8zM540.5 469.7L539.9 472.8L541.7 470.2zM551.1 479.8L551.7 484.3L553.0 479.9zM535.3 472.7L534.7 475.0L536.1 473.2zM523.3 460.2L522.7 462.4L524.1 460.6zM541.9 475.4L541.7 479.7L543.6 475.8zM543.1 476.0L541.1 479.5L544.4 477.1zM552.3 480.9L550.8 483.2L553.1 481.7zM506.6 447.5L506.4 450.7L507.9 447.8zM548.8 479.5L546.9 481.8L549.6 480.5zM514.4 456.5L512.6 458.6L515.1 457.4zM499.5 439.1L497.8 442.3L500.7 440.1z" fill="#0000d5"/><path d="M498.0 439.3L496.7 441.8L498.9 440.0zM538.6 470.5L537.2 473.7L539.8 471.3zM524.0 459.7L523.5 462.2L525.0 460.1zM508.4 447.4L507.8 450.0L509.4 447.9zM544.2 474.3L543.4 476.7L545.1 474.8zM524.2 462.1L522.0 464.9L525.1 463.2zM523.2 460.6L523.0 464.0L524.6 461.0zM535.4 471.4L532.6 473.4L535.9 472.7zM559.3 485.5L558.3 488.0L560.3 486.1zM506.0 446.1L504.3 449.9L507.4 447.1zM502.8 442.5L501.0 445.0L503.7 443.4zM524.8 462.7L522.3 464.3L525.3 463.8zM543.7 473.6L543.3 477.3L545.2 474.1zM528.3 467.5L528.1 470.7L529.6 467.8zM547.7 479.8L545.3 481.6L548.2 480.9zM549.5 479.7L549.9 482.7L550.7 479.9zM507.4 447.3L507.5 449.1L508.1 447.4zM555.1 487.4L555.2 489.3L555.8 487.5zM523.1 463.5L521.8 465.8L523.9 464.2zM553.2 481.4L550.6 484.3L554.2 482.7zM507.2 448.2L506.0 449.4L507.6 448.8zM517.3 459.2L514.2 462.2L518.2 460.7z" fill="#0000be"/><path d="M557.7 472.3L553.7 474.8L557.1 471.8zM527.4 461.4L524.5 464.8L526.7 461.0zM550.3 471.6L547.7 475.2L549.6 471.3zM525.4 460.1L522.5 462.4L524.9 459.7zM516.3 445.7L511.5 446.5L516.0 444.9zM539.2 463.0L537.1 465.6L538.7 462.7zM536.0 469.9L533.9 473.9L535.3 469.7zM545.3 471.5L543.3 472.7L545.0 471.2zM561.7 480.6L560.7 483.7L561.2 480.5zM534.2 462.5L530.8 464.1L533.8 462.0zM539.5 462.6L537.1 463.3L539.3 462.2zM552.1 476.0L549.0 479.3L551.4 475.6zM542.1 472.4L538.1 474.4L541.7 471.8zM503.2 432.1L498.2 434.4L502.6 431.3zM525.6 456.1L521.6 457.2L525.3 455.5zM540.3 464.4L537.3 465.8L540.0 464.0zM496.9 431.3L495.9 435.3L496.2 431.3zM528.1 452.5L525.6 453.2L527.9 452.2zM563.9 479.5L561.5 484.3L563.0 479.3zM508.8 442.5L506.0 444.1L508.5 442.0zM519.3 448.6L517.6 451.2L518.8 448.4zM503.2 435.0L501.2 438.7L502.5 434.8zM506.2 443.5L503.5 447.0L505.5 443.1zM532.7 464.8L530.5 465.2L532.5 464.4zM530.1 460.2L526.0 461.7L529.7 459.6zM513.9 453.0L512.2 454.2L513.6 452.8zM494.2 433.8L492.0 435.1L493.9 433.5zM509.1 445.7L507.8 447.4L508.8 445.6zM529.9 466.3L528.7 468.8L529.4 466.2zM518.7 454.6L516.7 456.0L518.4 454.3zM555.5 480.0L554.5 484.6L554.6 480.0zM527.2 458.6L525.6 460.2L526.8 458.4zM559.8 486.3L558.4 488.3L559.4 486.1zM529.9 464.0L527.6 466.9L529.3 463.7zM498.0 433.8L493.8 435.5L497.5 433.2zM540.9 464.9L539.5 468.8L540.2 464.8zM527.4 465.3L524.5 465.7L527.3 464.8zM529.9 462.0L525.0 463.2L529.5 461.2zM540.3 471.3L538.2 472.4L540.0 471.0zM515.5 454.9L514.5 457.4L515.0 454.8zM545.9 480.7L542.7 482.5L545.5 480.2zM545.2 474.7L541.3 476.5L544.7 474.1zM530.8 463.0L529.7 466.9L530.1 463.0zM520.8 452.0L518.4 453.1L520.5 451.7zM546.8 474.8L544.6 477.8L546.2 474.5zM514.0 445.5L509.0 447.0L513.6 444.7zM558.9 483.0L556.4 483.7L558.7 482.5zM503.8 435.1L503.2 437.7L503.3 435.1zM510.6 442.9L506.5 444.8L510.2 442.3zM562.2 489.6L559.6 492.8L561.6 489.3zM499.6 439.6L498.1 442.7L499.0 439.5zM535.7 461.9L534.8 465.4L535.1 461.8zM544.4 471.3L539.7 473.2L543.9 470.6zM559.9 484.5L555.4 485.6L559.6 483.8zM551.2 477.6L549.2 478.8L550.9 477.3zM541.1 473.1L540.0 476.3L540.5 473.1zM502.2 442.3L499.8 442.9L502.0 441.9zM559.9 484.0L557.9 486.9L559.3 483.7zM510.4 450.6L506.8 452.8L509.8 450.1zM557.8 487.3L555.8 491.0L557.1 487.1zM515.8 456.8L512.5 459.7L515.2 456.3zM542.0 475.2L539.7 477.1L541.6 474.9zM506.1 445.6L504.9 449.9L505.4 445.5zM543.1 470.7L541.9 473.6L542.6 470.6zM535.1 464.9L532.8 466.7L534.8 464.6zM513.7 448.3L512.3 450.3L513.3 448.1zM544.3 477.8L541.6 480.1L543.8 477.4zM541.7 470.2L539.9 472.8L541.2 470.0zM553.0 479.9L551.7 484.3L552.2 479.9zM536.1 473.2L534.7 475.0L535.8 473.0zM524.1 460.6L522.7 462.4L523.8 460.4zM543.6 475.8L541.7 479.7L542.9 475.6zM544.4 477.1L541.1 479.5L543.9 476.7zM553.1 481.7L550.8 483.2L552.7 481.4zM507.9 447.8L506.4 450.7L507.3 447.7zM549.6 480.5L546.9 481.8L549.3 480.1zM515.1 457.4L512.6 458.6L514.8 457.0zM500.7 440.1L497.8 442.3L500.2 439.7zM498.9 440.0L496.7 441.8L498.5 439.7zM539.8 471.3L537.2 473.7L539.3 471.0zM525.0 460.1L523.5 462.2L524.6 459.9zM509.4 447.9L507.8 450.0L509.0 447.7zM545.1 474.8L543.4 476.7L544.7 474.6zM525.1 463.2L522.0 464.9L524.7 462.7zM524.6 461.0L523.0 464.0L524.0 460.8zM535.9 472.7L532.6 473.4L535.7 472.1zM560.3 486.1L558.3 488.0L559.9 485.9zM507.4 447.1L504.3 449.9L506.8 446.7zM503.7 443.4L501.0 445.0L503.3 443.0zM525.3 463.8L522.3 464.3L525.1 463.3zM545.2 474.1L543.3 477.3L544.5 473.9zM529.6 467.8L528.1 470.7L529.0 467.7zM548.2 480.9L545.3 481.6L548.0 480.4zM550.7 479.9L549.9 482.7L550.2 479.8zM508.1 447.4L507.5 449.1L507.8 447.4zM555.8 487.5L555.2 489.3L555.5 487.4zM523.9 464.2L521.8 465.8L523.5 463.9zM554.2 482.7L550.6 484.3L553.8 482.1zM507.6 448.8L506.0 449.4L507.4 448.5zM518.2 460.7L514.2 462.2L517.8 460.1z" fill="#000" opacity="0.15"/><path d="M546.5 211.4L565.0 205.5L545.6 204.0zM585.8 206.6L604.9 203.8L586.1 199.2zM597.0 204.4L615.5 198.4L596.1 197.0zM609.2 202.8L627.9 197.6L608.6 195.4zM622.2 203.1L640.7 197.3L621.4 195.7zM637.0 199.9L655.5 194.2L636.3 192.5zM649.8 198.9L668.0 193.2L649.0 191.7z" fill="#fffa00"/><path d="M560.6 209.5L579.0 203.7L559.7 202.1zM573.4 209.6L591.8 203.7L572.5 202.3z" fill="#ffe000"/><path d="M665.1 197.6L678.4 194.4L664.9 192.0z" fill="#55ff99"/><path d="M546.5 211.4L565.0 205.5L546.2 208.3zM560.6 209.5L579.0 203.7L560.2 206.4zM573.4 209.6L591.8 203.7L573.0 206.5zM585.8 206.6L604.9 203.8L585.9 203.4zM597.0 204.4L615.5 198.4L596.7 201.2zM609.2 202.8L627.9 197.6L609.0 199.7zM622.2 203.1L640.7 197.3L621.9 199.9zM637.0 199.9L655.5 194.2L636.7 196.8zM649.8 198.9L668.0 193.2L649.4 195.8zM665.1 197.6L678.4 194.4L665.0 195.2z" fill="#000" opacity="0.24"/><path d="M547.5 207.5L547.4 210.2L546.5 211.4L545.4 210.4L544.7 207.9L544.8 205.2L545.6 204.0L546.8 205.0zM561.5 205.6L561.4 208.3L560.6 209.5L559.5 208.5L558.7 206.0L558.9 203.3L559.7 202.1L560.8 203.1zM574.4 205.8L574.3 208.4L573.4 209.6L572.3 208.7L571.6 206.1L571.7 203.5L572.5 202.3L573.6 203.2zM587.4 202.9L586.8 205.5L585.8 206.6L584.8 205.4L584.6 202.8L585.1 200.2L586.1 199.2L587.1 200.3zM598.0 200.5L597.9 203.2L597.0 204.4L595.9 203.4L595.2 200.9L595.3 198.2L596.1 197.0L597.3 198.0zM610.3 199.0L610.1 201.6L609.2 202.8L608.1 201.8L607.5 199.2L607.7 196.6L608.6 195.4L609.7 196.4zM623.2 199.2L623.1 201.9L622.2 203.1L621.1 202.1L620.4 199.6L620.5 196.9L621.4 195.7L622.5 196.7zM638.0 196.1L637.9 198.7L637.0 199.9L635.9 198.9L635.3 196.4L635.4 193.7L636.3 192.5L637.4 193.5zM650.8 195.1L650.7 197.7L649.8 198.9L648.7 198.0L648.0 195.4L648.1 192.8L649.0 191.7L650.1 192.6zM666.0 194.8L665.8 196.7L665.1 197.6L664.3 196.8L664.0 194.8L664.2 192.9L664.9 192.0L665.7 192.8z" fill="#30300a" opacity="0.85"/><path d="M550.6 215.7L569.5 211.4L550.4 208.3zM561.9 214.6L580.8 210.3L561.7 207.2zM575.6 214.8L594.3 209.8L575.1 207.4zM617.8 210.5L636.5 205.5L617.3 203.1zM643.1 206.2L662.0 202.1L642.9 198.8z" fill="#ffe000"/><path d="M589.4 211.7L608.4 207.7L589.3 204.3zM602.9 211.4L622.0 208.6L603.2 204.0zM630.7 207.3L649.2 201.7L630.0 199.9z" fill="#fffa00"/><path d="M656.9 204.9L672.1 201.0L656.6 198.7z" fill="#9cff59"/><path d="M674.4 203.3L684.3 201.3L674.5 199.0z" fill="#24ffd4"/><path d="M550.6 215.7L569.5 211.4L550.5 212.6zM561.9 214.6L580.8 210.3L561.8 211.5zM575.6 214.8L594.3 209.8L575.4 211.7zM589.4 211.7L608.4 207.7L589.4 208.5zM602.9 211.4L622.0 208.6L603.0 208.3zM617.8 210.5L636.5 205.5L617.6 207.4zM630.7 207.3L649.2 201.7L630.4 204.2zM643.1 206.2L662.0 202.1L643.0 203.1zM656.9 204.9L672.1 201.0L656.8 202.2zM674.4 203.3L684.3 201.3L674.5 201.5z" fill="#000" opacity="0.24"/><path d="M551.9 212.0L551.6 214.6L550.6 215.7L549.6 214.7L549.1 212.1L549.4 209.4L550.4 208.3L551.4 209.4zM563.2 210.9L562.8 213.5L561.9 214.6L560.9 213.6L560.4 210.9L560.7 208.3L561.7 207.2L562.7 208.3zM576.8 211.0L576.5 213.6L575.6 214.8L574.5 213.8L573.9 211.2L574.2 208.6L575.1 207.4L576.2 208.4zM590.8 208.0L590.4 210.6L589.4 211.7L588.4 210.6L588.0 208.0L588.3 205.4L589.3 204.3L590.3 205.4zM604.4 207.8L603.9 210.4L602.9 211.4L601.9 210.3L601.6 207.6L602.2 205.0L603.2 204.0L604.2 205.1zM619.0 206.7L618.8 209.4L617.8 210.5L616.8 209.5L616.2 206.9L616.4 204.3L617.3 203.1L618.4 204.1zM631.7 203.5L631.6 206.1L630.7 207.3L629.6 206.3L628.9 203.7L629.1 201.1L630.0 199.9L631.1 200.9zM644.4 202.5L644.0 205.1L643.1 206.2L642.1 205.2L641.6 202.6L641.9 199.9L642.9 198.8L643.9 199.9zM657.9 201.7L657.7 203.9L656.9 204.9L656.1 204.0L655.6 201.8L655.8 199.6L656.6 198.7L657.5 199.6zM675.3 201.2L675.0 202.7L674.4 203.3L673.9 202.7L673.6 201.1L673.9 199.6L674.5 199.0L675.1 199.6z" fill="#30300a" opacity="0.85"/><path d="M539.6 221.2L558.2 215.8L538.9 213.8zM553.4 221.6L572.5 218.2L553.5 214.2zM568.6 219.6L587.7 216.7L568.9 212.2zM580.9 218.6L599.7 213.9L580.5 211.2zM622.7 215.8L641.3 210.5L622.1 208.4z" fill="#fffa00"/><path d="M596.4 218.0L615.5 214.7L596.6 210.6zM607.9 215.7L627.0 212.2L608.0 208.3zM637.3 214.5L656.2 210.5L637.1 207.1z" fill="#ffe000"/><path d="M651.4 212.8L668.9 209.1L651.3 205.9z" fill="#e3ff1a"/><path d="M668.9 210.6L680.5 207.4L668.6 205.7z" fill="#45ffad"/><path d="M539.6 221.2L558.2 215.8L539.3 218.1zM553.4 221.6L572.5 218.2L553.5 218.4zM568.6 219.6L587.7 216.7L568.7 216.5zM580.9 218.6L599.7 213.9L580.8 215.4zM596.4 218.0L615.5 214.7L596.5 214.8zM607.9 215.7L627.0 212.2L608.0 212.6zM622.7 215.8L641.3 210.5L622.5 212.6zM637.3 214.5L656.2 210.5L637.2 211.4zM651.4 212.8L668.9 209.1L651.3 209.9zM668.9 210.6L680.5 207.4L668.8 208.5z" fill="#000" opacity="0.24"/><path d="M540.6 217.4L540.5 220.0L539.6 221.2L538.5 220.2L537.8 217.6L538.0 215.0L538.9 213.8L540.0 214.8zM554.9 217.9L554.4 220.5L553.4 221.6L552.4 220.5L552.1 217.8L552.5 215.2L553.5 214.2L554.5 215.3zM570.1 216.0L569.6 218.6L568.6 219.6L567.6 218.5L567.3 215.9L567.8 213.3L568.9 212.2L569.8 213.4zM582.1 214.8L581.9 217.4L580.9 218.6L579.9 217.6L579.3 215.0L579.6 212.3L580.5 211.2L581.6 212.2zM597.9 214.3L597.4 216.9L596.4 218.0L595.4 216.9L595.1 214.2L595.6 211.6L596.6 210.6L597.6 211.7zM609.4 212.1L608.9 214.7L607.9 215.7L606.9 214.7L606.5 212.0L607.0 209.4L608.0 208.3L609.0 209.4zM623.8 212.0L623.6 214.6L622.7 215.8L621.6 214.8L621.0 212.2L621.2 209.5L622.1 208.4L623.2 209.4zM638.6 210.8L638.2 213.4L637.3 214.5L636.2 213.5L635.8 210.9L636.1 208.2L637.1 207.1L638.1 208.2zM652.7 209.4L652.3 211.8L651.4 212.8L650.5 211.8L650.0 209.4L650.4 207.0L651.3 205.9L652.2 206.9zM669.7 208.1L669.5 209.9L668.9 210.6L668.2 210.0L667.8 208.2L668.0 206.5L668.6 205.7L669.3 206.4z" fill="#30300a" opacity="0.85"/><path d="M544.9 227.7L563.6 222.6L544.4 220.3zM556.9 225.8L575.8 221.5L556.7 218.4zM586.7 224.1L605.2 218.4L585.9 216.7zM601.0 223.3L619.8 218.9L600.7 215.9zM616.3 221.4L635.5 218.8L616.8 214.0zM629.1 222.2L648.3 219.9L629.6 214.8zM646.1 220.0L665.3 217.6L646.6 212.6z" fill="#ffe000"/><path d="M571.2 224.1L590.1 219.9L571.0 216.7z" fill="#fffa00"/><path d="M663.2 218.9L677.3 216.9L663.6 213.2z" fill="#78ff79"/><path d="M544.9 227.7L563.6 222.6L544.7 224.6zM556.9 225.8L575.8 221.5L556.9 222.7zM571.2 224.1L590.1 219.9L571.1 221.0zM586.7 224.1L605.2 218.4L586.4 220.9zM601.0 223.3L619.8 218.9L600.8 220.2zM616.3 221.4L635.5 218.8L616.5 218.2zM629.1 222.2L648.3 219.9L629.3 219.1zM646.1 220.0L665.3 217.6L646.3 216.9zM663.2 218.9L677.3 216.9L663.3 216.5z" fill="#000" opacity="0.24"/><path d="M546.1 223.9L545.8 226.5L544.9 227.7L543.9 226.7L543.3 224.1L543.5 221.5L544.4 220.3L545.4 221.3zM558.2 222.1L557.9 224.7L556.9 225.8L555.9 224.8L555.4 222.2L555.8 219.6L556.7 218.4L557.7 219.5zM572.5 220.4L572.2 223.0L571.2 224.1L570.2 223.1L569.7 220.5L570.0 217.8L571.0 216.7L572.0 217.8zM587.7 220.2L587.6 222.9L586.7 224.1L585.6 223.1L584.9 220.5L585.0 217.9L585.9 216.7L587.0 217.7zM602.2 219.6L601.9 222.2L601.0 223.3L599.9 222.3L599.4 219.7L599.7 217.0L600.7 215.9L601.7 217.0zM618.0 217.8L617.4 220.3L616.3 221.4L615.4 220.2L615.2 217.6L615.7 215.0L616.8 214.0L617.7 215.1zM630.7 218.6L630.1 221.2L629.1 222.2L628.2 221.0L627.9 218.4L628.5 215.8L629.6 214.8L630.5 216.0zM647.8 216.4L647.2 219.0L646.1 220.0L645.2 218.9L645.0 216.2L645.5 213.6L646.6 212.6L647.5 213.8zM664.5 216.1L664.0 218.1L663.2 218.9L662.5 218.0L662.3 216.0L662.7 214.0L663.6 213.2L664.3 214.1z" fill="#30300a" opacity="0.85"/><path d="M547.2 233.3L566.2 229.4L547.2 225.9zM578.5 231.1L597.7 228.4L578.9 223.8zM623.9 228.9L642.9 225.5L624.0 221.5z" fill="#ffe000"/><path d="M564.3 231.1L582.9 225.6L563.6 223.8zM592.8 230.7L611.7 226.9L592.7 223.3zM609.1 228.3L628.0 224.4L609.0 220.9zM638.6 227.3L657.8 225.3L639.2 220.0z" fill="#fffa00"/><path d="M653.8 226.0L670.2 222.3L653.7 219.5z" fill="#9cff59"/><path d="M672.5 223.7L682.5 221.1L672.3 219.4z" fill="#14ffe7"/><path d="M547.2 233.3L566.2 229.4L547.2 230.1zM564.3 231.1L582.9 225.6L564.0 228.0zM578.5 231.1L597.7 228.4L578.7 228.0zM592.8 230.7L611.7 226.9L592.7 227.5zM609.1 228.3L628.0 224.4L609.0 225.1zM623.9 228.9L642.9 225.5L623.9 225.7zM638.6 227.3L657.8 225.3L638.9 224.2zM653.8 226.0L670.2 222.3L653.7 223.2zM672.5 223.7L682.5 221.1L672.4 221.9z" fill="#000" opacity="0.24"/><path d="M548.6 229.6L548.2 232.2L547.2 233.3L546.2 232.2L545.8 229.6L546.2 227.0L547.2 225.9L548.2 226.9zM565.4 227.3L565.2 230.0L564.3 231.1L563.2 230.1L562.6 227.6L562.7 224.9L563.6 223.8L564.7 224.7zM580.1 227.5L579.6 230.1L578.5 231.1L577.6 230.0L577.3 227.4L577.9 224.8L578.9 223.8L579.9 224.9zM594.1 227.0L593.7 229.6L592.8 230.7L591.8 229.6L591.3 227.0L591.7 224.4L592.7 223.3L593.7 224.4zM610.4 224.6L610.1 227.2L609.1 228.3L608.1 227.2L607.6 224.6L608.0 222.0L609.0 220.9L610.0 221.9zM625.3 225.2L624.9 227.8L623.9 228.9L622.9 227.8L622.5 225.2L623.0 222.5L624.0 221.5L625.0 222.6zM640.3 223.8L639.7 226.3L638.6 227.3L637.7 226.2L637.5 223.5L638.1 221.0L639.2 220.0L640.1 221.1zM655.0 222.7L654.7 225.0L653.8 226.0L652.9 225.1L652.5 222.8L652.8 220.5L653.7 219.5L654.6 220.4zM673.3 221.5L673.1 223.1L672.5 223.7L671.9 223.1L671.6 221.6L671.8 220.0L672.3 219.4L672.9 220.0z" fill="#30300a" opacity="0.85"/><path d="M552.2 236.5L570.8 230.9L551.5 229.1zM567.9 237.3L586.9 233.5L567.8 229.9zM583.3 236.2L602.4 232.8L583.4 228.8zM601.6 235.2L620.3 230.2L601.1 227.8zM614.2 234.3L633.3 231.3L614.4 226.9zM631.1 234.3L650.0 230.1L630.9 226.9zM646.5 235.1L665.8 233.0L647.2 227.8z" fill="#fffa00"/><path d="M666.0 232.1L678.8 231.0L666.6 227.0z" fill="#55ff99"/><path d="M552.2 236.5L570.8 230.9L551.9 233.3zM567.9 237.3L586.9 233.5L567.9 234.2zM583.3 236.2L602.4 232.8L583.4 233.0zM601.6 235.2L620.3 230.2L601.4 232.1zM614.2 234.3L633.3 231.3L614.3 231.2zM631.1 234.3L650.0 230.1L631.0 231.2zM646.5 235.1L665.8 233.0L646.8 232.0zM666.0 232.1L678.8 231.0L666.3 229.9z" fill="#000" opacity="0.24"/><path d="M553.3 232.6L553.1 235.3L552.2 236.5L551.1 235.5L550.5 232.9L550.6 230.3L551.5 229.1L552.6 230.1zM569.3 233.6L568.9 236.2L567.9 237.3L566.9 236.2L566.5 233.6L566.9 231.0L567.8 229.9L568.8 231.0zM584.8 232.5L584.3 235.1L583.3 236.2L582.3 235.1L582.0 232.4L582.4 229.8L583.4 228.8L584.4 229.9zM602.7 231.4L602.5 234.1L601.6 235.2L600.5 234.2L599.9 231.6L600.1 229.0L601.1 227.8L602.1 228.8zM615.7 230.7L615.2 233.3L614.2 234.3L613.2 233.2L612.9 230.6L613.4 228.0L614.4 226.9L615.4 228.0zM632.4 230.6L632.1 233.2L631.1 234.3L630.1 233.3L629.6 230.7L630.0 228.0L630.9 226.9L631.9 228.0zM648.2 231.6L647.6 234.1L646.5 235.1L645.6 234.0L645.4 231.3L646.1 228.7L647.2 227.8L648.1 228.9zM667.3 229.7L666.8 231.5L666.0 232.1L665.4 231.3L665.3 229.4L665.8 227.6L666.6 227.0L667.2 227.8z" fill="#30300a" opacity="0.85"/><path d="M540.1 243.6L559.3 240.9L540.5 236.2zM556.9 244.1L575.8 240.1L556.8 236.7zM590.3 243.1L609.2 238.8L590.1 235.7zM607.6 242.3L626.7 239.1L607.8 234.9zM638.3 241.1L657.5 239.5L639.1 233.7z" fill="#ffe000"/><path d="M574.1 241.6L593.3 239.1L574.5 234.2zM623.7 242.7L642.9 240.5L624.2 235.3z" fill="#fffa00"/><path d="M657.2 241.1L672.5 238.4L657.3 235.0z" fill="#78ff79"/><path d="M679.2 239.5L688.3 238.2L679.5 235.5z" fill="#14ffe7"/><path d="M540.1 243.6L559.3 240.9L540.3 240.5zM556.9 244.1L575.8 240.1L556.8 240.9zM574.1 241.6L593.3 239.1L574.3 238.5zM590.3 243.1L609.2 238.8L590.2 240.0zM607.6 242.3L626.7 239.1L607.7 239.1zM623.7 242.7L642.9 240.5L623.9 239.6zM638.3 241.1L657.5 239.5L638.6 238.0zM657.2 241.1L672.5 238.4L657.2 238.5zM679.2 239.5L688.3 238.2L679.3 237.8z" fill="#000" opacity="0.24"/><path d="M541.7 240.0L541.1 242.6L540.1 243.6L539.2 242.5L538.9 239.9L539.4 237.3L540.5 236.2L541.4 237.4zM558.2 240.3L557.9 243.0L556.9 244.1L555.9 243.0L555.4 240.4L555.8 237.8L556.8 236.7L557.8 237.7zM575.7 238.0L575.1 240.6L574.1 241.6L573.1 240.5L572.9 237.8L573.5 235.2L574.5 234.2L575.5 235.4zM591.6 239.4L591.3 242.0L590.3 243.1L589.3 242.1L588.8 239.5L589.2 236.9L590.1 235.7L591.1 236.8zM609.1 238.6L608.6 241.2L607.6 242.3L606.6 241.1L606.3 238.5L606.8 235.9L607.8 234.9L608.8 236.0zM625.4 239.1L624.7 241.7L623.7 242.7L622.8 241.5L622.6 238.9L623.2 236.3L624.2 235.3L625.1 236.5zM640.1 237.6L639.4 240.1L638.3 241.1L637.4 239.9L637.3 237.3L638.0 234.7L639.1 233.7L639.9 234.9zM658.4 238.1L658.0 240.2L657.2 241.1L656.4 240.2L656.1 238.0L656.5 235.9L657.3 235.0L658.1 235.9zM680.1 237.5L679.8 238.9L679.2 239.5L678.7 238.8L678.6 237.4L678.9 236.0L679.5 235.5L680.0 236.1z" fill="#30300a" opacity="0.85"/><path d="M546.3 248.6L564.8 242.8L545.5 241.2zM563.4 247.6L582.6 245.3L563.9 240.3z" fill="#ffe000"/><path d="M582.1 248.5L600.9 243.6L581.7 241.1zM597.6 247.5L616.8 245.0L598.1 240.1zM615.9 248.6L635.2 246.5L616.5 241.3zM649.0 247.1L667.5 244.7L649.5 239.9z" fill="#fffa00"/><path d="M630.3 247.1L649.6 246.0L631.3 239.8z" fill="#ffc700"/><path d="M670.3 246.2L681.7 245.7L671.0 241.5z" fill="#34ffc0"/><path d="M546.3 248.6L564.8 242.8L545.9 245.4zM563.4 247.6L582.6 245.3L563.6 244.5zM582.1 248.5L600.9 243.6L581.9 245.4zM597.6 247.5L616.8 245.0L597.8 244.4zM615.9 248.6L635.2 246.5L616.2 245.5zM630.3 247.1L649.6 246.0L630.7 244.0zM649.0 247.1L667.5 244.7L649.3 244.0zM670.3 246.2L681.7 245.7L670.6 244.2z" fill="#000" opacity="0.24"/><path d="M547.3 244.7L547.1 247.4L546.3 248.6L545.2 247.6L544.5 245.0L544.6 242.4L545.5 241.2L546.6 242.2zM565.1 244.0L564.5 246.6L563.4 247.6L562.5 246.5L562.3 243.8L562.9 241.3L563.9 240.3L564.8 241.4zM583.3 244.7L583.1 247.3L582.1 248.5L581.1 247.5L580.5 244.9L580.7 242.2L581.7 241.1L582.7 242.1zM599.2 243.9L598.7 246.5L597.6 247.5L596.7 246.4L596.4 243.7L597.0 241.2L598.1 240.1L599.0 241.3zM617.6 245.1L617.0 247.6L615.9 248.6L615.0 247.5L614.8 244.8L615.5 242.3L616.5 241.3L617.4 242.4zM632.2 243.6L631.4 246.2L630.3 247.1L629.5 245.9L629.4 243.2L630.2 240.7L631.3 239.8L632.1 241.0zM650.6 243.6L650.1 246.1L649.0 247.1L648.2 246.0L647.9 243.4L648.5 240.9L649.5 239.9L650.4 241.0zM671.5 244.0L671.0 245.6L670.3 246.2L669.8 245.4L669.8 243.7L670.3 242.1L671.0 241.5L671.6 242.3z" fill="#30300a" opacity="0.85"/><path d="M554.0 255.0L573.1 251.7L554.2 247.6z" fill="#ffe000"/><path d="M571.1 254.9L589.9 250.4L570.7 247.5zM587.1 253.8L606.3 251.8L587.7 246.4z" fill="#fffa00"/><path d="M605.1 254.1L624.1 250.4L605.1 246.7z" fill="#ffad00"/><path d="M623.3 253.7L642.7 253.5L624.7 246.4zM641.1 255.6L660.5 254.8L642.2 248.3z" fill="#ff9400"/><path d="M661.3 253.1L675.5 250.8L661.5 247.4z" fill="#9cff59"/><path d="M554.0 255.0L573.1 251.7L554.1 251.8zM571.1 254.9L589.9 250.4L570.9 251.8zM587.1 253.8L606.3 251.8L587.4 250.7zM605.1 254.1L624.1 250.4L605.1 250.9zM623.3 253.7L642.7 253.5L623.9 250.6zM641.1 255.6L660.5 254.8L641.6 252.5zM661.3 253.1L675.5 250.8L661.4 250.7z" fill="#000" opacity="0.24"/><path d="M555.5 251.3L555.0 253.9L554.0 255.0L553.1 253.9L552.7 251.2L553.2 248.6L554.2 247.6L555.2 248.7zM572.3 251.2L572.0 253.8L571.1 254.9L570.0 253.9L569.5 251.3L569.8 248.7L570.7 247.5L571.8 248.6zM588.8 250.2L588.2 252.8L587.1 253.8L586.2 252.6L586.0 250.0L586.7 247.4L587.7 246.4L588.6 247.6zM606.5 250.4L606.1 253.0L605.1 254.1L604.1 253.0L603.7 250.4L604.1 247.8L605.1 246.7L606.1 247.8zM625.4 250.3L624.5 252.8L623.3 253.7L622.6 252.4L622.6 249.8L623.5 247.3L624.7 246.4L625.5 247.7zM643.1 252.1L642.3 254.7L641.1 255.6L640.3 254.4L640.3 251.7L641.1 249.2L642.2 248.3L643.1 249.5zM662.5 250.3L662.1 252.3L661.3 253.1L660.5 252.2L660.3 250.2L660.7 248.2L661.5 247.4L662.2 248.3z" fill="#30300a" opacity="0.85"/><path d="M604.3 261.7L617.4 258.2L604.5 253.9zM620.6 261.2L634.2 261.8L623.2 253.9zM640.2 263.2L653.7 262.4L641.9 255.7z" fill="#ff6100"/><path d="M656.3 262.9L669.8 262.3L658.2 255.3z" fill="#ffad00"/><path d="M676.2 264.0L689.6 261.9L677.2 256.3z" fill="#14ffe7"/><path d="M604.3 261.7L617.4 258.2L604.4 258.4zM623.2 253.9L634.2 261.8L622.1 257.0zM640.2 263.2L653.7 262.4L640.9 260.0zM656.3 262.9L669.8 262.3L657.1 259.7zM676.2 264.0L689.6 261.9L676.6 260.7z" fill="#000" opacity="0.24"/><path d="M605.9 257.8L605.4 260.6L604.3 261.7L603.3 260.5L602.9 257.8L603.4 255.0L604.5 253.9L605.5 255.1zM623.3 258.0L622.0 260.5L620.6 261.2L620.0 259.8L620.5 257.1L621.8 254.6L623.2 253.9L623.8 255.3zM642.5 259.8L641.4 262.4L640.2 263.2L639.4 261.9L639.6 259.1L640.7 256.5L641.9 255.7L642.7 257.0zM658.7 259.5L657.6 262.1L656.3 262.9L655.5 261.5L655.8 258.8L656.9 256.2L658.2 255.3L658.9 256.7zM678.2 260.4L677.4 263.0L676.2 264.0L675.3 262.8L675.2 260.0L676.0 257.3L677.2 256.3L678.1 257.6z" fill="#30300a" opacity="0.85"/><path d="M600.4 269.3L613.6 265.9L600.8 261.5z" fill="#ff6100"/><path d="M619.2 269.6L632.6 267.2L620.1 261.8z" fill="#ff4700"/><path d="M636.9 269.9L650.5 270.5L639.5 262.5z" fill="#ff2e00"/><path d="M654.0 269.4L667.5 270.2L656.7 262.1z" fill="#ff7a00"/><path d="M670.9 271.5L684.5 271.3L673.0 264.0z" fill="#55ff99"/><path d="M600.4 269.3L613.6 265.9L600.6 266.0zM619.2 269.6L632.6 267.2L619.6 266.3zM639.5 262.5L650.5 270.5L638.4 265.6zM656.7 262.1L667.5 270.2L655.5 265.2zM670.9 271.5L684.5 271.3L671.8 268.3z" fill="#000" opacity="0.24"/><path d="M602.1 265.5L601.5 268.2L600.4 269.3L599.4 268.1L599.1 265.3L599.7 262.6L600.8 261.5L601.8 262.7zM621.1 265.9L620.4 268.6L619.2 269.6L618.3 268.3L618.2 265.5L618.9 262.9L620.1 261.8L621.0 263.1zM639.6 266.7L638.3 269.1L636.9 269.9L636.3 268.4L636.8 265.7L638.1 263.2L639.5 262.5L640.1 263.9zM656.7 266.3L655.4 268.7L654.0 269.4L653.4 268.0L653.9 265.2L655.3 262.8L656.7 262.1L657.3 263.5zM673.4 268.2L672.2 270.7L670.9 271.5L670.2 270.2L670.5 267.4L671.7 264.8L673.0 264.0L673.7 265.4z" fill="#30300a" opacity="0.85"/><path d="M599.2 275.7L612.4 272.7L599.7 267.9z" fill="#ff7a00"/><path d="M615.2 275.2L628.3 272.0L615.6 267.4zM651.0 277.8L664.6 277.9L653.3 270.4z" fill="#ff2e00"/><path d="M630.6 277.3L643.8 280.6L634.6 270.6z" fill="#ff1400"/><path d="M668.4 279.0L681.8 277.4L669.7 271.4z" fill="#9cff59"/><path d="M599.2 275.7L612.4 272.7L599.4 272.4zM615.2 275.2L628.3 272.0L615.3 271.9zM634.6 270.6L643.8 280.6L632.9 273.4zM653.3 270.4L664.6 277.9L652.3 273.5zM668.4 279.0L681.8 277.4L668.9 275.8z" fill="#000" opacity="0.24"/><path d="M600.9 271.9L600.3 274.6L599.2 275.7L598.2 274.5L597.9 271.7L598.5 269.0L599.7 267.9L600.6 269.1zM616.8 271.4L616.3 274.1L615.2 275.2L614.2 274.0L613.9 271.2L614.5 268.5L615.6 267.4L616.6 268.6zM633.9 274.7L632.1 276.8L630.6 277.3L630.3 275.7L631.4 273.2L633.1 271.0L634.6 270.6L634.9 272.1zM653.6 274.5L652.4 277.0L651.0 277.8L650.4 276.4L650.8 273.7L652.0 271.2L653.3 270.4L654.0 271.8zM670.5 275.4L669.6 278.1L668.4 279.0L667.5 277.7L667.6 274.9L668.5 272.3L669.7 271.4L670.5 272.7z" fill="#30300a" opacity="0.85"/><path d="M602.3 271.4L604.2 251.0L593.7 268.6zM673.0 250.5L678.1 261.8L679.0 249.5zM677.0 268.3L681.0 280.0L683.0 267.7z" fill="#ff1400"/><path d="M608.8 265.5L619.4 251.5L603.2 258.5zM662.0 265.9L676.5 265.6L664.0 258.1z" fill="#fa0000"/><path d="M617.5 271.7L629.0 262.8L614.5 264.3zM648.5 287.9L659.0 299.2L655.5 284.1z" fill="#e20000"/><path d="M638.5 300.5L644.1 314.9L645.5 299.5z" fill="#c90000"/><path d="M602.3 271.4L604.2 251.0L598.6 270.2zM608.8 265.5L619.4 251.5L606.4 262.5zM617.5 271.7L629.0 262.8L616.2 268.6zM655.5 284.1L659.0 299.2L652.5 285.7zM662.0 265.9L676.5 265.6L662.8 262.6zM645.5 299.5L644.1 314.9L642.5 299.9zM679.0 249.5L678.1 261.8L676.4 249.9zM683.0 267.7L681.0 280.0L680.4 268.0z" fill="#000" opacity="0.28"/><rect x="452.7" y="572.4" width="380.3" height="11.6" fill="url(#gbar)"/><text x="453.5" y="564.6" font-family="Liberation Sans,sans-serif" font-size="11.6" fill="#fff" text-anchor="middle">2.42e-49</text><text x="643" y="564.6" font-family="Liberation Sans,sans-serif" font-size="11.6" fill="#fff" text-anchor="middle">0.867</text><text x="834" y="564.6" font-family="Liberation Sans,sans-serif" font-size="11.6" fill="#fff" text-anchor="middle">1.73</text><text x="643" y="547" font-family="Liberation Sans,sans-serif" font-size="11.6" fill="#fff" text-anchor="middle">b</text><path d="M976.7 568.4V547.3M976.7 568.4L996.9 564M976.7 568.4L989 576" stroke="#fff" stroke-width="0.8" fill="none"/><text x="983.4" y="544.6" font-family="Liberation Sans,sans-serif" font-size="11.6" fill="#fff" text-anchor="middle">Y</text><text x="1002.5" y="562.4" font-family="Liberation Sans,sans-serif" font-size="11.6" fill="#fff" text-anchor="middle">X</text><text x="995" y="575" font-family="Liberation Sans,sans-serif" font-size="11.6" fill="#fff" text-anchor="middle">Z</text></g></svg></div>
</div>
<div id="msgbar" class="abs"><div class="abs" style="left:0.6px;top:0.6px"><div class="abs" style="left:1px;top:1.4px;width:217px;height:18.2px;background:#3a3a3a;border:1px solid #2a2a2a;border-bottom-color:#565656;border-right-color:#565656"></div><svg class="abs" style="left:4px;top:5px" width="11" height="11" viewBox="0 0 11 11"><circle cx="4.2" cy="4.2" r="3" fill="none" stroke="#f0f0f0" stroke-width="1.5"/><path d="M6.4 6.4L10 10" stroke="#f0f0f0" stroke-width="1.8"/></svg><div class="abs" style="left:221.8px;top:1.4px;width:59.4px;height:18.2px;background:#3c3c3c;border:1px solid #2b2b2b;border-top-color:#555;border-left-color:#505050;text-align:center;line-height:17px;color:#f4f4f4;font-size:9.3px">Save</div><div class="abs" style="left:283.6px;top:1.4px;width:60px;height:18.2px;background:#3c3c3c;border:1px solid #2b2b2b;border-top-color:#555;border-left-color:#505050;text-align:center;line-height:17px;color:#f4f4f4;font-size:9.3px">Clear</div><div class="abs" style="left:351.2px;top:6.4px;width:8px;height:8px;background:#363636;border:1px solid #2a2a2a;border-bottom-color:#5a5a5a;border-right-color:#5a5a5a"></div><svg class="abs" style="left:351.2px;top:6.4px" width="8" height="8" viewBox="0 0 9.6 9.6"><path d="M2.4 4.6L4.2 6.8L7.4 2.6" fill="none" stroke="#f4f4f4" stroke-width="1.7"/></svg><div class="abs lbl" style="left:361.3px;top:3.9px;font-size:9.45px">Autoscroll messages</div></div></div>
<div id="msg" class="abs"><div style="top:-6.90px">Info    : GetDP -           &gt; '../onelab_doc/models/Inductor/res3d/Inductance.dat'</div><div style="top:4.70px">Info    : GetDP -           &gt;&gt; '../onelab_doc/models/Inductor/res3d/ME.dat'</div><div style="top:16.33px">Info    : GetDP - PostOperation 4/4</div><div style="top:27.96px">Info    : GetDP -           &gt; '../onelab_doc/models/Inductor/res3d/InductanceE.dat'</div><div style="top:39.59px">Info    : GetDP - (Wall = 79.0376s, CPU = 155.986s, Mem = 1039.88Mb, Recv/Send = 0.0166922/0.0560827Mb)</div><div style="top:51.22px">Info    : GetDP - E n d   P r o c e s s i n g</div><div style="left:0;top:0;width:750px;height:0.9px;background:#000083"></div></div>
<div class="abs" style="left:1013px;top:622px;width:9.6px;height:62px;background:#333"></div><div class="abs" style="left:1013px;top:668px;width:9.6px;height:5.4px;background:#444;border-top:1px solid #555"></div>
<div class="abs" style="left:1013px;top:622.5px;width:10px;height:10.5px;background:#3c3c3c;border:1px solid #2b2b2b;border-top-color:#555"></div>
<svg class="abs" style="left:1015px;top:625.5px" width="6" height="4" viewBox="0 0 6 4"><polygon points="0,4 6,4 3,0" fill="#f0f0f0"/></svg>
<div class="abs" style="left:1013px;top:673px;width:10px;height:10.5px;background:#3c3c3c;border:1px solid #2b2b2b;border-top-color:#555"></div>
<svg class="abs" style="left:1015px;top:676.5px" width="6" height="4" viewBox="0 0 6 4"><polygon points="0,0 6,0 3,4" fill="#f0f0f0"/></svg>
<div class="abs" style="left:262.4px;top:684.5px;width:750.6px;height:9.5px;background:#2f2f2f;border-top:1px solid #2b2b2b"></div>
<div class="abs" style="left:273px;top:685.2px;width:717px;height:8.6px;background:#3d3d3d;border:1px solid #2e2e2e;border-top-color:#505050"></div>
<svg class="abs" style="left:265.5px;top:686.5px" width="4" height="6" viewBox="0 0 4 6"><polygon points="4,0 4,6 0,3" fill="#f0f0f0"/></svg>
<div class="abs" style="left:1002px;top:685.2px;width:11px;height:8.8px;background:#3c3c3c;border:1px solid #2b2b2b;border-top-color:#555"></div>
<svg class="abs" style="left:1006px;top:686.5px" width="4" height="6" viewBox="0 0 4 6"><polygon points="0,0 0,6 4,3" fill="#f0f0f0"/></svg>
<div id="status" class="abs"><svg class="abs" style="left:2.6px;top:3.4px" width="9" height="10" viewBox="0 0 9 10"><path d="M0 1H9M0 3.6H9M0 6.2H9M0 8.8H9" stroke="#f0f0f0" stroke-width="1"/></svg><div class="abs lbl" style="left:15.4px;top:1.6px;color:#f2f2f2;font-size:10.3px;">O</div><div class="abs lbl" style="left:28px;top:1.6px;color:#f2f2f2;font-size:10.3px;">X</div><div class="abs lbl" style="left:40px;top:1.6px;color:#f2f2f2;font-size:10.3px;">Y</div><div class="abs lbl" style="left:52px;top:1.6px;color:#f2f2f2;font-size:10.3px;">Z</div><svg class="abs" style="left:61.5px;top:2.2px" width="12" height="12" viewBox="1 1 12 12"><path d="M9.6 10.2A4 4 0 1 1 10.6 5" fill="none" stroke="#e8e8e8" stroke-width="1"/><polygon points="8.4,8.6 11.6,8.8 10.2,11.8" fill="#e8e8e8"/></svg><div class="abs lbl" style="left:76.5px;top:1.6px;color:#f2f2f2;font-size:10.3px;">1:1</div><div class="abs lbl" style="left:92.8px;top:1.6px;color:#f2f2f2;font-size:10.3px;">S</div><svg class="abs" style="left:106px;top:3.5px" width="48" height="10" viewBox="0 0 48 10" fill="none" stroke="#626262" stroke-width="1"><path d="M1 0.5V9.5M7.5 0.8L2.5 5L7.5 9.2Z"/><path d="M18 0.8L13 5L18 9.2ZM19.5 0.8H22V9.2H19.5Z"/><path d="M27 0.8L32 5L27 9.2Z"/><path d="M37 0.8H39.5V9.2H37ZM41 0.8L46 5L41 9.2Z"/></svg><div class="abs lbl" style="left:159px;top:1.6px;color:#f2f2f2;font-size:10.3px;">Perspective projection</div></div>
</body></html>
